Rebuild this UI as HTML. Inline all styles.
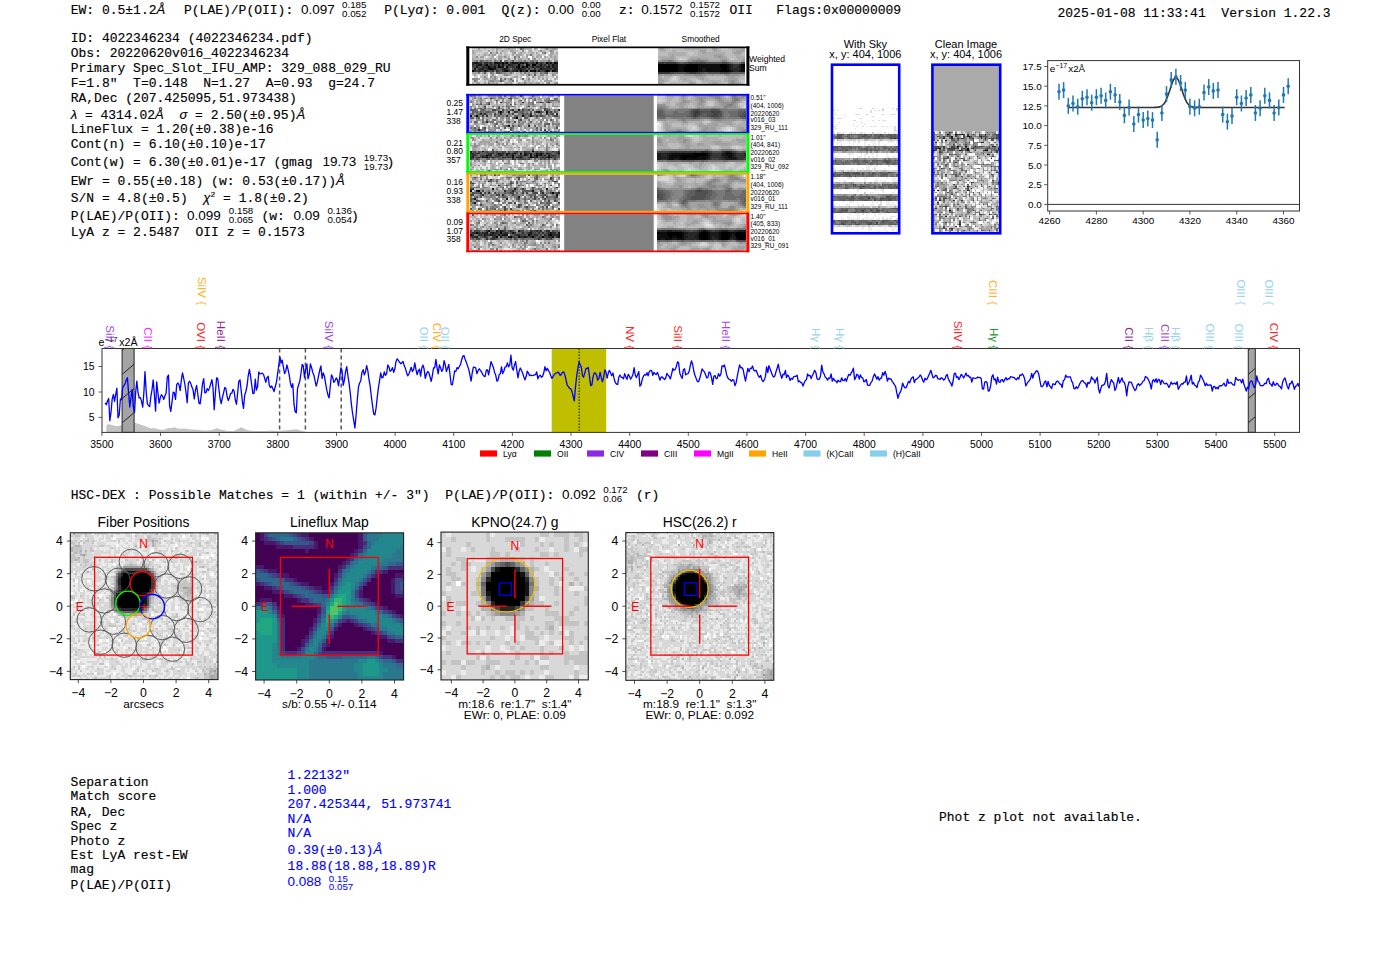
<!DOCTYPE html>
<html><head><meta charset="utf-8"><style>
body{margin:0;background:#fff;width:1400px;height:953px;overflow:hidden}
svg{display:block}
text{white-space:pre}
.m{font-family:"Liberation Mono",monospace;font-size:13px;stroke:#000;stroke-width:0.15px}
.s{font-family:"Liberation Sans",sans-serif;font-size:10.4px}
.i{font-family:"Liberation Sans",sans-serif;font-style:italic}
.sm{font-family:"Liberation Sans",sans-serif;font-size:8px}
</style></head><body>
<svg width="1400" height="953" viewBox="0 0 1400 953">
<text x="70.7" y="13.9" class="m">EW: 0.5±1.2<tspan class="i">Å</tspan></text>
<text x="184.0" y="13.9" class="m">P(LAE)/P(OII): </text>
<text x="301.0" y="13.9" class="s" style="font-size:13.5px;">0.097</text>
<text x="342.0" y="8.0" class="sm" style="font-size:9.8px;">0.185</text>
<text x="342.0" y="17.3" class="sm" style="font-size:9.8px;">0.052</text>
<text x="384.2" y="13.9" class="m">P(Ly<tspan class="i">α</tspan>): 0.001</text>
<text x="501.5" y="13.9" class="m">Q(z): </text>
<text x="547.8" y="13.9" class="s" style="font-size:13.5px;">0.00</text>
<text x="581.7" y="8.0" class="sm" style="font-size:9.8px;">0.00</text>
<text x="581.7" y="17.3" class="sm" style="font-size:9.8px;">0.00</text>
<text x="619.0" y="13.9" class="m">z: </text>
<text x="641.3" y="13.9" class="s" style="font-size:13.5px;">0.1572</text>
<text x="690.1" y="8.0" class="sm" style="font-size:9.8px;">0.1572</text>
<text x="690.1" y="17.3" class="sm" style="font-size:9.8px;">0.1572</text>
<text x="729.5" y="13.9" class="m">OII</text>
<text x="776.3" y="13.9" class="m">Flags:0x00000009</text>
<text x="1057.5" y="16.7" class="m">2025-01-08 11:33:41  Version 1.22.3</text>
<text x="70.7" y="42.1" class="m">ID: 4022346234 (4022346234.pdf)</text>
<text x="70.7" y="57.1" class="m">Obs: 20220620v016_4022346234</text>
<text x="70.7" y="72.1" class="m">Primary Spec_Slot_IFU_AMP: 329_088_029_RU</text>
<text x="70.7" y="87.1" class="m">F=1.8"  T=0.148  N=1.27  A=0.93  g=24.7</text>
<text x="70.7" y="102.1" class="m">RA,Dec (207.425095,51.973438)</text>
<text x="70.7" y="118.5" class="m"><tspan class="i">λ</tspan> = 4314.02<tspan class="i">Å</tspan>  <tspan class="i">σ</tspan> = 2.50(±0.95)<tspan class="i">Å</tspan></text>
<text x="70.7" y="133.2" class="m">LineFlux = 1.20(±0.38)e-16</text>
<text x="70.7" y="148.4" class="m">Cont(n) = 6.10(±0.10)e-17</text>
<text x="70.7" y="166.4" class="m">Cont(w) = 6.30(±0.01)e-17 (gmag </text>
<text x="70.7" y="184.8" class="m">EWr = 0.55(±0.18) (w: 0.53(±0.17))<tspan class="i">Å</tspan></text>
<text x="70.7" y="202.3" class="m">S/N = 4.8(±0.5)  <tspan class="i">χ</tspan><tspan font-size="8" dy="-5">2</tspan><tspan dy="5"> = 1.8(±0.2)</tspan></text>
<text x="70.7" y="219.6" class="m">P(LAE)/P(OII): </text>
<text x="70.7" y="236.1" class="m">LyA z = 2.5487  OII z = 0.1573</text>
<text x="322.5" y="166.4" class="s" style="font-size:13.5px;">19.73</text>
<text x="363.7" y="160.5" class="sm" style="font-size:9.8px;">19.73</text>
<text x="363.7" y="169.8" class="sm" style="font-size:9.8px;">19.73</text>
<text x="386.5" y="166.4" class="m">)</text>
<text x="187.0" y="219.6" class="s" style="font-size:13.5px;">0.099</text>
<text x="228.8" y="213.7" class="sm" style="font-size:9.8px;">0.158</text>
<text x="228.8" y="223.0" class="sm" style="font-size:9.8px;">0.065</text>
<text x="261.5" y="219.6" class="m">(w: </text>
<text x="293.5" y="219.6" class="s" style="font-size:13.5px;">0.09</text>
<text x="327.4" y="213.7" class="sm" style="font-size:9.8px;">0.136</text>
<text x="327.4" y="223.0" class="sm" style="font-size:9.8px;">0.054</text>
<text x="351.0" y="219.6" class="m">)</text>
<text x="70.7" y="498.9" class="m">HSC-DEX : Possible Matches = 1 (within +/- 3")  P(LAE)/P(OII): </text>
<text x="562.0" y="498.9" class="s" style="font-size:13.5px;">0.092</text>
<text x="603.2" y="493.0" class="sm" style="font-size:9.8px;">0.172</text>
<text x="603.2" y="502.3" class="sm" style="font-size:9.8px;">0.06</text>
<text x="636.0" y="498.9" class="m">(r)</text>
<text x="70.6" y="786.2" class="m">Separation</text>
<text x="70.6" y="800.4" class="m">Match score</text>
<text x="70.6" y="815.8" class="m">RA, Dec</text>
<text x="70.6" y="829.8" class="m">Spec z</text>
<text x="70.6" y="844.5" class="m">Photo z</text>
<text x="70.6" y="858.8" class="m">Est LyA rest-EW</text>
<text x="70.6" y="873.4" class="m">mag</text>
<text x="70.6" y="888.6" class="m">P(LAE)/P(OII)</text>
<text x="287.6" y="779.1" class="m" style="fill:#0000ff;stroke:#0000ff;">1.22132"</text>
<text x="287.6" y="793.5" class="m" style="fill:#0000ff;stroke:#0000ff;">1.000</text>
<text x="287.6" y="808.2" class="m" style="fill:#0000ff;stroke:#0000ff;">207.425344, 51.973741</text>
<text x="287.6" y="822.5" class="m" style="fill:#0000ff;stroke:#0000ff;">N/A</text>
<text x="287.6" y="837.4" class="m" style="fill:#0000ff;stroke:#0000ff;">N/A</text>
<text x="287.6" y="854.0" class="m" style="fill:#0000ff;stroke:#0000ff;">0.39(±0.13)<tspan class="i">Å</tspan></text>
<text x="287.6" y="869.9" class="m" style="fill:#0000ff;stroke:#0000ff;">18.88(18.88,18.89)R</text>
<text x="287.6" y="886.4" class="s" style="font-size:13.5px;fill:#0000ff;">0.088</text>
<text x="328.8" y="881.6" class="sm" style="font-size:9.8px;fill:#0000ff;">0.15</text>
<text x="328.8" y="890.0" class="sm" style="font-size:9.8px;fill:#0000ff;">0.057</text>
<text x="939.0" y="821.0" class="m">Phot z plot not available.</text>
<text x="515.2" y="42.0" class="s" text-anchor="middle" style="font-size:8.4px;">2D Spec</text>
<text x="608.9" y="42.0" class="s" text-anchor="middle" style="font-size:8.4px;">Pixel Flat</text>
<text x="700.7" y="42.0" class="s" text-anchor="middle" style="font-size:8.4px;">Smoothed</text>
<path d="M502.0 63.0h2.4M506.0 63.0h2.4M536.0 63.0h2.4M546.0 63.0h2.4M554.0 63.0h2.4M486.0 65.0h2.4M518.0 65.0h2.4M526.0 65.0h2.4M532.0 65.0h4.3M488.0 67.0h2.4M498.0 67.0h2.4M506.0 67.0h2.4M518.0 67.0h2.4M522.0 67.0h2.4M526.0 67.0h2.4M490.0 69.0h2.4M472.0 71.0h2.4M506.0 71.0h2.4M520.0 71.0h2.4M526.0 71.0h2.4M530.0 71.0h2.4M534.0 71.0h2.4M546.0 71.0h2.4M552.0 71.0h2.4" stroke="#000000" stroke-width="2.35" shape-rendering="crispEdges"/>
<path d="M474.0 63.0h4.3M494.0 63.0h6.3M512.0 63.0h6.3M520.0 63.0h4.3M526.0 63.0h2.4M550.0 63.0h2.4M556.0 63.0h2.0M478.0 65.0h4.3M498.0 65.0h2.4M502.0 65.0h2.4M508.0 65.0h2.4M528.0 65.0h2.4M540.0 65.0h2.4M552.0 65.0h2.4M476.0 67.0h2.4M494.0 67.0h2.4M500.0 67.0h4.3M516.0 67.0h2.4M532.0 67.0h2.4M548.0 67.0h2.4M552.0 67.0h2.4M474.0 69.0h2.4M482.0 69.0h2.4M488.0 69.0h2.4M492.0 69.0h4.3M504.0 69.0h2.4M518.0 69.0h4.3M540.0 69.0h2.4M554.0 69.0h2.4M484.0 71.0h2.4M504.0 71.0h2.4M516.0 71.0h2.4M532.0 71.0h2.4M538.0 71.0h2.4M548.0 71.0h2.4M554.0 71.0h2.4" stroke="#171717" stroke-width="2.35" shape-rendering="crispEdges"/>
<path d="M472.0 63.0h2.4M478.0 63.0h4.3M484.0 63.0h4.3M490.0 63.0h2.4M500.0 63.0h2.4M504.0 63.0h2.4M510.0 63.0h2.4M518.0 63.0h2.4M524.0 63.0h2.4M532.0 63.0h2.4M540.0 63.0h2.4M548.0 63.0h2.4M472.0 65.0h2.4M476.0 65.0h2.4M484.0 65.0h2.4M490.0 65.0h2.4M494.0 65.0h2.4M510.0 65.0h4.3M544.0 65.0h2.4M548.0 65.0h2.4M554.0 65.0h4.0M482.0 67.0h6.3M490.0 67.0h4.3M512.0 67.0h2.4M524.0 67.0h2.4M536.0 67.0h8.3M546.0 67.0h2.4M554.0 67.0h4.0M478.0 69.0h4.3M486.0 69.0h2.4M502.0 69.0h2.4M506.0 69.0h2.4M514.0 69.0h4.3M522.0 69.0h4.3M528.0 69.0h2.4M534.0 69.0h2.4M542.0 69.0h10.3M556.0 69.0h2.0M474.0 71.0h2.4M478.0 71.0h4.3M486.0 71.0h2.4M492.0 71.0h2.4M496.0 71.0h2.4M502.0 71.0h2.4M508.0 71.0h2.4M512.0 71.0h4.3M522.0 71.0h4.3M544.0 71.0h2.4M556.0 71.0h2.0" stroke="#2e2e2e" stroke-width="2.35" shape-rendering="crispEdges"/>
<path d="M500.0 61.0h2.4M488.0 63.0h2.4M528.0 63.0h4.3M534.0 63.0h2.4M538.0 63.0h2.4M542.0 63.0h2.4M552.0 63.0h2.4M474.0 65.0h2.4M482.0 65.0h2.4M488.0 65.0h2.4M492.0 65.0h2.4M496.0 65.0h2.4M500.0 65.0h2.4M504.0 65.0h4.3M514.0 65.0h4.3M520.0 65.0h4.3M536.0 65.0h4.3M542.0 65.0h2.4M550.0 65.0h2.4M472.0 67.0h4.3M478.0 67.0h4.3M496.0 67.0h2.4M508.0 67.0h4.3M514.0 67.0h2.4M520.0 67.0h2.4M528.0 67.0h4.3M534.0 67.0h2.4M544.0 67.0h2.4M550.0 67.0h2.4M484.0 69.0h2.4M496.0 69.0h2.4M500.0 69.0h2.4M508.0 69.0h2.4M512.0 69.0h2.4M538.0 69.0h2.4M552.0 69.0h2.4M476.0 71.0h2.4M482.0 71.0h2.4M488.0 71.0h4.3M498.0 71.0h2.4M510.0 71.0h2.4M518.0 71.0h2.4M536.0 71.0h2.4M540.0 71.0h4.3" stroke="#464646" stroke-width="2.35" shape-rendering="crispEdges"/>
<path d="M480.0 61.0h2.4M512.0 61.0h2.4M482.0 63.0h2.4M492.0 63.0h2.4M508.0 63.0h2.4M544.0 63.0h2.4M530.0 65.0h2.4M546.0 65.0h2.4M472.0 69.0h2.4M476.0 69.0h2.4M498.0 69.0h2.4M526.0 69.0h2.4M530.0 69.0h4.3M536.0 69.0h2.4M500.0 71.0h2.4M550.0 71.0h2.4M484.0 73.0h2.4M496.0 73.0h4.3M546.0 73.0h2.4M534.0 75.0h2.4M500.0 81.0h2.4" stroke="#5d5d5d" stroke-width="2.35" shape-rendering="crispEdges"/>
<path d="M520.0 49.0h2.4M490.0 53.0h2.4M544.0 53.0h2.4M530.0 55.0h2.4M514.0 57.0h2.4M476.0 61.0h2.4M482.0 61.0h2.4M486.0 61.0h2.4M494.0 61.0h2.4M504.0 61.0h4.3M524.0 61.0h2.4M530.0 61.0h4.3M536.0 61.0h2.4M548.0 61.0h2.4M524.0 65.0h2.4M504.0 67.0h2.4M510.0 69.0h2.4M494.0 71.0h2.4M528.0 71.0h2.4M478.0 73.0h2.4M490.0 73.0h2.4M500.0 73.0h2.4M510.0 73.0h2.4M524.0 73.0h2.4M534.0 73.0h2.4M540.0 73.0h2.4M544.0 73.0h2.4M528.0 75.0h2.4M500.0 79.0h2.4M504.0 79.0h2.4M510.0 79.0h2.4M522.0 79.0h2.4M474.0 81.0h2.4M512.0 81.0h2.4" stroke="#747474" stroke-width="2.35" shape-rendering="crispEdges"/>
<path d="M522.0 49.0h2.4M546.0 49.0h2.4M522.0 51.0h2.4M540.0 51.0h2.4M550.0 51.0h2.4M496.0 53.0h2.4M514.0 53.0h2.4M542.0 53.0h2.4M476.0 57.0h2.4M504.0 57.0h2.4M518.0 57.0h2.4M508.0 59.0h2.4M514.0 59.0h2.4M528.0 59.0h2.4M534.0 59.0h2.4M474.0 61.0h2.4M484.0 61.0h2.4M488.0 61.0h4.3M496.0 61.0h2.4M510.0 61.0h2.4M518.0 61.0h4.3M534.0 61.0h2.4M554.0 61.0h4.0M492.0 73.0h2.4M502.0 73.0h4.3M520.0 73.0h2.4M528.0 73.0h2.4M542.0 73.0h2.4M556.0 73.0h2.0M492.0 75.0h2.4M504.0 75.0h4.3M540.0 75.0h4.3M552.0 75.0h2.4M484.0 77.0h2.4M490.0 77.0h2.4M494.0 77.0h2.4M532.0 77.0h2.4M472.0 79.0h6.3M494.0 79.0h2.4M528.0 79.0h2.4M490.0 81.0h4.3M502.0 81.0h2.4M488.0 83.0h2.4M524.0 83.0h2.4M548.0 83.0h2.4M556.0 83.0h2.0" stroke="#8b8b8b" stroke-width="2.35" shape-rendering="crispEdges"/>
<path d="M478.0 49.0h2.4M496.0 49.0h2.4M508.0 49.0h2.4M534.0 49.0h2.4M552.0 49.0h4.3M472.0 51.0h2.4M488.0 51.0h2.4M496.0 51.0h2.4M502.0 51.0h2.4M510.0 51.0h4.3M530.0 51.0h2.4M552.0 51.0h2.4M472.0 53.0h2.4M500.0 53.0h2.4M512.0 53.0h2.4M520.0 53.0h2.4M532.0 53.0h2.4M536.0 53.0h2.4M550.0 53.0h4.3M556.0 53.0h2.0M484.0 55.0h2.4M488.0 55.0h2.4M492.0 55.0h4.3M512.0 55.0h2.4M516.0 55.0h6.3M526.0 55.0h2.4M538.0 55.0h2.4M550.0 55.0h2.4M480.0 57.0h4.3M492.0 57.0h2.4M498.0 57.0h4.3M526.0 57.0h2.4M532.0 57.0h2.4M536.0 57.0h2.4M540.0 57.0h2.4M544.0 57.0h2.4M550.0 57.0h2.4M554.0 57.0h2.4M472.0 59.0h2.4M490.0 59.0h2.4M494.0 59.0h2.4M498.0 59.0h4.3M518.0 59.0h4.3M532.0 59.0h2.4M548.0 59.0h2.4M554.0 59.0h2.4M472.0 61.0h2.4M478.0 61.0h2.4M498.0 61.0h2.4M508.0 61.0h2.4M514.0 61.0h4.3M522.0 61.0h2.4M526.0 61.0h4.3M540.0 61.0h8.3M550.0 61.0h2.4M472.0 73.0h6.3M482.0 73.0h2.4M506.0 73.0h4.3M512.0 73.0h2.4M526.0 73.0h2.4M532.0 73.0h2.4M536.0 73.0h2.4M552.0 73.0h4.3M474.0 75.0h2.4M508.0 75.0h2.4M522.0 75.0h2.4M526.0 75.0h2.4M530.0 75.0h2.4M546.0 75.0h2.4M554.0 75.0h2.4M514.0 77.0h4.3M538.0 77.0h2.4M556.0 77.0h2.0M478.0 79.0h2.4M484.0 79.0h4.3M492.0 79.0h2.4M508.0 79.0h2.4M538.0 79.0h2.4M542.0 79.0h2.4M546.0 79.0h2.4M554.0 79.0h2.4M476.0 81.0h2.4M488.0 81.0h2.4M494.0 81.0h6.3M508.0 81.0h4.3M516.0 81.0h2.4M524.0 81.0h2.4M528.0 81.0h2.4M544.0 81.0h8.3M476.0 83.0h4.3M484.0 83.0h2.4M492.0 83.0h2.4M496.0 83.0h2.4M506.0 83.0h2.4M510.0 83.0h2.4M518.0 83.0h2.4M530.0 83.0h2.4M536.0 83.0h4.3M546.0 83.0h2.4M554.0 83.0h2.4" stroke="#a2a2a2" stroke-width="2.35" shape-rendering="crispEdges"/>
<path d="M484.0 49.0h2.4M492.0 49.0h2.4M498.0 49.0h4.3M504.0 49.0h4.3M510.0 49.0h6.3M524.0 49.0h8.3M536.0 49.0h2.4M544.0 49.0h2.4M548.0 49.0h4.3M556.0 49.0h2.0M474.0 51.0h8.3M492.0 51.0h2.4M500.0 51.0h2.4M504.0 51.0h4.3M514.0 51.0h4.3M528.0 51.0h2.4M538.0 51.0h2.4M542.0 51.0h4.3M548.0 51.0h2.4M474.0 53.0h2.4M484.0 53.0h4.3M492.0 53.0h4.3M504.0 53.0h2.4M518.0 53.0h2.4M522.0 53.0h4.3M528.0 53.0h4.3M472.0 55.0h4.3M478.0 55.0h2.4M482.0 55.0h2.4M486.0 55.0h2.4M490.0 55.0h2.4M498.0 55.0h4.3M504.0 55.0h4.3M522.0 55.0h2.4M528.0 55.0h2.4M532.0 55.0h2.4M536.0 55.0h2.4M540.0 55.0h2.4M548.0 55.0h2.4M552.0 55.0h6.0M472.0 57.0h4.3M490.0 57.0h2.4M502.0 57.0h2.4M506.0 57.0h4.3M516.0 57.0h2.4M522.0 57.0h2.4M538.0 57.0h2.4M546.0 57.0h2.4M552.0 57.0h2.4M556.0 57.0h2.0M474.0 59.0h10.3M486.0 59.0h4.3M492.0 59.0h2.4M506.0 59.0h2.4M522.0 59.0h6.3M538.0 59.0h2.4M542.0 59.0h4.3M552.0 59.0h2.4M556.0 59.0h2.0M492.0 61.0h2.4M538.0 61.0h2.4M480.0 73.0h2.4M486.0 73.0h2.4M494.0 73.0h2.4M516.0 73.0h4.3M522.0 73.0h2.4M530.0 73.0h2.4M538.0 73.0h2.4M548.0 73.0h4.3M482.0 75.0h6.3M490.0 75.0h2.4M502.0 75.0h2.4M510.0 75.0h2.4M516.0 75.0h2.4M520.0 75.0h2.4M532.0 75.0h2.4M536.0 75.0h4.3M544.0 75.0h2.4M480.0 77.0h4.3M486.0 77.0h2.4M492.0 77.0h2.4M496.0 77.0h2.4M500.0 77.0h2.4M512.0 77.0h2.4M520.0 77.0h2.4M526.0 77.0h4.3M534.0 77.0h2.4M540.0 77.0h4.3M546.0 77.0h2.4M552.0 77.0h2.4M482.0 79.0h2.4M488.0 79.0h4.3M496.0 79.0h2.4M502.0 79.0h2.4M506.0 79.0h2.4M512.0 79.0h2.4M516.0 79.0h2.4M520.0 79.0h2.4M526.0 79.0h2.4M534.0 79.0h2.4M556.0 79.0h2.0M484.0 81.0h2.4M504.0 81.0h2.4M526.0 81.0h2.4M532.0 81.0h2.4M540.0 81.0h2.4M472.0 83.0h2.4M490.0 83.0h2.4M494.0 83.0h2.4M504.0 83.0h2.4M508.0 83.0h2.4M520.0 83.0h4.3M526.0 83.0h4.3M532.0 83.0h4.3M542.0 83.0h2.4" stroke="#b9b9b9" stroke-width="2.35" shape-rendering="crispEdges"/>
<path d="M472.0 49.0h6.3M480.0 49.0h4.3M486.0 49.0h6.3M494.0 49.0h2.4M502.0 49.0h2.4M518.0 49.0h2.4M540.0 49.0h4.3M482.0 51.0h6.3M490.0 51.0h2.4M494.0 51.0h2.4M498.0 51.0h2.4M508.0 51.0h2.4M518.0 51.0h4.3M524.0 51.0h2.4M532.0 51.0h6.3M546.0 51.0h2.4M554.0 51.0h4.0M476.0 53.0h8.3M498.0 53.0h2.4M502.0 53.0h2.4M506.0 53.0h2.4M510.0 53.0h2.4M526.0 53.0h2.4M534.0 53.0h2.4M538.0 53.0h2.4M546.0 53.0h2.4M554.0 53.0h2.4M476.0 55.0h2.4M480.0 55.0h2.4M502.0 55.0h2.4M508.0 55.0h4.3M514.0 55.0h2.4M534.0 55.0h2.4M542.0 55.0h4.3M478.0 57.0h2.4M484.0 57.0h2.4M488.0 57.0h2.4M496.0 57.0h2.4M512.0 57.0h2.4M524.0 57.0h2.4M534.0 57.0h2.4M548.0 57.0h2.4M484.0 59.0h2.4M496.0 59.0h2.4M502.0 59.0h4.3M510.0 59.0h4.3M516.0 59.0h2.4M536.0 59.0h2.4M540.0 59.0h2.4M546.0 59.0h2.4M550.0 59.0h2.4M552.0 61.0h2.4M488.0 73.0h2.4M514.0 73.0h2.4M472.0 75.0h2.4M476.0 75.0h2.4M480.0 75.0h2.4M494.0 75.0h2.4M498.0 75.0h4.3M512.0 75.0h4.3M518.0 75.0h2.4M524.0 75.0h2.4M550.0 75.0h2.4M556.0 75.0h2.0M474.0 77.0h4.3M498.0 77.0h2.4M502.0 77.0h6.3M510.0 77.0h2.4M518.0 77.0h2.4M536.0 77.0h2.4M544.0 77.0h2.4M548.0 77.0h4.3M524.0 79.0h2.4M530.0 79.0h4.3M536.0 79.0h2.4M540.0 79.0h2.4M544.0 79.0h2.4M550.0 79.0h2.4M472.0 81.0h2.4M480.0 81.0h4.3M486.0 81.0h2.4M506.0 81.0h2.4M522.0 81.0h2.4M530.0 81.0h2.4M534.0 81.0h4.3M552.0 81.0h4.3M474.0 83.0h2.4M480.0 83.0h4.3M486.0 83.0h2.4M498.0 83.0h4.3M512.0 83.0h2.4M516.0 83.0h2.4M540.0 83.0h2.4M550.0 83.0h4.3" stroke="#d1d1d1" stroke-width="2.35" shape-rendering="crispEdges"/>
<path d="M516.0 49.0h2.4M526.0 51.0h2.4M488.0 53.0h2.4M508.0 53.0h2.4M516.0 53.0h2.4M540.0 53.0h2.4M496.0 55.0h2.4M524.0 55.0h2.4M486.0 57.0h2.4M510.0 57.0h2.4M520.0 57.0h2.4M502.0 61.0h2.4M478.0 75.0h2.4M548.0 75.0h2.4M508.0 77.0h2.4M530.0 77.0h2.4M554.0 77.0h2.4M480.0 79.0h2.4M498.0 79.0h2.4M518.0 79.0h2.4M548.0 79.0h2.4M552.0 79.0h2.4M478.0 81.0h2.4M518.0 81.0h4.3M538.0 81.0h2.4M542.0 81.0h2.4M556.0 81.0h2.0M502.0 83.0h2.4M514.0 83.0h2.4M544.0 83.0h2.4" stroke="#e8e8e8" stroke-width="2.35" shape-rendering="crispEdges"/>
<path d="M532.0 49.0h2.4M538.0 49.0h2.4M548.0 53.0h2.4M546.0 55.0h2.4M494.0 57.0h2.4M528.0 57.0h4.3M542.0 57.0h2.4M530.0 59.0h2.4M488.0 75.0h2.4M496.0 75.0h2.4M472.0 77.0h2.4M478.0 77.0h2.4M488.0 77.0h2.4M522.0 77.0h4.3M514.0 79.0h2.4M514.0 81.0h2.4" stroke="#ffffff" stroke-width="2.35" shape-rendering="crispEdges"/>
<path d="M658.0 65.0h20.1M685.7 65.0h12.2M719.3 65.0h8.3M743.0 65.0h2.0M658.0 67.0h20.1M683.7 67.0h14.2M719.3 67.0h8.3M743.0 67.0h2.0M658.0 69.0h20.1M683.7 69.0h14.2M721.3 69.0h6.3M658.0 71.0h20.1M683.7 71.0h14.2M719.3 71.0h10.2" stroke="#000000" stroke-width="2.35" shape-rendering="crispEdges"/>
<path d="M677.8 65.0h8.3M697.5 65.0h22.1M727.2 65.0h2.3M741.0 65.0h2.3M677.8 67.0h6.3M697.5 67.0h22.1M727.2 67.0h2.3M741.0 67.0h2.3M677.8 69.0h6.3M697.5 69.0h4.3M705.5 69.0h16.2M727.2 69.0h2.3M741.0 69.0h4.0M677.8 71.0h6.3M697.5 71.0h4.3M705.5 71.0h14.2M729.2 71.0h2.3M741.0 71.0h4.0" stroke="#0d0d0d" stroke-width="2.35" shape-rendering="crispEdges"/>
<path d="M729.2 65.0h2.3M739.1 65.0h2.3M729.2 67.0h2.3M739.1 67.0h2.3M701.5 69.0h4.3M729.2 69.0h2.3M739.1 69.0h2.3M701.5 71.0h4.3M731.2 71.0h2.3M739.1 71.0h2.3" stroke="#1b1b1b" stroke-width="2.35" shape-rendering="crispEdges"/>
<path d="M731.2 65.0h2.3M731.2 67.0h2.3M737.1 67.0h2.3M731.2 69.0h8.3M733.1 71.0h6.3" stroke="#282828" stroke-width="2.35" shape-rendering="crispEdges"/>
<path d="M658.0 63.0h6.3M665.9 63.0h10.2M733.1 65.0h6.3M733.1 67.0h4.3M658.0 73.0h12.2M689.6 73.0h6.3M725.2 73.0h2.3" stroke="#363636" stroke-width="2.35" shape-rendering="crispEdges"/>
<path d="M663.9 63.0h2.3M675.8 63.0h2.3M687.7 63.0h18.1M721.3 63.0h6.3M743.0 63.0h2.0M669.9 73.0h4.3M685.7 73.0h4.3M695.6 73.0h4.3M719.3 73.0h6.3M727.2 73.0h2.3" stroke="#434343" stroke-width="2.35" shape-rendering="crispEdges"/>
<path d="M677.8 63.0h2.3M683.7 63.0h4.3M705.5 63.0h16.2M727.2 63.0h2.3M741.0 63.0h2.3M673.8 73.0h12.2M699.5 73.0h4.3M707.4 73.0h12.2M729.2 73.0h2.3" stroke="#515151" stroke-width="2.35" shape-rendering="crispEdges"/>
<path d="M679.8 63.0h4.3M729.2 63.0h2.3M703.5 73.0h4.3M731.2 73.0h13.8" stroke="#5e5e5e" stroke-width="2.35" shape-rendering="crispEdges"/>
<path d="M731.2 63.0h2.3M739.1 63.0h2.3" stroke="#6b6b6b" stroke-width="2.35" shape-rendering="crispEdges"/>
<path d="M667.9 61.0h4.3M695.6 61.0h8.3M733.1 63.0h6.3" stroke="#797979" stroke-width="2.35" shape-rendering="crispEdges"/>
<path d="M662.0 61.0h6.3M671.8 61.0h2.3M691.6 61.0h4.3M703.5 61.0h4.3M721.3 61.0h6.3M693.6 75.0h8.3M725.2 75.0h4.3M731.2 83.0h2.3" stroke="#868686" stroke-width="2.35" shape-rendering="crispEdges"/>
<path d="M713.4 49.0h2.3M717.3 57.0h4.3M697.5 59.0h2.3M658.0 61.0h4.3M673.8 61.0h2.3M687.7 61.0h4.3M707.4 61.0h2.3M719.3 61.0h2.3M743.0 61.0h2.0M658.0 75.0h4.3M663.9 75.0h8.3M683.7 75.0h10.2M701.5 75.0h4.3M711.4 75.0h2.3M723.2 75.0h2.3M729.2 75.0h10.2M729.2 81.0h6.3M729.2 83.0h2.3M733.1 83.0h2.3" stroke="#949494" stroke-width="2.35" shape-rendering="crispEdges"/>
<path d="M660.0 49.0h4.3M711.4 49.0h2.3M715.3 49.0h2.3M741.0 49.0h4.0M699.5 51.0h6.3M713.4 51.0h4.3M735.1 51.0h9.9M701.5 53.0h4.3M733.1 53.0h8.3M671.8 55.0h2.3M713.4 55.0h10.2M669.9 57.0h4.3M713.4 57.0h4.3M721.3 57.0h4.3M662.0 59.0h12.2M689.6 59.0h8.3M699.5 59.0h10.2M719.3 59.0h8.3M743.0 59.0h2.0M675.8 61.0h2.3M685.7 61.0h2.3M709.4 61.0h10.2M727.2 61.0h2.3M741.0 61.0h2.3M662.0 75.0h2.3M671.8 75.0h12.2M705.5 75.0h6.3M713.4 75.0h10.2M739.1 75.0h5.9M658.0 77.0h2.3M695.6 77.0h8.3M727.2 77.0h8.3M658.0 79.0h4.3M683.7 79.0h2.3M699.5 79.0h4.3M727.2 79.0h10.2M658.0 81.0h6.3M727.2 81.0h2.3M735.1 81.0h2.3M658.0 83.0h4.3M689.6 83.0h4.3M711.4 83.0h6.3M727.2 83.0h2.3M735.1 83.0h4.3" stroke="#a1a1a1" stroke-width="2.35" shape-rendering="crispEdges"/>
<path d="M658.0 49.0h2.3M663.9 49.0h2.3M683.7 49.0h24.1M717.3 49.0h2.3M731.2 49.0h10.2M660.0 51.0h6.3M671.8 51.0h4.3M697.5 51.0h2.3M705.5 51.0h2.3M711.4 51.0h2.3M717.3 51.0h4.3M731.2 51.0h4.3M667.9 53.0h18.1M697.5 53.0h4.3M705.5 53.0h20.1M731.2 53.0h2.3M741.0 53.0h2.3M667.9 55.0h4.3M673.8 55.0h12.2M697.5 55.0h16.2M723.2 55.0h2.3M733.1 55.0h8.3M658.0 57.0h12.2M673.8 57.0h2.3M689.6 57.0h24.1M725.2 57.0h2.3M735.1 57.0h9.9M660.0 59.0h2.3M673.8 59.0h2.3M687.7 59.0h2.3M709.4 59.0h10.2M727.2 59.0h2.3M737.1 59.0h6.3M677.8 61.0h8.3M729.2 61.0h12.2M660.0 77.0h2.3M663.9 77.0h6.3M679.8 77.0h16.2M703.5 77.0h4.3M725.2 77.0h2.3M735.1 77.0h6.3M662.0 79.0h6.3M679.8 79.0h4.3M685.7 79.0h4.3M697.5 79.0h2.3M703.5 79.0h6.3M723.2 79.0h4.3M737.1 79.0h2.3M663.9 81.0h4.3M681.7 81.0h10.2M701.5 81.0h20.1M723.2 81.0h4.3M737.1 81.0h2.3M662.0 83.0h2.3M687.7 83.0h2.3M693.6 83.0h2.3M707.4 83.0h4.3M717.3 83.0h4.3M739.1 83.0h2.3" stroke="#aeaeae" stroke-width="2.35" shape-rendering="crispEdges"/>
<path d="M665.9 49.0h4.3M671.8 49.0h12.2M707.4 49.0h4.3M719.3 49.0h2.3M727.2 49.0h4.3M658.0 51.0h2.3M665.9 51.0h6.3M675.8 51.0h22.1M707.4 51.0h4.3M721.3 51.0h10.2M658.0 53.0h10.2M685.7 53.0h2.3M693.6 53.0h4.3M725.2 53.0h6.3M743.0 53.0h2.0M658.0 55.0h10.2M685.7 55.0h4.3M691.6 55.0h6.3M725.2 55.0h8.3M741.0 55.0h4.0M675.8 57.0h14.2M727.2 57.0h8.3M658.0 59.0h2.3M675.8 59.0h2.3M685.7 59.0h2.3M729.2 59.0h2.3M733.1 59.0h4.3M662.0 77.0h2.3M669.9 77.0h2.3M677.8 77.0h2.3M707.4 77.0h18.1M741.0 77.0h4.0M667.9 79.0h2.3M677.8 79.0h2.3M689.6 79.0h8.3M709.4 79.0h14.2M739.1 79.0h5.9M667.9 81.0h2.3M677.8 81.0h4.3M691.6 81.0h4.3M699.5 81.0h2.3M721.3 81.0h2.3M739.1 81.0h2.3M663.9 83.0h2.3M669.9 83.0h18.1M701.5 83.0h6.3M721.3 83.0h6.3M741.0 83.0h2.3" stroke="#bcbcbc" stroke-width="2.35" shape-rendering="crispEdges"/>
<path d="M669.9 49.0h2.3M721.3 49.0h6.3M687.7 53.0h6.3M689.6 55.0h2.3M677.8 59.0h2.3M681.7 59.0h4.3M731.2 59.0h2.3M671.8 77.0h2.3M675.8 77.0h2.3M669.9 79.0h2.3M675.8 79.0h2.3M669.9 81.0h8.3M695.6 81.0h4.3M741.0 81.0h4.0M665.9 83.0h4.3M695.6 83.0h6.3M743.0 83.0h2.0" stroke="#c9c9c9" stroke-width="2.35" shape-rendering="crispEdges"/>
<path d="M679.8 59.0h2.3M673.8 77.0h2.3M671.8 79.0h4.3" stroke="#d7d7d7" stroke-width="2.35" shape-rendering="crispEdges"/>
<rect x="466.3" y="46.5" width="283.1" height="1.7" fill="#000"/>
<rect x="466.3" y="83.9" width="283.1" height="1.7" fill="#000"/>
<rect x="466.3" y="46.5" width="3.0" height="39.1" fill="#000"/>
<rect x="746.4" y="46.5" width="3.0" height="39.1" fill="#000"/>
<text x="749.0" y="61.5" class="s" style="font-size:8.6px;">Weighted</text>
<text x="749.0" y="70.5" class="s" style="font-size:8.6px;">Sum</text>
<path d="M545.9 112.3h2.4M475.6 116.2h2.4M521.8 116.2h2.4M515.8 118.2h2.4" stroke="#000000" stroke-width="2.32" shape-rendering="crispEdges"/>
<path d="M547.9 102.4h2.4M517.8 110.3h2.4M499.7 112.3h2.4M507.8 112.3h2.4M537.9 112.3h2.4M469.6 116.2h2.4M529.9 116.2h2.4M507.8 126.1h2.4" stroke="#171717" stroke-width="2.32" shape-rendering="crispEdges"/>
<path d="M499.7 102.4h2.4M521.8 102.4h2.4M539.9 102.4h2.4M511.8 110.3h2.4M558.0 110.3h2.0M497.7 112.3h2.4M513.8 112.3h2.4M535.9 112.3h2.4M479.6 114.2h2.4M483.7 114.2h2.4M499.7 114.2h2.4M529.9 114.2h2.4M545.9 114.2h2.4M556.0 114.2h2.4M485.7 116.2h2.4M505.8 116.2h2.4M485.7 122.1h2.4M527.9 126.1h2.4M477.6 130.0h2.4" stroke="#2e2e2e" stroke-width="2.32" shape-rendering="crispEdges"/>
<path d="M519.8 96.5h2.4M489.7 98.5h2.4M509.8 98.5h2.4M487.7 104.4h2.4M483.7 106.4h2.4M527.9 106.4h2.4M497.7 108.3h2.4M543.9 108.3h2.4M491.7 110.3h4.4M501.7 110.3h2.4M521.8 110.3h2.4M527.9 110.3h2.4M543.9 110.3h2.4M515.8 112.3h2.4M539.9 112.3h2.4M550.0 112.3h2.4M493.7 114.2h2.4M511.8 114.2h2.4M521.8 114.2h2.4M552.0 114.2h2.4M481.7 116.2h2.4M535.9 116.2h2.4M539.9 116.2h2.4M554.0 116.2h4.4M513.8 118.2h2.4M519.8 120.2h2.4M513.8 122.1h2.4M483.7 128.1h2.4M543.9 130.0h2.4M545.9 132.0h2.4M550.0 132.0h2.4" stroke="#464646" stroke-width="2.32" shape-rendering="crispEdges"/>
<path d="M503.8 96.5h2.4M531.9 96.5h2.4M507.8 98.5h2.4M529.9 98.5h2.4M554.0 98.5h2.4M495.7 100.4h2.4M519.8 100.4h2.4M533.9 100.4h2.4M550.0 100.4h4.4M487.7 102.4h2.4M541.9 102.4h2.4M545.9 102.4h2.4M475.6 104.4h2.4M479.6 104.4h2.4M509.8 104.4h2.4M491.7 106.4h2.4M497.7 106.4h2.4M505.8 106.4h2.4M511.8 106.4h2.4M539.9 106.4h2.4M479.6 108.3h2.4M483.7 108.3h2.4M469.6 110.3h6.4M481.7 110.3h2.4M509.8 110.3h2.4M531.9 110.3h2.4M545.9 110.3h4.4M471.6 112.3h2.4M475.6 112.3h2.4M479.6 112.3h2.4M485.7 112.3h4.4M501.7 112.3h2.4M519.8 112.3h4.4M529.9 112.3h2.4M533.9 112.3h2.4M554.0 112.3h2.4M471.6 114.2h2.4M477.6 114.2h2.4M481.7 114.2h2.4M507.8 114.2h2.4M525.8 114.2h2.4M539.9 114.2h2.4M550.0 114.2h2.4M473.6 116.2h2.4M493.7 116.2h2.4M497.7 116.2h2.4M513.8 116.2h4.4M523.8 116.2h2.4M527.9 116.2h2.4M531.9 116.2h2.4M541.9 116.2h2.4M469.6 118.2h4.4M477.6 118.2h2.4M523.8 118.2h4.4M550.0 120.2h2.4M473.6 122.1h2.4M507.8 122.1h2.4M529.9 122.1h2.4M495.7 124.1h2.4M545.9 124.1h4.4M505.8 126.1h2.4M511.8 126.1h2.4M517.8 126.1h2.4M533.9 126.1h2.4M543.9 126.1h2.4M473.6 128.1h2.4M503.8 128.1h2.4M509.8 128.1h2.4M535.9 128.1h2.4M556.0 128.1h2.4M509.8 130.0h2.4M539.9 130.0h2.4" stroke="#5d5d5d" stroke-width="2.32" shape-rendering="crispEdges"/>
<path d="M469.6 96.5h2.4M497.7 96.5h4.4M509.8 96.5h4.4M473.6 98.5h2.4M479.6 98.5h2.4M491.7 98.5h2.4M499.7 98.5h4.4M515.8 98.5h2.4M533.9 98.5h2.4M547.9 98.5h2.4M556.0 98.5h2.4M509.8 100.4h2.4M543.9 100.4h6.4M554.0 100.4h4.4M469.6 102.4h2.4M479.6 102.4h2.4M527.9 102.4h2.4M531.9 102.4h2.4M535.9 102.4h4.4M485.7 104.4h2.4M513.8 104.4h2.4M519.8 104.4h2.4M531.9 104.4h2.4M469.6 106.4h2.4M507.8 106.4h2.4M473.6 108.3h2.4M477.6 108.3h2.4M507.8 108.3h2.4M545.9 108.3h2.4M475.6 110.3h2.4M479.6 110.3h2.4M483.7 110.3h2.4M495.7 110.3h4.4M505.8 110.3h2.4M523.8 110.3h4.4M554.0 110.3h2.4M473.6 112.3h2.4M481.7 112.3h4.4M489.7 112.3h4.4M505.8 112.3h2.4M517.8 112.3h2.4M525.8 112.3h2.4M541.9 112.3h2.4M547.9 112.3h2.4M556.0 112.3h2.4M469.6 114.2h2.4M475.6 114.2h2.4M485.7 114.2h2.4M489.7 114.2h2.4M497.7 114.2h2.4M517.8 114.2h4.4M523.8 114.2h2.4M527.9 114.2h2.4M533.9 114.2h2.4M547.9 114.2h2.4M477.6 116.2h2.4M501.7 116.2h2.4M533.9 116.2h2.4M537.9 116.2h2.4M543.9 116.2h2.4M547.9 116.2h2.4M552.0 116.2h2.4M475.6 118.2h2.4M481.7 118.2h2.4M495.7 118.2h2.4M507.8 118.2h2.4M511.8 118.2h2.4M535.9 118.2h2.4M481.7 120.2h2.4M485.7 120.2h2.4M491.7 120.2h4.4M517.8 120.2h2.4M527.9 120.2h2.4M545.9 120.2h2.4M475.6 122.1h2.4M481.7 122.1h2.4M489.7 122.1h4.4M499.7 122.1h2.4M505.8 122.1h2.4M517.8 122.1h2.4M539.9 122.1h2.4M493.7 124.1h2.4M527.9 124.1h2.4M543.9 124.1h2.4M552.0 124.1h2.4M558.0 124.1h2.0M493.7 126.1h2.4M503.8 126.1h2.4M556.0 126.1h2.4M469.6 128.1h2.4M477.6 128.1h2.4M481.7 128.1h2.4M497.7 128.1h2.4M511.8 128.1h2.4M539.9 128.1h2.4M473.6 130.0h4.4M479.6 130.0h6.4M535.9 130.0h2.4M547.9 130.0h2.4M483.7 132.0h2.4M487.7 132.0h2.4M491.7 132.0h2.4M507.8 132.0h2.4M517.8 132.0h2.4M523.8 132.0h2.4M554.0 132.0h2.4" stroke="#747474" stroke-width="2.32" shape-rendering="crispEdges"/>
<path d="M471.6 96.5h4.4M487.7 96.5h8.4M513.8 96.5h2.4M521.8 96.5h2.4M550.0 96.5h4.4M558.0 96.5h2.0M483.7 98.5h4.4M493.7 98.5h2.4M497.7 98.5h2.4M513.8 98.5h2.4M521.8 98.5h4.4M527.9 98.5h2.4M537.9 98.5h2.4M545.9 98.5h2.4M469.6 100.4h2.4M479.6 100.4h2.4M501.7 100.4h2.4M517.8 100.4h2.4M523.8 100.4h2.4M531.9 100.4h2.4M558.0 100.4h2.0M485.7 102.4h2.4M495.7 102.4h2.4M501.7 102.4h8.4M513.8 102.4h2.4M529.9 102.4h2.4M550.0 102.4h2.4M558.0 102.4h2.0M471.6 104.4h2.4M477.6 104.4h2.4M483.7 104.4h2.4M505.8 104.4h2.4M527.9 104.4h4.4M543.9 104.4h2.4M501.7 106.4h2.4M509.8 106.4h2.4M525.8 106.4h2.4M531.9 106.4h4.4M543.9 106.4h2.4M552.0 106.4h6.4M469.6 108.3h2.4M481.7 108.3h2.4M487.7 108.3h4.4M495.7 108.3h2.4M499.7 108.3h2.4M521.8 108.3h4.4M529.9 108.3h2.4M539.9 108.3h4.4M487.7 110.3h2.4M503.8 110.3h2.4M507.8 110.3h2.4M515.8 110.3h2.4M519.8 110.3h2.4M535.9 110.3h6.4M556.0 110.3h2.4M477.6 112.3h2.4M493.7 112.3h2.4M511.8 112.3h2.4M523.8 112.3h2.4M552.0 112.3h2.4M487.7 114.2h2.4M495.7 114.2h2.4M501.7 114.2h4.4M509.8 114.2h2.4M537.9 114.2h2.4M479.6 116.2h2.4M489.7 116.2h2.4M495.7 116.2h2.4M499.7 116.2h2.4M503.8 116.2h2.4M507.8 116.2h4.4M517.8 116.2h4.4M525.8 116.2h2.4M558.0 116.2h2.0M499.7 118.2h4.4M505.8 118.2h2.4M519.8 118.2h2.4M541.9 118.2h4.4M558.0 118.2h2.0M475.6 120.2h4.4M505.8 120.2h4.4M541.9 120.2h2.4M552.0 120.2h2.4M556.0 120.2h2.4M469.6 122.1h2.4M483.7 122.1h2.4M487.7 122.1h2.4M495.7 122.1h4.4M521.8 122.1h4.4M552.0 122.1h2.4M556.0 122.1h2.4M473.6 124.1h2.4M481.7 124.1h2.4M501.7 124.1h2.4M511.8 124.1h2.4M517.8 124.1h6.4M537.9 124.1h4.4M554.0 124.1h4.4M475.6 126.1h2.4M501.7 126.1h2.4M513.8 126.1h2.4M519.8 126.1h2.4M537.9 126.1h2.4M547.9 126.1h2.4M471.6 128.1h2.4M487.7 128.1h2.4M493.7 128.1h4.4M523.8 128.1h2.4M547.9 128.1h2.4M554.0 128.1h2.4M471.6 130.0h2.4M489.7 130.0h2.4M493.7 130.0h2.4M499.7 130.0h2.4M511.8 130.0h2.4M558.0 130.0h2.0M473.6 132.0h2.4M479.6 132.0h2.4M503.8 132.0h4.4M521.8 132.0h2.4M531.9 132.0h2.4M543.9 132.0h2.4M552.0 132.0h2.4M556.0 132.0h4.0" stroke="#8b8b8b" stroke-width="2.32" shape-rendering="crispEdges"/>
<path d="M477.6 96.5h4.4M495.7 96.5h2.4M505.8 96.5h2.4M517.8 96.5h2.4M529.9 96.5h2.4M533.9 96.5h6.4M541.9 96.5h2.4M547.9 96.5h2.4M471.6 98.5h2.4M477.6 98.5h2.4M503.8 98.5h2.4M511.8 98.5h2.4M531.9 98.5h2.4M539.9 98.5h2.4M543.9 98.5h2.4M471.6 100.4h2.4M475.6 100.4h4.4M481.7 100.4h2.4M489.7 100.4h2.4M493.7 100.4h2.4M497.7 100.4h2.4M505.8 100.4h4.4M527.9 100.4h2.4M537.9 100.4h4.4M471.6 102.4h2.4M475.6 102.4h2.4M489.7 102.4h4.4M509.8 102.4h2.4M517.8 102.4h4.4M523.8 102.4h2.4M543.9 102.4h2.4M552.0 102.4h6.4M481.7 104.4h2.4M495.7 104.4h2.4M507.8 104.4h2.4M515.8 104.4h2.4M521.8 104.4h2.4M525.8 104.4h2.4M533.9 104.4h2.4M541.9 104.4h2.4M552.0 104.4h2.4M471.6 106.4h4.4M477.6 106.4h2.4M481.7 106.4h2.4M493.7 106.4h4.4M513.8 106.4h2.4M517.8 106.4h2.4M541.9 106.4h2.4M547.9 106.4h2.4M558.0 106.4h2.0M475.6 108.3h2.4M485.7 108.3h2.4M501.7 108.3h2.4M505.8 108.3h2.4M513.8 108.3h2.4M525.8 108.3h2.4M537.9 108.3h2.4M547.9 108.3h4.4M485.7 110.3h2.4M489.7 110.3h2.4M513.8 110.3h2.4M529.9 110.3h2.4M550.0 110.3h4.4M503.8 112.3h2.4M527.9 112.3h2.4M543.9 112.3h2.4M473.6 114.2h2.4M505.8 114.2h2.4M535.9 114.2h2.4M543.9 114.2h2.4M471.6 116.2h2.4M483.7 116.2h2.4M487.7 116.2h2.4M550.0 116.2h2.4M485.7 118.2h6.4M517.8 118.2h2.4M527.9 118.2h2.4M533.9 118.2h2.4M537.9 118.2h2.4M545.9 118.2h6.4M556.0 118.2h2.4M469.6 120.2h2.4M479.6 120.2h2.4M487.7 120.2h2.4M495.7 120.2h2.4M499.7 120.2h4.4M511.8 120.2h2.4M523.8 120.2h2.4M531.9 120.2h2.4M537.9 120.2h4.4M509.8 122.1h4.4M519.8 122.1h2.4M527.9 122.1h2.4M535.9 122.1h2.4M543.9 122.1h4.4M475.6 124.1h2.4M483.7 124.1h2.4M491.7 124.1h2.4M499.7 124.1h2.4M507.8 124.1h2.4M525.8 124.1h2.4M533.9 124.1h4.4M469.6 126.1h4.4M487.7 126.1h2.4M497.7 126.1h2.4M515.8 126.1h2.4M523.8 126.1h2.4M539.9 126.1h2.4M552.0 126.1h2.4M558.0 126.1h2.0M475.6 128.1h2.4M491.7 128.1h2.4M519.8 128.1h2.4M525.8 128.1h10.4M469.6 130.0h2.4M487.7 130.0h2.4M491.7 130.0h2.4M519.8 130.0h2.4M527.9 130.0h2.4M531.9 130.0h4.4M554.0 130.0h2.4M469.6 132.0h2.4M477.6 132.0h2.4M489.7 132.0h2.4M493.7 132.0h2.4M511.8 132.0h6.4M535.9 132.0h2.4M541.9 132.0h2.4" stroke="#a2a2a2" stroke-width="2.32" shape-rendering="crispEdges"/>
<path d="M475.6 96.5h2.4M485.7 96.5h2.4M501.7 96.5h2.4M507.8 96.5h2.4M515.8 96.5h2.4M527.9 96.5h2.4M543.9 96.5h4.4M556.0 96.5h2.4M475.6 98.5h2.4M481.7 98.5h2.4M487.7 98.5h2.4M495.7 98.5h2.4M505.8 98.5h2.4M517.8 98.5h2.4M525.8 98.5h2.4M535.9 98.5h2.4M541.9 98.5h2.4M558.0 98.5h2.0M483.7 100.4h2.4M513.8 100.4h2.4M535.9 100.4h2.4M477.6 102.4h2.4M481.7 102.4h4.4M525.8 102.4h2.4M473.6 104.4h2.4M489.7 104.4h6.4M497.7 104.4h6.4M517.8 104.4h2.4M523.8 104.4h2.4M535.9 104.4h4.4M547.9 104.4h2.4M554.0 104.4h6.0M479.6 106.4h2.4M487.7 106.4h2.4M499.7 106.4h2.4M503.8 106.4h2.4M519.8 106.4h2.4M523.8 106.4h2.4M529.9 106.4h2.4M535.9 106.4h4.4M491.7 108.3h2.4M515.8 108.3h4.4M527.9 108.3h2.4M531.9 108.3h2.4M499.7 110.3h2.4M533.9 110.3h2.4M469.6 112.3h2.4M495.7 112.3h2.4M509.8 112.3h2.4M531.9 112.3h2.4M558.0 112.3h2.0M491.7 114.2h2.4M513.8 114.2h4.4M531.9 114.2h2.4M541.9 114.2h2.4M558.0 114.2h2.0M491.7 116.2h2.4M511.8 116.2h2.4M545.9 116.2h2.4M473.6 118.2h2.4M483.7 118.2h2.4M503.8 118.2h2.4M554.0 118.2h2.4M471.6 120.2h2.4M497.7 120.2h2.4M509.8 120.2h2.4M521.8 120.2h2.4M525.8 120.2h2.4M533.9 120.2h2.4M479.6 122.1h2.4M501.7 122.1h4.4M531.9 122.1h2.4M550.0 122.1h2.4M554.0 122.1h2.4M558.0 122.1h2.0M477.6 124.1h4.4M485.7 124.1h2.4M489.7 124.1h2.4M505.8 124.1h2.4M509.8 124.1h2.4M513.8 124.1h4.4M529.9 124.1h4.4M477.6 126.1h2.4M483.7 126.1h2.4M491.7 126.1h2.4M499.7 126.1h2.4M509.8 126.1h2.4M521.8 126.1h2.4M525.8 126.1h2.4M529.9 126.1h2.4M541.9 126.1h2.4M554.0 126.1h2.4M489.7 128.1h2.4M501.7 128.1h2.4M507.8 128.1h2.4M513.8 128.1h4.4M537.9 128.1h2.4M543.9 128.1h4.4M550.0 128.1h4.4M515.8 130.0h2.4M521.8 130.0h2.4M525.8 130.0h2.4M537.9 130.0h2.4M550.0 130.0h2.4M556.0 130.0h2.4M485.7 132.0h2.4M499.7 132.0h4.4M529.9 132.0h2.4M537.9 132.0h2.4" stroke="#b9b9b9" stroke-width="2.32" shape-rendering="crispEdges"/>
<path d="M481.7 96.5h4.4M523.8 96.5h4.4M554.0 96.5h2.4M469.6 98.5h2.4M519.8 98.5h2.4M552.0 98.5h2.4M473.6 100.4h2.4M487.7 100.4h2.4M491.7 100.4h2.4M499.7 100.4h2.4M503.8 100.4h2.4M515.8 100.4h2.4M521.8 100.4h2.4M541.9 100.4h2.4M473.6 102.4h2.4M515.8 102.4h2.4M503.8 104.4h2.4M539.9 104.4h2.4M545.9 104.4h2.4M550.0 104.4h2.4M485.7 106.4h2.4M489.7 106.4h2.4M515.8 106.4h2.4M545.9 106.4h2.4M550.0 106.4h2.4M471.6 108.3h2.4M503.8 108.3h2.4M509.8 108.3h4.4M533.9 108.3h2.4M554.0 108.3h4.4M477.6 110.3h2.4M541.9 110.3h2.4M554.0 114.2h2.4M491.7 118.2h4.4M529.9 118.2h4.4M473.6 120.2h2.4M483.7 120.2h2.4M489.7 120.2h2.4M513.8 120.2h4.4M529.9 120.2h2.4M535.9 120.2h2.4M547.9 120.2h2.4M558.0 120.2h2.0M471.6 122.1h2.4M515.8 122.1h2.4M525.8 122.1h2.4M533.9 122.1h2.4M537.9 122.1h2.4M541.9 122.1h2.4M471.6 124.1h2.4M497.7 124.1h2.4M503.8 124.1h2.4M523.8 124.1h2.4M541.9 124.1h2.4M550.0 124.1h2.4M485.7 126.1h2.4M489.7 126.1h2.4M531.9 126.1h2.4M535.9 126.1h2.4M545.9 126.1h2.4M550.0 126.1h2.4M485.7 128.1h2.4M505.8 128.1h2.4M521.8 128.1h2.4M541.9 128.1h2.4M497.7 130.0h2.4M501.7 130.0h4.4M513.8 130.0h2.4M545.9 130.0h2.4M471.6 132.0h2.4M475.6 132.0h2.4M481.7 132.0h2.4M495.7 132.0h4.4M527.9 132.0h2.4M539.9 132.0h2.4M547.9 132.0h2.4" stroke="#d1d1d1" stroke-width="2.32" shape-rendering="crispEdges"/>
<path d="M539.9 96.5h2.4M550.0 98.5h2.4M485.7 100.4h2.4M525.8 100.4h2.4M529.9 100.4h2.4M493.7 102.4h2.4M497.7 102.4h2.4M511.8 102.4h2.4M475.6 106.4h2.4M521.8 106.4h2.4M493.7 108.3h2.4M558.0 108.3h2.0M479.6 118.2h2.4M497.7 118.2h2.4M509.8 118.2h2.4M521.8 118.2h2.4M539.9 118.2h2.4M503.8 120.2h2.4M554.0 120.2h2.4M477.6 122.1h2.4M493.7 122.1h2.4M547.9 122.1h2.4M469.6 124.1h2.4M487.7 124.1h2.4M481.7 126.1h2.4M495.7 126.1h2.4M499.7 128.1h2.4M558.0 128.1h2.0M495.7 130.0h2.4M507.8 130.0h2.4M517.8 130.0h2.4M523.8 130.0h2.4M541.9 130.0h2.4M552.0 130.0h2.4M519.8 132.0h2.4M533.9 132.0h2.4" stroke="#e8e8e8" stroke-width="2.32" shape-rendering="crispEdges"/>
<path d="M511.8 100.4h2.4M533.9 102.4h2.4M469.6 104.4h2.4M511.8 104.4h2.4M519.8 108.3h2.4M535.9 108.3h2.4M552.0 108.3h2.4M552.0 118.2h2.4M543.9 120.2h2.4M473.6 126.1h2.4M479.6 126.1h2.4M479.6 128.1h2.4M517.8 128.1h2.4M485.7 130.0h2.4M505.8 130.0h2.4M529.9 130.0h2.4M509.8 132.0h2.4M525.8 132.0h2.4" stroke="#ffffff" stroke-width="2.32" shape-rendering="crispEdges"/>
<rect x="564.2" y="95.5" width="89.5" height="37.5" fill="#828282"/>
<path d="M694.3 112.3h4.3M694.3 114.2h2.3M694.3 116.2h2.3" stroke="#363636" stroke-width="2.32" shape-rendering="crispEdges"/>
<path d="M696.3 110.3h2.3M692.3 112.3h2.3M698.3 112.3h2.3M710.2 112.3h10.3M692.3 114.2h2.3M696.3 114.2h4.3M712.2 114.2h6.3M692.3 116.2h2.3M696.3 116.2h2.3M710.2 116.2h8.3M744.0 116.2h2.0" stroke="#434343" stroke-width="2.32" shape-rendering="crispEdges"/>
<path d="M692.3 110.3h4.3M698.3 110.3h2.3M710.2 110.3h8.3M690.3 112.3h2.3M700.3 112.3h10.3M720.1 112.3h2.3M744.0 112.3h2.0M690.3 114.2h2.3M700.3 114.2h2.3M706.2 114.2h6.3M718.2 114.2h4.3M742.0 114.2h4.0M690.3 116.2h2.3M698.3 116.2h2.3M706.2 116.2h4.3M718.2 116.2h4.3M740.0 116.2h4.3" stroke="#515151" stroke-width="2.32" shape-rendering="crispEdges"/>
<path d="M690.3 110.3h2.3M700.3 110.3h10.3M718.2 110.3h2.3M656.5 112.3h6.3M688.3 112.3h2.3M738.0 112.3h6.3M656.5 114.2h6.3M688.3 114.2h2.3M702.2 114.2h4.3M738.0 114.2h4.3M656.5 116.2h8.3M686.3 116.2h4.3M700.3 116.2h6.3M738.0 116.2h2.3M692.3 118.2h4.3M712.2 118.2h8.3M742.0 118.2h4.0" stroke="#5e5e5e" stroke-width="2.32" shape-rendering="crispEdges"/>
<path d="M656.5 110.3h6.3M688.3 110.3h2.3M720.1 110.3h2.3M738.0 110.3h8.0M662.5 112.3h2.3M672.4 112.3h6.3M684.3 112.3h4.3M722.1 112.3h2.3M728.1 112.3h10.3M662.5 114.2h4.3M672.4 114.2h16.3M722.1 114.2h2.3M730.1 114.2h8.3M664.5 116.2h22.2M722.1 116.2h2.3M730.1 116.2h8.3M656.5 118.2h8.3M690.3 118.2h2.3M696.3 118.2h4.3M708.2 118.2h4.3M720.1 118.2h2.3M740.0 118.2h2.3M676.4 132.0h4.3" stroke="#6b6b6b" stroke-width="2.32" shape-rendering="crispEdges"/>
<path d="M732.1 96.5h4.3M734.1 98.5h4.3M734.1 100.4h4.3M728.1 104.4h4.3M656.5 108.3h6.3M698.3 108.3h2.3M710.2 108.3h6.3M662.5 110.3h4.3M674.4 110.3h14.3M722.1 110.3h16.3M664.5 112.3h8.3M678.4 112.3h6.3M724.1 112.3h4.3M666.4 114.2h6.3M724.1 114.2h6.3M724.1 116.2h6.3M664.5 118.2h2.3M670.4 118.2h20.2M700.3 118.2h8.3M722.1 118.2h4.3M728.1 118.2h12.3M682.4 120.2h2.3M674.4 132.0h2.3M680.4 132.0h2.3" stroke="#797979" stroke-width="2.32" shape-rendering="crispEdges"/>
<path d="M682.4 96.5h2.3M708.2 96.5h12.3M736.1 96.5h2.3M742.0 96.5h4.0M700.3 98.5h2.3M714.2 98.5h6.3M732.1 98.5h2.3M738.0 98.5h2.3M700.3 100.4h2.3M718.2 100.4h2.3M732.1 100.4h2.3M738.0 100.4h2.3M730.1 102.4h6.3M726.1 104.4h2.3M732.1 104.4h2.3M656.5 106.4h8.3M724.1 106.4h8.3M662.5 108.3h4.3M694.3 108.3h4.3M700.3 108.3h10.3M716.2 108.3h4.3M722.1 108.3h6.3M666.4 110.3h8.3M666.4 118.2h4.3M726.1 118.2h2.3M680.4 120.2h2.3M684.3 120.2h2.3M714.2 120.2h8.3M672.4 132.0h2.3M682.4 132.0h2.3M744.0 132.0h2.0" stroke="#868686" stroke-width="2.32" shape-rendering="crispEdges"/>
<path d="M680.4 96.5h2.3M684.3 96.5h2.3M694.3 96.5h14.3M720.1 96.5h2.3M730.1 96.5h2.3M738.0 96.5h4.3M682.4 98.5h2.3M696.3 98.5h4.3M702.2 98.5h4.3M712.2 98.5h2.3M720.1 98.5h2.3M740.0 98.5h4.3M682.4 100.4h4.3M698.3 100.4h2.3M702.2 100.4h2.3M716.2 100.4h2.3M720.1 100.4h4.3M680.4 102.4h8.3M698.3 102.4h6.3M718.2 102.4h12.3M736.1 102.4h2.3M656.5 104.4h8.3M680.4 104.4h2.3M698.3 104.4h4.3M720.1 104.4h6.3M734.1 104.4h2.3M664.5 106.4h4.3M722.1 106.4h2.3M732.1 106.4h4.3M666.4 108.3h2.3M676.4 108.3h18.2M720.1 108.3h2.3M728.1 108.3h14.3M656.5 120.2h10.3M676.4 120.2h4.3M686.3 120.2h14.3M710.2 120.2h4.3M722.1 120.2h14.3M742.0 120.2h4.0M682.4 122.1h4.3M704.2 128.1h4.3M676.4 130.0h6.3M702.2 130.0h4.3M742.0 130.0h4.0M668.4 132.0h4.3M684.3 132.0h2.3M698.3 132.0h10.3M710.2 132.0h6.3M742.0 132.0h2.3" stroke="#949494" stroke-width="2.32" shape-rendering="crispEdges"/>
<path d="M666.4 96.5h8.3M678.4 96.5h2.3M686.3 96.5h2.3M692.3 96.5h2.3M722.1 96.5h2.3M680.4 98.5h2.3M684.3 98.5h2.3M694.3 98.5h2.3M706.2 98.5h6.3M722.1 98.5h4.3M730.1 98.5h2.3M744.0 98.5h2.0M680.4 100.4h2.3M686.3 100.4h4.3M694.3 100.4h4.3M704.2 100.4h2.3M714.2 100.4h2.3M724.1 100.4h8.3M740.0 100.4h2.3M678.4 102.4h2.3M688.3 102.4h2.3M696.3 102.4h2.3M704.2 102.4h2.3M716.2 102.4h2.3M738.0 102.4h2.3M664.5 104.4h2.3M676.4 104.4h4.3M682.4 104.4h4.3M696.3 104.4h2.3M702.2 104.4h2.3M718.2 104.4h2.3M736.1 104.4h2.3M668.4 106.4h2.3M678.4 106.4h6.3M696.3 106.4h8.3M712.2 106.4h10.3M736.1 106.4h2.3M668.4 108.3h8.3M742.0 108.3h4.0M666.4 120.2h10.3M700.3 120.2h4.3M708.2 120.2h2.3M736.1 120.2h6.3M664.5 122.1h2.3M680.4 122.1h2.3M686.3 122.1h2.3M712.2 122.1h20.2M664.5 124.1h4.3M698.3 124.1h4.3M710.2 124.1h8.3M724.1 124.1h8.3M664.5 126.1h6.3M698.3 126.1h20.2M664.5 128.1h6.3M700.3 128.1h4.3M708.2 128.1h8.3M738.0 128.1h6.3M664.5 130.0h12.3M682.4 130.0h4.3M700.3 130.0h2.3M706.2 130.0h10.3M738.0 130.0h4.3M666.4 132.0h2.3M686.3 132.0h2.3M696.3 132.0h2.3M708.2 132.0h2.3M716.2 132.0h2.3M740.0 132.0h2.3" stroke="#a1a1a1" stroke-width="2.32" shape-rendering="crispEdges"/>
<path d="M664.5 96.5h2.3M674.4 96.5h4.3M688.3 96.5h4.3M724.1 96.5h2.3M728.1 96.5h2.3M666.4 98.5h8.3M678.4 98.5h2.3M686.3 98.5h2.3M690.3 98.5h4.3M726.1 98.5h4.3M666.4 100.4h6.3M678.4 100.4h2.3M690.3 100.4h4.3M706.2 100.4h8.3M742.0 100.4h4.0M662.5 102.4h8.3M674.4 102.4h4.3M690.3 102.4h6.3M714.2 102.4h2.3M740.0 102.4h2.3M666.4 104.4h4.3M674.4 104.4h2.3M686.3 104.4h4.3M692.3 104.4h4.3M704.2 104.4h2.3M714.2 104.4h4.3M670.4 106.4h8.3M684.3 106.4h4.3M694.3 106.4h2.3M704.2 106.4h8.3M738.0 106.4h2.3M704.2 120.2h4.3M662.5 122.1h2.3M666.4 122.1h14.3M688.3 122.1h14.3M710.2 122.1h2.3M732.1 122.1h2.3M742.0 122.1h4.0M662.5 124.1h2.3M668.4 124.1h4.3M680.4 124.1h8.3M694.3 124.1h4.3M702.2 124.1h2.3M706.2 124.1h4.3M718.2 124.1h6.3M732.1 124.1h4.3M738.0 124.1h8.0M662.5 126.1h2.3M670.4 126.1h2.3M682.4 126.1h2.3M696.3 126.1h2.3M718.2 126.1h8.3M730.1 126.1h15.9M662.5 128.1h2.3M670.4 128.1h16.3M698.3 128.1h2.3M716.2 128.1h4.3M736.1 128.1h2.3M744.0 128.1h2.0M686.3 130.0h2.3M698.3 130.0h2.3M716.2 130.0h2.3M736.1 130.0h2.3M664.5 132.0h2.3M688.3 132.0h2.3M694.3 132.0h2.3M718.2 132.0h4.3M738.0 132.0h2.3" stroke="#aeaeae" stroke-width="2.32" shape-rendering="crispEdges"/>
<path d="M726.1 96.5h2.3M662.5 98.5h4.3M674.4 98.5h4.3M688.3 98.5h2.3M664.5 100.4h2.3M672.4 100.4h6.3M656.5 102.4h6.3M670.4 102.4h4.3M706.2 102.4h2.3M712.2 102.4h2.3M742.0 102.4h2.3M670.4 104.4h4.3M690.3 104.4h2.3M706.2 104.4h2.3M712.2 104.4h2.3M738.0 104.4h2.3M688.3 106.4h6.3M740.0 106.4h2.3M660.5 122.1h2.3M702.2 122.1h2.3M708.2 122.1h2.3M734.1 122.1h8.3M672.4 124.1h8.3M688.3 124.1h6.3M704.2 124.1h2.3M736.1 124.1h2.3M672.4 126.1h10.3M684.3 126.1h4.3M726.1 126.1h4.3M686.3 128.1h2.3M696.3 128.1h2.3M720.1 128.1h2.3M734.1 128.1h2.3M662.5 130.0h2.3M688.3 130.0h2.3M696.3 130.0h2.3M718.2 130.0h4.3M734.1 130.0h2.3M662.5 132.0h2.3M690.3 132.0h4.3M722.1 132.0h2.3M734.1 132.0h4.3" stroke="#bcbcbc" stroke-width="2.32" shape-rendering="crispEdges"/>
<path d="M656.5 96.5h8.3M656.5 98.5h6.3M656.5 100.4h2.3M660.5 100.4h4.3M708.2 102.4h4.3M744.0 102.4h2.0M708.2 104.4h4.3M740.0 104.4h6.0M742.0 106.4h2.3M658.5 122.1h2.3M704.2 122.1h4.3M660.5 124.1h2.3M660.5 126.1h2.3M688.3 126.1h8.3M660.5 128.1h2.3M688.3 128.1h4.3M694.3 128.1h2.3M722.1 128.1h4.3M732.1 128.1h2.3M660.5 130.0h2.3M690.3 130.0h6.3M722.1 130.0h2.3M732.1 130.0h2.3M724.1 132.0h2.3M732.1 132.0h2.3" stroke="#c9c9c9" stroke-width="2.32" shape-rendering="crispEdges"/>
<path d="M658.5 100.4h2.3M744.0 106.4h2.0M656.5 122.1h2.3M658.5 128.1h2.3M692.3 128.1h2.3M726.1 128.1h6.3M658.5 130.0h2.3M724.1 130.0h4.3M730.1 130.0h2.3M660.5 132.0h2.3M726.1 132.0h6.3" stroke="#d7d7d7" stroke-width="2.32" shape-rendering="crispEdges"/>
<path d="M658.5 124.1h2.3M656.5 126.1h4.3M656.5 128.1h2.3M656.5 130.0h2.3M728.1 130.0h2.3M656.5 132.0h4.3" stroke="#e4e4e4" stroke-width="2.32" shape-rendering="crispEdges"/>
<path d="M656.5 124.1h2.3" stroke="#f2f2f2" stroke-width="2.32" shape-rendering="crispEdges"/>
<rect x="466.3" y="93.9" width="283.0" height="1.7" fill="#0000ff"/>
<rect x="466.3" y="131.8" width="283.0" height="1.7" fill="#0000ff"/>
<rect x="466.3" y="93.9" width="3.0" height="39.6" fill="#0000ff"/>
<rect x="746.3" y="93.9" width="3.0" height="39.6" fill="#0000ff"/>
<text x="446.5" y="106.3" class="s" style="font-size:8.45px;">0.25</text>
<text x="446.5" y="114.9" class="s" style="font-size:8.45px;">1.47</text>
<text x="446.5" y="123.5" class="s" style="font-size:8.45px;">338</text>
<text x="750.5" y="100.3" class="s" style="font-size:6.5px;">0.51"</text>
<text x="750.5" y="107.5" class="s" style="font-size:6.5px;">(404, 1006)</text>
<text x="750.5" y="115.6" class="s" style="font-size:6.5px;">20220620</text>
<text x="750.5" y="122.4" class="s" style="font-size:6.5px;">v016_03</text>
<text x="750.5" y="129.7" class="s" style="font-size:6.5px;">329_RU_111</text>
<path d="M531.9 151.6h2.4M497.7 153.6h2.4M513.8 153.6h2.4M519.8 153.6h2.4M539.9 153.6h2.4M545.9 153.6h2.4M485.7 155.5h2.4M499.7 155.5h2.4M511.8 155.5h2.4M523.8 155.5h2.4M535.9 155.5h2.4M529.9 157.5h2.4" stroke="#000000" stroke-width="2.32" shape-rendering="crispEdges"/>
<path d="M469.6 151.6h2.4M481.7 151.6h2.4M501.7 153.6h2.4M505.8 153.6h4.4M523.8 153.6h2.4M529.9 153.6h2.4M535.9 153.6h2.4M558.0 153.6h2.0M489.7 155.5h2.4M505.8 155.5h2.4M529.9 155.5h2.4M539.9 155.5h2.4M543.9 155.5h2.4M547.9 155.5h2.4M471.6 157.5h2.4M481.7 157.5h6.4M491.7 157.5h2.4M511.8 157.5h2.4M515.8 157.5h2.4M519.8 157.5h2.4M531.9 157.5h2.4M535.9 157.5h2.4M545.9 157.5h6.4" stroke="#171717" stroke-width="2.32" shape-rendering="crispEdges"/>
<path d="M515.8 151.6h2.4M523.8 151.6h2.4M552.0 151.6h2.4M558.0 151.6h2.0M469.6 153.6h4.4M475.6 153.6h4.4M487.7 153.6h6.4M499.7 153.6h2.4M511.8 153.6h2.4M525.8 153.6h4.4M537.9 153.6h2.4M541.9 153.6h2.4M547.9 153.6h2.4M556.0 153.6h2.4M471.6 155.5h4.4M481.7 155.5h2.4M487.7 155.5h2.4M497.7 155.5h2.4M519.8 155.5h2.4M525.8 155.5h2.4M533.9 155.5h2.4M537.9 155.5h2.4M552.0 155.5h4.4M469.6 157.5h2.4M477.6 157.5h2.4M501.7 157.5h4.4M507.8 157.5h2.4M517.8 157.5h2.4M533.9 157.5h2.4M541.9 157.5h2.4M511.8 159.5h2.4M554.0 159.5h2.4" stroke="#2e2e2e" stroke-width="2.32" shape-rendering="crispEdges"/>
<path d="M473.6 151.6h2.4M477.6 151.6h2.4M485.7 151.6h2.4M491.7 151.6h2.4M495.7 151.6h2.4M501.7 151.6h4.4M507.8 151.6h2.4M513.8 151.6h2.4M525.8 151.6h4.4M535.9 151.6h2.4M539.9 151.6h2.4M556.0 151.6h2.4M473.6 153.6h2.4M485.7 153.6h2.4M495.7 153.6h2.4M503.8 153.6h2.4M509.8 153.6h2.4M515.8 153.6h2.4M533.9 153.6h2.4M550.0 153.6h2.4M469.6 155.5h2.4M479.6 155.5h2.4M483.7 155.5h2.4M493.7 155.5h4.4M501.7 155.5h2.4M507.8 155.5h4.4M517.8 155.5h2.4M521.8 155.5h2.4M541.9 155.5h2.4M550.0 155.5h2.4M558.0 155.5h2.0M475.6 157.5h2.4M479.6 157.5h2.4M487.7 157.5h4.4M493.7 157.5h6.4M505.8 157.5h2.4M509.8 157.5h2.4M521.8 157.5h2.4M527.9 157.5h2.4M539.9 157.5h2.4M543.9 157.5h2.4M552.0 157.5h6.4M469.6 159.5h2.4M475.6 159.5h2.4M513.8 159.5h2.4M517.8 159.5h8.4M527.9 159.5h2.4M539.9 159.5h2.4M543.9 159.5h2.4M547.9 159.5h2.4" stroke="#464646" stroke-width="2.32" shape-rendering="crispEdges"/>
<path d="M491.7 149.6h2.4M531.9 149.6h2.4M471.6 151.6h2.4M479.6 151.6h2.4M483.7 151.6h2.4M487.7 151.6h4.4M493.7 151.6h2.4M497.7 151.6h4.4M511.8 151.6h2.4M517.8 151.6h6.4M533.9 151.6h2.4M537.9 151.6h2.4M541.9 151.6h2.4M545.9 151.6h6.4M554.0 151.6h2.4M479.6 153.6h6.4M493.7 153.6h2.4M531.9 153.6h2.4M543.9 153.6h2.4M552.0 153.6h4.4M475.6 155.5h2.4M503.8 155.5h2.4M513.8 155.5h4.4M527.9 155.5h2.4M531.9 155.5h2.4M545.9 155.5h2.4M556.0 155.5h2.4M473.6 157.5h2.4M499.7 157.5h2.4M513.8 157.5h2.4M523.8 157.5h4.4M537.9 157.5h2.4M558.0 157.5h2.0M471.6 159.5h2.4M477.6 159.5h2.4M485.7 159.5h4.4M491.7 159.5h2.4M497.7 159.5h6.4M525.8 159.5h2.4M533.9 159.5h2.4M541.9 159.5h2.4M487.7 171.3h2.4" stroke="#5d5d5d" stroke-width="2.32" shape-rendering="crispEdges"/>
<path d="M517.8 135.8h2.4M550.0 139.7h2.4M495.7 141.7h2.4M556.0 143.7h2.4M545.9 149.6h2.4M475.6 151.6h2.4M509.8 151.6h2.4M529.9 151.6h2.4M543.9 151.6h2.4M517.8 153.6h2.4M521.8 153.6h2.4M477.6 155.5h2.4M491.7 155.5h2.4M473.6 159.5h2.4M493.7 159.5h2.4M503.8 159.5h8.4M515.8 159.5h2.4M529.9 159.5h2.4M537.9 159.5h2.4M545.9 159.5h2.4M552.0 159.5h2.4M556.0 159.5h2.4M483.7 161.4h2.4M503.8 163.4h2.4M519.8 163.4h4.4M505.8 169.3h2.4M550.0 169.3h2.4" stroke="#747474" stroke-width="2.32" shape-rendering="crispEdges"/>
<path d="M487.7 135.8h2.4M511.8 135.8h2.4M523.8 135.8h4.4M556.0 135.8h2.4M471.6 137.8h2.4M489.7 137.8h2.4M495.7 137.8h2.4M531.9 137.8h2.4M543.9 137.8h2.4M550.0 137.8h2.4M554.0 137.8h2.4M471.6 139.7h2.4M499.7 139.7h2.4M507.8 139.7h2.4M519.8 139.7h2.4M552.0 139.7h2.4M531.9 141.7h2.4M473.6 143.7h2.4M497.7 143.7h2.4M501.7 143.7h2.4M505.8 143.7h2.4M511.8 143.7h2.4M473.6 145.7h4.4M489.7 145.7h2.4M503.8 145.7h2.4M545.9 145.7h2.4M552.0 145.7h2.4M558.0 145.7h2.0M473.6 147.6h2.4M517.8 147.6h2.4M523.8 147.6h2.4M531.9 147.6h2.4M537.9 147.6h2.4M545.9 147.6h4.4M558.0 149.6h2.0M505.8 151.6h2.4M479.6 159.5h6.4M489.7 159.5h2.4M495.7 159.5h2.4M535.9 159.5h2.4M550.0 159.5h2.4M558.0 159.5h2.0M473.6 161.4h2.4M477.6 161.4h2.4M481.7 161.4h2.4M501.7 161.4h2.4M507.8 161.4h2.4M533.9 161.4h4.4M547.9 161.4h2.4M469.6 163.4h2.4M505.8 163.4h4.4M527.9 163.4h2.4M531.9 163.4h2.4M547.9 163.4h2.4M469.6 165.4h2.4M477.6 165.4h2.4M471.6 167.4h2.4M499.7 167.4h2.4M509.8 167.4h2.4M543.9 167.4h2.4M469.6 169.3h2.4M493.7 169.3h4.4M499.7 169.3h2.4M511.8 169.3h2.4M517.8 169.3h4.4M533.9 169.3h2.4M537.9 169.3h2.4M554.0 169.3h4.4M545.9 171.3h2.4M552.0 171.3h2.4M556.0 171.3h2.4" stroke="#8b8b8b" stroke-width="2.32" shape-rendering="crispEdges"/>
<path d="M475.6 135.8h2.4M479.6 135.8h2.4M497.7 135.8h2.4M509.8 135.8h2.4M515.8 135.8h2.4M519.8 135.8h4.4M533.9 135.8h2.4M547.9 135.8h2.4M558.0 135.8h2.0M469.6 137.8h2.4M477.6 137.8h2.4M503.8 137.8h2.4M509.8 137.8h2.4M517.8 137.8h2.4M539.9 137.8h2.4M473.6 139.7h2.4M481.7 139.7h2.4M489.7 139.7h2.4M501.7 139.7h2.4M517.8 139.7h2.4M525.8 139.7h4.4M531.9 139.7h2.4M545.9 139.7h2.4M556.0 139.7h2.4M479.6 141.7h10.4M505.8 141.7h4.4M517.8 141.7h2.4M535.9 141.7h2.4M539.9 141.7h2.4M552.0 141.7h2.4M556.0 141.7h2.4M477.6 143.7h4.4M483.7 143.7h2.4M487.7 143.7h6.4M531.9 143.7h2.4M535.9 143.7h4.4M545.9 143.7h2.4M550.0 143.7h2.4M469.6 145.7h4.4M477.6 145.7h2.4M495.7 145.7h2.4M501.7 145.7h2.4M515.8 145.7h2.4M525.8 145.7h2.4M533.9 145.7h2.4M541.9 145.7h2.4M471.6 147.6h2.4M475.6 147.6h2.4M497.7 147.6h4.4M509.8 147.6h2.4M513.8 147.6h2.4M521.8 147.6h2.4M556.0 147.6h2.4M471.6 149.6h4.4M483.7 149.6h2.4M495.7 149.6h2.4M525.8 149.6h6.4M531.9 159.5h2.4M469.6 161.4h2.4M489.7 161.4h2.4M513.8 161.4h2.4M539.9 161.4h2.4M543.9 161.4h2.4M552.0 161.4h2.4M479.6 163.4h2.4M483.7 163.4h2.4M489.7 163.4h2.4M497.7 163.4h2.4M537.9 163.4h4.4M543.9 163.4h2.4M554.0 163.4h4.4M473.6 165.4h2.4M483.7 165.4h2.4M491.7 165.4h2.4M495.7 165.4h2.4M527.9 165.4h2.4M531.9 165.4h4.4M539.9 165.4h6.4M547.9 165.4h4.4M554.0 165.4h2.4M485.7 167.4h2.4M491.7 167.4h2.4M507.8 167.4h2.4M513.8 167.4h2.4M517.8 167.4h4.4M525.8 167.4h6.4M547.9 167.4h4.4M558.0 167.4h2.0M475.6 169.3h2.4M479.6 169.3h4.4M489.7 169.3h4.4M497.7 169.3h2.4M503.8 169.3h2.4M509.8 169.3h2.4M521.8 169.3h2.4M527.9 169.3h2.4M535.9 169.3h2.4M558.0 169.3h2.0M477.6 171.3h2.4M485.7 171.3h2.4M489.7 171.3h2.4M503.8 171.3h2.4M509.8 171.3h4.4M558.0 171.3h2.0" stroke="#a2a2a2" stroke-width="2.32" shape-rendering="crispEdges"/>
<path d="M469.6 135.8h2.4M477.6 135.8h2.4M483.7 135.8h2.4M491.7 135.8h2.4M495.7 135.8h2.4M503.8 135.8h4.4M513.8 135.8h2.4M527.9 135.8h2.4M531.9 135.8h2.4M535.9 135.8h2.4M539.9 135.8h2.4M545.9 135.8h2.4M550.0 135.8h4.4M473.6 137.8h2.4M497.7 137.8h4.4M505.8 137.8h4.4M513.8 137.8h2.4M523.8 137.8h2.4M537.9 137.8h2.4M552.0 137.8h2.4M556.0 137.8h2.4M483.7 139.7h6.4M491.7 139.7h8.4M505.8 139.7h2.4M515.8 139.7h2.4M533.9 139.7h6.4M541.9 139.7h2.4M547.9 139.7h2.4M477.6 141.7h2.4M489.7 141.7h6.4M497.7 141.7h4.4M519.8 141.7h2.4M527.9 141.7h4.4M533.9 141.7h2.4M537.9 141.7h2.4M545.9 141.7h6.4M554.0 141.7h2.4M558.0 141.7h2.0M469.6 143.7h2.4M481.7 143.7h2.4M485.7 143.7h2.4M495.7 143.7h2.4M499.7 143.7h2.4M513.8 143.7h2.4M519.8 143.7h2.4M523.8 143.7h6.4M539.9 143.7h2.4M552.0 143.7h4.4M558.0 143.7h2.0M483.7 145.7h2.4M487.7 145.7h2.4M491.7 145.7h2.4M497.7 145.7h2.4M505.8 145.7h6.4M539.9 145.7h2.4M550.0 145.7h2.4M556.0 145.7h2.4M477.6 147.6h2.4M481.7 147.6h4.4M487.7 147.6h2.4M491.7 147.6h4.4M503.8 147.6h6.4M511.8 147.6h2.4M515.8 147.6h2.4M525.8 147.6h6.4M533.9 147.6h2.4M539.9 147.6h6.4M552.0 147.6h2.4M558.0 147.6h2.0M475.6 149.6h4.4M481.7 149.6h2.4M485.7 149.6h2.4M493.7 149.6h2.4M499.7 149.6h2.4M507.8 149.6h6.4M517.8 149.6h2.4M521.8 149.6h4.4M537.9 149.6h2.4M543.9 149.6h2.4M547.9 149.6h2.4M475.6 161.4h2.4M485.7 161.4h2.4M493.7 161.4h4.4M505.8 161.4h2.4M517.8 161.4h4.4M523.8 161.4h4.4M541.9 161.4h2.4M545.9 161.4h2.4M554.0 161.4h4.4M471.6 163.4h4.4M481.7 163.4h2.4M487.7 163.4h2.4M491.7 163.4h4.4M499.7 163.4h2.4M509.8 163.4h2.4M513.8 163.4h2.4M517.8 163.4h2.4M525.8 163.4h2.4M552.0 163.4h2.4M558.0 163.4h2.0M471.6 165.4h2.4M481.7 165.4h2.4M489.7 165.4h2.4M493.7 165.4h2.4M497.7 165.4h2.4M501.7 165.4h8.4M513.8 165.4h4.4M521.8 165.4h2.4M525.8 165.4h2.4M535.9 165.4h4.4M469.6 167.4h2.4M479.6 167.4h2.4M489.7 167.4h2.4M493.7 167.4h2.4M501.7 167.4h6.4M515.8 167.4h2.4M523.8 167.4h2.4M533.9 167.4h10.4M554.0 167.4h4.4M471.6 169.3h2.4M485.7 169.3h2.4M501.7 169.3h2.4M525.8 169.3h2.4M529.9 169.3h2.4M545.9 169.3h2.4M552.0 169.3h2.4M469.6 171.3h2.4M475.6 171.3h2.4M481.7 171.3h2.4M495.7 171.3h2.4M505.8 171.3h4.4M513.8 171.3h2.4M525.8 171.3h2.4M531.9 171.3h4.4M539.9 171.3h6.4M550.0 171.3h2.4M554.0 171.3h2.4" stroke="#b9b9b9" stroke-width="2.32" shape-rendering="crispEdges"/>
<path d="M481.7 135.8h2.4M485.7 135.8h2.4M493.7 135.8h2.4M499.7 135.8h4.4M507.8 135.8h2.4M529.9 135.8h2.4M537.9 135.8h2.4M541.9 135.8h4.4M554.0 135.8h2.4M475.6 137.8h2.4M481.7 137.8h8.4M491.7 137.8h4.4M501.7 137.8h2.4M511.8 137.8h2.4M515.8 137.8h2.4M519.8 137.8h4.4M525.8 137.8h2.4M533.9 137.8h4.4M545.9 137.8h2.4M475.6 139.7h2.4M479.6 139.7h2.4M511.8 139.7h2.4M529.9 139.7h2.4M539.9 139.7h2.4M543.9 139.7h2.4M554.0 139.7h2.4M558.0 139.7h2.0M469.6 141.7h2.4M473.6 141.7h4.4M501.7 141.7h4.4M511.8 141.7h2.4M521.8 141.7h6.4M541.9 141.7h4.4M471.6 143.7h2.4M475.6 143.7h2.4M507.8 143.7h4.4M515.8 143.7h4.4M521.8 143.7h2.4M529.9 143.7h2.4M533.9 143.7h2.4M543.9 143.7h2.4M547.9 143.7h2.4M479.6 145.7h2.4M485.7 145.7h2.4M493.7 145.7h2.4M499.7 145.7h2.4M511.8 145.7h2.4M517.8 145.7h8.4M527.9 145.7h2.4M531.9 145.7h2.4M535.9 145.7h2.4M547.9 145.7h2.4M469.6 147.6h2.4M479.6 147.6h2.4M485.7 147.6h2.4M495.7 147.6h2.4M550.0 147.6h2.4M479.6 149.6h2.4M497.7 149.6h2.4M503.8 149.6h4.4M515.8 149.6h2.4M533.9 149.6h4.4M539.9 149.6h4.4M550.0 149.6h2.4M471.6 161.4h2.4M479.6 161.4h2.4M491.7 161.4h2.4M497.7 161.4h2.4M503.8 161.4h2.4M531.9 161.4h2.4M537.9 161.4h2.4M475.6 163.4h4.4M485.7 163.4h2.4M523.8 163.4h2.4M529.9 163.4h2.4M533.9 163.4h2.4M541.9 163.4h2.4M545.9 163.4h2.4M550.0 163.4h2.4M475.6 165.4h2.4M509.8 165.4h4.4M519.8 165.4h2.4M529.9 165.4h2.4M545.9 165.4h2.4M473.6 167.4h6.4M497.7 167.4h2.4M511.8 167.4h2.4M521.8 167.4h2.4M531.9 167.4h2.4M483.7 169.3h2.4M487.7 169.3h2.4M515.8 169.3h2.4M523.8 169.3h2.4M543.9 169.3h2.4M547.9 169.3h2.4M471.6 171.3h4.4M479.6 171.3h2.4M493.7 171.3h2.4M497.7 171.3h6.4M515.8 171.3h8.4M527.9 171.3h2.4M535.9 171.3h2.4M547.9 171.3h2.4" stroke="#d1d1d1" stroke-width="2.32" shape-rendering="crispEdges"/>
<path d="M471.6 135.8h4.4M489.7 135.8h2.4M479.6 137.8h2.4M527.9 137.8h4.4M541.9 137.8h2.4M547.9 137.8h2.4M558.0 137.8h2.0M477.6 139.7h2.4M503.8 139.7h2.4M509.8 139.7h2.4M521.8 139.7h2.4M471.6 141.7h2.4M513.8 141.7h2.4M493.7 143.7h2.4M503.8 143.7h2.4M541.9 143.7h2.4M481.7 145.7h2.4M513.8 145.7h2.4M537.9 145.7h2.4M543.9 145.7h2.4M554.0 145.7h2.4M489.7 147.6h2.4M501.7 147.6h2.4M519.8 147.6h2.4M554.0 147.6h2.4M489.7 149.6h2.4M501.7 149.6h2.4M513.8 149.6h2.4M519.8 149.6h2.4M552.0 149.6h6.4M499.7 161.4h2.4M509.8 161.4h2.4M515.8 161.4h2.4M521.8 161.4h2.4M527.9 161.4h4.4M550.0 161.4h2.4M558.0 161.4h2.0M501.7 163.4h2.4M515.8 163.4h2.4M535.9 163.4h2.4M479.6 165.4h2.4M485.7 165.4h4.4M499.7 165.4h2.4M556.0 165.4h4.0M481.7 167.4h4.4M487.7 167.4h2.4M495.7 167.4h2.4M545.9 167.4h2.4M552.0 167.4h2.4M473.6 169.3h2.4M477.6 169.3h2.4M513.8 169.3h2.4M531.9 169.3h2.4M541.9 169.3h2.4M483.7 171.3h2.4M537.9 171.3h2.4" stroke="#e8e8e8" stroke-width="2.32" shape-rendering="crispEdges"/>
<path d="M469.6 139.7h2.4M513.8 139.7h2.4M523.8 139.7h2.4M509.8 141.7h2.4M515.8 141.7h2.4M529.9 145.7h2.4M535.9 147.6h2.4M469.6 149.6h2.4M487.7 149.6h2.4M487.7 161.4h2.4M511.8 161.4h2.4M495.7 163.4h2.4M511.8 163.4h2.4M517.8 165.4h2.4M523.8 165.4h2.4M552.0 165.4h2.4M507.8 169.3h2.4M539.9 169.3h2.4M491.7 171.3h2.4M523.8 171.3h2.4M529.9 171.3h2.4" stroke="#ffffff" stroke-width="2.32" shape-rendering="crispEdges"/>
<rect x="564.2" y="134.8" width="89.5" height="37.5" fill="#828282"/>
<path d="M692.3 153.6h14.3M726.1 153.6h4.3M680.4 155.5h26.2M680.4 157.5h18.2M702.2 157.5h2.3M682.4 159.5h4.3M692.3 159.5h2.3" stroke="#000000" stroke-width="2.32" shape-rendering="crispEdges"/>
<path d="M670.4 153.6h22.2M706.2 153.6h2.3M724.1 153.6h2.3M730.1 153.6h2.3M668.4 155.5h12.3M706.2 155.5h2.3M726.1 155.5h6.3M668.4 157.5h12.3M698.3 157.5h4.3M704.2 157.5h4.3M728.1 157.5h4.3M668.4 159.5h6.3M678.4 159.5h4.3M686.3 159.5h6.3M694.3 159.5h12.3" stroke="#0d0d0d" stroke-width="2.32" shape-rendering="crispEdges"/>
<path d="M726.1 151.6h4.3M656.5 153.6h4.3M666.4 153.6h4.3M708.2 153.6h2.3M722.1 153.6h2.3M732.1 153.6h2.3M656.5 155.5h4.3M666.4 155.5h2.3M708.2 155.5h2.3M722.1 155.5h4.3M732.1 155.5h2.3M656.5 157.5h12.3M708.2 157.5h2.3M724.1 157.5h4.3M732.1 157.5h4.3M656.5 159.5h4.3M666.4 159.5h2.3M674.4 159.5h4.3M706.2 159.5h2.3M726.1 159.5h10.3" stroke="#1b1b1b" stroke-width="2.32" shape-rendering="crispEdges"/>
<path d="M694.3 151.6h2.3M700.3 151.6h8.3M724.1 151.6h2.3M730.1 151.6h2.3M660.5 153.6h6.3M710.2 153.6h2.3M720.1 153.6h2.3M734.1 153.6h2.3M744.0 153.6h2.0M660.5 155.5h6.3M710.2 155.5h2.3M720.1 155.5h2.3M734.1 155.5h2.3M744.0 155.5h2.0M720.1 157.5h4.3M736.1 157.5h2.3M660.5 159.5h6.3M708.2 159.5h2.3M722.1 159.5h4.3M736.1 159.5h2.3" stroke="#282828" stroke-width="2.32" shape-rendering="crispEdges"/>
<path d="M668.4 151.6h26.2M696.3 151.6h4.3M708.2 151.6h2.3M722.1 151.6h2.3M732.1 151.6h2.3M712.2 153.6h8.3M736.1 153.6h8.3M712.2 155.5h8.3M736.1 155.5h8.3M710.2 157.5h10.3M738.0 157.5h8.0M710.2 159.5h2.3M718.2 159.5h4.3M738.0 159.5h6.3" stroke="#363636" stroke-width="2.32" shape-rendering="crispEdges"/>
<path d="M656.5 151.6h12.3M710.2 151.6h2.3M720.1 151.6h2.3M734.1 151.6h2.3M712.2 159.5h6.3M744.0 159.5h2.0" stroke="#434343" stroke-width="2.32" shape-rendering="crispEdges"/>
<path d="M712.2 151.6h8.3M736.1 151.6h2.3M742.0 151.6h4.0" stroke="#515151" stroke-width="2.32" shape-rendering="crispEdges"/>
<path d="M738.0 151.6h4.3M680.4 161.4h14.3M700.3 161.4h4.3" stroke="#5e5e5e" stroke-width="2.32" shape-rendering="crispEdges"/>
<path d="M666.4 161.4h14.3M694.3 161.4h6.3M704.2 161.4h4.3M722.1 161.4h6.3" stroke="#6b6b6b" stroke-width="2.32" shape-rendering="crispEdges"/>
<path d="M704.2 149.6h4.3M722.1 149.6h10.3M656.5 161.4h10.3M708.2 161.4h14.3M728.1 161.4h16.3" stroke="#797979" stroke-width="2.32" shape-rendering="crispEdges"/>
<path d="M660.5 149.6h44.1M708.2 149.6h2.3M720.1 149.6h2.3M732.1 149.6h2.3M744.0 161.4h2.0" stroke="#868686" stroke-width="2.32" shape-rendering="crispEdges"/>
<path d="M656.5 139.7h4.3M682.4 139.7h6.3M656.5 141.7h4.3M682.4 141.7h4.3M686.3 145.7h2.3M656.5 149.6h4.3M710.2 149.6h2.3M718.2 149.6h2.3M734.1 149.6h2.3M664.5 171.3h4.3" stroke="#949494" stroke-width="2.32" shape-rendering="crispEdges"/>
<path d="M668.4 135.8h2.3M678.4 135.8h6.3M656.5 137.8h4.3M676.4 137.8h10.3M660.5 139.7h2.3M676.4 139.7h6.3M688.3 139.7h2.3M736.1 139.7h9.9M660.5 141.7h2.3M678.4 141.7h4.3M686.3 141.7h4.3M712.2 141.7h10.3M738.0 141.7h8.0M656.5 143.7h6.3M682.4 143.7h8.3M696.3 143.7h8.3M714.2 143.7h16.3M656.5 145.7h10.3M682.4 145.7h4.3M688.3 145.7h4.3M696.3 145.7h8.3M720.1 145.7h8.3M684.3 147.6h6.3M712.2 149.6h6.3M736.1 149.6h2.3M742.0 149.6h4.0M688.3 163.4h4.3M698.3 163.4h6.3M698.3 165.4h4.3M698.3 167.4h2.3M662.5 169.3h4.3M662.5 171.3h2.3M668.4 171.3h2.3" stroke="#a1a1a1" stroke-width="2.32" shape-rendering="crispEdges"/>
<path d="M662.5 135.8h6.3M670.4 135.8h8.3M700.3 135.8h6.3M718.2 135.8h4.3M744.0 135.8h2.0M660.5 137.8h16.3M686.3 137.8h4.3M702.2 137.8h16.3M736.1 137.8h2.3M742.0 137.8h4.0M662.5 139.7h4.3M668.4 139.7h8.3M690.3 139.7h2.3M702.2 139.7h20.2M732.1 139.7h4.3M662.5 141.7h16.3M690.3 141.7h2.3M698.3 141.7h14.3M722.1 141.7h16.3M662.5 143.7h6.3M678.4 143.7h4.3M690.3 143.7h6.3M704.2 143.7h10.3M730.1 143.7h15.9M666.4 145.7h2.3M680.4 145.7h2.3M692.3 145.7h4.3M704.2 145.7h6.3M718.2 145.7h2.3M728.1 145.7h4.3M740.0 145.7h6.0M656.5 147.6h14.3M678.4 147.6h6.3M690.3 147.6h20.2M720.1 147.6h10.3M738.0 149.6h4.3M666.4 163.4h22.2M692.3 163.4h6.3M704.2 163.4h22.2M736.1 163.4h8.3M672.4 165.4h6.3M692.3 165.4h6.3M702.2 165.4h4.3M694.3 167.4h4.3M700.3 167.4h4.3M660.5 169.3h2.3M666.4 169.3h2.3M698.3 169.3h4.3M728.1 169.3h4.3M744.0 169.3h2.0M660.5 171.3h2.3M678.4 171.3h4.3M724.1 171.3h8.3M740.0 171.3h6.0" stroke="#aeaeae" stroke-width="2.32" shape-rendering="crispEdges"/>
<path d="M656.5 135.8h6.3M684.3 135.8h2.3M698.3 135.8h2.3M706.2 135.8h12.3M722.1 135.8h22.2M690.3 137.8h2.3M698.3 137.8h4.3M718.2 137.8h18.2M738.0 137.8h4.3M666.4 139.7h2.3M692.3 139.7h2.3M698.3 139.7h4.3M722.1 139.7h10.3M692.3 141.7h6.3M668.4 143.7h10.3M668.4 145.7h12.3M710.2 145.7h8.3M732.1 145.7h8.3M670.4 147.6h8.3M710.2 147.6h2.3M718.2 147.6h2.3M730.1 147.6h2.3M742.0 147.6h4.0M660.5 163.4h6.3M726.1 163.4h4.3M734.1 163.4h2.3M744.0 163.4h2.0M662.5 165.4h10.3M678.4 165.4h4.3M688.3 165.4h4.3M706.2 165.4h4.3M714.2 165.4h12.3M734.1 165.4h8.3M660.5 167.4h8.3M674.4 167.4h10.3M692.3 167.4h2.3M704.2 167.4h4.3M718.2 167.4h8.3M728.1 167.4h10.3M744.0 167.4h2.0M656.5 169.3h4.3M668.4 169.3h2.3M676.4 169.3h8.3M694.3 169.3h4.3M702.2 169.3h6.3M718.2 169.3h10.3M732.1 169.3h4.3M740.0 169.3h4.3M656.5 171.3h4.3M670.4 171.3h8.3M682.4 171.3h2.3M698.3 171.3h10.3M720.1 171.3h4.3M732.1 171.3h2.3M738.0 171.3h2.3" stroke="#bcbcbc" stroke-width="2.32" shape-rendering="crispEdges"/>
<path d="M686.3 135.8h2.3M692.3 135.8h6.3M692.3 137.8h6.3M694.3 139.7h4.3M712.2 147.6h6.3M732.1 147.6h4.3M738.0 147.6h4.3M656.5 163.4h4.3M730.1 163.4h4.3M658.5 165.4h4.3M682.4 165.4h6.3M710.2 165.4h4.3M726.1 165.4h8.3M742.0 165.4h4.0M658.5 167.4h2.3M668.4 167.4h6.3M684.3 167.4h8.3M708.2 167.4h4.3M714.2 167.4h4.3M726.1 167.4h2.3M738.0 167.4h6.3M670.4 169.3h6.3M684.3 169.3h4.3M690.3 169.3h4.3M708.2 169.3h4.3M714.2 169.3h4.3M736.1 169.3h4.3M684.3 171.3h2.3M690.3 171.3h8.3M708.2 171.3h2.3M718.2 171.3h2.3M734.1 171.3h4.3" stroke="#c9c9c9" stroke-width="2.32" shape-rendering="crispEdges"/>
<path d="M688.3 135.8h4.3M736.1 147.6h2.3M656.5 165.4h2.3M656.5 167.4h2.3M712.2 167.4h2.3M688.3 169.3h2.3M712.2 169.3h2.3M686.3 171.3h4.3M710.2 171.3h8.3" stroke="#d7d7d7" stroke-width="2.32" shape-rendering="crispEdges"/>
<rect x="466.3" y="133.2" width="283.0" height="1.7" fill="#00ff00"/>
<rect x="466.3" y="171.1" width="283.0" height="1.7" fill="#00ff00"/>
<rect x="466.3" y="133.2" width="3.0" height="39.6" fill="#00ff00"/>
<rect x="746.3" y="133.2" width="3.0" height="39.6" fill="#00ff00"/>
<text x="446.5" y="145.6" class="s" style="font-size:8.45px;">0.21</text>
<text x="446.5" y="154.2" class="s" style="font-size:8.45px;">0.80</text>
<text x="446.5" y="162.8" class="s" style="font-size:8.45px;">357</text>
<text x="750.5" y="139.6" class="s" style="font-size:6.5px;">1.01"</text>
<text x="750.5" y="146.8" class="s" style="font-size:6.5px;">(404, 841)</text>
<text x="750.5" y="154.9" class="s" style="font-size:6.5px;">20220620</text>
<text x="750.5" y="161.7" class="s" style="font-size:6.5px;">v016_02</text>
<text x="750.5" y="169.0" class="s" style="font-size:6.5px;">329_RU_092</text>
<path d="M469.6 191.3h2.4M477.6 191.3h2.4M552.0 193.2h2.4" stroke="#000000" stroke-width="2.32" shape-rendering="crispEdges"/>
<path d="M491.7 189.3h2.4M513.8 189.3h2.4M545.9 189.3h2.4M475.6 191.3h2.4M531.9 191.3h2.4M556.0 195.2h2.4M517.8 197.2h2.4M473.6 199.2h2.4M505.8 199.2h2.4M473.6 203.1h2.4" stroke="#171717" stroke-width="2.32" shape-rendering="crispEdges"/>
<path d="M489.7 179.4h2.4M487.7 181.4h2.4M554.0 181.4h2.4M471.6 183.4h2.4M497.7 185.4h2.4M556.0 187.3h2.4M471.6 189.3h2.4M503.8 191.3h2.4M511.8 191.3h2.4M479.6 193.2h2.4M487.7 193.2h2.4M541.9 193.2h2.4M558.0 193.2h2.0M481.7 195.2h2.4M501.7 195.2h2.4M556.0 197.2h2.4M503.8 211.0h2.4M533.9 211.0h2.4" stroke="#2e2e2e" stroke-width="2.32" shape-rendering="crispEdges"/>
<path d="M493.7 175.5h2.4M527.9 175.5h2.4M473.6 177.5h2.4M517.8 177.5h2.4M550.0 177.5h2.4M517.8 179.4h2.4M550.0 179.4h2.4M556.0 181.4h2.4M509.8 183.4h2.4M505.8 185.4h2.4M517.8 185.4h2.4M550.0 185.4h2.4M531.9 187.3h2.4M469.6 189.3h2.4M521.8 189.3h2.4M481.7 191.3h2.4M539.9 191.3h2.4M471.6 193.2h2.4M483.7 193.2h2.4M493.7 193.2h2.4M509.8 193.2h4.4M521.8 193.2h2.4M525.8 193.2h2.4M533.9 193.2h4.4M550.0 193.2h2.4M556.0 193.2h2.4M469.6 195.2h4.4M495.7 195.2h4.4M511.8 195.2h2.4M543.9 195.2h2.4M533.9 197.2h2.4M541.9 197.2h2.4M545.9 197.2h2.4M517.8 199.2h2.4M533.9 199.2h2.4M543.9 199.2h2.4M475.6 201.1h2.4M497.7 201.1h2.4M547.9 201.1h2.4M554.0 201.1h2.4M513.8 203.1h2.4M558.0 203.1h2.0M479.6 205.1h2.4M517.8 205.1h2.4M503.8 207.1h2.4M517.8 207.1h2.4M525.8 207.1h2.4M545.9 207.1h2.4M503.8 209.0h2.4M509.8 209.0h2.4M558.0 209.0h2.0" stroke="#464646" stroke-width="2.32" shape-rendering="crispEdges"/>
<path d="M479.6 175.5h2.4M483.7 175.5h2.4M535.9 175.5h2.4M507.8 177.5h2.4M515.8 177.5h2.4M535.9 177.5h2.4M558.0 177.5h2.0M479.6 179.4h2.4M535.9 179.4h2.4M469.6 181.4h2.4M489.7 181.4h2.4M495.7 181.4h2.4M509.8 181.4h2.4M515.8 181.4h2.4M531.9 181.4h2.4M469.6 183.4h2.4M511.8 183.4h2.4M515.8 183.4h2.4M481.7 185.4h2.4M539.9 185.4h2.4M475.6 187.3h2.4M501.7 187.3h2.4M515.8 187.3h2.4M531.9 189.3h2.4M509.8 191.3h2.4M513.8 191.3h2.4M521.8 191.3h10.4M473.6 193.2h6.4M503.8 193.2h2.4M507.8 193.2h2.4M515.8 193.2h2.4M531.9 193.2h2.4M539.9 193.2h2.4M554.0 193.2h2.4M479.6 195.2h2.4M529.9 195.2h2.4M533.9 195.2h2.4M541.9 195.2h2.4M475.6 197.2h2.4M479.6 197.2h2.4M501.7 197.2h4.4M529.9 197.2h2.4M554.0 197.2h2.4M469.6 199.2h4.4M495.7 199.2h2.4M515.8 199.2h2.4M523.8 199.2h2.4M554.0 199.2h2.4M469.6 201.1h2.4M477.6 201.1h2.4M485.7 201.1h2.4M529.9 201.1h2.4M471.6 203.1h2.4M507.8 203.1h4.4M539.9 203.1h2.4M545.9 203.1h4.4M519.8 205.1h2.4M547.9 205.1h2.4M541.9 207.1h2.4M552.0 207.1h2.4M469.6 209.0h2.4M477.6 209.0h2.4M485.7 209.0h2.4M493.7 209.0h2.4" stroke="#5d5d5d" stroke-width="2.32" shape-rendering="crispEdges"/>
<path d="M497.7 175.5h2.4M523.8 175.5h2.4M505.8 177.5h2.4M509.8 177.5h2.4M533.9 177.5h2.4M552.0 177.5h2.4M485.7 179.4h2.4M495.7 179.4h2.4M527.9 179.4h2.4M533.9 179.4h2.4M552.0 179.4h2.4M483.7 181.4h2.4M521.8 181.4h4.4M547.9 181.4h2.4M552.0 181.4h2.4M501.7 183.4h2.4M525.8 183.4h2.4M543.9 183.4h2.4M558.0 183.4h2.0M509.8 185.4h2.4M521.8 185.4h2.4M535.9 185.4h2.4M558.0 185.4h2.0M469.6 187.3h2.4M473.6 187.3h2.4M477.6 187.3h2.4M483.7 187.3h2.4M495.7 189.3h2.4M501.7 189.3h2.4M507.8 189.3h4.4M515.8 189.3h2.4M519.8 189.3h2.4M523.8 189.3h2.4M537.9 189.3h4.4M487.7 191.3h2.4M505.8 191.3h4.4M541.9 191.3h2.4M545.9 191.3h2.4M550.0 191.3h2.4M497.7 193.2h2.4M505.8 193.2h2.4M545.9 193.2h4.4M489.7 195.2h4.4M503.8 195.2h2.4M513.8 195.2h4.4M521.8 195.2h2.4M527.9 195.2h2.4M531.9 195.2h2.4M539.9 195.2h2.4M545.9 195.2h2.4M552.0 195.2h2.4M469.6 197.2h2.4M473.6 197.2h2.4M489.7 197.2h2.4M497.7 197.2h2.4M505.8 197.2h2.4M513.8 197.2h4.4M523.8 197.2h2.4M535.9 197.2h2.4M547.9 197.2h6.4M527.9 199.2h2.4M531.9 199.2h2.4M537.9 199.2h2.4M541.9 199.2h2.4M547.9 199.2h2.4M495.7 201.1h2.4M503.8 201.1h2.4M517.8 201.1h2.4M523.8 201.1h2.4M543.9 201.1h2.4M556.0 201.1h2.4M491.7 203.1h2.4M501.7 203.1h2.4M523.8 203.1h4.4M541.9 203.1h2.4M550.0 203.1h2.4M493.7 205.1h2.4M499.7 205.1h2.4M535.9 205.1h2.4M543.9 205.1h2.4M485.7 207.1h2.4M491.7 207.1h2.4M495.7 207.1h2.4M515.8 207.1h2.4M523.8 207.1h2.4M479.6 209.0h2.4M489.7 209.0h4.4M505.8 209.0h2.4M525.8 209.0h2.4M531.9 209.0h2.4M537.9 209.0h2.4M541.9 209.0h2.4M545.9 209.0h2.4M552.0 209.0h2.4M485.7 211.0h2.4M499.7 211.0h2.4M511.8 211.0h2.4M515.8 211.0h4.4M521.8 211.0h2.4M529.9 211.0h2.4" stroke="#747474" stroke-width="2.32" shape-rendering="crispEdges"/>
<path d="M481.7 175.5h2.4M511.8 175.5h4.4M517.8 175.5h6.4M531.9 175.5h4.4M539.9 175.5h2.4M543.9 175.5h2.4M552.0 175.5h2.4M471.6 177.5h2.4M475.6 177.5h2.4M479.6 177.5h2.4M485.7 177.5h2.4M519.8 177.5h4.4M471.6 179.4h4.4M487.7 179.4h2.4M491.7 179.4h2.4M497.7 179.4h2.4M507.8 179.4h2.4M513.8 179.4h2.4M543.9 179.4h4.4M558.0 179.4h2.0M477.6 181.4h2.4M491.7 181.4h2.4M511.8 181.4h2.4M519.8 181.4h2.4M533.9 181.4h2.4M473.6 183.4h2.4M481.7 183.4h2.4M495.7 183.4h2.4M507.8 183.4h2.4M519.8 183.4h2.4M527.9 183.4h2.4M535.9 183.4h2.4M554.0 183.4h2.4M469.6 185.4h4.4M477.6 185.4h2.4M489.7 185.4h2.4M493.7 185.4h2.4M499.7 185.4h2.4M503.8 185.4h2.4M507.8 185.4h2.4M519.8 185.4h2.4M481.7 187.3h2.4M485.7 187.3h2.4M499.7 187.3h2.4M505.8 187.3h2.4M509.8 187.3h2.4M533.9 187.3h2.4M543.9 187.3h2.4M554.0 187.3h2.4M479.6 189.3h4.4M511.8 189.3h2.4M529.9 189.3h2.4M533.9 189.3h4.4M550.0 189.3h2.4M554.0 189.3h2.4M473.6 191.3h2.4M479.6 191.3h2.4M485.7 191.3h2.4M491.7 191.3h2.4M497.7 191.3h2.4M515.8 191.3h4.4M533.9 191.3h2.4M547.9 191.3h2.4M558.0 191.3h2.0M469.6 193.2h2.4M485.7 193.2h2.4M489.7 193.2h2.4M495.7 193.2h2.4M499.7 193.2h4.4M519.8 193.2h2.4M477.6 195.2h2.4M483.7 195.2h4.4M493.7 195.2h2.4M507.8 195.2h4.4M517.8 195.2h4.4M525.8 195.2h2.4M537.9 195.2h2.4M554.0 195.2h2.4M477.6 197.2h2.4M483.7 197.2h6.4M491.7 197.2h4.4M499.7 197.2h2.4M509.8 197.2h2.4M539.9 197.2h2.4M475.6 199.2h2.4M487.7 199.2h2.4M491.7 199.2h4.4M497.7 199.2h2.4M501.7 199.2h2.4M521.8 199.2h2.4M525.8 199.2h2.4M535.9 199.2h2.4M545.9 199.2h2.4M550.0 199.2h4.4M556.0 199.2h4.0M471.6 201.1h2.4M479.6 201.1h2.4M493.7 201.1h2.4M511.8 201.1h2.4M539.9 201.1h2.4M469.6 203.1h2.4M479.6 203.1h2.4M503.8 203.1h2.4M535.9 203.1h2.4M543.9 203.1h2.4M469.6 205.1h2.4M473.6 205.1h4.4M481.7 205.1h2.4M505.8 205.1h2.4M527.9 205.1h2.4M537.9 205.1h2.4M545.9 205.1h2.4M556.0 205.1h2.4M471.6 207.1h2.4M481.7 207.1h2.4M489.7 207.1h2.4M493.7 207.1h2.4M501.7 207.1h2.4M519.8 207.1h2.4M527.9 207.1h6.4M539.9 207.1h2.4M497.7 209.0h2.4M527.9 209.0h2.4M471.6 211.0h2.4M479.6 211.0h2.4M483.7 211.0h2.4M487.7 211.0h4.4M495.7 211.0h4.4M505.8 211.0h2.4M509.8 211.0h2.4M531.9 211.0h2.4M541.9 211.0h2.4M556.0 211.0h2.4" stroke="#8b8b8b" stroke-width="2.32" shape-rendering="crispEdges"/>
<path d="M469.6 175.5h2.4M485.7 175.5h2.4M489.7 175.5h2.4M495.7 175.5h2.4M505.8 175.5h2.4M515.8 175.5h2.4M537.9 175.5h2.4M541.9 175.5h2.4M545.9 175.5h2.4M556.0 175.5h2.4M499.7 177.5h4.4M523.8 177.5h2.4M529.9 177.5h2.4M537.9 177.5h2.4M475.6 179.4h2.4M483.7 179.4h2.4M493.7 179.4h2.4M499.7 179.4h4.4M505.8 179.4h2.4M525.8 179.4h2.4M539.9 179.4h2.4M547.9 179.4h2.4M556.0 179.4h2.4M475.6 181.4h2.4M493.7 181.4h2.4M503.8 181.4h2.4M517.8 181.4h2.4M525.8 181.4h2.4M550.0 181.4h2.4M477.6 183.4h2.4M483.7 183.4h2.4M489.7 183.4h2.4M497.7 183.4h4.4M505.8 183.4h2.4M529.9 183.4h6.4M547.9 183.4h2.4M556.0 183.4h2.4M491.7 185.4h2.4M501.7 185.4h2.4M515.8 185.4h2.4M537.9 185.4h2.4M543.9 185.4h2.4M471.6 187.3h2.4M487.7 187.3h2.4M495.7 187.3h4.4M511.8 187.3h4.4M517.8 187.3h2.4M529.9 187.3h2.4M537.9 187.3h2.4M541.9 187.3h2.4M558.0 187.3h2.0M483.7 189.3h6.4M517.8 189.3h2.4M556.0 189.3h2.4M483.7 191.3h2.4M489.7 191.3h2.4M493.7 191.3h4.4M499.7 191.3h4.4M535.9 191.3h2.4M552.0 191.3h4.4M513.8 193.2h2.4M517.8 193.2h2.4M523.8 193.2h2.4M527.9 193.2h2.4M543.9 193.2h2.4M473.6 195.2h4.4M487.7 195.2h2.4M499.7 195.2h2.4M505.8 195.2h2.4M550.0 195.2h2.4M558.0 195.2h2.0M511.8 197.2h2.4M519.8 197.2h2.4M527.9 197.2h2.4M531.9 197.2h2.4M485.7 199.2h2.4M503.8 199.2h2.4M509.8 199.2h2.4M513.8 199.2h2.4M519.8 199.2h2.4M529.9 199.2h2.4M473.6 201.1h2.4M481.7 201.1h2.4M487.7 201.1h2.4M515.8 201.1h2.4M519.8 201.1h2.4M535.9 201.1h2.4M545.9 201.1h2.4M485.7 203.1h6.4M497.7 203.1h2.4M519.8 203.1h2.4M531.9 203.1h4.4M471.6 205.1h2.4M483.7 205.1h2.4M489.7 205.1h4.4M495.7 205.1h4.4M513.8 205.1h2.4M552.0 205.1h4.4M558.0 205.1h2.0M473.6 207.1h2.4M483.7 207.1h2.4M497.7 207.1h2.4M507.8 207.1h2.4M533.9 207.1h2.4M537.9 207.1h2.4M550.0 207.1h2.4M554.0 207.1h4.4M471.6 209.0h4.4M487.7 209.0h2.4M499.7 209.0h4.4M511.8 209.0h4.4M521.8 209.0h4.4M543.9 209.0h2.4M547.9 209.0h4.4M475.6 211.0h2.4M493.7 211.0h2.4M501.7 211.0h2.4M513.8 211.0h2.4M527.9 211.0h2.4M535.9 211.0h2.4M547.9 211.0h2.4M558.0 211.0h2.0" stroke="#a2a2a2" stroke-width="2.32" shape-rendering="crispEdges"/>
<path d="M475.6 175.5h2.4M491.7 175.5h2.4M507.8 175.5h4.4M550.0 175.5h2.4M558.0 175.5h2.0M469.6 177.5h2.4M477.6 177.5h2.4M481.7 177.5h2.4M503.8 177.5h2.4M511.8 177.5h4.4M525.8 177.5h2.4M531.9 177.5h2.4M539.9 177.5h6.4M554.0 177.5h4.4M509.8 179.4h2.4M515.8 179.4h2.4M521.8 179.4h2.4M537.9 179.4h2.4M471.6 181.4h4.4M479.6 181.4h4.4M485.7 181.4h2.4M497.7 181.4h2.4M501.7 181.4h2.4M507.8 181.4h2.4M527.9 181.4h4.4M535.9 181.4h2.4M539.9 181.4h2.4M479.6 183.4h2.4M517.8 183.4h2.4M521.8 183.4h4.4M537.9 183.4h2.4M541.9 183.4h2.4M545.9 183.4h2.4M550.0 183.4h2.4M475.6 185.4h2.4M487.7 185.4h2.4M523.8 185.4h2.4M527.9 185.4h2.4M533.9 185.4h2.4M547.9 185.4h2.4M519.8 187.3h2.4M523.8 187.3h2.4M527.9 187.3h2.4M547.9 187.3h2.4M552.0 187.3h2.4M475.6 189.3h4.4M489.7 189.3h2.4M493.7 189.3h2.4M497.7 189.3h2.4M503.8 189.3h4.4M541.9 189.3h4.4M547.9 189.3h2.4M519.8 191.3h2.4M537.9 191.3h2.4M481.7 193.2h2.4M529.9 193.2h2.4M547.9 195.2h2.4M471.6 197.2h2.4M481.7 197.2h2.4M507.8 197.2h2.4M525.8 197.2h2.4M537.9 197.2h2.4M543.9 197.2h2.4M483.7 201.1h2.4M489.7 201.1h2.4M499.7 201.1h2.4M505.8 201.1h2.4M513.8 201.1h2.4M521.8 201.1h2.4M525.8 201.1h2.4M531.9 201.1h2.4M537.9 201.1h2.4M550.0 201.1h4.4M558.0 201.1h2.0M475.6 203.1h2.4M481.7 203.1h4.4M511.8 203.1h2.4M517.8 203.1h2.4M521.8 203.1h2.4M556.0 203.1h2.4M477.6 205.1h2.4M485.7 205.1h4.4M507.8 205.1h2.4M511.8 205.1h2.4M515.8 205.1h2.4M521.8 205.1h4.4M539.9 205.1h4.4M479.6 207.1h2.4M487.7 207.1h2.4M511.8 207.1h2.4M521.8 207.1h2.4M543.9 207.1h2.4M483.7 209.0h2.4M507.8 209.0h2.4M515.8 209.0h4.4M539.9 209.0h2.4M469.6 211.0h2.4M477.6 211.0h2.4M481.7 211.0h2.4M491.7 211.0h2.4M519.8 211.0h2.4M525.8 211.0h2.4M539.9 211.0h2.4M543.9 211.0h4.4M550.0 211.0h2.4M554.0 211.0h2.4" stroke="#b9b9b9" stroke-width="2.32" shape-rendering="crispEdges"/>
<path d="M471.6 175.5h4.4M487.7 175.5h2.4M501.7 175.5h4.4M525.8 175.5h2.4M529.9 175.5h2.4M554.0 175.5h2.4M483.7 177.5h2.4M491.7 177.5h6.4M545.9 177.5h4.4M469.6 179.4h2.4M477.6 179.4h2.4M481.7 179.4h2.4M503.8 179.4h2.4M529.9 179.4h4.4M499.7 181.4h2.4M505.8 181.4h2.4M537.9 181.4h2.4M541.9 181.4h6.4M487.7 183.4h2.4M491.7 183.4h4.4M503.8 183.4h2.4M483.7 185.4h4.4M495.7 185.4h2.4M511.8 185.4h2.4M541.9 185.4h2.4M552.0 185.4h4.4M491.7 187.3h4.4M507.8 187.3h2.4M521.8 187.3h2.4M525.8 187.3h2.4M539.9 187.3h2.4M473.6 189.3h2.4M499.7 189.3h2.4M525.8 189.3h4.4M552.0 189.3h2.4M471.6 191.3h2.4M543.9 191.3h2.4M491.7 193.2h2.4M523.8 195.2h2.4M535.9 195.2h2.4M495.7 197.2h2.4M558.0 197.2h2.0M477.6 199.2h4.4M483.7 199.2h2.4M489.7 199.2h2.4M507.8 199.2h2.4M511.8 199.2h2.4M539.9 199.2h2.4M501.7 201.1h2.4M507.8 201.1h4.4M533.9 201.1h2.4M505.8 203.1h2.4M527.9 203.1h4.4M552.0 203.1h2.4M529.9 205.1h4.4M469.6 207.1h2.4M477.6 207.1h2.4M505.8 207.1h2.4M513.8 207.1h2.4M558.0 207.1h2.0M475.6 209.0h2.4M495.7 209.0h2.4M519.8 209.0h2.4M529.9 209.0h2.4M533.9 209.0h4.4M556.0 209.0h2.4M507.8 211.0h2.4M537.9 211.0h2.4M552.0 211.0h2.4" stroke="#d1d1d1" stroke-width="2.32" shape-rendering="crispEdges"/>
<path d="M477.6 175.5h2.4M487.7 177.5h4.4M527.9 177.5h2.4M519.8 179.4h2.4M523.8 179.4h2.4M554.0 179.4h2.4M513.8 181.4h2.4M475.6 183.4h2.4M485.7 183.4h2.4M513.8 183.4h2.4M539.9 183.4h2.4M473.6 185.4h2.4M513.8 185.4h2.4M531.9 185.4h2.4M545.9 185.4h2.4M489.7 187.3h2.4M535.9 187.3h2.4M550.0 187.3h2.4M558.0 189.3h2.0M556.0 191.3h2.4M537.9 193.2h2.4M521.8 197.2h2.4M499.7 199.2h2.4M491.7 201.1h2.4M541.9 201.1h2.4M537.9 203.1h2.4M501.7 205.1h4.4M509.8 205.1h2.4M525.8 205.1h2.4M547.9 207.1h2.4" stroke="#e8e8e8" stroke-width="2.32" shape-rendering="crispEdges"/>
<path d="M499.7 175.5h2.4M547.9 175.5h2.4M497.7 177.5h2.4M511.8 179.4h2.4M541.9 179.4h2.4M558.0 181.4h2.0M552.0 183.4h2.4M479.6 185.4h2.4M525.8 185.4h2.4M529.9 185.4h2.4M556.0 185.4h2.4M479.6 187.3h2.4M503.8 187.3h2.4M545.9 187.3h2.4M481.7 199.2h2.4M527.9 201.1h2.4M477.6 203.1h2.4M493.7 203.1h4.4M499.7 203.1h2.4M515.8 203.1h2.4M554.0 203.1h2.4M533.9 205.1h2.4M550.0 205.1h2.4M475.6 207.1h2.4M499.7 207.1h2.4M509.8 207.1h2.4M535.9 207.1h2.4M481.7 209.0h2.4M554.0 209.0h2.4M473.6 211.0h2.4M523.8 211.0h2.4" stroke="#ffffff" stroke-width="2.32" shape-rendering="crispEdges"/>
<rect x="564.2" y="174.5" width="89.5" height="37.5" fill="#828282"/>
<path d="M696.3 191.3h6.3M656.5 195.2h2.3M656.5 197.2h2.3" stroke="#434343" stroke-width="2.32" shape-rendering="crispEdges"/>
<path d="M656.5 191.3h2.3M694.3 191.3h2.3M702.2 191.3h6.3M656.5 193.2h4.3M694.3 193.2h14.3M658.5 195.2h4.3M694.3 195.2h12.3M658.5 197.2h4.3M690.3 197.2h16.3M656.5 199.2h6.3M690.3 199.2h14.3" stroke="#515151" stroke-width="2.32" shape-rendering="crispEdges"/>
<path d="M658.5 191.3h4.3M688.3 191.3h6.3M708.2 191.3h4.3M726.1 191.3h4.3M660.5 193.2h4.3M688.3 193.2h6.3M708.2 193.2h4.3M662.5 195.2h4.3M686.3 195.2h8.3M706.2 195.2h6.3M662.5 197.2h4.3M686.3 197.2h4.3M706.2 197.2h4.3M662.5 199.2h4.3M684.3 199.2h6.3M704.2 199.2h6.3M744.0 199.2h2.0M682.4 201.1h4.3M744.0 201.1h2.0M682.4 203.1h2.3" stroke="#5e5e5e" stroke-width="2.32" shape-rendering="crispEdges"/>
<path d="M690.3 175.5h4.3M656.5 189.3h2.3M696.3 189.3h6.3M728.1 189.3h2.3M662.5 191.3h6.3M684.3 191.3h4.3M712.2 191.3h2.3M724.1 191.3h2.3M730.1 191.3h2.3M742.0 191.3h4.0M664.5 193.2h6.3M684.3 193.2h4.3M712.2 193.2h4.3M724.1 193.2h8.3M742.0 193.2h4.0M666.4 195.2h4.3M684.3 195.2h2.3M712.2 195.2h6.3M724.1 195.2h10.3M740.0 195.2h6.0M666.4 197.2h4.3M682.4 197.2h4.3M710.2 197.2h6.3M722.1 197.2h23.9M666.4 199.2h2.3M682.4 199.2h2.3M710.2 199.2h4.3M722.1 199.2h14.3M740.0 199.2h4.3M656.5 201.1h2.3M680.4 201.1h2.3M686.3 201.1h2.3M742.0 201.1h2.3M680.4 203.1h2.3M684.3 203.1h2.3M742.0 203.1h4.0M744.0 205.1h2.0" stroke="#6b6b6b" stroke-width="2.32" shape-rendering="crispEdges"/>
<path d="M694.3 175.5h2.3M726.1 187.3h2.3M658.5 189.3h2.3M694.3 189.3h2.3M702.2 189.3h6.3M726.1 189.3h2.3M730.1 189.3h2.3M668.4 191.3h4.3M682.4 191.3h2.3M714.2 191.3h10.3M732.1 191.3h10.3M670.4 193.2h4.3M682.4 193.2h2.3M716.2 193.2h8.3M732.1 193.2h10.3M670.4 195.2h4.3M682.4 195.2h2.3M718.2 195.2h6.3M734.1 195.2h6.3M670.4 197.2h2.3M680.4 197.2h2.3M716.2 197.2h6.3M668.4 199.2h4.3M678.4 199.2h4.3M714.2 199.2h8.3M736.1 199.2h4.3M658.5 201.1h10.3M678.4 201.1h2.3M688.3 201.1h8.3M740.0 201.1h2.3M686.3 203.1h2.3M712.2 203.1h6.3M740.0 203.1h2.3M682.4 205.1h4.3M712.2 205.1h6.3M742.0 205.1h2.3M724.1 211.0h8.3" stroke="#797979" stroke-width="2.32" shape-rendering="crispEdges"/>
<path d="M656.5 175.5h2.3M688.3 175.5h2.3M696.3 175.5h2.3M730.1 175.5h4.3M730.1 177.5h8.3M712.2 179.4h6.3M730.1 179.4h10.3M708.2 181.4h8.3M706.2 183.4h6.3M706.2 185.4h10.3M722.1 185.4h8.3M656.5 187.3h2.3M698.3 187.3h4.3M708.2 187.3h8.3M722.1 187.3h4.3M728.1 187.3h2.3M660.5 189.3h4.3M690.3 189.3h4.3M708.2 189.3h4.3M724.1 189.3h2.3M672.4 191.3h10.3M674.4 193.2h8.3M674.4 195.2h8.3M672.4 197.2h8.3M672.4 199.2h6.3M668.4 201.1h4.3M676.4 201.1h2.3M696.3 201.1h10.3M708.2 201.1h14.3M728.1 201.1h12.3M678.4 203.1h2.3M718.2 203.1h2.3M738.0 203.1h2.3M680.4 205.1h2.3M686.3 205.1h2.3M718.2 205.1h2.3M740.0 205.1h2.3M684.3 207.1h4.3M714.2 207.1h4.3M730.1 207.1h4.3M744.0 207.1h2.0M716.2 209.0h2.3M728.1 209.0h6.3M718.2 211.0h6.3M732.1 211.0h4.3" stroke="#868686" stroke-width="2.32" shape-rendering="crispEdges"/>
<path d="M658.5 175.5h2.3M698.3 175.5h2.3M728.1 175.5h2.3M734.1 175.5h2.3M690.3 177.5h6.3M728.1 177.5h2.3M738.0 177.5h2.3M710.2 179.4h2.3M718.2 179.4h2.3M728.1 179.4h2.3M740.0 179.4h6.0M706.2 181.4h2.3M716.2 181.4h4.3M728.1 181.4h6.3M740.0 181.4h6.0M704.2 183.4h2.3M712.2 183.4h4.3M724.1 183.4h8.3M678.4 185.4h4.3M702.2 185.4h4.3M716.2 185.4h6.3M658.5 187.3h2.3M678.4 187.3h4.3M696.3 187.3h2.3M702.2 187.3h6.3M716.2 187.3h6.3M730.1 187.3h2.3M664.5 189.3h26.2M712.2 189.3h6.3M720.1 189.3h4.3M732.1 189.3h2.3M738.0 189.3h8.0M672.4 201.1h4.3M706.2 201.1h2.3M722.1 201.1h6.3M666.4 203.1h4.3M688.3 203.1h2.3M710.2 203.1h2.3M720.1 203.1h2.3M688.3 205.1h2.3M696.3 205.1h8.3M710.2 205.1h2.3M738.0 205.1h2.3M680.4 207.1h4.3M688.3 207.1h2.3M698.3 207.1h8.3M710.2 207.1h4.3M718.2 207.1h2.3M728.1 207.1h2.3M734.1 207.1h2.3M742.0 207.1h2.3M686.3 209.0h4.3M706.2 209.0h2.3M714.2 209.0h2.3M718.2 209.0h10.3M734.1 209.0h2.3M716.2 211.0h2.3M736.1 211.0h2.3" stroke="#949494" stroke-width="2.32" shape-rendering="crispEdges"/>
<path d="M660.5 175.5h2.3M686.3 175.5h2.3M700.3 175.5h4.3M726.1 175.5h2.3M736.1 175.5h2.3M674.4 177.5h6.3M686.3 177.5h4.3M696.3 177.5h4.3M712.2 177.5h8.3M724.1 177.5h4.3M740.0 177.5h2.3M674.4 179.4h8.3M708.2 179.4h2.3M720.1 179.4h4.3M726.1 179.4h2.3M676.4 181.4h6.3M704.2 181.4h2.3M720.1 181.4h2.3M726.1 181.4h2.3M734.1 181.4h6.3M656.5 183.4h4.3M674.4 183.4h12.3M694.3 183.4h4.3M702.2 183.4h2.3M716.2 183.4h8.3M656.5 185.4h4.3M672.4 185.4h6.3M682.4 185.4h2.3M694.3 185.4h8.3M730.1 185.4h2.3M660.5 187.3h2.3M670.4 187.3h8.3M682.4 187.3h2.3M694.3 187.3h2.3M718.2 189.3h2.3M734.1 189.3h4.3M656.5 203.1h2.3M664.5 203.1h2.3M670.4 203.1h2.3M676.4 203.1h2.3M690.3 203.1h20.2M734.1 203.1h4.3M666.4 205.1h6.3M678.4 205.1h2.3M690.3 205.1h6.3M704.2 205.1h6.3M720.1 205.1h2.3M730.1 205.1h8.3M666.4 207.1h6.3M678.4 207.1h2.3M690.3 207.1h8.3M706.2 207.1h4.3M720.1 207.1h2.3M736.1 207.1h6.3M680.4 209.0h6.3M690.3 209.0h2.3M696.3 209.0h10.3M708.2 209.0h6.3M736.1 209.0h2.3M706.2 211.0h4.3M714.2 211.0h2.3" stroke="#a1a1a1" stroke-width="2.32" shape-rendering="crispEdges"/>
<path d="M662.5 175.5h2.3M672.4 175.5h4.3M704.2 175.5h2.3M712.2 175.5h4.3M722.1 175.5h4.3M738.0 175.5h2.3M672.4 177.5h2.3M680.4 177.5h6.3M700.3 177.5h4.3M720.1 177.5h4.3M742.0 177.5h2.3M682.4 179.4h4.3M694.3 179.4h2.3M704.2 179.4h4.3M724.1 179.4h2.3M656.5 181.4h4.3M674.4 181.4h2.3M682.4 181.4h4.3M692.3 181.4h4.3M702.2 181.4h2.3M722.1 181.4h4.3M660.5 183.4h6.3M672.4 183.4h2.3M686.3 183.4h8.3M698.3 183.4h4.3M732.1 183.4h4.3M738.0 183.4h8.0M660.5 185.4h12.3M684.3 185.4h10.3M732.1 185.4h2.3M662.5 187.3h8.3M684.3 187.3h4.3M690.3 187.3h4.3M732.1 187.3h2.3M738.0 187.3h6.3M658.5 203.1h6.3M672.4 203.1h4.3M722.1 203.1h12.3M664.5 205.1h2.3M722.1 205.1h8.3M662.5 207.1h4.3M672.4 207.1h6.3M722.1 207.1h6.3M664.5 209.0h2.3M670.4 209.0h10.3M692.3 209.0h4.3M738.0 209.0h2.3M742.0 209.0h4.0M662.5 211.0h4.3M682.4 211.0h18.2M702.2 211.0h4.3M710.2 211.0h4.3M738.0 211.0h2.3" stroke="#aeaeae" stroke-width="2.32" shape-rendering="crispEdges"/>
<path d="M664.5 175.5h2.3M670.4 175.5h2.3M676.4 175.5h2.3M684.3 175.5h2.3M706.2 175.5h2.3M710.2 175.5h2.3M716.2 175.5h6.3M740.0 175.5h2.3M704.2 177.5h2.3M710.2 177.5h2.3M744.0 177.5h2.0M672.4 179.4h2.3M686.3 179.4h8.3M696.3 179.4h8.3M660.5 181.4h4.3M672.4 181.4h2.3M686.3 181.4h6.3M696.3 181.4h6.3M666.4 183.4h6.3M736.1 183.4h2.3M734.1 185.4h11.9M688.3 187.3h2.3M734.1 187.3h4.3M744.0 187.3h2.0M660.5 205.1h4.3M672.4 205.1h2.3M676.4 205.1h2.3M660.5 207.1h2.3M660.5 209.0h4.3M666.4 209.0h4.3M740.0 209.0h2.3M660.5 211.0h2.3M666.4 211.0h2.3M676.4 211.0h6.3M700.3 211.0h2.3M740.0 211.0h2.3" stroke="#bcbcbc" stroke-width="2.32" shape-rendering="crispEdges"/>
<path d="M666.4 175.5h4.3M678.4 175.5h2.3M708.2 175.5h2.3M742.0 175.5h2.3M656.5 177.5h4.3M668.4 177.5h4.3M706.2 177.5h4.3M656.5 179.4h2.3M668.4 179.4h4.3M664.5 181.4h8.3M656.5 205.1h4.3M674.4 205.1h2.3M656.5 207.1h4.3M658.5 209.0h2.3M668.4 211.0h8.3" stroke="#c9c9c9" stroke-width="2.32" shape-rendering="crispEdges"/>
<path d="M680.4 175.5h4.3M660.5 177.5h8.3M658.5 179.4h10.3M656.5 209.0h2.3M656.5 211.0h4.3M742.0 211.0h2.3" stroke="#d7d7d7" stroke-width="2.32" shape-rendering="crispEdges"/>
<path d="M744.0 175.5h2.0M744.0 211.0h2.0" stroke="#e4e4e4" stroke-width="2.32" shape-rendering="crispEdges"/>
<rect x="466.3" y="172.9" width="283.0" height="1.7" fill="#ffa500"/>
<rect x="466.3" y="210.8" width="283.0" height="1.7" fill="#ffa500"/>
<rect x="466.3" y="172.9" width="3.0" height="39.6" fill="#ffa500"/>
<rect x="746.3" y="172.9" width="3.0" height="39.6" fill="#ffa500"/>
<text x="446.5" y="185.3" class="s" style="font-size:8.45px;">0.16</text>
<text x="446.5" y="193.9" class="s" style="font-size:8.45px;">0.93</text>
<text x="446.5" y="202.5" class="s" style="font-size:8.45px;">338</text>
<text x="750.5" y="179.3" class="s" style="font-size:6.5px;">1.18"</text>
<text x="750.5" y="186.5" class="s" style="font-size:6.5px;">(404, 1006)</text>
<text x="750.5" y="194.6" class="s" style="font-size:6.5px;">20220620</text>
<text x="750.5" y="201.4" class="s" style="font-size:6.5px;">v016_01</text>
<text x="750.5" y="208.7" class="s" style="font-size:6.5px;">329_RU_111</text>
<path d="M475.6 232.9h2.4M499.7 232.9h2.4M469.6 234.9h2.4M527.9 234.9h2.4M550.0 234.9h2.4M495.7 236.9h2.4M509.8 236.9h2.4M517.8 236.9h2.4M531.9 236.9h2.4M541.9 236.9h2.4" stroke="#000000" stroke-width="2.32" shape-rendering="crispEdges"/>
<path d="M487.7 231.0h2.4M495.7 231.0h2.4M499.7 231.0h2.4M517.8 231.0h2.4M485.7 232.9h2.4M491.7 232.9h2.4M511.8 232.9h2.4M529.9 232.9h2.4M550.0 232.9h2.4M558.0 232.9h2.0M483.7 234.9h2.4M489.7 234.9h2.4M497.7 234.9h2.4M501.7 234.9h6.4M547.9 234.9h2.4M558.0 234.9h2.0M475.6 236.9h2.4M499.7 236.9h2.4M507.8 236.9h2.4M523.8 236.9h2.4M552.0 236.9h2.4M558.0 236.9h2.0" stroke="#171717" stroke-width="2.32" shape-rendering="crispEdges"/>
<path d="M485.7 231.0h2.4M501.7 231.0h2.4M509.8 231.0h2.4M529.9 231.0h2.4M535.9 231.0h2.4M539.9 231.0h2.4M545.9 231.0h4.4M471.6 232.9h4.4M477.6 232.9h2.4M481.7 232.9h4.4M489.7 232.9h2.4M493.7 232.9h4.4M503.8 232.9h4.4M513.8 232.9h2.4M521.8 232.9h2.4M527.9 232.9h2.4M537.9 232.9h2.4M541.9 232.9h2.4M547.9 232.9h2.4M552.0 232.9h4.4M471.6 234.9h2.4M477.6 234.9h4.4M485.7 234.9h4.4M491.7 234.9h4.4M515.8 234.9h4.4M529.9 234.9h2.4M533.9 234.9h4.4M543.9 234.9h2.4M552.0 234.9h6.4M471.6 236.9h4.4M483.7 236.9h2.4M491.7 236.9h4.4M519.8 236.9h4.4M525.8 236.9h2.4M529.9 236.9h2.4M547.9 236.9h4.4M556.0 236.9h2.4M485.7 238.9h2.4M491.7 238.9h2.4M537.9 238.9h2.4" stroke="#2e2e2e" stroke-width="2.32" shape-rendering="crispEdges"/>
<path d="M469.6 231.0h2.4M473.6 231.0h6.4M497.7 231.0h2.4M503.8 231.0h2.4M507.8 231.0h2.4M511.8 231.0h2.4M519.8 231.0h4.4M531.9 231.0h4.4M537.9 231.0h2.4M552.0 231.0h2.4M469.6 232.9h2.4M479.6 232.9h2.4M497.7 232.9h2.4M501.7 232.9h2.4M509.8 232.9h2.4M525.8 232.9h2.4M531.9 232.9h4.4M545.9 232.9h2.4M481.7 234.9h2.4M495.7 234.9h2.4M499.7 234.9h2.4M513.8 234.9h2.4M519.8 234.9h6.4M531.9 234.9h2.4M539.9 234.9h2.4M545.9 234.9h2.4M469.6 236.9h2.4M481.7 236.9h2.4M485.7 236.9h2.4M503.8 236.9h2.4M511.8 236.9h4.4M527.9 236.9h2.4M533.9 236.9h2.4M537.9 236.9h4.4M543.9 236.9h4.4M475.6 238.9h4.4M489.7 238.9h2.4M493.7 238.9h2.4M513.8 238.9h2.4M545.9 238.9h2.4M550.0 238.9h2.4" stroke="#464646" stroke-width="2.32" shape-rendering="crispEdges"/>
<path d="M471.6 215.2h2.4M513.8 217.2h2.4M521.8 221.1h2.4M501.7 223.1h2.4M527.9 223.1h2.4M525.8 225.1h2.4M541.9 225.1h2.4M489.7 229.0h2.4M497.7 229.0h2.4M503.8 229.0h2.4M483.7 231.0h2.4M489.7 231.0h4.4M525.8 231.0h2.4M543.9 231.0h2.4M554.0 231.0h4.4M507.8 232.9h2.4M517.8 232.9h4.4M523.8 232.9h2.4M535.9 232.9h2.4M539.9 232.9h2.4M543.9 232.9h2.4M556.0 232.9h2.4M509.8 234.9h4.4M525.8 234.9h2.4M537.9 234.9h2.4M479.6 236.9h2.4M501.7 236.9h2.4M505.8 236.9h2.4M515.8 236.9h2.4M535.9 236.9h2.4M554.0 236.9h2.4M471.6 238.9h2.4M495.7 238.9h2.4M505.8 238.9h2.4M509.8 238.9h2.4M515.8 238.9h2.4M521.8 238.9h2.4M533.9 238.9h4.4M539.9 238.9h2.4M547.9 238.9h2.4" stroke="#5d5d5d" stroke-width="2.32" shape-rendering="crispEdges"/>
<path d="M503.8 215.2h2.4M541.9 217.2h2.4M550.0 219.1h2.4M523.8 221.1h2.4M531.9 221.1h2.4M477.6 223.1h2.4M503.8 223.1h2.4M469.6 225.1h2.4M529.9 225.1h2.4M556.0 225.1h2.4M503.8 227.0h2.4M527.9 227.0h2.4M475.6 229.0h2.4M479.6 231.0h4.4M493.7 231.0h2.4M505.8 231.0h2.4M513.8 231.0h2.4M523.8 231.0h2.4M527.9 231.0h2.4M558.0 231.0h2.0M487.7 232.9h2.4M515.8 232.9h2.4M473.6 234.9h4.4M541.9 234.9h2.4M477.6 236.9h2.4M487.7 236.9h2.4M469.6 238.9h2.4M473.6 238.9h2.4M479.6 238.9h2.4M483.7 238.9h2.4M487.7 238.9h2.4M497.7 238.9h2.4M503.8 238.9h2.4M507.8 238.9h2.4M519.8 238.9h2.4M523.8 238.9h10.4M543.9 238.9h2.4M552.0 238.9h2.4M525.8 240.8h2.4M489.7 242.8h2.4M523.8 242.8h2.4M547.9 242.8h2.4M491.7 244.8h2.4M473.6 246.8h2.4M558.0 246.8h2.0M477.6 248.7h2.4M495.7 248.7h2.4M533.9 248.7h2.4M545.9 248.7h2.4M475.6 250.7h2.4M495.7 250.7h2.4M499.7 250.7h2.4" stroke="#747474" stroke-width="2.32" shape-rendering="crispEdges"/>
<path d="M521.8 215.2h2.4M525.8 215.2h2.4M545.9 215.2h2.4M550.0 215.2h2.4M515.8 217.2h6.4M543.9 217.2h2.4M552.0 217.2h2.4M556.0 217.2h2.4M481.7 219.1h2.4M493.7 219.1h2.4M499.7 219.1h2.4M503.8 219.1h2.4M519.8 219.1h2.4M523.8 219.1h2.4M529.9 219.1h2.4M477.6 221.1h2.4M525.8 221.1h2.4M535.9 221.1h2.4M547.9 221.1h2.4M475.6 223.1h2.4M493.7 223.1h2.4M499.7 223.1h2.4M505.8 223.1h2.4M513.8 223.1h2.4M531.9 223.1h2.4M545.9 223.1h2.4M471.6 225.1h2.4M475.6 225.1h2.4M483.7 225.1h2.4M495.7 225.1h2.4M499.7 225.1h2.4M543.9 225.1h2.4M552.0 225.1h2.4M473.6 227.0h2.4M481.7 227.0h2.4M495.7 227.0h2.4M539.9 227.0h2.4M550.0 227.0h2.4M469.6 229.0h2.4M521.8 229.0h2.4M471.6 231.0h2.4M541.9 231.0h2.4M550.0 231.0h2.4M489.7 236.9h2.4M497.7 236.9h2.4M499.7 238.9h4.4M511.8 238.9h2.4M517.8 238.9h2.4M541.9 238.9h2.4M558.0 238.9h2.0M473.6 240.8h2.4M515.8 240.8h2.4M521.8 240.8h2.4M558.0 240.8h2.0M499.7 242.8h2.4M525.8 242.8h2.4M533.9 242.8h2.4M539.9 242.8h2.4M543.9 242.8h2.4M487.7 244.8h2.4M511.8 244.8h2.4M523.8 244.8h2.4M531.9 244.8h4.4M541.9 244.8h2.4M558.0 244.8h2.0M499.7 246.8h2.4M519.8 246.8h2.4M523.8 246.8h2.4M541.9 246.8h2.4M554.0 246.8h2.4M489.7 248.7h4.4M521.8 248.7h2.4M471.6 250.7h4.4M513.8 250.7h2.4M517.8 250.7h2.4M529.9 250.7h2.4M539.9 250.7h2.4M545.9 250.7h2.4M554.0 250.7h2.4" stroke="#8b8b8b" stroke-width="2.32" shape-rendering="crispEdges"/>
<path d="M485.7 215.2h2.4M491.7 215.2h4.4M499.7 215.2h4.4M507.8 215.2h2.4M533.9 215.2h6.4M543.9 215.2h2.4M552.0 215.2h4.4M473.6 217.2h2.4M495.7 217.2h6.4M503.8 217.2h4.4M521.8 217.2h2.4M525.8 217.2h4.4M535.9 217.2h2.4M550.0 217.2h2.4M558.0 217.2h2.0M475.6 219.1h2.4M483.7 219.1h2.4M495.7 219.1h4.4M507.8 219.1h2.4M521.8 219.1h2.4M527.9 219.1h2.4M531.9 219.1h2.4M543.9 219.1h6.4M558.0 219.1h2.0M469.6 221.1h2.4M483.7 221.1h2.4M495.7 221.1h2.4M501.7 221.1h2.4M507.8 221.1h2.4M519.8 221.1h2.4M485.7 223.1h2.4M495.7 223.1h2.4M511.8 223.1h2.4M519.8 223.1h6.4M535.9 223.1h2.4M550.0 223.1h2.4M505.8 225.1h2.4M515.8 225.1h4.4M527.9 225.1h2.4M531.9 225.1h2.4M475.6 227.0h2.4M479.6 227.0h2.4M487.7 227.0h4.4M493.7 227.0h2.4M505.8 227.0h2.4M523.8 227.0h2.4M531.9 227.0h2.4M541.9 227.0h4.4M556.0 227.0h2.4M471.6 229.0h2.4M477.6 229.0h4.4M485.7 229.0h2.4M501.7 229.0h2.4M505.8 229.0h2.4M513.8 229.0h2.4M519.8 229.0h2.4M529.9 229.0h2.4M537.9 229.0h6.4M556.0 229.0h2.4M515.8 231.0h2.4M481.7 238.9h2.4M554.0 238.9h4.4M471.6 240.8h2.4M477.6 240.8h2.4M483.7 240.8h2.4M489.7 240.8h2.4M497.7 240.8h2.4M509.8 240.8h2.4M513.8 240.8h2.4M519.8 240.8h2.4M531.9 240.8h2.4M543.9 240.8h2.4M547.9 240.8h2.4M554.0 240.8h2.4M475.6 242.8h2.4M483.7 242.8h2.4M487.7 242.8h2.4M513.8 242.8h4.4M519.8 242.8h2.4M529.9 242.8h4.4M471.6 244.8h2.4M475.6 244.8h4.4M493.7 244.8h2.4M517.8 244.8h2.4M521.8 244.8h2.4M527.9 244.8h4.4M535.9 244.8h4.4M552.0 244.8h4.4M477.6 246.8h4.4M487.7 246.8h2.4M497.7 246.8h2.4M507.8 246.8h2.4M511.8 246.8h4.4M535.9 246.8h2.4M552.0 246.8h2.4M469.6 248.7h2.4M517.8 248.7h2.4M523.8 248.7h2.4M531.9 248.7h2.4M535.9 248.7h4.4M554.0 248.7h2.4M487.7 250.7h2.4M493.7 250.7h2.4M503.8 250.7h2.4M507.8 250.7h2.4M511.8 250.7h2.4M515.8 250.7h2.4M535.9 250.7h2.4M547.9 250.7h2.4M558.0 250.7h2.0" stroke="#a2a2a2" stroke-width="2.32" shape-rendering="crispEdges"/>
<path d="M475.6 215.2h2.4M479.6 215.2h2.4M483.7 215.2h2.4M489.7 215.2h2.4M511.8 215.2h2.4M517.8 215.2h2.4M527.9 215.2h2.4M531.9 215.2h2.4M558.0 215.2h2.0M469.6 217.2h4.4M479.6 217.2h2.4M483.7 217.2h2.4M491.7 217.2h2.4M531.9 217.2h4.4M537.9 217.2h4.4M554.0 217.2h2.4M471.6 219.1h2.4M477.6 219.1h2.4M485.7 219.1h4.4M505.8 219.1h2.4M511.8 219.1h6.4M535.9 219.1h2.4M539.9 219.1h4.4M556.0 219.1h2.4M473.6 221.1h4.4M479.6 221.1h2.4M487.7 221.1h2.4M493.7 221.1h2.4M497.7 221.1h4.4M503.8 221.1h4.4M509.8 221.1h2.4M515.8 221.1h2.4M527.9 221.1h2.4M537.9 221.1h10.4M550.0 221.1h2.4M473.6 223.1h2.4M487.7 223.1h2.4M491.7 223.1h2.4M509.8 223.1h2.4M515.8 223.1h4.4M529.9 223.1h2.4M537.9 223.1h6.4M552.0 223.1h2.4M477.6 225.1h2.4M485.7 225.1h2.4M489.7 225.1h6.4M497.7 225.1h2.4M501.7 225.1h4.4M509.8 225.1h4.4M519.8 225.1h4.4M533.9 225.1h4.4M539.9 225.1h2.4M550.0 225.1h2.4M558.0 225.1h2.0M469.6 227.0h4.4M483.7 227.0h4.4M491.7 227.0h2.4M497.7 227.0h6.4M507.8 227.0h2.4M511.8 227.0h4.4M521.8 227.0h2.4M525.8 227.0h2.4M529.9 227.0h2.4M533.9 227.0h6.4M545.9 227.0h4.4M487.7 229.0h2.4M493.7 229.0h2.4M499.7 229.0h2.4M507.8 229.0h2.4M511.8 229.0h2.4M515.8 229.0h4.4M523.8 229.0h4.4M533.9 229.0h2.4M545.9 229.0h2.4M550.0 229.0h2.4M554.0 229.0h2.4M558.0 229.0h2.0M507.8 234.9h2.4M475.6 240.8h2.4M481.7 240.8h2.4M485.7 240.8h2.4M495.7 240.8h2.4M499.7 240.8h4.4M507.8 240.8h2.4M511.8 240.8h2.4M523.8 240.8h2.4M527.9 240.8h4.4M533.9 240.8h2.4M545.9 240.8h2.4M550.0 240.8h4.4M469.6 242.8h2.4M473.6 242.8h2.4M477.6 242.8h2.4M491.7 242.8h2.4M497.7 242.8h2.4M503.8 242.8h2.4M509.8 242.8h4.4M517.8 242.8h2.4M521.8 242.8h2.4M527.9 242.8h2.4M545.9 242.8h2.4M550.0 242.8h6.4M469.6 244.8h2.4M473.6 244.8h2.4M483.7 244.8h2.4M489.7 244.8h2.4M495.7 244.8h4.4M501.7 244.8h6.4M513.8 244.8h2.4M519.8 244.8h2.4M525.8 244.8h2.4M539.9 244.8h2.4M545.9 244.8h6.4M556.0 244.8h2.4M469.6 246.8h2.4M475.6 246.8h2.4M481.7 246.8h4.4M491.7 246.8h6.4M501.7 246.8h2.4M525.8 246.8h2.4M537.9 246.8h4.4M543.9 246.8h2.4M547.9 246.8h4.4M556.0 246.8h2.4M475.6 248.7h2.4M483.7 248.7h2.4M499.7 248.7h2.4M515.8 248.7h2.4M519.8 248.7h2.4M529.9 248.7h2.4M539.9 248.7h6.4M550.0 248.7h4.4M556.0 248.7h2.4M477.6 250.7h2.4M483.7 250.7h2.4M489.7 250.7h4.4M519.8 250.7h2.4M523.8 250.7h4.4M533.9 250.7h2.4M541.9 250.7h4.4M550.0 250.7h2.4" stroke="#b9b9b9" stroke-width="2.32" shape-rendering="crispEdges"/>
<path d="M473.6 215.2h2.4M487.7 215.2h2.4M495.7 215.2h4.4M529.9 215.2h2.4M539.9 215.2h4.4M547.9 215.2h2.4M556.0 215.2h2.4M475.6 217.2h2.4M481.7 217.2h2.4M485.7 217.2h6.4M501.7 217.2h2.4M507.8 217.2h6.4M529.9 217.2h2.4M545.9 217.2h4.4M473.6 219.1h2.4M491.7 219.1h2.4M509.8 219.1h2.4M517.8 219.1h2.4M537.9 219.1h2.4M554.0 219.1h2.4M471.6 221.1h2.4M485.7 221.1h2.4M489.7 221.1h4.4M513.8 221.1h2.4M529.9 221.1h2.4M533.9 221.1h2.4M552.0 221.1h4.4M558.0 221.1h2.0M469.6 223.1h2.4M481.7 223.1h4.4M507.8 223.1h2.4M533.9 223.1h2.4M543.9 223.1h2.4M547.9 223.1h2.4M556.0 223.1h2.4M473.6 225.1h2.4M481.7 225.1h2.4M487.7 225.1h2.4M507.8 225.1h2.4M513.8 225.1h2.4M523.8 225.1h2.4M537.9 225.1h2.4M477.6 227.0h2.4M509.8 227.0h2.4M515.8 227.0h4.4M552.0 227.0h2.4M558.0 227.0h2.0M473.6 229.0h2.4M481.7 229.0h4.4M491.7 229.0h2.4M509.8 229.0h2.4M535.9 229.0h2.4M543.9 229.0h2.4M547.9 229.0h2.4M552.0 229.0h2.4M469.6 240.8h2.4M479.6 240.8h2.4M491.7 240.8h4.4M503.8 240.8h4.4M517.8 240.8h2.4M539.9 240.8h4.4M471.6 242.8h2.4M481.7 242.8h2.4M485.7 242.8h2.4M493.7 242.8h4.4M501.7 242.8h2.4M505.8 242.8h4.4M535.9 242.8h2.4M541.9 242.8h2.4M556.0 242.8h4.0M481.7 244.8h2.4M485.7 244.8h2.4M499.7 244.8h2.4M509.8 244.8h2.4M515.8 244.8h2.4M543.9 244.8h2.4M471.6 246.8h2.4M485.7 246.8h2.4M503.8 246.8h4.4M515.8 246.8h4.4M521.8 246.8h2.4M529.9 246.8h6.4M545.9 246.8h2.4M471.6 248.7h2.4M481.7 248.7h2.4M485.7 248.7h4.4M493.7 248.7h2.4M497.7 248.7h2.4M501.7 248.7h2.4M509.8 248.7h6.4M527.9 248.7h2.4M469.6 250.7h2.4M479.6 250.7h4.4M485.7 250.7h2.4M497.7 250.7h2.4M501.7 250.7h2.4M505.8 250.7h2.4M509.8 250.7h2.4M521.8 250.7h2.4M531.9 250.7h2.4M537.9 250.7h2.4M552.0 250.7h2.4M556.0 250.7h2.4" stroke="#d1d1d1" stroke-width="2.32" shape-rendering="crispEdges"/>
<path d="M469.6 215.2h2.4M477.6 215.2h2.4M481.7 215.2h2.4M505.8 215.2h2.4M509.8 215.2h2.4M513.8 215.2h4.4M519.8 215.2h2.4M523.8 215.2h2.4M477.6 217.2h2.4M493.7 217.2h2.4M523.8 217.2h2.4M469.6 219.1h2.4M479.6 219.1h2.4M489.7 219.1h2.4M525.8 219.1h2.4M471.6 223.1h2.4M479.6 223.1h2.4M489.7 223.1h2.4M497.7 223.1h2.4M525.8 223.1h2.4M554.0 223.1h2.4M479.6 225.1h2.4M545.9 225.1h4.4M519.8 227.0h2.4M554.0 227.0h2.4M495.7 229.0h2.4M527.9 229.0h2.4M531.9 229.0h2.4M537.9 240.8h2.4M556.0 240.8h2.4M479.6 242.8h2.4M537.9 242.8h2.4M479.6 244.8h2.4M507.8 244.8h2.4M489.7 246.8h2.4M509.8 246.8h2.4M473.6 248.7h2.4M479.6 248.7h2.4M503.8 248.7h6.4M547.9 248.7h2.4M558.0 248.7h2.0M527.9 250.7h2.4" stroke="#e8e8e8" stroke-width="2.32" shape-rendering="crispEdges"/>
<path d="M501.7 219.1h2.4M533.9 219.1h2.4M552.0 219.1h2.4M481.7 221.1h2.4M511.8 221.1h2.4M517.8 221.1h2.4M556.0 221.1h2.4M558.0 223.1h2.0M554.0 225.1h2.4M487.7 240.8h2.4M535.9 240.8h2.4M527.9 246.8h2.4M525.8 248.7h2.4" stroke="#ffffff" stroke-width="2.32" shape-rendering="crispEdges"/>
<rect x="564.2" y="214.2" width="89.5" height="37.5" fill="#828282"/>
<path d="M656.5 232.9h2.3M666.4 232.9h16.3M700.3 232.9h8.3M720.1 232.9h10.3M736.1 232.9h9.9M666.4 234.9h16.3M698.3 234.9h10.3M720.1 234.9h10.3M736.1 234.9h9.9M668.4 236.9h4.3M676.4 236.9h6.3M698.3 236.9h10.3M720.1 236.9h10.3M736.1 236.9h9.9M700.3 238.9h8.3M720.1 238.9h8.3M738.0 238.9h8.0" stroke="#000000" stroke-width="2.32" shape-rendering="crispEdges"/>
<path d="M702.2 231.0h4.3M658.5 232.9h8.3M682.4 232.9h2.3M698.3 232.9h2.3M708.2 232.9h2.3M718.2 232.9h2.3M730.1 232.9h6.3M656.5 234.9h10.3M682.4 234.9h2.3M708.2 234.9h2.3M718.2 234.9h2.3M730.1 234.9h2.3M734.1 234.9h2.3M656.5 236.9h12.3M672.4 236.9h4.3M682.4 236.9h2.3M708.2 236.9h2.3M718.2 236.9h2.3M656.5 238.9h4.3M664.5 238.9h8.3M676.4 238.9h8.3M698.3 238.9h2.3M708.2 238.9h2.3M718.2 238.9h2.3M728.1 238.9h2.3M736.1 238.9h2.3" stroke="#0d0d0d" stroke-width="2.32" shape-rendering="crispEdges"/>
<path d="M666.4 231.0h6.3M700.3 231.0h2.3M706.2 231.0h2.3M720.1 231.0h8.3M738.0 231.0h8.0M684.3 232.9h4.3M696.3 232.9h2.3M710.2 232.9h8.3M684.3 234.9h2.3M696.3 234.9h2.3M710.2 234.9h8.3M732.1 234.9h2.3M684.3 236.9h4.3M694.3 236.9h4.3M710.2 236.9h2.3M714.2 236.9h4.3M730.1 236.9h6.3M660.5 238.9h4.3M672.4 238.9h4.3M684.3 238.9h2.3M696.3 238.9h2.3M710.2 238.9h2.3M716.2 238.9h2.3M734.1 238.9h2.3" stroke="#1b1b1b" stroke-width="2.32" shape-rendering="crispEdges"/>
<path d="M656.5 231.0h10.3M672.4 231.0h10.3M698.3 231.0h2.3M708.2 231.0h2.3M718.2 231.0h2.3M728.1 231.0h2.3M734.1 231.0h4.3M688.3 232.9h8.3M686.3 234.9h10.3M688.3 236.9h6.3M712.2 236.9h2.3M686.3 238.9h10.3M712.2 238.9h4.3M730.1 238.9h4.3" stroke="#282828" stroke-width="2.32" shape-rendering="crispEdges"/>
<path d="M682.4 231.0h4.3M696.3 231.0h2.3M710.2 231.0h2.3M714.2 231.0h4.3M730.1 231.0h4.3" stroke="#363636" stroke-width="2.32" shape-rendering="crispEdges"/>
<path d="M686.3 231.0h4.3M692.3 231.0h4.3M712.2 231.0h2.3" stroke="#434343" stroke-width="2.32" shape-rendering="crispEdges"/>
<path d="M690.3 231.0h2.3M738.0 240.8h8.0" stroke="#515151" stroke-width="2.32" shape-rendering="crispEdges"/>
<path d="M666.4 240.8h2.3M680.4 240.8h4.3M720.1 240.8h6.3M736.1 240.8h2.3" stroke="#5e5e5e" stroke-width="2.32" shape-rendering="crispEdges"/>
<path d="M700.3 229.0h4.3M656.5 240.8h10.3M668.4 240.8h4.3M676.4 240.8h4.3M684.3 240.8h30.2M716.2 240.8h4.3M726.1 240.8h2.3" stroke="#6b6b6b" stroke-width="2.32" shape-rendering="crispEdges"/>
<path d="M660.5 229.0h16.3M698.3 229.0h2.3M704.2 229.0h2.3M718.2 229.0h10.3M736.1 229.0h9.9M672.4 240.8h4.3M714.2 240.8h2.3M728.1 240.8h4.3M734.1 240.8h2.3" stroke="#797979" stroke-width="2.32" shape-rendering="crispEdges"/>
<path d="M656.5 229.0h4.3M676.4 229.0h10.3M696.3 229.0h2.3M706.2 229.0h2.3M714.2 229.0h4.3M728.1 229.0h8.3M732.1 240.8h2.3" stroke="#868686" stroke-width="2.32" shape-rendering="crispEdges"/>
<path d="M662.5 215.2h6.3M702.2 215.2h6.3M662.5 217.2h10.3M704.2 217.2h4.3M664.5 219.1h8.3M724.1 223.1h8.3M728.1 225.1h2.3M744.0 227.0h2.0M686.3 229.0h10.3M708.2 229.0h6.3M656.5 242.8h2.3M680.4 242.8h6.3M740.0 242.8h2.3M672.4 248.7h2.3M706.2 248.7h2.3M656.5 250.7h2.3M672.4 250.7h4.3M690.3 250.7h4.3M706.2 250.7h2.3" stroke="#949494" stroke-width="2.32" shape-rendering="crispEdges"/>
<path d="M660.5 215.2h2.3M668.4 215.2h2.3M690.3 215.2h2.3M700.3 215.2h2.3M708.2 215.2h2.3M730.1 215.2h6.3M660.5 217.2h2.3M672.4 217.2h6.3M702.2 217.2h2.3M708.2 217.2h8.3M662.5 219.1h2.3M672.4 219.1h4.3M712.2 219.1h4.3M664.5 221.1h6.3M692.3 221.1h6.3M712.2 221.1h20.2M690.3 223.1h8.3M714.2 223.1h2.3M720.1 223.1h4.3M686.3 225.1h4.3M724.1 225.1h4.3M730.1 225.1h2.3M744.0 225.1h2.0M742.0 227.0h2.3M658.5 242.8h2.3M666.4 242.8h2.3M678.4 242.8h2.3M686.3 242.8h6.3M720.1 242.8h6.3M738.0 242.8h2.3M742.0 242.8h4.0M656.5 244.8h4.3M678.4 244.8h8.3M722.1 244.8h4.3M656.5 246.8h2.3M672.4 246.8h6.3M738.0 246.8h8.0M656.5 248.7h2.3M668.4 248.7h4.3M674.4 248.7h2.3M690.3 248.7h10.3M702.2 248.7h4.3M708.2 248.7h2.3M734.1 248.7h10.3M658.5 250.7h4.3M670.4 250.7h2.3M676.4 250.7h2.3M686.3 250.7h4.3M694.3 250.7h4.3M704.2 250.7h2.3M708.2 250.7h2.3M734.1 250.7h6.3" stroke="#a1a1a1" stroke-width="2.32" shape-rendering="crispEdges"/>
<path d="M658.5 215.2h2.3M670.4 215.2h4.3M676.4 215.2h2.3M686.3 215.2h4.3M692.3 215.2h4.3M698.3 215.2h2.3M710.2 215.2h12.3M728.1 215.2h2.3M736.1 215.2h2.3M678.4 217.2h2.3M686.3 217.2h8.3M700.3 217.2h2.3M716.2 217.2h6.3M726.1 217.2h8.3M660.5 219.1h2.3M676.4 219.1h4.3M686.3 219.1h16.3M706.2 219.1h6.3M716.2 219.1h16.3M662.5 221.1h2.3M670.4 221.1h8.3M686.3 221.1h6.3M698.3 221.1h4.3M710.2 221.1h2.3M664.5 223.1h2.3M672.4 223.1h4.3M684.3 223.1h6.3M698.3 223.1h2.3M712.2 223.1h2.3M716.2 223.1h4.3M732.1 223.1h2.3M674.4 225.1h2.3M684.3 225.1h2.3M690.3 225.1h6.3M718.2 225.1h6.3M732.1 225.1h2.3M740.0 225.1h4.3M666.4 227.0h8.3M686.3 227.0h2.3M718.2 227.0h4.3M724.1 227.0h6.3M738.0 227.0h4.3M660.5 242.8h6.3M668.4 242.8h4.3M676.4 242.8h2.3M692.3 242.8h4.3M708.2 242.8h6.3M718.2 242.8h2.3M726.1 242.8h4.3M736.1 242.8h2.3M660.5 244.8h2.3M666.4 244.8h12.3M686.3 244.8h6.3M720.1 244.8h2.3M726.1 244.8h2.3M738.0 244.8h8.0M658.5 246.8h2.3M664.5 246.8h8.3M678.4 246.8h2.3M688.3 246.8h10.3M706.2 246.8h6.3M722.1 246.8h4.3M732.1 246.8h6.3M658.5 248.7h10.3M676.4 248.7h2.3M688.3 248.7h2.3M700.3 248.7h2.3M710.2 248.7h2.3M730.1 248.7h4.3M744.0 248.7h2.0M662.5 250.7h8.3M678.4 250.7h8.3M698.3 250.7h6.3M710.2 250.7h2.3M730.1 250.7h4.3M740.0 250.7h2.3" stroke="#aeaeae" stroke-width="2.32" shape-rendering="crispEdges"/>
<path d="M656.5 215.2h2.3M674.4 215.2h2.3M678.4 215.2h8.3M696.3 215.2h2.3M722.1 215.2h2.3M726.1 215.2h2.3M738.0 215.2h2.3M656.5 217.2h4.3M680.4 217.2h6.3M694.3 217.2h6.3M722.1 217.2h4.3M734.1 217.2h2.3M658.5 219.1h2.3M680.4 219.1h6.3M702.2 219.1h4.3M732.1 219.1h2.3M742.0 219.1h4.0M660.5 221.1h2.3M678.4 221.1h8.3M702.2 221.1h2.3M708.2 221.1h2.3M732.1 221.1h2.3M742.0 221.1h4.0M660.5 223.1h4.3M666.4 223.1h6.3M676.4 223.1h4.3M682.4 223.1h2.3M700.3 223.1h2.3M710.2 223.1h2.3M734.1 223.1h2.3M742.0 223.1h4.0M662.5 225.1h12.3M676.4 225.1h8.3M696.3 225.1h6.3M712.2 225.1h6.3M734.1 225.1h6.3M660.5 227.0h6.3M674.4 227.0h4.3M682.4 227.0h4.3M688.3 227.0h16.3M714.2 227.0h4.3M722.1 227.0h2.3M730.1 227.0h8.3M672.4 242.8h4.3M696.3 242.8h4.3M706.2 242.8h2.3M714.2 242.8h4.3M730.1 242.8h6.3M662.5 244.8h4.3M692.3 244.8h6.3M708.2 244.8h6.3M728.1 244.8h10.3M660.5 246.8h4.3M680.4 246.8h8.3M698.3 246.8h8.3M712.2 246.8h2.3M720.1 246.8h2.3M726.1 246.8h6.3M678.4 248.7h10.3M712.2 248.7h4.3M718.2 248.7h12.3M712.2 250.7h4.3M720.1 250.7h10.3M742.0 250.7h2.3" stroke="#bcbcbc" stroke-width="2.32" shape-rendering="crispEdges"/>
<path d="M724.1 215.2h2.3M740.0 215.2h2.3M736.1 217.2h9.9M656.5 219.1h2.3M734.1 219.1h2.3M740.0 219.1h2.3M658.5 221.1h2.3M704.2 221.1h4.3M734.1 221.1h2.3M740.0 221.1h2.3M658.5 223.1h2.3M680.4 223.1h2.3M702.2 223.1h2.3M708.2 223.1h2.3M736.1 223.1h6.3M656.5 225.1h6.3M702.2 225.1h2.3M656.5 227.0h4.3M678.4 227.0h4.3M704.2 227.0h2.3M712.2 227.0h2.3M700.3 242.8h2.3M704.2 242.8h2.3M698.3 244.8h2.3M706.2 244.8h2.3M714.2 244.8h6.3M714.2 246.8h6.3M716.2 248.7h2.3M716.2 250.7h4.3M744.0 250.7h2.0" stroke="#c9c9c9" stroke-width="2.32" shape-rendering="crispEdges"/>
<path d="M742.0 215.2h2.3M736.1 219.1h4.3M656.5 221.1h2.3M736.1 221.1h4.3M656.5 223.1h2.3M704.2 223.1h4.3M704.2 225.1h2.3M710.2 225.1h2.3M706.2 227.0h6.3M702.2 242.8h2.3M700.3 244.8h6.3" stroke="#d7d7d7" stroke-width="2.32" shape-rendering="crispEdges"/>
<path d="M744.0 215.2h2.0M706.2 225.1h4.3" stroke="#e4e4e4" stroke-width="2.32" shape-rendering="crispEdges"/>
<rect x="466.3" y="212.6" width="283.0" height="1.7" fill="#ff0000"/>
<rect x="466.3" y="250.5" width="283.0" height="1.7" fill="#ff0000"/>
<rect x="466.3" y="212.6" width="3.0" height="39.6" fill="#ff0000"/>
<rect x="746.3" y="212.6" width="3.0" height="39.6" fill="#ff0000"/>
<text x="446.5" y="225.0" class="s" style="font-size:8.45px;">0.09</text>
<text x="446.5" y="233.6" class="s" style="font-size:8.45px;">1.07</text>
<text x="446.5" y="242.2" class="s" style="font-size:8.45px;">358</text>
<text x="750.5" y="219.0" class="s" style="font-size:6.5px;">1.40"</text>
<text x="750.5" y="226.2" class="s" style="font-size:6.5px;">(405, 833)</text>
<text x="750.5" y="234.3" class="s" style="font-size:6.5px;">20220620</text>
<text x="750.5" y="241.1" class="s" style="font-size:6.5px;">v016_01</text>
<text x="750.5" y="248.4" class="s" style="font-size:6.5px;">329_RU_091</text>
<text x="865.4" y="47.5" class="s" text-anchor="middle" style="font-size:11px;">With Sky</text>
<text x="865.4" y="57.8" class="s" text-anchor="middle" style="font-size:11px;">x, y: 404, 1006</text>
<text x="966.0" y="47.5" class="s" text-anchor="middle" style="font-size:11px;">Clean Image</text>
<text x="966.0" y="57.8" class="s" text-anchor="middle" style="font-size:11px;">x, y: 404, 1006</text>
<path d="M838.4 138.5h2.3M893.6 138.5h2.3M868.0 198.5h2.3M862.1 210.5h2.3M897.5 210.5h2.0M875.9 222.5h2.3" stroke="#333333" stroke-width="2.35" shape-rendering="crispEdges"/>
<path d="M842.4 134.5h2.3M848.3 134.5h2.3M864.0 134.5h2.3M879.8 134.5h2.3M862.1 136.5h2.3M889.6 138.5h2.3M834.5 146.5h2.3M848.3 146.5h2.3M897.5 148.5h2.0M893.6 150.5h2.3M897.5 150.5h2.0M885.7 162.5h2.3M842.4 172.5h2.3M846.3 172.5h2.3M856.1 172.5h2.3M887.7 172.5h2.3M832.5 174.5h2.3M840.4 174.5h2.3M848.3 174.5h2.3M881.8 174.5h2.3M854.2 176.5h2.3M897.5 176.5h2.0M852.2 184.5h2.3M854.2 186.5h2.3M862.1 186.5h2.3M844.3 188.5h2.3M850.2 196.5h2.3M885.7 196.5h4.3M879.8 198.5h4.3M873.9 200.5h2.3M844.3 210.5h2.3M869.9 210.5h2.3M877.8 210.5h2.3M840.4 212.5h2.3M852.2 212.5h4.3M893.6 220.5h2.3M854.2 222.5h2.3M842.4 224.5h2.3M848.3 224.5h2.3M856.1 224.5h2.3M868.0 224.5h2.3" stroke="#444444" stroke-width="2.35" shape-rendering="crispEdges"/>
<path d="M836.4 134.5h6.3M856.1 134.5h2.3M860.1 134.5h2.3M866.0 134.5h2.3M869.9 134.5h2.3M873.9 134.5h2.3M887.7 134.5h4.3M893.6 134.5h2.3M836.4 136.5h6.3M864.0 136.5h2.3M868.0 136.5h2.3M877.8 136.5h6.3M885.7 136.5h2.3M889.6 136.5h6.3M897.5 136.5h2.0M836.4 138.5h2.3M840.4 138.5h4.3M848.3 138.5h4.3M854.2 138.5h2.3M858.1 138.5h2.3M873.9 138.5h2.3M877.8 138.5h2.3M891.6 138.5h2.3M895.6 138.5h2.3M832.5 146.5h2.3M836.4 146.5h6.3M873.9 146.5h2.3M895.6 146.5h3.9M832.5 148.5h2.3M836.4 148.5h2.3M842.4 148.5h2.3M850.2 148.5h2.3M864.0 148.5h4.3M883.7 148.5h2.3M887.7 148.5h2.3M836.4 150.5h6.3M844.3 150.5h4.3M866.0 150.5h2.3M869.9 150.5h2.3M875.9 150.5h2.3M834.5 160.5h2.3M854.2 160.5h2.3M864.0 160.5h2.3M871.9 160.5h2.3M875.9 160.5h2.3M883.7 160.5h6.3M893.6 160.5h2.3M897.5 160.5h2.0M834.5 162.5h2.3M840.4 162.5h2.3M844.3 162.5h2.3M866.0 162.5h2.3M883.7 162.5h2.3M887.7 162.5h2.3M842.4 164.5h2.3M858.1 164.5h2.3M891.6 164.5h2.3M834.5 172.5h2.3M844.3 172.5h2.3M848.3 172.5h2.3M852.2 172.5h4.3M858.1 172.5h2.3M862.1 172.5h2.3M871.9 172.5h2.3M879.8 172.5h2.3M889.6 172.5h2.3M836.4 174.5h4.3M844.3 174.5h4.3M852.2 174.5h8.2M862.1 174.5h2.3M871.9 174.5h2.3M883.7 174.5h4.3M895.6 174.5h3.9M832.5 176.5h4.3M838.4 176.5h2.3M842.4 176.5h2.3M848.3 176.5h4.3M836.4 184.5h2.3M840.4 184.5h2.3M854.2 184.5h2.3M889.6 184.5h2.3M858.1 186.5h4.3M864.0 186.5h2.3M873.9 186.5h2.3M879.8 186.5h2.3M887.7 186.5h2.3M893.6 186.5h5.9M836.4 188.5h2.3M846.3 188.5h2.3M860.1 188.5h2.3M869.9 188.5h2.3M873.9 188.5h2.3M889.6 188.5h2.3M895.6 188.5h3.9M832.5 196.5h2.3M852.2 196.5h2.3M858.1 196.5h2.3M866.0 196.5h4.3M871.9 196.5h2.3M846.3 198.5h8.2M858.1 198.5h6.3M873.9 198.5h2.3M883.7 198.5h8.2M893.6 198.5h2.3M842.4 200.5h2.3M848.3 200.5h2.3M852.2 200.5h2.3M864.0 200.5h4.3M877.8 200.5h4.3M887.7 200.5h4.3M840.4 208.5h2.3M846.3 208.5h2.3M854.2 208.5h2.3M864.0 208.5h2.3M875.9 208.5h2.3M891.6 208.5h6.3M840.4 210.5h4.3M846.3 210.5h2.3M856.1 210.5h2.3M860.1 210.5h2.3M875.9 210.5h2.3M881.8 210.5h2.3M832.5 212.5h2.3M836.4 212.5h4.3M862.1 212.5h2.3M866.0 212.5h2.3M871.9 212.5h6.3M885.7 212.5h4.3M893.6 212.5h2.3M832.5 220.5h2.3M838.4 220.5h2.3M844.3 220.5h2.3M852.2 220.5h2.3M881.8 220.5h6.3M832.5 222.5h2.3M840.4 222.5h4.3M850.2 222.5h4.3M866.0 222.5h6.3M881.8 222.5h2.3M895.6 222.5h2.3M840.4 224.5h2.3M844.3 224.5h2.3M854.2 224.5h2.3M858.1 224.5h2.3M869.9 224.5h2.3M873.9 224.5h4.3M889.6 224.5h2.3M893.6 224.5h2.3" stroke="#555555" stroke-width="2.35" shape-rendering="crispEdges"/>
<path d="M846.3 134.5h2.3M850.2 134.5h6.3M858.1 134.5h2.3M862.1 134.5h2.3M875.9 134.5h4.3M881.8 134.5h2.3M885.7 134.5h2.3M891.6 134.5h2.3M834.5 136.5h2.3M844.3 136.5h6.3M858.1 136.5h4.3M866.0 136.5h2.3M869.9 136.5h2.3M873.9 136.5h4.3M883.7 136.5h2.3M887.7 136.5h2.3M895.6 136.5h2.3M834.5 138.5h2.3M846.3 138.5h2.3M852.2 138.5h2.3M856.1 138.5h2.3M860.1 138.5h2.3M864.0 138.5h6.3M871.9 138.5h2.3M875.9 138.5h2.3M881.8 138.5h2.3M887.7 138.5h2.3M897.5 138.5h2.0M842.4 146.5h6.3M850.2 146.5h2.3M854.2 146.5h6.3M866.0 146.5h2.3M875.9 146.5h2.3M881.8 146.5h4.3M889.6 146.5h2.3M834.5 148.5h2.3M840.4 148.5h2.3M844.3 148.5h6.3M854.2 148.5h2.3M858.1 148.5h6.3M869.9 148.5h2.3M873.9 148.5h2.3M877.8 148.5h2.3M885.7 148.5h2.3M891.6 148.5h4.3M832.5 150.5h4.3M842.4 150.5h2.3M860.1 150.5h6.3M868.0 150.5h2.3M871.9 150.5h4.3M877.8 150.5h2.3M887.7 150.5h6.3M856.1 158.5h2.3M832.5 160.5h2.3M846.3 160.5h2.3M850.2 160.5h4.3M856.1 160.5h4.3M862.1 160.5h2.3M866.0 160.5h2.3M873.9 160.5h2.3M877.8 160.5h6.3M889.6 160.5h2.3M895.6 160.5h2.3M836.4 162.5h2.3M842.4 162.5h2.3M846.3 162.5h4.3M852.2 162.5h8.2M862.1 162.5h4.3M869.9 162.5h8.2M881.8 162.5h2.3M889.6 162.5h6.3M897.5 162.5h2.0M836.4 164.5h4.3M856.1 164.5h2.3M869.9 164.5h4.3M875.9 164.5h2.3M879.8 164.5h2.3M885.7 164.5h4.3M893.6 164.5h2.3M897.5 164.5h2.0M850.2 172.5h2.3M868.0 172.5h2.3M873.9 172.5h2.3M881.8 172.5h6.3M891.6 172.5h2.3M897.5 172.5h2.0M834.5 174.5h2.3M842.4 174.5h2.3M850.2 174.5h2.3M860.1 174.5h2.3M868.0 174.5h4.3M873.9 174.5h2.3M879.8 174.5h2.3M836.4 176.5h2.3M844.3 176.5h4.3M858.1 176.5h2.3M862.1 176.5h2.3M866.0 176.5h8.2M879.8 176.5h8.2M889.6 176.5h4.3M895.6 176.5h2.3M832.5 184.5h2.3M838.4 184.5h2.3M844.3 184.5h4.3M850.2 184.5h2.3M860.1 184.5h2.3M866.0 184.5h4.3M881.8 184.5h8.2M893.6 184.5h2.3M897.5 184.5h2.0M832.5 186.5h8.2M844.3 186.5h4.3M852.2 186.5h2.3M856.1 186.5h2.3M866.0 186.5h4.3M875.9 186.5h4.3M881.8 186.5h4.3M889.6 186.5h4.3M840.4 188.5h2.3M858.1 188.5h2.3M862.1 188.5h4.3M868.0 188.5h2.3M871.9 188.5h2.3M877.8 188.5h6.3M887.7 188.5h2.3M891.6 188.5h4.3M854.2 194.5h2.3M834.5 196.5h14.1M860.1 196.5h6.3M869.9 196.5h2.3M889.6 196.5h8.2M836.4 198.5h10.2M854.2 198.5h2.3M864.0 198.5h4.3M871.9 198.5h2.3M875.9 198.5h2.3M891.6 198.5h2.3M832.5 200.5h2.3M838.4 200.5h4.3M844.3 200.5h2.3M850.2 200.5h2.3M856.1 200.5h2.3M860.1 200.5h4.3M868.0 200.5h4.3M881.8 200.5h6.3M893.6 200.5h2.3M832.5 208.5h4.3M842.4 208.5h4.3M848.3 208.5h2.3M856.1 208.5h8.2M866.0 208.5h10.2M881.8 208.5h2.3M889.6 208.5h2.3M897.5 208.5h2.0M832.5 210.5h2.3M838.4 210.5h2.3M854.2 210.5h2.3M864.0 210.5h2.3M871.9 210.5h2.3M879.8 210.5h2.3M885.7 210.5h2.3M895.6 210.5h2.3M834.5 212.5h2.3M842.4 212.5h6.3M850.2 212.5h2.3M856.1 212.5h6.3M864.0 212.5h2.3M877.8 212.5h2.3M891.6 212.5h2.3M836.4 220.5h2.3M840.4 220.5h4.3M846.3 220.5h6.3M858.1 220.5h10.2M871.9 220.5h4.3M877.8 220.5h2.3M887.7 220.5h2.3M895.6 220.5h3.9M834.5 222.5h2.3M844.3 222.5h4.3M858.1 222.5h8.2M871.9 222.5h2.3M879.8 222.5h2.3M883.7 222.5h10.2M897.5 222.5h2.0M834.5 224.5h6.3M850.2 224.5h2.3M860.1 224.5h2.3M866.0 224.5h2.3M871.9 224.5h2.3M877.8 224.5h8.2M887.7 224.5h2.3M891.6 224.5h2.3M897.5 224.5h2.0" stroke="#666666" stroke-width="2.35" shape-rendering="crispEdges"/>
<path d="M868.0 134.5h2.3M883.7 134.5h2.3M895.6 134.5h3.9M832.5 136.5h2.3M842.4 136.5h2.3M850.2 136.5h4.3M856.1 136.5h2.3M871.9 136.5h2.3M832.5 138.5h2.3M862.1 138.5h2.3M869.9 138.5h2.3M879.8 138.5h2.3M883.7 138.5h4.3M852.2 146.5h2.3M860.1 146.5h2.3M868.0 146.5h4.3M877.8 146.5h4.3M885.7 146.5h2.3M893.6 146.5h2.3M838.4 148.5h2.3M852.2 148.5h2.3M868.0 148.5h2.3M871.9 148.5h2.3M875.9 148.5h2.3M881.8 148.5h2.3M889.6 148.5h2.3M895.6 148.5h2.3M848.3 150.5h4.3M854.2 150.5h2.3M858.1 150.5h2.3M879.8 150.5h6.3M895.6 150.5h2.3M891.6 152.5h2.3M852.2 158.5h2.3M883.7 158.5h2.3M887.7 158.5h2.3M836.4 160.5h6.3M844.3 160.5h2.3M848.3 160.5h2.3M860.1 160.5h2.3M868.0 160.5h2.3M891.6 160.5h2.3M832.5 162.5h2.3M838.4 162.5h2.3M850.2 162.5h2.3M860.1 162.5h2.3M868.0 162.5h2.3M877.8 162.5h4.3M895.6 162.5h2.3M832.5 164.5h4.3M840.4 164.5h2.3M844.3 164.5h6.3M852.2 164.5h2.3M860.1 164.5h6.3M868.0 164.5h2.3M877.8 164.5h2.3M889.6 164.5h2.3M895.6 164.5h2.3M832.5 172.5h2.3M836.4 172.5h6.3M860.1 172.5h2.3M864.0 172.5h4.3M869.9 172.5h2.3M875.9 172.5h4.3M893.6 172.5h2.3M864.0 174.5h4.3M875.9 174.5h4.3M887.7 174.5h6.3M840.4 176.5h2.3M852.2 176.5h2.3M856.1 176.5h2.3M860.1 176.5h2.3M864.0 176.5h2.3M873.9 176.5h2.3M877.8 176.5h2.3M893.6 176.5h2.3M834.5 184.5h2.3M842.4 184.5h2.3M848.3 184.5h2.3M856.1 184.5h2.3M862.1 184.5h4.3M869.9 184.5h6.3M877.8 184.5h2.3M891.6 184.5h2.3M895.6 184.5h2.3M840.4 186.5h2.3M848.3 186.5h4.3M869.9 186.5h4.3M885.7 186.5h2.3M832.5 188.5h2.3M842.4 188.5h2.3M848.3 188.5h2.3M852.2 188.5h2.3M866.0 188.5h2.3M883.7 188.5h4.3M889.6 194.5h2.3M848.3 196.5h2.3M854.2 196.5h4.3M873.9 196.5h2.3M879.8 196.5h6.3M832.5 198.5h4.3M856.1 198.5h2.3M869.9 198.5h2.3M877.8 198.5h2.3M895.6 198.5h3.9M834.5 200.5h4.3M846.3 200.5h2.3M854.2 200.5h2.3M858.1 200.5h2.3M875.9 200.5h2.3M891.6 200.5h2.3M895.6 200.5h3.9M838.4 208.5h2.3M850.2 208.5h4.3M877.8 208.5h2.3M883.7 208.5h6.3M834.5 210.5h4.3M850.2 210.5h2.3M858.1 210.5h2.3M866.0 210.5h4.3M873.9 210.5h2.3M883.7 210.5h2.3M887.7 210.5h8.2M848.3 212.5h2.3M868.0 212.5h4.3M881.8 212.5h4.3M889.6 212.5h2.3M895.6 212.5h3.9M834.5 220.5h2.3M854.2 220.5h4.3M868.0 220.5h4.3M875.9 220.5h2.3M879.8 220.5h2.3M889.6 220.5h4.3M838.4 222.5h2.3M848.3 222.5h2.3M856.1 222.5h2.3M873.9 222.5h2.3M893.6 222.5h2.3M832.5 224.5h2.3M846.3 224.5h2.3M852.2 224.5h2.3M862.1 224.5h4.3M885.7 224.5h2.3M895.6 224.5h2.3" stroke="#777777" stroke-width="2.35" shape-rendering="crispEdges"/>
<path d="M832.5 134.5h2.3M844.3 134.5h2.3M871.9 134.5h2.3M854.2 136.5h2.3M844.3 138.5h2.3M864.0 146.5h2.3M871.9 146.5h2.3M887.7 146.5h2.3M891.6 146.5h2.3M856.1 148.5h2.3M879.8 148.5h2.3M852.2 150.5h2.3M856.1 150.5h2.3M885.7 150.5h2.3M842.4 152.5h2.3M866.0 152.5h2.3M869.9 152.5h2.3M875.9 152.5h2.3M889.6 152.5h2.3M897.5 152.5h2.0M834.5 158.5h2.3M854.2 158.5h2.3M864.0 158.5h2.3M873.9 158.5h2.3M889.6 158.5h2.3M893.6 158.5h2.3M842.4 160.5h2.3M869.9 160.5h2.3M850.2 164.5h2.3M854.2 164.5h2.3M866.0 164.5h2.3M873.9 164.5h2.3M881.8 164.5h4.3M893.6 174.5h2.3M875.9 176.5h2.3M887.7 176.5h2.3M850.2 182.5h2.3M864.0 182.5h2.3M858.1 184.5h2.3M875.9 184.5h2.3M842.4 186.5h2.3M834.5 188.5h2.3M838.4 188.5h2.3M850.2 188.5h2.3M854.2 188.5h4.3M875.9 188.5h2.3M836.4 194.5h2.3M842.4 194.5h4.3M852.2 194.5h2.3M860.1 194.5h2.3M866.0 194.5h2.3M877.8 194.5h2.3M881.8 194.5h8.2M897.5 194.5h2.0M875.9 196.5h2.3M897.5 196.5h2.0M871.9 200.5h2.3M836.4 208.5h2.3M879.8 208.5h2.3M848.3 210.5h2.3M852.2 210.5h2.3M879.8 212.5h2.3M836.4 222.5h2.3M877.8 222.5h2.3" stroke="#888888" stroke-width="2.35" shape-rendering="crispEdges"/>
<path d="M834.5 134.5h2.3M862.1 146.5h2.3M832.5 152.5h2.3M844.3 152.5h2.3M856.1 152.5h2.3M860.1 152.5h2.3M873.9 152.5h2.3M881.8 152.5h2.3M885.7 152.5h2.3M895.6 152.5h2.3M836.4 158.5h8.2M848.3 158.5h2.3M858.1 158.5h6.3M866.0 158.5h2.3M869.9 158.5h4.3M875.9 158.5h2.3M881.8 158.5h2.3M885.7 158.5h2.3M891.6 158.5h2.3M895.6 158.5h3.9M895.6 172.5h2.3M838.4 182.5h2.3M844.3 182.5h2.3M848.3 182.5h2.3M852.2 182.5h2.3M869.9 182.5h2.3M873.9 182.5h2.3M881.8 182.5h2.3M893.6 182.5h2.3M879.8 184.5h2.3M832.5 194.5h2.3M838.4 194.5h4.3M846.3 194.5h2.3M850.2 194.5h2.3M879.8 194.5h2.3M891.6 194.5h6.3M877.8 196.5h2.3M877.8 206.5h2.3" stroke="#999999" stroke-width="2.35" shape-rendering="crispEdges"/>
<path d="M836.4 140.5h2.3M866.0 140.5h2.3M879.8 140.5h2.3M834.5 152.5h4.3M840.4 152.5h2.3M846.3 152.5h8.2M858.1 152.5h2.3M862.1 152.5h4.3M877.8 152.5h2.3M883.7 152.5h2.3M887.7 152.5h2.3M893.6 152.5h2.3M844.3 158.5h4.3M868.0 158.5h2.3M877.8 158.5h4.3M842.4 170.5h2.3M834.5 182.5h4.3M842.4 182.5h2.3M846.3 182.5h2.3M868.0 182.5h2.3M875.9 182.5h2.3M883.7 182.5h6.3M891.6 182.5h2.3M895.6 182.5h2.3M834.5 194.5h2.3M848.3 194.5h2.3M856.1 194.5h4.3M862.1 194.5h4.3M868.0 194.5h10.2M848.3 206.5h2.3M893.6 206.5h2.3" stroke="#aaaaaa" stroke-width="2.35" shape-rendering="crispEdges"/>
<path d="M864.0 140.5h2.3M889.6 140.5h2.3M838.4 152.5h2.3M854.2 152.5h2.3M868.0 152.5h2.3M871.9 152.5h2.3M879.8 152.5h2.3M832.5 158.5h2.3M850.2 158.5h2.3M834.5 170.5h2.3M840.4 170.5h2.3M850.2 170.5h2.3M856.1 170.5h2.3M860.1 170.5h2.3M864.0 170.5h8.2M875.9 170.5h2.3M881.8 170.5h4.3M897.5 170.5h2.0M832.5 182.5h2.3M840.4 182.5h2.3M854.2 182.5h8.2M871.9 182.5h2.3M877.8 182.5h2.3M889.6 182.5h2.3M897.5 182.5h2.0M832.5 206.5h2.3M840.4 206.5h2.3M844.3 206.5h2.3M858.1 206.5h12.2M871.9 206.5h4.3M879.8 206.5h6.3M897.5 206.5h2.0M838.4 226.5h2.3M846.3 226.5h4.3M856.1 226.5h2.3M868.0 226.5h2.3M887.7 226.5h4.3" stroke="#bbbbbb" stroke-width="2.35" shape-rendering="crispEdges"/>
<path d="M860.1 108.5h2.3M871.9 108.5h2.3M895.6 108.5h2.3M836.4 110.5h2.3M881.8 110.5h2.3M866.0 114.5h2.3M881.8 114.5h2.3M854.2 120.5h2.3M838.4 122.5h2.3M860.1 122.5h2.3M836.4 124.5h2.3M852.2 124.5h2.3M856.1 126.5h2.3M834.5 128.5h2.3M893.6 130.5h2.3M897.5 130.5h2.0M836.4 132.5h2.3M850.2 132.5h2.3M871.9 132.5h2.3M832.5 140.5h2.3M838.4 140.5h6.3M846.3 140.5h10.2M858.1 140.5h2.3M868.0 140.5h8.2M877.8 140.5h2.3M881.8 140.5h2.3M885.7 140.5h4.3M891.6 140.5h6.3M832.5 170.5h2.3M838.4 170.5h2.3M846.3 170.5h4.3M852.2 170.5h2.3M858.1 170.5h2.3M862.1 170.5h2.3M873.9 170.5h2.3M877.8 170.5h4.3M885.7 170.5h4.3M891.6 170.5h6.3M862.1 182.5h2.3M866.0 182.5h2.3M879.8 182.5h2.3M864.0 192.5h2.3M834.5 206.5h6.3M842.4 206.5h2.3M846.3 206.5h2.3M850.2 206.5h8.2M875.9 206.5h2.3M885.7 206.5h2.3M889.6 206.5h2.3M895.6 206.5h2.3M832.5 226.5h2.3M836.4 226.5h2.3M842.4 226.5h4.3M850.2 226.5h2.3M854.2 226.5h2.3M858.1 226.5h2.3M862.1 226.5h4.3M871.9 226.5h2.3M877.8 226.5h4.3M893.6 226.5h5.9" stroke="#cccccc" stroke-width="2.35" shape-rendering="crispEdges"/>
<path d="M834.5 108.5h2.3M856.1 108.5h2.3M881.8 108.5h2.3M891.6 108.5h2.3M832.5 110.5h2.3M869.9 110.5h2.3M873.9 110.5h2.3M877.8 110.5h2.3M895.6 110.5h3.9M869.9 112.5h2.3M834.5 114.5h2.3M842.4 114.5h2.3M854.2 114.5h6.3M889.6 114.5h6.3M844.3 116.5h2.3M871.9 116.5h2.3M832.5 118.5h2.3M836.4 118.5h6.3M858.1 118.5h4.3M852.2 120.5h2.3M871.9 120.5h2.3M877.8 120.5h2.3M881.8 120.5h4.3M864.0 124.5h2.3M832.5 126.5h4.3M862.1 126.5h2.3M869.9 126.5h2.3M873.9 126.5h2.3M881.8 126.5h2.3M885.7 126.5h2.3M893.6 126.5h2.3M897.5 126.5h2.0M854.2 128.5h2.3M893.6 128.5h2.3M895.6 130.5h2.3M838.4 132.5h2.3M842.4 132.5h2.3M854.2 132.5h2.3M860.1 132.5h2.3M883.7 132.5h2.3M844.3 140.5h2.3M856.1 140.5h2.3M860.1 140.5h4.3M875.9 140.5h2.3M883.7 140.5h2.3M897.5 140.5h2.0M848.3 142.5h2.3M858.1 142.5h2.3M877.8 142.5h2.3M840.4 144.5h2.3M868.0 144.5h2.3M848.3 154.5h2.3M866.0 154.5h2.3M868.0 156.5h2.3M887.7 166.5h2.3M873.9 168.5h2.3M836.4 170.5h2.3M844.3 170.5h2.3M854.2 170.5h2.3M871.9 170.5h2.3M889.6 170.5h2.3M834.5 178.5h2.3M848.3 178.5h2.3M856.1 190.5h2.3M881.8 190.5h2.3M879.8 202.5h2.3M897.5 202.5h2.0M846.3 204.5h2.3M862.1 204.5h2.3M877.8 204.5h4.3M869.9 206.5h2.3M887.7 206.5h2.3M891.6 206.5h2.3M862.1 214.5h2.3M891.6 216.5h2.3M850.2 218.5h2.3M858.1 218.5h2.3M862.1 218.5h2.3M881.8 218.5h2.3M885.7 218.5h2.3M889.6 218.5h2.3M895.6 218.5h2.3M834.5 226.5h2.3M840.4 226.5h2.3M852.2 226.5h2.3M860.1 226.5h2.3M866.0 226.5h2.3M869.9 226.5h2.3M873.9 226.5h4.3M881.8 226.5h6.3M891.6 226.5h2.3M891.6 230.5h2.3M885.7 232.5h2.3" stroke="#dddddd" stroke-width="2.35" shape-rendering="crispEdges"/>
<path d="M846.3 108.5h2.3M858.1 108.5h2.3M897.5 108.5h2.0M842.4 110.5h2.3M834.5 112.5h2.3M868.0 120.5h2.3M866.0 126.5h2.3M871.9 126.5h2.3M889.6 126.5h2.3M836.4 128.5h2.3M832.5 132.5h2.3M840.4 132.5h2.3M848.3 132.5h2.3M852.2 132.5h2.3M858.1 132.5h2.3M862.1 132.5h4.3M868.0 132.5h2.3M875.9 132.5h6.3M887.7 132.5h2.3M891.6 132.5h6.3M834.5 140.5h2.3M836.4 142.5h6.3M852.2 142.5h4.3M864.0 142.5h2.3M869.9 142.5h6.3M887.7 142.5h6.3M895.6 142.5h2.3M836.4 144.5h2.3M848.3 144.5h2.3M852.2 144.5h2.3M864.0 144.5h2.3M871.9 144.5h4.3M877.8 144.5h2.3M883.7 144.5h2.3M893.6 144.5h2.3M838.4 154.5h2.3M846.3 154.5h2.3M850.2 154.5h4.3M860.1 154.5h2.3M864.0 154.5h2.3M869.9 154.5h4.3M875.9 154.5h2.3M885.7 154.5h2.3M832.5 156.5h6.3M844.3 156.5h2.3M848.3 156.5h2.3M858.1 156.5h4.3M864.0 156.5h2.3M871.9 156.5h2.3M875.9 156.5h2.3M885.7 156.5h4.3M891.6 156.5h4.3M866.0 166.5h6.3M873.9 166.5h4.3M893.6 166.5h4.3M832.5 168.5h4.3M850.2 168.5h4.3M856.1 168.5h2.3M862.1 168.5h2.3M866.0 168.5h4.3M871.9 168.5h2.3M883.7 168.5h2.3M832.5 178.5h2.3M836.4 178.5h2.3M846.3 178.5h2.3M850.2 178.5h2.3M854.2 178.5h4.3M864.0 178.5h4.3M875.9 178.5h2.3M885.7 178.5h2.3M891.6 178.5h4.3M842.4 180.5h4.3M852.2 180.5h2.3M856.1 180.5h2.3M864.0 180.5h2.3M873.9 180.5h4.3M879.8 180.5h2.3M883.7 180.5h2.3M891.6 180.5h6.3M834.5 190.5h2.3M838.4 190.5h4.3M846.3 190.5h2.3M858.1 190.5h2.3M866.0 190.5h2.3M873.9 190.5h4.3M879.8 190.5h2.3M893.6 190.5h2.3M897.5 190.5h2.0M836.4 192.5h2.3M848.3 192.5h2.3M856.1 192.5h2.3M869.9 192.5h4.3M881.8 192.5h2.3M891.6 192.5h2.3M842.4 202.5h2.3M848.3 202.5h6.3M856.1 202.5h2.3M871.9 202.5h2.3M875.9 202.5h2.3M885.7 202.5h4.3M891.6 202.5h2.3M895.6 202.5h2.3M832.5 204.5h4.3M838.4 204.5h2.3M848.3 204.5h2.3M856.1 204.5h4.3M869.9 204.5h4.3M885.7 204.5h10.2M842.4 214.5h2.3M848.3 214.5h4.3M854.2 214.5h6.3M866.0 214.5h4.3M873.9 214.5h2.3M877.8 214.5h4.3M883.7 214.5h2.3M897.5 214.5h2.0M834.5 216.5h2.3M840.4 216.5h2.3M846.3 216.5h4.3M852.2 216.5h2.3M856.1 216.5h4.3M866.0 216.5h2.3M873.9 216.5h2.3M881.8 216.5h2.3M889.6 216.5h2.3M893.6 216.5h2.3M834.5 218.5h2.3M840.4 218.5h4.3M846.3 218.5h4.3M852.2 218.5h6.3M864.0 218.5h10.2M875.9 218.5h4.3M883.7 218.5h2.3M887.7 218.5h2.3M897.5 218.5h2.0M832.5 228.5h2.3M836.4 228.5h2.3M846.3 228.5h2.3M862.1 228.5h2.3M868.0 228.5h4.3M883.7 228.5h2.3M889.6 228.5h6.3M856.1 230.5h2.3M868.0 230.5h6.3M875.9 230.5h6.3M883.7 230.5h4.3M895.6 230.5h3.9M844.3 232.5h2.3M848.3 232.5h2.3M856.1 232.5h2.3M864.0 232.5h2.3M877.8 232.5h2.3M889.6 232.5h2.3M895.6 232.5h2.3" stroke="#eeeeee" stroke-width="2.35" shape-rendering="crispEdges"/>
<path d="M832.5 66.5h67.0M832.5 68.5h67.0M832.5 70.5h67.0M832.5 72.5h67.0M832.5 74.5h67.0M832.5 76.5h67.0M832.5 78.5h67.0M832.5 80.5h67.0M832.5 82.5h67.0M832.5 84.5h67.0M832.5 86.5h67.0M832.5 88.5h67.0M832.5 90.5h67.0M832.5 92.5h67.0M832.5 94.5h67.0M832.5 96.5h67.0M832.5 98.5h67.0M832.5 100.5h67.0M832.5 102.5h67.0M832.5 104.5h67.0M832.5 106.5h67.0M832.5 108.5h2.3M836.4 108.5h10.2M848.3 108.5h8.2M862.1 108.5h10.2M873.9 108.5h8.2M883.7 108.5h8.2M893.6 108.5h2.3M834.5 110.5h2.3M838.4 110.5h4.3M844.3 110.5h26.0M871.9 110.5h2.3M875.9 110.5h2.3M879.8 110.5h2.3M883.7 110.5h12.2M832.5 112.5h2.3M836.4 112.5h33.9M871.9 112.5h27.6M832.5 114.5h2.3M836.4 114.5h6.3M844.3 114.5h10.2M860.1 114.5h6.3M868.0 114.5h14.1M883.7 114.5h6.3M895.6 114.5h3.9M832.5 116.5h12.2M846.3 116.5h26.0M873.9 116.5h25.6M834.5 118.5h2.3M842.4 118.5h16.1M862.1 118.5h37.4M832.5 120.5h20.1M856.1 120.5h12.2M869.9 120.5h2.3M873.9 120.5h4.3M879.8 120.5h2.3M885.7 120.5h13.8M832.5 122.5h6.3M840.4 122.5h20.1M862.1 122.5h37.4M832.5 124.5h4.3M838.4 124.5h14.1M854.2 124.5h10.2M866.0 124.5h33.5M836.4 126.5h20.1M858.1 126.5h4.3M864.0 126.5h2.3M868.0 126.5h2.3M875.9 126.5h6.3M883.7 126.5h2.3M887.7 126.5h2.3M891.6 126.5h2.3M895.6 126.5h2.3M832.5 128.5h2.3M838.4 128.5h16.1M856.1 128.5h37.8M895.6 128.5h3.9M832.5 130.5h61.4M834.5 132.5h2.3M844.3 132.5h4.3M856.1 132.5h2.3M866.0 132.5h2.3M869.9 132.5h2.3M873.9 132.5h2.3M881.8 132.5h2.3M885.7 132.5h2.3M889.6 132.5h2.3M897.5 132.5h2.0M832.5 142.5h4.3M842.4 142.5h6.3M850.2 142.5h2.3M856.1 142.5h2.3M860.1 142.5h4.3M866.0 142.5h4.3M875.9 142.5h2.3M879.8 142.5h8.2M893.6 142.5h2.3M897.5 142.5h2.0M832.5 144.5h4.3M838.4 144.5h2.3M842.4 144.5h6.3M850.2 144.5h2.3M854.2 144.5h10.2M866.0 144.5h2.3M869.9 144.5h2.3M875.9 144.5h2.3M879.8 144.5h4.3M885.7 144.5h8.2M895.6 144.5h3.9M832.5 154.5h6.3M840.4 154.5h6.3M854.2 154.5h6.3M862.1 154.5h2.3M868.0 154.5h2.3M873.9 154.5h2.3M877.8 154.5h8.2M887.7 154.5h11.8M838.4 156.5h6.3M846.3 156.5h2.3M850.2 156.5h8.2M862.1 156.5h2.3M866.0 156.5h2.3M869.9 156.5h2.3M873.9 156.5h2.3M877.8 156.5h8.2M889.6 156.5h2.3M895.6 156.5h3.9M832.5 166.5h33.9M871.9 166.5h2.3M877.8 166.5h10.2M889.6 166.5h4.3M897.5 166.5h2.0M836.4 168.5h14.1M854.2 168.5h2.3M858.1 168.5h4.3M864.0 168.5h2.3M869.9 168.5h2.3M875.9 168.5h8.2M885.7 168.5h13.8M838.4 178.5h8.2M852.2 178.5h2.3M858.1 178.5h6.3M868.0 178.5h8.2M877.8 178.5h8.2M887.7 178.5h4.3M895.6 178.5h3.9M832.5 180.5h10.2M846.3 180.5h6.3M854.2 180.5h2.3M858.1 180.5h6.3M866.0 180.5h8.2M877.8 180.5h2.3M881.8 180.5h2.3M885.7 180.5h6.3M897.5 180.5h2.0M832.5 190.5h2.3M836.4 190.5h2.3M842.4 190.5h4.3M848.3 190.5h8.2M860.1 190.5h6.3M868.0 190.5h6.3M877.8 190.5h2.3M883.7 190.5h10.2M895.6 190.5h2.3M832.5 192.5h4.3M838.4 192.5h10.2M850.2 192.5h6.3M858.1 192.5h6.3M866.0 192.5h4.3M873.9 192.5h8.2M883.7 192.5h8.2M893.6 192.5h5.9M832.5 202.5h10.2M844.3 202.5h4.3M854.2 202.5h2.3M858.1 202.5h14.1M873.9 202.5h2.3M877.8 202.5h2.3M881.8 202.5h4.3M889.6 202.5h2.3M893.6 202.5h2.3M836.4 204.5h2.3M840.4 204.5h6.3M850.2 204.5h6.3M860.1 204.5h2.3M864.0 204.5h6.3M873.9 204.5h4.3M881.8 204.5h4.3M895.6 204.5h3.9M832.5 214.5h10.2M844.3 214.5h4.3M852.2 214.5h2.3M860.1 214.5h2.3M864.0 214.5h2.3M869.9 214.5h4.3M875.9 214.5h2.3M881.8 214.5h2.3M885.7 214.5h12.2M832.5 216.5h2.3M836.4 216.5h4.3M842.4 216.5h4.3M850.2 216.5h2.3M854.2 216.5h2.3M860.1 216.5h6.3M868.0 216.5h6.3M875.9 216.5h6.3M883.7 216.5h6.3M895.6 216.5h3.9M832.5 218.5h2.3M836.4 218.5h4.3M844.3 218.5h2.3M860.1 218.5h2.3M873.9 218.5h2.3M879.8 218.5h2.3M891.6 218.5h4.3M834.5 228.5h2.3M838.4 228.5h8.2M848.3 228.5h14.1M864.0 228.5h4.3M871.9 228.5h12.2M885.7 228.5h4.3M895.6 228.5h3.9M832.5 230.5h24.0M858.1 230.5h10.2M873.9 230.5h2.3M881.8 230.5h2.3M887.7 230.5h4.3M893.6 230.5h2.3M832.5 232.5h12.2M846.3 232.5h2.3M850.2 232.5h6.3M858.1 232.5h6.3M866.0 232.5h12.2M879.8 232.5h6.3M887.7 232.5h2.3M891.6 232.5h4.3M897.5 232.5h2.0" stroke="#ffffff" stroke-width="2.35" shape-rendering="crispEdges"/>
<path d="M954.7 134.5h2.3M960.6 134.5h2.3M956.6 146.5h2.3M964.5 146.5h2.3M938.9 148.5h2.3M966.5 148.5h2.3M933.0 150.5h2.3M958.6 150.5h2.3M984.2 150.5h4.3M936.9 190.5h2.3" stroke="#000000" stroke-width="2.35" shape-rendering="crispEdges"/>
<path d="M946.8 134.5h2.3M984.2 134.5h2.3M950.7 136.5h2.3M966.5 136.5h4.3M980.3 136.5h2.3M942.9 138.5h2.3M984.2 138.5h2.3M980.3 142.5h2.3M966.5 150.5h2.3M986.2 154.5h2.3M990.1 158.5h2.3M948.8 210.5h2.3M988.2 214.5h2.3" stroke="#111111" stroke-width="2.35" shape-rendering="crispEdges"/>
<path d="M950.7 138.5h2.3M960.6 138.5h2.3M944.8 140.5h2.3M974.4 146.5h2.3M992.1 146.5h2.3M935.0 148.5h2.3M998.0 148.5h2.0M988.2 154.5h2.3M998.0 182.5h2.0M966.5 190.5h2.3M938.9 200.5h2.3M944.8 216.5h2.3M958.6 224.5h2.3M950.7 228.5h2.3" stroke="#222222" stroke-width="2.35" shape-rendering="crispEdges"/>
<path d="M956.6 134.5h4.3M966.5 134.5h2.3M972.4 134.5h2.3M998.0 134.5h2.0M978.3 136.5h2.3M956.6 138.5h2.3M972.4 138.5h2.3M980.3 138.5h2.3M996.1 138.5h2.3M935.0 142.5h2.3M982.3 142.5h2.3M936.9 146.5h2.3M942.9 146.5h2.3M950.7 146.5h2.3M994.1 146.5h2.3M948.8 148.5h2.3M952.7 148.5h2.3M972.4 148.5h2.3M960.6 150.5h2.3M976.4 156.5h2.3M968.5 158.5h2.3M954.7 186.5h2.3M966.5 186.5h2.3M970.4 188.5h2.3M933.0 190.5h2.3M952.7 200.5h2.3M960.6 200.5h2.3M972.4 200.5h2.3M936.9 202.5h2.3M944.8 206.5h2.3M935.0 208.5h2.3M954.7 226.5h2.3M988.2 230.5h2.3" stroke="#333333" stroke-width="2.35" shape-rendering="crispEdges"/>
<path d="M948.8 132.5h2.3M962.6 134.5h2.3M978.3 134.5h2.3M936.9 136.5h2.3M942.9 136.5h2.3M954.7 136.5h2.3M962.6 136.5h2.3M970.4 136.5h2.3M984.2 136.5h2.3M998.0 136.5h2.0M988.2 138.5h2.3M992.1 138.5h2.3M972.4 140.5h2.3M990.1 140.5h2.3M968.5 142.5h2.3M990.1 144.5h2.3M980.3 146.5h2.3M936.9 148.5h2.3M942.9 148.5h2.3M946.8 148.5h2.3M950.7 148.5h2.3M956.6 148.5h2.3M962.6 148.5h2.3M970.4 148.5h2.3M986.2 148.5h2.3M964.5 150.5h2.3M968.5 150.5h2.3M974.4 150.5h2.3M982.3 150.5h2.3M996.1 150.5h3.9M938.9 152.5h2.3M990.1 152.5h2.3M996.1 152.5h2.3M948.8 154.5h2.3M992.1 156.5h2.3M942.9 158.5h2.3M960.6 158.5h2.3M954.7 162.5h2.3M990.1 166.5h2.3M998.0 166.5h2.0M940.9 168.5h2.3M990.1 170.5h2.3M933.0 172.5h2.3M996.1 172.5h2.3M944.8 174.5h2.3M990.1 174.5h2.3M970.4 178.5h2.3M974.4 178.5h2.3M970.4 182.5h4.3M952.7 184.5h2.3M980.3 184.5h2.3M988.2 186.5h2.3M942.9 190.5h2.3M950.7 194.5h2.3M935.0 198.5h2.3M944.8 198.5h2.3M954.7 198.5h2.3M982.3 204.5h2.3M956.6 208.5h2.3M972.4 210.5h2.3M978.3 214.5h4.3M958.6 216.5h2.3M968.5 216.5h2.3M978.3 218.5h2.3M958.6 222.5h2.3M970.4 222.5h2.3M942.9 228.5h2.3M948.8 232.5h2.3" stroke="#444444" stroke-width="2.35" shape-rendering="crispEdges"/>
<path d="M994.1 134.5h4.3M946.8 136.5h4.3M982.3 136.5h2.3M996.1 136.5h2.3M933.0 138.5h2.3M962.6 138.5h2.3M968.5 138.5h4.3M990.1 138.5h2.3M998.0 138.5h2.0M933.0 140.5h2.3M936.9 140.5h2.3M952.7 140.5h2.3M992.1 140.5h2.3M954.7 142.5h2.3M972.4 142.5h2.3M952.7 144.5h2.3M964.5 144.5h2.3M933.0 146.5h4.3M952.7 146.5h2.3M978.3 146.5h2.3M982.3 146.5h2.3M988.2 146.5h2.3M954.7 148.5h2.3M960.6 148.5h2.3M964.5 148.5h2.3M984.2 148.5h2.3M988.2 148.5h2.3M935.0 150.5h2.3M938.9 150.5h2.3M942.9 150.5h2.3M948.8 150.5h6.3M940.9 152.5h2.3M964.5 154.5h2.3M946.8 156.5h2.3M956.6 156.5h2.3M944.8 158.5h4.3M954.7 158.5h2.3M962.6 160.5h2.3M996.1 160.5h3.9M944.8 164.5h2.3M966.5 164.5h2.3M982.3 164.5h2.3M986.2 164.5h2.3M960.6 170.5h2.3M974.4 172.5h2.3M988.2 172.5h2.3M998.0 172.5h2.0M954.7 174.5h2.3M954.7 176.5h2.3M960.6 176.5h2.3M964.5 178.5h2.3M958.6 180.5h2.3M980.3 180.5h2.3M992.1 180.5h2.3M940.9 182.5h2.3M998.0 184.5h2.0M944.8 188.5h2.3M952.7 188.5h2.3M966.5 188.5h2.3M996.1 188.5h2.3M946.8 192.5h2.3M972.4 192.5h2.3M968.5 194.5h2.3M938.9 198.5h2.3M942.9 198.5h2.3M992.1 198.5h2.3M942.9 200.5h2.3M956.6 204.5h2.3M986.2 204.5h2.3M942.9 206.5h2.3M964.5 206.5h2.3M990.1 208.5h2.3M968.5 212.5h2.3M935.0 214.5h2.3M938.9 214.5h2.3M994.1 214.5h2.3M992.1 218.5h2.3M944.8 222.5h2.3M980.3 224.5h2.3M942.9 226.5h2.3M974.4 226.5h2.3M948.8 228.5h2.3M950.7 230.5h2.3M962.6 230.5h2.3M976.4 230.5h2.3" stroke="#555555" stroke-width="2.35" shape-rendering="crispEdges"/>
<path d="M933.0 132.5h2.3M950.7 132.5h2.3M986.2 132.5h2.3M933.0 134.5h2.3M948.8 134.5h2.3M980.3 134.5h2.3M988.2 134.5h2.3M933.0 136.5h2.3M974.4 136.5h2.3M986.2 136.5h2.3M938.9 138.5h2.3M948.8 138.5h2.3M952.7 138.5h2.3M994.1 138.5h2.3M940.9 140.5h2.3M950.7 140.5h2.3M956.6 140.5h2.3M984.2 140.5h2.3M998.0 140.5h2.0M994.1 142.5h2.3M996.1 144.5h2.3M938.9 146.5h4.3M958.6 146.5h2.3M972.4 146.5h2.3M976.4 146.5h2.3M933.0 148.5h2.3M974.4 148.5h4.3M990.1 148.5h2.3M994.1 148.5h2.3M946.8 150.5h2.3M990.1 150.5h2.3M994.1 150.5h2.3M968.5 152.5h4.3M954.7 154.5h2.3M982.3 154.5h2.3M984.2 156.5h2.3M962.6 158.5h2.3M956.6 160.5h2.3M964.5 160.5h2.3M994.1 160.5h2.3M936.9 164.5h2.3M938.9 166.5h2.3M944.8 166.5h2.3M954.7 166.5h2.3M933.0 168.5h2.3M942.9 168.5h2.3M948.8 168.5h2.3M950.7 170.5h2.3M964.5 170.5h2.3M994.1 170.5h2.3M936.9 174.5h2.3M952.7 174.5h2.3M958.6 174.5h2.3M970.4 174.5h2.3M992.1 174.5h2.3M944.8 176.5h2.3M966.5 176.5h4.3M940.9 178.5h2.3M966.5 184.5h2.3M970.4 184.5h2.3M936.9 186.5h2.3M962.6 186.5h2.3M968.5 186.5h2.3M974.4 186.5h2.3M980.3 186.5h2.3M954.7 188.5h2.3M990.1 188.5h2.3M994.1 188.5h2.3M944.8 190.5h2.3M948.8 190.5h2.3M968.5 190.5h2.3M978.3 192.5h2.3M994.1 192.5h2.3M990.1 194.5h2.3M940.9 196.5h4.3M962.6 196.5h2.3M968.5 196.5h2.3M976.4 198.5h2.3M984.2 198.5h2.3M990.1 200.5h2.3M936.9 204.5h2.3M952.7 204.5h2.3M938.9 206.5h2.3M988.2 206.5h2.3M996.1 206.5h2.3M944.8 208.5h2.3M964.5 208.5h2.3M992.1 208.5h2.3M998.0 208.5h2.0M956.6 210.5h2.3M980.3 210.5h2.3M948.8 212.5h4.3M966.5 212.5h2.3M978.3 212.5h2.3M982.3 214.5h2.3M990.1 214.5h2.3M992.1 216.5h2.3M996.1 216.5h2.3M942.9 218.5h2.3M984.2 218.5h2.3M958.6 220.5h2.3M978.3 220.5h2.3M972.4 222.5h4.3M966.5 224.5h2.3M958.6 226.5h2.3M964.5 226.5h2.3M990.1 226.5h2.3M968.5 228.5h2.3M996.1 228.5h3.9M968.5 230.5h2.3M980.3 230.5h4.3M996.1 230.5h2.3M952.7 232.5h2.3M956.6 232.5h2.3" stroke="#666666" stroke-width="2.35" shape-rendering="crispEdges"/>
<path d="M938.9 132.5h2.3M954.7 132.5h2.3M974.4 132.5h2.3M978.3 132.5h2.3M935.0 134.5h2.3M992.1 134.5h2.3M938.9 136.5h4.3M944.8 136.5h2.3M956.6 136.5h2.3M990.1 136.5h6.3M958.6 138.5h2.3M964.5 138.5h2.3M986.2 138.5h2.3M954.7 140.5h2.3M940.9 142.5h2.3M964.5 142.5h2.3M976.4 142.5h2.3M988.2 142.5h2.3M962.6 144.5h2.3M972.4 144.5h2.3M992.1 144.5h2.3M954.7 146.5h2.3M960.6 146.5h2.3M986.2 146.5h2.3M998.0 146.5h2.0M978.3 148.5h4.3M992.1 148.5h2.3M940.9 150.5h2.3M992.1 150.5h2.3M946.8 152.5h2.3M982.3 152.5h2.3M938.9 154.5h2.3M950.7 154.5h4.3M974.4 154.5h2.3M992.1 154.5h2.3M935.0 156.5h2.3M933.0 158.5h2.3M978.3 158.5h2.3M938.9 160.5h2.3M942.9 160.5h2.3M948.8 160.5h2.3M942.9 162.5h2.3M952.7 162.5h2.3M946.8 164.5h2.3M976.4 164.5h4.3M988.2 164.5h2.3M956.6 166.5h2.3M994.1 166.5h4.3M958.6 168.5h4.3M970.4 168.5h2.3M976.4 168.5h4.3M998.0 168.5h2.0M936.9 170.5h4.3M952.7 170.5h2.3M958.6 172.5h2.3M964.5 172.5h2.3M950.7 174.5h2.3M980.3 174.5h2.3M940.9 176.5h2.3M956.6 176.5h2.3M972.4 176.5h2.3M978.3 176.5h2.3M992.1 176.5h2.3M950.7 180.5h4.3M966.5 180.5h2.3M936.9 182.5h2.3M992.1 182.5h2.3M996.1 184.5h2.3M935.0 186.5h2.3M956.6 188.5h2.3M964.5 188.5h2.3M950.7 192.5h2.3M954.7 192.5h2.3M964.5 192.5h2.3M996.1 192.5h2.3M944.8 194.5h2.3M960.6 194.5h2.3M978.3 194.5h2.3M998.0 194.5h2.0M935.0 196.5h6.3M948.8 196.5h2.3M956.6 196.5h2.3M964.5 196.5h2.3M948.8 198.5h2.3M972.4 198.5h2.3M982.3 198.5h2.3M935.0 200.5h2.3M942.9 202.5h2.3M980.3 202.5h2.3M978.3 204.5h2.3M990.1 204.5h2.3M940.9 206.5h2.3M946.8 206.5h2.3M958.6 206.5h2.3M974.4 206.5h2.3M986.2 206.5h2.3M966.5 208.5h4.3M982.3 208.5h2.3M933.0 210.5h2.3M966.5 210.5h2.3M990.1 210.5h2.3M940.9 212.5h2.3M974.4 212.5h4.3M998.0 212.5h2.0M942.9 214.5h2.3M946.8 214.5h2.3M972.4 214.5h2.3M996.1 214.5h2.3M938.9 216.5h4.3M954.7 216.5h2.3M964.5 216.5h2.3M938.9 218.5h2.3M933.0 220.5h2.3M952.7 220.5h2.3M984.2 220.5h2.3M948.8 222.5h2.3M962.6 222.5h2.3M994.1 224.5h2.3M998.0 224.5h2.0M940.9 228.5h2.3M944.8 228.5h2.3M990.1 228.5h2.3M944.8 230.5h2.3M936.9 232.5h4.3M942.9 232.5h2.3" stroke="#777777" stroke-width="2.35" shape-rendering="crispEdges"/>
<path d="M944.8 132.5h4.3M966.5 132.5h2.3M990.1 132.5h6.3M938.9 134.5h2.3M944.8 134.5h2.3M970.4 134.5h2.3M974.4 134.5h2.3M982.3 134.5h2.3M986.2 134.5h2.3M964.5 136.5h2.3M972.4 136.5h2.3M976.4 136.5h2.3M940.9 138.5h2.3M976.4 138.5h4.3M982.3 138.5h2.3M962.6 140.5h4.3M970.4 140.5h2.3M982.3 140.5h2.3M948.8 142.5h6.3M974.4 142.5h2.3M978.3 142.5h2.3M946.8 144.5h4.3M958.6 144.5h2.3M966.5 144.5h4.3M974.4 144.5h2.3M970.4 146.5h2.3M984.2 146.5h2.3M982.3 148.5h2.3M996.1 148.5h2.3M956.6 150.5h2.3M962.6 150.5h2.3M944.8 152.5h2.3M960.6 152.5h2.3M966.5 152.5h2.3M980.3 152.5h2.3M986.2 152.5h4.3M994.1 152.5h2.3M956.6 154.5h4.3M976.4 154.5h2.3M938.9 156.5h2.3M942.9 156.5h4.3M950.7 156.5h2.3M968.5 156.5h2.3M990.1 156.5h2.3M938.9 158.5h2.3M958.6 158.5h2.3M952.7 160.5h2.3M980.3 160.5h2.3M986.2 160.5h4.3M935.0 162.5h2.3M948.8 162.5h2.3M974.4 162.5h2.3M982.3 162.5h2.3M940.9 164.5h2.3M952.7 164.5h2.3M960.6 164.5h4.3M980.3 164.5h2.3M984.2 164.5h2.3M990.1 164.5h2.3M952.7 166.5h2.3M970.4 166.5h2.3M980.3 166.5h2.3M984.2 166.5h2.3M992.1 166.5h2.3M982.3 168.5h2.3M994.1 168.5h2.3M933.0 170.5h2.3M948.8 170.5h2.3M962.6 170.5h2.3M982.3 170.5h2.3M996.1 170.5h2.3M936.9 172.5h2.3M940.9 172.5h2.3M952.7 172.5h4.3M982.3 172.5h2.3M933.0 174.5h4.3M940.9 174.5h2.3M956.6 174.5h2.3M962.6 174.5h2.3M966.5 174.5h2.3M998.0 174.5h2.0M982.3 176.5h2.3M980.3 178.5h2.3M984.2 178.5h2.3M948.8 180.5h2.3M982.3 180.5h2.3M998.0 180.5h2.0M944.8 182.5h2.3M956.6 182.5h2.3M962.6 182.5h2.3M976.4 182.5h2.3M982.3 182.5h2.3M990.1 182.5h2.3M996.1 182.5h2.3M936.9 184.5h2.3M940.9 184.5h4.3M960.6 184.5h2.3M986.2 184.5h2.3M992.1 184.5h2.3M976.4 186.5h2.3M942.9 188.5h2.3M940.9 190.5h2.3M958.6 190.5h2.3M962.6 190.5h2.3M935.0 192.5h2.3M948.8 192.5h2.3M968.5 192.5h2.3M986.2 192.5h2.3M972.4 194.5h2.3M984.2 194.5h2.3M944.8 196.5h2.3M990.1 196.5h2.3M996.1 196.5h2.3M946.8 198.5h2.3M970.4 198.5h2.3M994.1 198.5h2.3M948.8 200.5h2.3M976.4 200.5h2.3M980.3 200.5h2.3M960.6 202.5h4.3M968.5 202.5h2.3M986.2 202.5h2.3M998.0 202.5h2.0M933.0 204.5h2.3M944.8 204.5h2.3M964.5 204.5h2.3M935.0 206.5h2.3M952.7 206.5h2.3M970.4 206.5h4.3M998.0 206.5h2.0M948.8 208.5h2.3M960.6 208.5h2.3M970.4 208.5h4.3M996.1 208.5h2.3M938.9 210.5h2.3M944.8 210.5h2.3M950.7 210.5h2.3M968.5 210.5h4.3M974.4 210.5h2.3M988.2 210.5h2.3M996.1 210.5h3.9M936.9 212.5h2.3M952.7 212.5h2.3M992.1 212.5h2.3M933.0 214.5h2.3M950.7 214.5h2.3M960.6 214.5h2.3M964.5 214.5h4.3M974.4 214.5h2.3M948.8 216.5h2.3M980.3 216.5h2.3M998.0 216.5h2.0M952.7 218.5h2.3M956.6 218.5h2.3M968.5 218.5h2.3M986.2 218.5h2.3M938.9 220.5h2.3M980.3 220.5h2.3M935.0 222.5h2.3M942.9 222.5h2.3M986.2 222.5h2.3M935.0 224.5h2.3M944.8 224.5h2.3M956.6 224.5h2.3M946.8 226.5h2.3M966.5 226.5h2.3M970.4 226.5h2.3M994.1 226.5h2.3M938.9 228.5h2.3M956.6 228.5h2.3M970.4 228.5h2.3M980.3 228.5h2.3M994.1 228.5h2.3M938.9 230.5h2.3M948.8 230.5h2.3M956.6 230.5h2.3M984.2 230.5h2.3M933.0 232.5h2.3M972.4 232.5h2.3M976.4 232.5h2.3" stroke="#888888" stroke-width="2.35" shape-rendering="crispEdges"/>
<path d="M970.4 132.5h2.3M988.2 132.5h2.3M940.9 134.5h2.3M968.5 134.5h2.3M958.6 136.5h2.3M988.2 136.5h2.3M954.7 138.5h2.3M958.6 140.5h2.3M968.5 140.5h2.3M978.3 140.5h2.3M986.2 140.5h2.3M996.1 140.5h2.3M944.8 142.5h2.3M956.6 142.5h2.3M960.6 142.5h4.3M966.5 142.5h2.3M933.0 144.5h2.3M956.6 144.5h2.3M976.4 144.5h2.3M988.2 144.5h2.3M944.8 146.5h2.3M948.8 146.5h2.3M966.5 146.5h2.3M990.1 146.5h2.3M996.1 146.5h2.3M940.9 148.5h2.3M944.8 148.5h2.3M954.7 150.5h2.3M972.4 150.5h2.3M933.0 152.5h2.3M948.8 152.5h4.3M954.7 152.5h4.3M964.5 152.5h2.3M976.4 152.5h2.3M984.2 152.5h2.3M940.9 154.5h2.3M978.3 154.5h4.3M933.0 156.5h2.3M972.4 156.5h2.3M988.2 156.5h2.3M994.1 156.5h2.3M936.9 158.5h2.3M948.8 158.5h2.3M970.4 158.5h2.3M976.4 158.5h2.3M998.0 158.5h2.0M954.7 160.5h2.3M966.5 160.5h2.3M936.9 162.5h2.3M940.9 162.5h2.3M946.8 162.5h2.3M956.6 162.5h2.3M960.6 162.5h2.3M972.4 162.5h2.3M990.1 162.5h4.3M998.0 162.5h2.0M974.4 164.5h2.3M960.6 166.5h2.3M964.5 166.5h2.3M935.0 168.5h2.3M938.9 168.5h2.3M972.4 168.5h2.3M990.1 168.5h2.3M954.7 170.5h2.3M968.5 170.5h2.3M992.1 170.5h2.3M942.9 172.5h2.3M978.3 172.5h2.3M938.9 174.5h2.3M948.8 174.5h2.3M968.5 174.5h2.3M974.4 174.5h2.3M935.0 176.5h2.3M974.4 176.5h2.3M988.2 176.5h2.3M998.0 176.5h2.0M954.7 178.5h2.3M960.6 178.5h2.3M976.4 178.5h2.3M988.2 178.5h2.3M996.1 178.5h2.3M933.0 180.5h2.3M938.9 180.5h2.3M954.7 180.5h2.3M960.6 180.5h2.3M978.3 180.5h2.3M933.0 182.5h2.3M994.1 182.5h2.3M935.0 184.5h2.3M938.9 184.5h2.3M954.7 184.5h4.3M942.9 186.5h2.3M952.7 186.5h2.3M958.6 186.5h2.3M982.3 186.5h2.3M986.2 186.5h2.3M994.1 186.5h2.3M998.0 186.5h2.0M933.0 188.5h4.3M940.9 188.5h2.3M950.7 188.5h2.3M986.2 188.5h2.3M950.7 190.5h2.3M974.4 190.5h2.3M994.1 190.5h2.3M998.0 190.5h2.0M944.8 192.5h2.3M956.6 192.5h2.3M976.4 192.5h2.3M936.9 194.5h2.3M940.9 194.5h2.3M948.8 194.5h2.3M952.7 194.5h2.3M966.5 194.5h2.3M974.4 194.5h2.3M980.3 194.5h2.3M952.7 196.5h4.3M970.4 196.5h2.3M976.4 196.5h2.3M980.3 196.5h2.3M984.2 196.5h2.3M933.0 198.5h2.3M958.6 198.5h2.3M980.3 198.5h2.3M940.9 200.5h2.3M958.6 200.5h2.3M970.4 200.5h2.3M988.2 200.5h2.3M950.7 202.5h2.3M956.6 202.5h2.3M982.3 202.5h4.3M996.1 202.5h2.3M940.9 204.5h2.3M946.8 204.5h2.3M970.4 204.5h2.3M974.4 204.5h2.3M954.7 206.5h2.3M990.1 206.5h2.3M933.0 208.5h2.3M940.9 208.5h2.3M942.9 210.5h2.3M978.3 210.5h2.3M986.2 210.5h2.3M938.9 212.5h2.3M970.4 212.5h2.3M988.2 212.5h2.3M944.8 214.5h2.3M954.7 214.5h2.3M958.6 214.5h2.3M984.2 214.5h2.3M933.0 216.5h2.3M960.6 216.5h2.3M978.3 216.5h2.3M986.2 216.5h2.3M940.9 218.5h2.3M946.8 218.5h6.3M962.6 218.5h2.3M974.4 218.5h2.3M948.8 220.5h2.3M972.4 220.5h2.3M936.9 222.5h2.3M968.5 222.5h2.3M988.2 222.5h2.3M996.1 222.5h2.3M933.0 224.5h2.3M942.9 224.5h2.3M972.4 224.5h2.3M938.9 226.5h2.3M960.6 226.5h2.3M968.5 226.5h2.3M980.3 226.5h4.3M986.2 226.5h2.3M992.1 226.5h2.3M933.0 228.5h2.3M936.9 228.5h2.3M952.7 228.5h2.3M966.5 228.5h2.3M972.4 228.5h2.3M978.3 228.5h2.3M986.2 228.5h2.3M933.0 230.5h2.3M960.6 230.5h2.3M986.2 230.5h2.3M960.6 232.5h2.3M978.3 232.5h2.3M988.2 232.5h2.3M996.1 232.5h2.3" stroke="#999999" stroke-width="2.35" shape-rendering="crispEdges"/>
<path d="M933.0 66.5h67.0M933.0 68.5h67.0M933.0 70.5h67.0M933.0 72.5h67.0M933.0 74.5h67.0M933.0 76.5h67.0M933.0 78.5h67.0M933.0 80.5h67.0M933.0 82.5h67.0M933.0 84.5h67.0M933.0 86.5h67.0M933.0 88.5h67.0M933.0 90.5h67.0M933.0 92.5h67.0M933.0 94.5h67.0M933.0 96.5h67.0M933.0 98.5h67.0M933.0 100.5h67.0M933.0 102.5h67.0M933.0 104.5h67.0M933.0 106.5h67.0M933.0 108.5h67.0M933.0 110.5h67.0M933.0 112.5h67.0M933.0 114.5h67.0M933.0 116.5h67.0M933.0 118.5h67.0M933.0 120.5h67.0M933.0 122.5h67.0M933.0 124.5h67.0M933.0 126.5h67.0M933.0 128.5h67.0M933.0 130.5h67.0M960.6 132.5h2.3M964.5 132.5h2.3M968.5 132.5h2.3M976.4 132.5h2.3M984.2 132.5h2.3M998.0 132.5h2.0M936.9 134.5h2.3M952.7 134.5h2.3M990.1 134.5h2.3M935.0 136.5h2.3M935.0 138.5h2.3M944.8 138.5h2.3M966.5 138.5h2.3M946.8 140.5h2.3M960.6 140.5h2.3M986.2 142.5h2.3M935.0 144.5h2.3M940.9 144.5h2.3M950.7 144.5h2.3M962.6 146.5h2.3M968.5 148.5h2.3M988.2 150.5h2.3M936.9 152.5h2.3M942.9 152.5h2.3M972.4 152.5h4.3M978.3 152.5h2.3M998.0 152.5h2.0M936.9 156.5h2.3M954.7 156.5h2.3M958.6 156.5h2.3M962.6 156.5h2.3M978.3 156.5h2.3M966.5 158.5h2.3M980.3 158.5h2.3M984.2 158.5h2.3M944.8 160.5h2.3M976.4 160.5h2.3M933.0 162.5h2.3M976.4 162.5h2.3M933.0 164.5h2.3M942.9 164.5h2.3M956.6 164.5h2.3M968.5 164.5h4.3M992.1 164.5h2.3M936.9 166.5h2.3M942.9 166.5h2.3M946.8 166.5h2.3M968.5 166.5h2.3M982.3 166.5h2.3M986.2 166.5h4.3M944.8 168.5h4.3M966.5 168.5h2.3M986.2 168.5h2.3M940.9 170.5h4.3M946.8 170.5h2.3M984.2 170.5h4.3M946.8 172.5h2.3M956.6 172.5h2.3M976.4 172.5h2.3M988.2 174.5h2.3M933.0 176.5h2.3M950.7 176.5h2.3M958.6 176.5h2.3M970.4 176.5h2.3M980.3 176.5h2.3M990.1 176.5h2.3M948.8 178.5h6.3M962.6 178.5h2.3M992.1 178.5h2.3M956.6 180.5h2.3M962.6 180.5h2.3M976.4 180.5h2.3M986.2 180.5h2.3M994.1 180.5h4.3M935.0 182.5h2.3M938.9 182.5h2.3M964.5 182.5h2.3M968.5 182.5h2.3M974.4 182.5h2.3M986.2 182.5h2.3M944.8 184.5h4.3M974.4 184.5h2.3M994.1 184.5h2.3M938.9 186.5h4.3M944.8 186.5h2.3M950.7 186.5h2.3M970.4 186.5h2.3M938.9 188.5h2.3M948.8 188.5h2.3M976.4 188.5h2.3M982.3 188.5h2.3M988.2 188.5h2.3M992.1 188.5h2.3M956.6 190.5h2.3M964.5 190.5h2.3M982.3 190.5h2.3M988.2 190.5h4.3M970.4 192.5h2.3M990.1 192.5h2.3M938.9 194.5h2.3M954.7 194.5h2.3M964.5 194.5h2.3M946.8 196.5h2.3M958.6 196.5h2.3M972.4 196.5h2.3M960.6 198.5h2.3M986.2 198.5h2.3M933.0 200.5h2.3M950.7 200.5h2.3M956.6 200.5h2.3M996.1 200.5h2.3M946.8 202.5h2.3M952.7 202.5h2.3M972.4 202.5h2.3M978.3 202.5h2.3M984.2 204.5h2.3M994.1 204.5h4.3M962.6 206.5h2.3M966.5 206.5h2.3M980.3 206.5h2.3M938.9 208.5h2.3M954.7 208.5h2.3M958.6 208.5h2.3M980.3 208.5h2.3M984.2 208.5h2.3M935.0 210.5h4.3M940.9 210.5h2.3M958.6 210.5h4.3M944.8 212.5h2.3M960.6 212.5h2.3M994.1 212.5h2.3M956.6 214.5h2.3M968.5 214.5h2.3M992.1 214.5h2.3M998.0 214.5h2.0M952.7 216.5h2.3M933.0 218.5h2.3M966.5 218.5h2.3M982.3 218.5h2.3M990.1 218.5h2.3M996.1 218.5h2.3M936.9 220.5h2.3M942.9 220.5h4.3M964.5 220.5h2.3M976.4 220.5h2.3M982.3 220.5h2.3M990.1 220.5h2.3M946.8 222.5h2.3M950.7 222.5h2.3M982.3 222.5h2.3M948.8 224.5h2.3M952.7 224.5h2.3M974.4 224.5h2.3M988.2 224.5h2.3M996.1 224.5h2.3M935.0 226.5h2.3M976.4 226.5h2.3M988.2 226.5h2.3M998.0 226.5h2.0M935.0 228.5h2.3M982.3 228.5h4.3M988.2 228.5h2.3M946.8 230.5h2.3M964.5 230.5h4.3M972.4 230.5h2.3M990.1 230.5h2.3M962.6 232.5h2.3M968.5 232.5h2.3M974.4 232.5h2.3" stroke="#aaaaaa" stroke-width="2.35" shape-rendering="crispEdges"/>
<path d="M950.7 134.5h2.3M952.7 136.5h2.3M936.9 138.5h2.3M946.8 138.5h2.3M974.4 138.5h2.3M935.0 140.5h2.3M948.8 140.5h2.3M966.5 140.5h2.3M980.3 140.5h2.3M933.0 142.5h2.3M942.9 142.5h2.3M958.6 142.5h2.3M996.1 142.5h3.9M944.8 144.5h2.3M970.4 144.5h2.3M980.3 144.5h2.3M936.9 150.5h2.3M944.8 150.5h2.3M976.4 150.5h6.3M958.6 152.5h2.3M992.1 152.5h2.3M936.9 154.5h2.3M942.9 154.5h2.3M960.6 154.5h2.3M984.2 154.5h2.3M990.1 154.5h2.3M998.0 154.5h2.0M948.8 156.5h2.3M964.5 156.5h2.3M970.4 156.5h2.3M980.3 156.5h4.3M986.2 156.5h2.3M956.6 158.5h2.3M986.2 158.5h2.3M935.0 160.5h4.3M958.6 160.5h2.3M968.5 160.5h2.3M972.4 160.5h4.3M938.9 162.5h2.3M980.3 162.5h2.3M950.7 164.5h2.3M954.7 164.5h2.3M972.4 164.5h2.3M933.0 166.5h2.3M962.6 166.5h2.3M954.7 168.5h4.3M962.6 168.5h2.3M968.5 168.5h2.3M974.4 168.5h2.3M935.0 170.5h2.3M958.6 170.5h2.3M972.4 170.5h4.3M998.0 170.5h2.0M960.6 172.5h2.3M972.4 172.5h2.3M990.1 172.5h2.3M946.8 174.5h2.3M976.4 174.5h4.3M938.9 176.5h2.3M952.7 176.5h2.3M962.6 176.5h4.3M933.0 178.5h2.3M946.8 178.5h2.3M956.6 178.5h4.3M966.5 178.5h4.3M972.4 178.5h2.3M978.3 178.5h2.3M982.3 178.5h2.3M986.2 178.5h2.3M998.0 178.5h2.0M935.0 180.5h4.3M942.9 180.5h2.3M984.2 180.5h2.3M942.9 182.5h2.3M948.8 182.5h2.3M978.3 182.5h4.3M984.2 182.5h2.3M962.6 184.5h2.3M972.4 184.5h2.3M978.3 184.5h2.3M982.3 184.5h4.3M948.8 186.5h2.3M972.4 186.5h2.3M990.1 186.5h2.3M960.6 188.5h2.3M968.5 188.5h2.3M972.4 188.5h2.3M998.0 188.5h2.0M970.4 190.5h2.3M992.1 190.5h2.3M996.1 190.5h2.3M938.9 192.5h2.3M958.6 192.5h2.3M962.6 192.5h2.3M982.3 192.5h2.3M998.0 192.5h2.0M942.9 194.5h2.3M960.6 196.5h2.3M974.4 196.5h2.3M978.3 196.5h2.3M982.3 196.5h2.3M986.2 196.5h4.3M992.1 196.5h2.3M940.9 198.5h2.3M950.7 198.5h2.3M964.5 198.5h2.3M968.5 198.5h2.3M990.1 198.5h2.3M936.9 200.5h2.3M944.8 200.5h4.3M962.6 200.5h2.3M966.5 200.5h4.3M978.3 200.5h2.3M984.2 200.5h4.3M966.5 202.5h2.3M974.4 202.5h2.3M988.2 202.5h2.3M992.1 202.5h4.3M938.9 204.5h2.3M942.9 204.5h2.3M948.8 204.5h2.3M954.7 204.5h2.3M958.6 204.5h2.3M966.5 204.5h2.3M992.1 204.5h2.3M948.8 206.5h2.3M956.6 206.5h2.3M960.6 206.5h2.3M968.5 206.5h2.3M994.1 206.5h2.3M936.9 208.5h2.3M950.7 208.5h4.3M974.4 208.5h2.3M978.3 208.5h2.3M986.2 208.5h4.3M954.7 210.5h2.3M982.3 210.5h4.3M992.1 210.5h2.3M956.6 212.5h4.3M962.6 212.5h4.3M982.3 212.5h2.3M986.2 212.5h2.3M962.6 214.5h2.3M970.4 214.5h2.3M935.0 216.5h4.3M942.9 216.5h2.3M950.7 216.5h2.3M956.6 216.5h2.3M962.6 216.5h2.3M972.4 216.5h4.3M982.3 216.5h2.3M988.2 216.5h2.3M944.8 218.5h2.3M964.5 218.5h2.3M972.4 218.5h2.3M976.4 218.5h2.3M988.2 218.5h2.3M935.0 220.5h2.3M946.8 220.5h2.3M956.6 220.5h2.3M962.6 220.5h2.3M968.5 220.5h2.3M933.0 222.5h2.3M940.9 222.5h2.3M938.9 224.5h2.3M964.5 224.5h2.3M970.4 224.5h2.3M978.3 224.5h2.3M990.1 224.5h2.3M933.0 226.5h2.3M944.8 226.5h2.3M950.7 226.5h4.3M984.2 226.5h2.3M954.7 228.5h2.3M958.6 228.5h4.3M940.9 230.5h2.3M954.7 230.5h2.3M958.6 230.5h2.3M970.4 230.5h2.3M974.4 230.5h2.3M992.1 230.5h4.3M940.9 232.5h2.3M964.5 232.5h2.3M980.3 232.5h2.3M984.2 232.5h2.3M990.1 232.5h2.3" stroke="#bbbbbb" stroke-width="2.35" shape-rendering="crispEdges"/>
<path d="M936.9 132.5h2.3M942.9 132.5h2.3M962.6 132.5h2.3M972.4 132.5h2.3M980.3 132.5h2.3M942.9 134.5h2.3M964.5 134.5h2.3M976.4 134.5h2.3M938.9 142.5h2.3M946.8 142.5h2.3M984.2 142.5h2.3M938.9 144.5h2.3M954.7 144.5h2.3M960.6 144.5h2.3M982.3 144.5h6.3M946.8 146.5h2.3M968.5 146.5h2.3M958.6 148.5h2.3M970.4 150.5h2.3M944.8 154.5h2.3M962.6 154.5h2.3M996.1 154.5h2.3M952.7 156.5h2.3M966.5 156.5h2.3M940.9 158.5h2.3M972.4 158.5h2.3M944.8 162.5h2.3M950.7 162.5h2.3M966.5 162.5h6.3M994.1 162.5h2.3M938.9 164.5h2.3M958.6 164.5h2.3M994.1 164.5h2.3M935.0 166.5h2.3M950.7 166.5h2.3M958.6 166.5h2.3M966.5 166.5h2.3M972.4 166.5h2.3M952.7 168.5h2.3M980.3 168.5h2.3M992.1 168.5h2.3M956.6 170.5h2.3M966.5 170.5h2.3M988.2 170.5h2.3M935.0 172.5h2.3M938.9 172.5h2.3M944.8 172.5h2.3M948.8 172.5h2.3M962.6 172.5h2.3M968.5 172.5h2.3M986.2 172.5h2.3M994.1 172.5h2.3M942.9 174.5h2.3M964.5 174.5h2.3M972.4 174.5h2.3M984.2 174.5h2.3M994.1 174.5h2.3M942.9 176.5h2.3M946.8 176.5h2.3M996.1 176.5h2.3M936.9 178.5h2.3M990.1 178.5h2.3M944.8 180.5h2.3M968.5 180.5h2.3M972.4 180.5h2.3M960.6 182.5h2.3M950.7 184.5h2.3M958.6 184.5h2.3M976.4 184.5h2.3M990.1 184.5h2.3M933.0 186.5h2.3M946.8 186.5h2.3M964.5 186.5h2.3M992.1 186.5h2.3M958.6 188.5h2.3M938.9 190.5h2.3M954.7 190.5h2.3M980.3 190.5h2.3M986.2 190.5h2.3M940.9 192.5h2.3M952.7 192.5h2.3M946.8 194.5h2.3M958.6 194.5h2.3M992.1 194.5h2.3M933.0 196.5h2.3M994.1 196.5h2.3M952.7 198.5h2.3M956.6 198.5h2.3M988.2 198.5h2.3M982.3 200.5h2.3M992.1 200.5h2.3M998.0 200.5h2.0M933.0 202.5h2.3M940.9 202.5h2.3M944.8 202.5h2.3M948.8 202.5h2.3M954.7 202.5h2.3M958.6 202.5h2.3M935.0 204.5h2.3M960.6 204.5h4.3M968.5 204.5h2.3M976.4 204.5h2.3M962.6 208.5h2.3M976.4 208.5h2.3M994.1 208.5h2.3M946.8 210.5h2.3M964.5 210.5h2.3M994.1 210.5h2.3M935.0 212.5h2.3M946.8 212.5h2.3M954.7 212.5h2.3M972.4 212.5h2.3M996.1 212.5h2.3M940.9 214.5h2.3M976.4 216.5h2.3M984.2 216.5h2.3M935.0 218.5h2.3M954.7 218.5h2.3M980.3 218.5h2.3M966.5 220.5h2.3M970.4 220.5h2.3M974.4 220.5h2.3M988.2 220.5h2.3M952.7 222.5h2.3M956.6 222.5h2.3M964.5 222.5h2.3M976.4 222.5h2.3M994.1 222.5h2.3M976.4 224.5h2.3M984.2 224.5h4.3M936.9 226.5h2.3M940.9 226.5h2.3M948.8 226.5h2.3M962.6 226.5h2.3M978.3 226.5h2.3M996.1 226.5h2.3M962.6 228.5h4.3M992.1 228.5h2.3M935.0 232.5h2.3M966.5 232.5h2.3M970.4 232.5h2.3M982.3 232.5h2.3M992.1 232.5h2.3M998.0 232.5h2.0" stroke="#cccccc" stroke-width="2.35" shape-rendering="crispEdges"/>
<path d="M958.6 132.5h2.3M996.1 132.5h2.3M988.2 140.5h2.3M994.1 140.5h2.3M936.9 142.5h2.3M992.1 142.5h2.3M994.1 144.5h2.3M935.0 152.5h2.3M962.6 152.5h2.3M935.0 154.5h2.3M966.5 154.5h2.3M940.9 156.5h2.3M974.4 156.5h2.3M998.0 156.5h2.0M964.5 158.5h2.3M982.3 158.5h2.3M994.1 158.5h2.3M933.0 160.5h2.3M940.9 160.5h2.3M970.4 160.5h2.3M982.3 160.5h4.3M962.6 162.5h4.3M996.1 162.5h2.3M998.0 164.5h2.0M964.5 168.5h2.3M988.2 168.5h2.3M996.1 168.5h2.3M944.8 170.5h2.3M978.3 170.5h4.3M980.3 172.5h2.3M960.6 174.5h2.3M982.3 174.5h2.3M986.2 174.5h2.3M996.1 174.5h2.3M936.9 176.5h2.3M948.8 176.5h2.3M984.2 176.5h2.3M935.0 178.5h2.3M964.5 180.5h2.3M988.2 180.5h2.3M946.8 182.5h2.3M950.7 182.5h2.3M954.7 182.5h2.3M958.6 182.5h2.3M988.2 182.5h2.3M933.0 184.5h2.3M948.8 184.5h2.3M988.2 184.5h2.3M956.6 186.5h2.3M960.6 186.5h2.3M946.8 188.5h2.3M974.4 188.5h2.3M978.3 188.5h2.3M984.2 188.5h2.3M952.7 190.5h2.3M960.6 190.5h2.3M984.2 190.5h2.3M933.0 192.5h2.3M960.6 192.5h2.3M974.4 192.5h2.3M980.3 192.5h2.3M933.0 194.5h2.3M962.6 194.5h2.3M976.4 194.5h2.3M986.2 194.5h4.3M966.5 196.5h2.3M966.5 198.5h2.3M996.1 198.5h3.9M964.5 200.5h2.3M974.4 200.5h2.3M994.1 200.5h2.3M935.0 202.5h2.3M990.1 202.5h2.3M980.3 204.5h2.3M998.0 204.5h2.0M936.9 206.5h2.3M950.7 206.5h2.3M982.3 206.5h4.3M992.1 206.5h2.3M942.9 208.5h2.3M976.4 210.5h2.3M933.0 212.5h2.3M980.3 212.5h2.3M948.8 214.5h2.3M986.2 214.5h2.3M946.8 216.5h2.3M966.5 216.5h2.3M970.4 216.5h2.3M960.6 218.5h2.3M998.0 218.5h2.0M992.1 220.5h2.3M996.1 220.5h2.3M954.7 222.5h2.3M960.6 222.5h2.3M966.5 222.5h2.3M984.2 222.5h2.3M990.1 222.5h2.3M998.0 222.5h2.0M936.9 224.5h2.3M982.3 224.5h2.3M992.1 224.5h2.3M946.8 228.5h2.3M976.4 228.5h2.3M952.7 230.5h2.3M978.3 230.5h2.3M998.0 230.5h2.0M944.8 232.5h2.3M986.2 232.5h2.3" stroke="#dddddd" stroke-width="2.35" shape-rendering="crispEdges"/>
<path d="M935.0 132.5h2.3M956.6 132.5h2.3M960.6 136.5h2.3M938.9 140.5h2.3M942.9 140.5h2.3M976.4 140.5h2.3M990.1 142.5h2.3M998.0 144.5h2.0M933.0 154.5h2.3M946.8 154.5h2.3M970.4 154.5h2.3M994.1 154.5h2.3M996.1 156.5h2.3M952.7 158.5h2.3M974.4 158.5h2.3M946.8 160.5h2.3M960.6 160.5h2.3M978.3 160.5h2.3M978.3 162.5h2.3M986.2 162.5h4.3M935.0 164.5h2.3M996.1 164.5h2.3M936.9 168.5h2.3M950.7 168.5h2.3M984.2 168.5h2.3M992.1 172.5h2.3M976.4 176.5h2.3M994.1 176.5h2.3M938.9 178.5h2.3M944.8 178.5h2.3M970.4 180.5h2.3M974.4 180.5h2.3M964.5 184.5h2.3M968.5 184.5h2.3M978.3 186.5h2.3M984.2 186.5h2.3M996.1 186.5h2.3M936.9 188.5h2.3M962.6 188.5h2.3M980.3 188.5h2.3M946.8 190.5h2.3M978.3 190.5h2.3M936.9 192.5h2.3M970.4 194.5h2.3M994.1 194.5h2.3M950.7 196.5h2.3M974.4 198.5h2.3M978.3 198.5h2.3M954.7 200.5h2.3M938.9 202.5h2.3M970.4 202.5h2.3M972.4 204.5h2.3M988.2 204.5h2.3M933.0 206.5h2.3M984.2 212.5h2.3M936.9 214.5h2.3M952.7 214.5h2.3M976.4 214.5h2.3M994.1 216.5h2.3M936.9 218.5h2.3M994.1 218.5h2.3M940.9 220.5h2.3M950.7 220.5h2.3M954.7 220.5h2.3M960.6 220.5h2.3M986.2 220.5h2.3M938.9 222.5h2.3M954.7 224.5h2.3M962.6 224.5h2.3M974.4 228.5h2.3M935.0 230.5h4.3M946.8 232.5h2.3M950.7 232.5h2.3M954.7 232.5h2.3" stroke="#eeeeee" stroke-width="2.35" shape-rendering="crispEdges"/>
<path d="M940.9 132.5h2.3M952.7 132.5h2.3M982.3 132.5h2.3M974.4 140.5h2.3M970.4 142.5h2.3M936.9 144.5h2.3M942.9 144.5h2.3M978.3 144.5h2.3M952.7 152.5h2.3M968.5 154.5h2.3M972.4 154.5h2.3M960.6 156.5h2.3M935.0 158.5h2.3M950.7 158.5h2.3M988.2 158.5h2.3M992.1 158.5h2.3M996.1 158.5h2.3M950.7 160.5h2.3M990.1 160.5h4.3M958.6 162.5h2.3M984.2 162.5h2.3M948.8 164.5h2.3M964.5 164.5h2.3M940.9 166.5h2.3M948.8 166.5h2.3M974.4 166.5h6.3M970.4 170.5h2.3M976.4 170.5h2.3M950.7 172.5h2.3M966.5 172.5h2.3M970.4 172.5h2.3M984.2 172.5h2.3M986.2 176.5h2.3M942.9 178.5h2.3M994.1 178.5h2.3M940.9 180.5h2.3M946.8 180.5h2.3M990.1 180.5h2.3M952.7 182.5h2.3M966.5 182.5h2.3M935.0 190.5h2.3M972.4 190.5h2.3M976.4 190.5h2.3M942.9 192.5h2.3M966.5 192.5h2.3M984.2 192.5h2.3M988.2 192.5h2.3M992.1 192.5h2.3M935.0 194.5h2.3M956.6 194.5h2.3M982.3 194.5h2.3M996.1 194.5h2.3M998.0 196.5h2.0M936.9 198.5h2.3M962.6 198.5h2.3M964.5 202.5h2.3M976.4 202.5h2.3M950.7 204.5h2.3M976.4 206.5h4.3M946.8 208.5h2.3M952.7 210.5h2.3M962.6 210.5h2.3M942.9 212.5h2.3M990.1 212.5h2.3M990.1 216.5h2.3M958.6 218.5h2.3M970.4 218.5h2.3M994.1 220.5h2.3M998.0 220.5h2.0M978.3 222.5h4.3M992.1 222.5h2.3M940.9 224.5h2.3M946.8 224.5h2.3M950.7 224.5h2.3M960.6 224.5h2.3M968.5 224.5h2.3M956.6 226.5h2.3M972.4 226.5h2.3M942.9 230.5h2.3M958.6 232.5h2.3M994.1 232.5h2.3" stroke="#ffffff" stroke-width="2.35" shape-rendering="crispEdges"/>
<rect x="832" y="64.7" width="67.2" height="168.6" fill="none" stroke="#0000ff" stroke-width="2.6"/>
<rect x="932.4" y="64.7" width="67.8" height="168.6" fill="none" stroke="#0000ff" stroke-width="2.6"/>
<rect x="1047.7" y="60.6" width="251.8" height="150.4" fill="#fff" stroke="#333" stroke-width="1"/>
<line x1="1047.7" y1="204.4" x2="1299.5" y2="204.4" stroke="#333" stroke-width="1"/>
<line x1="1044.2" y1="204.4" x2="1047.7" y2="204.4" stroke="#333" stroke-width="0.8"/>
<text x="1041.7" y="208.0" class="s" text-anchor="end" style="font-size:9.9px;">0.0</text>
<line x1="1044.2" y1="184.7" x2="1047.7" y2="184.7" stroke="#333" stroke-width="0.8"/>
<text x="1041.7" y="188.3" class="s" text-anchor="end" style="font-size:9.9px;">2.5</text>
<line x1="1044.2" y1="165.0" x2="1047.7" y2="165.0" stroke="#333" stroke-width="0.8"/>
<text x="1041.7" y="168.6" class="s" text-anchor="end" style="font-size:9.9px;">5.0</text>
<line x1="1044.2" y1="145.3" x2="1047.7" y2="145.3" stroke="#333" stroke-width="0.8"/>
<text x="1041.7" y="148.9" class="s" text-anchor="end" style="font-size:9.9px;">7.5</text>
<line x1="1044.2" y1="125.6" x2="1047.7" y2="125.6" stroke="#333" stroke-width="0.8"/>
<text x="1041.7" y="129.2" class="s" text-anchor="end" style="font-size:9.9px;">10.0</text>
<line x1="1044.2" y1="105.9" x2="1047.7" y2="105.9" stroke="#333" stroke-width="0.8"/>
<text x="1041.7" y="109.5" class="s" text-anchor="end" style="font-size:9.9px;">12.5</text>
<line x1="1044.2" y1="86.2" x2="1047.7" y2="86.2" stroke="#333" stroke-width="0.8"/>
<text x="1041.7" y="89.8" class="s" text-anchor="end" style="font-size:9.9px;">15.0</text>
<line x1="1044.2" y1="66.5" x2="1047.7" y2="66.5" stroke="#333" stroke-width="0.8"/>
<text x="1041.7" y="70.1" class="s" text-anchor="end" style="font-size:9.9px;">17.5</text>
<line x1="1049.6" y1="211.0" x2="1049.6" y2="214.5" stroke="#333" stroke-width="0.8"/>
<text x="1049.6" y="224.2" class="s" text-anchor="middle" style="font-size:9.9px;">4260</text>
<line x1="1096.4" y1="211.0" x2="1096.4" y2="214.5" stroke="#333" stroke-width="0.8"/>
<text x="1096.4" y="224.2" class="s" text-anchor="middle" style="font-size:9.9px;">4280</text>
<line x1="1143.2" y1="211.0" x2="1143.2" y2="214.5" stroke="#333" stroke-width="0.8"/>
<text x="1143.2" y="224.2" class="s" text-anchor="middle" style="font-size:9.9px;">4300</text>
<line x1="1189.9" y1="211.0" x2="1189.9" y2="214.5" stroke="#333" stroke-width="0.8"/>
<text x="1189.9" y="224.2" class="s" text-anchor="middle" style="font-size:9.9px;">4320</text>
<line x1="1236.7" y1="211.0" x2="1236.7" y2="214.5" stroke="#333" stroke-width="0.8"/>
<text x="1236.7" y="224.2" class="s" text-anchor="middle" style="font-size:9.9px;">4340</text>
<line x1="1283.5" y1="211.0" x2="1283.5" y2="214.5" stroke="#333" stroke-width="0.8"/>
<text x="1283.5" y="224.2" class="s" text-anchor="middle" style="font-size:9.9px;">4360</text>
<text x="1049.7" y="71.6" class="s" style="font-size:9.9px;">e</text>
<text x="1055.3" y="67.8" class="s" style="font-size:7px;">−17</text>
<text x="1068.2" y="71.6" class="s" style="font-size:9.9px;">x2Å</text>
<polyline points="1068.3,107.5 1069.5,107.5 1070.7,107.5 1071.8,107.5 1073.0,107.5 1074.2,107.5 1075.3,107.5 1076.5,107.5 1077.7,107.5 1078.8,107.5 1080.0,107.5 1081.2,107.5 1082.3,107.5 1083.5,107.5 1084.7,107.5 1085.9,107.5 1087.0,107.5 1088.2,107.5 1089.4,107.5 1090.5,107.5 1091.7,107.5 1092.9,107.5 1094.0,107.5 1095.2,107.5 1096.4,107.5 1097.5,107.5 1098.7,107.5 1099.9,107.5 1101.1,107.5 1102.2,107.5 1103.4,107.5 1104.6,107.5 1105.7,107.5 1106.9,107.5 1108.1,107.5 1109.2,107.5 1110.4,107.5 1111.6,107.5 1112.8,107.5 1113.9,107.5 1115.1,107.5 1116.3,107.5 1117.4,107.5 1118.6,107.5 1119.8,107.5 1120.9,107.5 1122.1,107.5 1123.3,107.5 1124.4,107.5 1125.6,107.5 1126.8,107.5 1128.0,107.5 1129.1,107.5 1130.3,107.5 1131.5,107.5 1132.6,107.5 1133.8,107.5 1135.0,107.5 1136.1,107.5 1137.3,107.5 1138.5,107.5 1139.7,107.5 1140.8,107.5 1142.0,107.5 1143.2,107.5 1144.3,107.5 1145.5,107.5 1146.7,107.5 1147.8,107.5 1149.0,107.5 1150.2,107.5 1151.3,107.5 1152.5,107.5 1153.7,107.5 1154.9,107.4 1156.0,107.4 1157.2,107.3 1158.4,107.1 1159.5,106.9 1160.7,106.5 1161.9,105.8 1163.0,104.8 1164.2,103.4 1165.4,101.6 1166.5,99.2 1167.7,96.2 1168.9,92.9 1170.1,89.3 1171.2,85.7 1172.4,82.5 1173.6,79.8 1174.7,78.1 1175.9,77.5 1177.1,78.1 1178.2,79.8 1179.4,82.5 1180.6,85.7 1181.8,89.3 1182.9,92.9 1184.1,96.2 1185.3,99.2 1186.4,101.6 1187.6,103.4 1188.8,104.8 1189.9,105.8 1191.1,106.5 1192.3,106.9 1193.4,107.1 1194.6,107.3 1195.8,107.4 1197.0,107.4 1198.1,107.5 1199.3,107.5 1200.5,107.5 1201.6,107.5 1202.8,107.5 1204.0,107.5 1205.1,107.5 1206.3,107.5 1207.5,107.5 1208.7,107.5 1209.8,107.5 1211.0,107.5 1212.2,107.5 1213.3,107.5 1214.5,107.5 1215.7,107.5 1216.8,107.5 1218.0,107.5 1219.2,107.5 1220.3,107.5 1221.5,107.5 1222.7,107.5 1223.9,107.5 1225.0,107.5 1226.2,107.5 1227.4,107.5 1228.5,107.5 1229.7,107.5 1230.9,107.5 1232.0,107.5 1233.2,107.5 1234.4,107.5 1235.6,107.5 1236.7,107.5 1237.9,107.5 1239.1,107.5 1240.2,107.5 1241.4,107.5 1242.6,107.5 1243.7,107.5 1244.9,107.5 1246.1,107.5 1247.2,107.5 1248.4,107.5 1249.6,107.5 1250.8,107.5 1251.9,107.5 1253.1,107.5 1254.3,107.5 1255.4,107.5 1256.6,107.5 1257.8,107.5 1258.9,107.5 1260.1,107.5 1261.3,107.5 1262.4,107.5 1263.6,107.5 1264.8,107.5 1266.0,107.5 1267.1,107.5 1268.3,107.5 1269.5,107.5 1270.6,107.5 1271.8,107.5 1273.0,107.5 1274.1,107.5 1275.3,107.5 1276.5,107.5 1277.7,107.5 1278.8,107.5 1280.0,107.5 1281.2,107.5 1282.3,107.5 1283.5,107.5 1284.7,107.5" fill="none" stroke="#333" stroke-width="1.6"/>
<line x1="1059.0" y1="83.7" x2="1059.0" y2="99.7" stroke="#1f77b4" stroke-width="1.5"/>
<circle cx="1059.0" cy="91.7" r="1.8" fill="#1f77b4"/>
<line x1="1063.6" y1="82.1" x2="1063.6" y2="98.1" stroke="#1f77b4" stroke-width="1.5"/>
<circle cx="1063.6" cy="90.1" r="1.8" fill="#1f77b4"/>
<line x1="1068.3" y1="97.9" x2="1068.3" y2="113.9" stroke="#1f77b4" stroke-width="1.5"/>
<circle cx="1068.3" cy="105.9" r="1.8" fill="#1f77b4"/>
<line x1="1073.0" y1="95.5" x2="1073.0" y2="111.5" stroke="#1f77b4" stroke-width="1.5"/>
<circle cx="1073.0" cy="103.5" r="1.8" fill="#1f77b4"/>
<line x1="1077.7" y1="98.7" x2="1077.7" y2="114.7" stroke="#1f77b4" stroke-width="1.5"/>
<circle cx="1077.7" cy="106.7" r="1.8" fill="#1f77b4"/>
<line x1="1082.3" y1="90.8" x2="1082.3" y2="106.8" stroke="#1f77b4" stroke-width="1.5"/>
<circle cx="1082.3" cy="98.8" r="1.8" fill="#1f77b4"/>
<line x1="1087.0" y1="89.2" x2="1087.0" y2="105.2" stroke="#1f77b4" stroke-width="1.5"/>
<circle cx="1087.0" cy="97.2" r="1.8" fill="#1f77b4"/>
<line x1="1091.7" y1="94.7" x2="1091.7" y2="110.7" stroke="#1f77b4" stroke-width="1.5"/>
<circle cx="1091.7" cy="102.7" r="1.8" fill="#1f77b4"/>
<line x1="1096.4" y1="89.2" x2="1096.4" y2="105.2" stroke="#1f77b4" stroke-width="1.5"/>
<circle cx="1096.4" cy="97.2" r="1.8" fill="#1f77b4"/>
<line x1="1101.1" y1="87.7" x2="1101.1" y2="103.7" stroke="#1f77b4" stroke-width="1.5"/>
<circle cx="1101.1" cy="95.7" r="1.8" fill="#1f77b4"/>
<line x1="1105.7" y1="92.4" x2="1105.7" y2="108.4" stroke="#1f77b4" stroke-width="1.5"/>
<circle cx="1105.7" cy="100.4" r="1.8" fill="#1f77b4"/>
<line x1="1110.4" y1="83.7" x2="1110.4" y2="99.7" stroke="#1f77b4" stroke-width="1.5"/>
<circle cx="1110.4" cy="91.7" r="1.8" fill="#1f77b4"/>
<line x1="1115.1" y1="86.9" x2="1115.1" y2="102.9" stroke="#1f77b4" stroke-width="1.5"/>
<circle cx="1115.1" cy="94.9" r="1.8" fill="#1f77b4"/>
<line x1="1119.8" y1="94.0" x2="1119.8" y2="110.0" stroke="#1f77b4" stroke-width="1.5"/>
<circle cx="1119.8" cy="102.0" r="1.8" fill="#1f77b4"/>
<line x1="1124.4" y1="107.4" x2="1124.4" y2="123.4" stroke="#1f77b4" stroke-width="1.5"/>
<circle cx="1124.4" cy="115.4" r="1.8" fill="#1f77b4"/>
<line x1="1129.1" y1="99.5" x2="1129.1" y2="115.5" stroke="#1f77b4" stroke-width="1.5"/>
<circle cx="1129.1" cy="107.5" r="1.8" fill="#1f77b4"/>
<line x1="1133.8" y1="116.0" x2="1133.8" y2="132.0" stroke="#1f77b4" stroke-width="1.5"/>
<circle cx="1133.8" cy="124.0" r="1.8" fill="#1f77b4"/>
<line x1="1138.5" y1="106.6" x2="1138.5" y2="122.6" stroke="#1f77b4" stroke-width="1.5"/>
<circle cx="1138.5" cy="114.6" r="1.8" fill="#1f77b4"/>
<line x1="1143.2" y1="112.1" x2="1143.2" y2="128.1" stroke="#1f77b4" stroke-width="1.5"/>
<circle cx="1143.2" cy="120.1" r="1.8" fill="#1f77b4"/>
<line x1="1147.8" y1="110.5" x2="1147.8" y2="126.5" stroke="#1f77b4" stroke-width="1.5"/>
<circle cx="1147.8" cy="118.5" r="1.8" fill="#1f77b4"/>
<line x1="1152.5" y1="112.1" x2="1152.5" y2="128.1" stroke="#1f77b4" stroke-width="1.5"/>
<circle cx="1152.5" cy="120.1" r="1.8" fill="#1f77b4"/>
<line x1="1157.2" y1="131.8" x2="1157.2" y2="147.8" stroke="#1f77b4" stroke-width="1.5"/>
<circle cx="1157.2" cy="139.8" r="1.8" fill="#1f77b4"/>
<line x1="1161.9" y1="105.0" x2="1161.9" y2="121.0" stroke="#1f77b4" stroke-width="1.5"/>
<circle cx="1161.9" cy="113.0" r="1.8" fill="#1f77b4"/>
<line x1="1166.5" y1="86.1" x2="1166.5" y2="102.1" stroke="#1f77b4" stroke-width="1.5"/>
<circle cx="1166.5" cy="94.1" r="1.8" fill="#1f77b4"/>
<line x1="1171.2" y1="71.9" x2="1171.2" y2="87.9" stroke="#1f77b4" stroke-width="1.5"/>
<circle cx="1171.2" cy="79.9" r="1.8" fill="#1f77b4"/>
<line x1="1175.9" y1="68.7" x2="1175.9" y2="84.7" stroke="#1f77b4" stroke-width="1.5"/>
<circle cx="1175.9" cy="76.7" r="1.8" fill="#1f77b4"/>
<line x1="1180.6" y1="75.0" x2="1180.6" y2="91.0" stroke="#1f77b4" stroke-width="1.5"/>
<circle cx="1180.6" cy="83.0" r="1.8" fill="#1f77b4"/>
<line x1="1185.3" y1="82.1" x2="1185.3" y2="98.1" stroke="#1f77b4" stroke-width="1.5"/>
<circle cx="1185.3" cy="90.1" r="1.8" fill="#1f77b4"/>
<line x1="1189.9" y1="98.7" x2="1189.9" y2="114.7" stroke="#1f77b4" stroke-width="1.5"/>
<circle cx="1189.9" cy="106.7" r="1.8" fill="#1f77b4"/>
<line x1="1194.6" y1="100.3" x2="1194.6" y2="116.3" stroke="#1f77b4" stroke-width="1.5"/>
<circle cx="1194.6" cy="108.3" r="1.8" fill="#1f77b4"/>
<line x1="1199.3" y1="98.7" x2="1199.3" y2="114.7" stroke="#1f77b4" stroke-width="1.5"/>
<circle cx="1199.3" cy="106.7" r="1.8" fill="#1f77b4"/>
<line x1="1204.0" y1="84.5" x2="1204.0" y2="100.5" stroke="#1f77b4" stroke-width="1.5"/>
<circle cx="1204.0" cy="92.5" r="1.8" fill="#1f77b4"/>
<line x1="1208.7" y1="79.0" x2="1208.7" y2="95.0" stroke="#1f77b4" stroke-width="1.5"/>
<circle cx="1208.7" cy="87.0" r="1.8" fill="#1f77b4"/>
<line x1="1213.3" y1="82.9" x2="1213.3" y2="98.9" stroke="#1f77b4" stroke-width="1.5"/>
<circle cx="1213.3" cy="90.9" r="1.8" fill="#1f77b4"/>
<line x1="1218.0" y1="82.1" x2="1218.0" y2="98.1" stroke="#1f77b4" stroke-width="1.5"/>
<circle cx="1218.0" cy="90.1" r="1.8" fill="#1f77b4"/>
<line x1="1222.7" y1="106.6" x2="1222.7" y2="122.6" stroke="#1f77b4" stroke-width="1.5"/>
<circle cx="1222.7" cy="114.6" r="1.8" fill="#1f77b4"/>
<line x1="1227.4" y1="113.7" x2="1227.4" y2="129.7" stroke="#1f77b4" stroke-width="1.5"/>
<circle cx="1227.4" cy="121.7" r="1.8" fill="#1f77b4"/>
<line x1="1232.0" y1="108.1" x2="1232.0" y2="124.1" stroke="#1f77b4" stroke-width="1.5"/>
<circle cx="1232.0" cy="116.1" r="1.8" fill="#1f77b4"/>
<line x1="1236.7" y1="89.2" x2="1236.7" y2="105.2" stroke="#1f77b4" stroke-width="1.5"/>
<circle cx="1236.7" cy="97.2" r="1.8" fill="#1f77b4"/>
<line x1="1241.4" y1="95.5" x2="1241.4" y2="111.5" stroke="#1f77b4" stroke-width="1.5"/>
<circle cx="1241.4" cy="103.5" r="1.8" fill="#1f77b4"/>
<line x1="1246.1" y1="90.0" x2="1246.1" y2="106.0" stroke="#1f77b4" stroke-width="1.5"/>
<circle cx="1246.1" cy="98.0" r="1.8" fill="#1f77b4"/>
<line x1="1250.8" y1="86.9" x2="1250.8" y2="102.9" stroke="#1f77b4" stroke-width="1.5"/>
<circle cx="1250.8" cy="94.9" r="1.8" fill="#1f77b4"/>
<line x1="1255.4" y1="105.0" x2="1255.4" y2="121.0" stroke="#1f77b4" stroke-width="1.5"/>
<circle cx="1255.4" cy="113.0" r="1.8" fill="#1f77b4"/>
<line x1="1260.1" y1="100.3" x2="1260.1" y2="116.3" stroke="#1f77b4" stroke-width="1.5"/>
<circle cx="1260.1" cy="108.3" r="1.8" fill="#1f77b4"/>
<line x1="1264.8" y1="87.7" x2="1264.8" y2="103.7" stroke="#1f77b4" stroke-width="1.5"/>
<circle cx="1264.8" cy="95.7" r="1.8" fill="#1f77b4"/>
<line x1="1269.5" y1="92.4" x2="1269.5" y2="108.4" stroke="#1f77b4" stroke-width="1.5"/>
<circle cx="1269.5" cy="100.4" r="1.8" fill="#1f77b4"/>
<line x1="1274.1" y1="105.0" x2="1274.1" y2="121.0" stroke="#1f77b4" stroke-width="1.5"/>
<circle cx="1274.1" cy="113.0" r="1.8" fill="#1f77b4"/>
<line x1="1278.8" y1="99.5" x2="1278.8" y2="115.5" stroke="#1f77b4" stroke-width="1.5"/>
<circle cx="1278.8" cy="107.5" r="1.8" fill="#1f77b4"/>
<line x1="1283.5" y1="86.9" x2="1283.5" y2="102.9" stroke="#1f77b4" stroke-width="1.5"/>
<circle cx="1283.5" cy="94.9" r="1.8" fill="#1f77b4"/>
<line x1="1288.2" y1="78.2" x2="1288.2" y2="94.2" stroke="#1f77b4" stroke-width="1.5"/>
<circle cx="1288.2" cy="86.2" r="1.8" fill="#1f77b4"/>
<rect x="102.0" y="348.5" width="1197.5" height="83.9" fill="#fff"/>
<rect x="551.7" y="348.5" width="54.5" height="83.9" fill="#bfbf00"/>
<polygon points="106.4,432.4 106.4,425.3 108.4,424.0 110.3,424.7 112.9,425.3 115.4,426.0 119.3,425.7 122.5,424.7 127.0,422.1 130.8,421.5 134.7,422.8 138.6,424.0 142.4,425.3 145.0,426.0 147.6,427.3 151.4,428.5 154.0,427.9 156.6,428.8 160.4,429.8 164.3,429.8 166.8,428.5 169.4,427.9 172.0,427.9 174.6,427.3 177.1,428.5 181.0,428.8 184.8,428.5 188.7,429.2 192.5,429.6 197.7,429.8 202.8,430.5 208.0,430.5 213.1,429.8 217.0,427.9 219.5,429.2 223.4,430.1 227.2,430.9 233.7,430.9 237.5,429.2 241.4,427.3 245.2,429.2 249.1,430.5 254.2,430.9 259.4,431.1 265.8,430.9 272.2,430.5 278.7,430.9 296.8,429.3 302.1,431.1 307.5,432.1 307.5,432.4" fill="#c4c4c4"/>
<defs><clipPath id="cp1"><rect x="102.0" y="348.5" width="1197.5" height="83.9"/></clipPath></defs>
<rect x="122.1" y="348.5" width="12.0" height="83.9" fill="#a4a4a4" stroke="#333" stroke-width="1.1"/>
<path d="M122.1,301.8L134.2,291.5M122.1,326.0L134.2,315.7M122.1,350.2L134.2,339.9M122.1,374.4L134.2,364.1M122.1,398.6L134.2,388.3M122.1,422.8L134.2,412.5M122.1,447.0L134.2,436.7" stroke="#222" stroke-width="1" clip-path="url(#cpb3534)"/>
<defs><clipPath id="cpb3534"><rect x="122.1" y="348.5" width="12.0" height="83.9"/></clipPath></defs>
<rect x="1248.3" y="348.5" width="7.0" height="83.9" fill="#a4a4a4" stroke="#333" stroke-width="1.1"/>
<path d="M1248.3,301.8L1255.3,295.7M1248.3,326.0L1255.3,319.9M1248.3,350.2L1255.3,344.1M1248.3,374.4L1255.3,368.3M1248.3,398.6L1255.3,392.5M1248.3,422.8L1255.3,416.7M1248.3,447.0L1255.3,440.9" stroke="#222" stroke-width="1" clip-path="url(#cpb5455)"/>
<defs><clipPath id="cpb5455"><rect x="1248.3" y="348.5" width="7.0" height="83.9"/></clipPath></defs>
<line x1="279.6" y1="348.5" x2="279.6" y2="432.4" stroke="#555" stroke-width="1.5" stroke-dasharray="4,3"/>
<line x1="305.4" y1="348.5" x2="305.4" y2="432.4" stroke="#555" stroke-width="1.5" stroke-dasharray="4,3"/>
<line x1="341.2" y1="348.5" x2="341.2" y2="432.4" stroke="#555" stroke-width="1.5" stroke-dasharray="4,3"/>
<line x1="579.2" y1="348.5" x2="579.2" y2="432.4" stroke="#222" stroke-width="1.2" stroke-dasharray="1.5,1.5"/>
<polyline points="105.1,402.8 106.3,404.7 107.5,401.0 108.7,398.5 109.8,420.7 111.0,412.5 112.2,398.9 113.4,394.4 114.5,401.3 115.7,394.7 116.9,388.2 118.0,417.8 119.2,415.2 120.4,399.0 121.6,399.6 122.7,387.4 123.9,385.8 125.1,383.5 126.3,380.0 127.4,377.8 128.6,392.9 129.8,407.0 130.9,398.3 132.1,389.6 133.3,406.5 134.5,412.4 135.6,393.1 136.8,381.1 138.0,392.3 139.2,398.0 140.3,397.6 141.5,400.9 142.7,407.2 143.8,393.9 145.0,371.6 146.2,391.7 147.4,403.9 148.5,405.5 149.7,406.5 150.9,396.4 152.1,389.2 153.2,379.9 154.4,394.9 155.6,411.1 156.7,381.8 157.9,392.9 159.1,403.2 160.3,397.6 161.4,394.6 162.6,396.3 163.8,399.4 165.0,395.7 166.1,393.3 167.3,377.1 168.5,375.0 169.6,406.0 170.8,411.4 172.0,401.8 173.2,392.2 174.3,392.7 175.5,399.4 176.7,384.6 177.9,383.0 179.0,384.7 180.2,390.5 181.4,379.6 182.5,372.8 183.7,378.3 184.9,384.5 186.1,393.1 187.2,402.7 188.4,383.0 189.6,381.2 190.8,383.6 191.9,387.1 193.1,390.1 194.3,398.9 195.4,390.5 196.6,385.5 197.8,394.0 199.0,403.2 200.1,403.9 201.3,395.2 202.5,384.0 203.7,378.7 204.8,392.8 206.0,392.6 207.2,388.6 208.3,390.5 209.5,388.2 210.7,383.8 211.9,379.6 213.0,387.7 214.2,409.8 215.4,392.8 216.6,377.8 217.7,378.6 218.9,389.0 220.1,398.6 221.2,403.5 222.4,397.5 223.6,392.7 224.8,387.5 225.9,388.6 227.1,396.5 228.3,400.5 229.5,397.4 230.6,393.3 231.8,393.2 233.0,389.3 234.1,391.0 235.3,399.8 236.5,404.3 237.7,392.6 238.8,381.3 240.0,379.8 241.2,390.8 242.4,401.9 243.5,408.4 244.7,395.0 245.9,391.5 247.1,385.5 248.2,375.8 249.4,369.3 250.6,376.7 251.7,384.8 252.9,393.6 254.1,393.2 255.3,379.1 256.4,390.1 257.6,386.6 258.8,372.0 260.0,373.9 261.1,373.6 262.3,373.1 263.5,374.4 264.6,378.1 265.8,382.3 267.0,377.7 268.2,376.3 269.3,385.4 270.5,387.6 271.7,386.0 272.9,388.8 274.0,391.6 275.2,387.0 276.4,382.4 277.5,374.7 278.7,365.5 279.9,357.1 281.1,363.0 282.2,360.1 283.4,367.2 284.6,373.6 285.8,370.9 286.9,365.0 288.1,369.7 289.3,375.7 290.4,383.0 291.6,387.3 292.8,383.7 294.0,404.2 295.1,411.6 296.3,412.7 297.5,388.7 298.7,384.5 299.8,381.2 301.0,373.0 302.2,364.3 303.3,365.7 304.5,377.6 305.7,369.0 306.9,363.8 308.0,378.8 309.2,374.6 310.4,364.0 311.6,367.7 312.7,372.2 313.9,375.2 315.1,380.8 316.2,386.2 317.4,381.9 318.6,375.6 319.8,370.0 320.9,366.0 322.1,378.4 323.3,373.0 324.5,376.4 325.6,383.4 326.8,390.2 328.0,395.2 329.1,397.9 330.3,386.2 331.5,374.9 332.7,377.2 333.8,382.3 335.0,380.8 336.2,377.9 337.4,379.8 338.5,385.9 339.7,377.4 340.9,367.7 342.0,370.2 343.2,385.3 344.4,380.1 345.6,371.4 346.7,366.6 347.9,375.5 349.1,383.4 350.3,393.5 351.4,404.4 352.6,413.5 353.8,420.9 354.9,428.0 356.1,415.0 357.3,399.9 358.5,386.9 359.6,383.0 360.8,380.7 362.0,372.2 363.2,369.7 364.3,374.9 365.5,371.7 366.7,365.7 367.8,370.7 369.0,379.3 370.2,386.4 371.4,397.0 372.5,405.4 373.7,413.9 374.9,414.9 376.1,408.0 377.2,397.6 378.4,387.9 379.6,380.4 380.7,373.0 381.9,377.8 383.1,377.2 384.3,371.8 385.4,375.3 386.6,373.6 387.8,365.0 389.0,367.1 390.1,371.3 391.3,370.3 392.5,367.6 393.7,372.3 394.8,369.3 396.0,361.4 397.2,358.8 398.3,360.4 399.5,362.2 400.7,363.7 401.9,362.9 403.0,361.4 404.2,365.5 405.4,368.3 406.6,372.7 407.7,375.8 408.9,374.0 410.1,370.5 411.2,367.3 412.4,371.5 413.6,369.6 414.8,362.8 415.9,369.2 417.1,374.7 418.3,370.8 419.5,369.1 420.6,376.2 421.8,367.9 423.0,365.1 424.1,369.0 425.3,378.3 426.5,374.0 427.7,371.5 428.8,372.6 430.0,376.7 431.2,381.4 432.4,375.3 433.5,368.0 434.7,367.8 435.9,359.4 437.0,367.3 438.2,373.8 439.4,364.9 440.6,367.9 441.7,371.3 442.9,369.3 444.1,360.7 445.3,364.9 446.4,371.5 447.6,368.2 448.8,364.4 449.9,373.5 451.1,384.3 452.3,384.9 453.5,378.5 454.6,371.0 455.8,371.5 457.0,367.6 458.2,368.7 459.3,366.5 460.5,364.6 461.7,359.7 462.8,356.2 464.0,355.6 465.2,359.5 466.4,362.5 467.5,365.6 468.7,369.2 469.9,374.9 471.1,381.1 472.2,373.0 473.4,367.2 474.6,367.4 475.7,367.8 476.9,373.7 478.1,370.5 479.3,368.8 480.4,370.4 481.6,372.0 482.8,374.7 484.0,376.1 485.1,376.6 486.3,370.0 487.5,369.9 488.6,374.8 489.8,368.4 491.0,361.6 492.2,364.4 493.3,367.2 494.5,372.2 495.7,375.1 496.9,381.2 498.0,380.2 499.2,374.6 500.4,373.7 501.5,366.9 502.7,373.6 503.9,371.0 505.1,366.9 506.2,366.9 507.4,362.9 508.6,366.9 509.8,364.7 510.9,355.1 512.1,367.6 513.3,370.1 514.4,365.4 515.6,361.5 516.8,370.0 518.0,377.8 519.1,371.4 520.3,368.0 521.5,370.6 522.7,373.3 523.8,376.7 525.0,379.9 526.2,376.3 527.3,371.1 528.5,373.4 529.7,375.7 530.9,375.0 532.0,375.6 533.2,375.3 534.4,374.9 535.6,374.7 536.7,371.8 537.9,378.8 539.1,376.0 540.3,375.2 541.4,377.3 542.6,376.2 543.8,372.8 544.9,366.7 546.1,370.8 547.3,368.4 548.5,370.6 549.6,372.5 550.8,375.8 552.0,378.5 553.2,376.1 554.3,374.6 555.5,373.4 556.7,373.0 557.8,372.1 559.0,373.1 560.2,375.5 561.4,374.2 562.5,372.3 563.7,371.8 564.9,375.1 566.1,380.1 567.2,385.2 568.4,386.7 569.6,388.3 570.7,388.7 571.9,391.2 573.1,396.0 574.3,400.9 575.4,387.9 576.6,376.7 577.8,368.9 579.0,362.0 580.1,364.4 581.3,367.0 582.5,375.8 583.6,377.2 584.8,372.7 586.0,368.3 587.2,368.5 588.3,367.5 589.5,376.4 590.7,385.7 591.9,384.9 593.0,377.2 594.2,372.8 595.4,373.1 596.5,375.0 597.7,380.0 598.9,378.4 600.1,372.3 601.2,377.4 602.4,381.7 603.6,377.6 604.8,369.9 605.9,371.7 607.1,378.1 608.3,373.1 609.4,370.3 610.6,373.0 611.8,375.7 613.0,373.0 614.1,378.7 615.3,382.5 616.5,384.1 617.7,384.4 618.8,377.2 620.0,375.0 621.2,377.3 622.3,377.3 623.5,378.9 624.7,373.6 625.9,377.1 627.0,379.3 628.2,374.3 629.4,376.0 630.6,379.2 631.7,377.2 632.9,374.8 634.1,367.6 635.2,375.0 636.4,377.6 637.6,374.7 638.8,371.6 639.9,386.2 641.1,384.6 642.3,379.1 643.5,376.2 644.6,374.5 645.8,375.2 647.0,372.7 648.1,375.9 649.3,371.7 650.5,370.4 651.7,370.7 652.8,375.3 654.0,372.3 655.2,374.2 656.4,374.5 657.5,372.4 658.7,375.9 659.9,380.2 661.0,377.2 662.2,377.0 663.4,378.2 664.6,379.5 665.7,378.2 666.9,373.4 668.1,375.1 669.3,376.6 670.4,378.9 671.6,374.2 672.8,368.5 673.9,370.3 675.1,369.6 676.3,366.8 677.5,361.9 678.6,362.6 679.8,373.3 681.0,376.2 682.2,378.4 683.3,369.9 684.5,368.7 685.7,374.8 686.9,374.0 688.0,373.6 689.2,371.3 690.4,364.8 691.5,360.8 692.7,364.8 693.9,371.5 695.1,375.7 696.2,378.6 697.4,381.5 698.6,381.7 699.8,378.0 700.9,373.8 702.1,369.0 703.3,370.6 704.4,371.9 705.6,374.7 706.8,378.0 708.0,377.2 709.1,371.9 710.3,372.9 711.5,377.6 712.7,384.4 713.8,376.2 715.0,375.5 716.2,378.8 717.3,378.2 718.5,373.7 719.7,376.1 720.9,374.2 722.0,365.8 723.2,366.6 724.4,365.0 725.6,369.7 726.7,374.9 727.9,378.0 729.1,379.4 730.2,379.6 731.4,381.3 732.6,379.6 733.8,380.0 734.9,385.7 736.1,383.0 737.3,376.1 738.5,370.1 739.6,364.9 740.8,367.8 742.0,367.6 743.1,369.4 744.3,375.6 745.5,381.2 746.7,374.7 747.8,368.3 749.0,371.7 750.2,368.5 751.4,368.4 752.5,366.0 753.7,370.0 754.9,371.0 756.0,370.2 757.2,373.1 758.4,376.0 759.6,377.3 760.7,375.4 761.9,379.8 763.1,381.6 764.3,379.9 765.4,376.6 766.6,366.9 767.8,372.7 768.9,365.6 770.1,368.9 771.3,372.3 772.5,375.5 773.6,377.1 774.8,376.0 776.0,371.8 777.2,368.0 778.3,364.1 779.5,370.9 780.7,374.7 781.8,378.4 783.0,374.2 784.2,374.7 785.4,370.3 786.5,377.6 787.7,375.0 788.9,376.6 790.1,380.5 791.2,378.3 792.4,379.3 793.6,376.9 794.7,376.3 795.9,376.3 797.1,375.1 798.3,381.8 799.4,380.9 800.6,382.4 801.8,382.8 803.0,386.1 804.1,383.0 805.3,380.5 806.5,379.4 807.6,374.0 808.8,375.8 810.0,375.3 811.2,378.6 812.3,375.6 813.5,373.3 814.7,370.3 815.9,372.7 817.0,378.6 818.2,379.6 819.4,379.0 820.5,376.1 821.7,365.1 822.9,372.2 824.1,373.9 825.2,377.1 826.4,378.1 827.6,380.1 828.8,377.9 829.9,378.3 831.1,373.9 832.3,381.2 833.5,378.3 834.6,380.4 835.8,381.0 837.0,382.8 838.1,380.1 839.3,381.7 840.5,381.7 841.7,377.8 842.8,380.4 844.0,380.6 845.2,378.6 846.4,381.2 847.5,377.7 848.7,374.5 849.9,375.3 851.0,373.4 852.2,371.4 853.4,368.1 854.6,379.6 855.7,377.7 856.9,374.2 858.1,375.3 859.3,379.1 860.4,374.8 861.6,377.4 862.8,378.1 863.9,381.9 865.1,381.1 866.3,379.5 867.5,385.2 868.6,385.4 869.8,385.3 871.0,382.5 872.2,380.8 873.3,376.7 874.5,373.9 875.7,376.4 876.8,379.2 878.0,376.6 879.2,380.2 880.4,378.3 881.5,378.0 882.7,372.7 883.9,375.1 885.1,371.4 886.2,375.0 887.4,381.0 888.6,378.1 889.7,379.0 890.9,378.8 892.1,381.3 893.3,382.9 894.4,384.7 895.6,386.3 896.8,392.9 898.0,398.4 899.1,394.1 900.3,392.2 901.5,389.1 902.6,383.1 903.8,386.2 905.0,387.9 906.2,387.6 907.3,384.7 908.5,381.4 909.7,382.8 910.9,379.2 912.0,377.7 913.2,376.8 914.4,382.6 915.5,379.6 916.7,379.1 917.9,378.1 919.1,376.9 920.2,375.0 921.4,376.6 922.6,380.3 923.8,382.2 924.9,378.2 926.1,379.8 927.3,378.7 928.4,375.9 929.6,373.5 930.8,370.3 932.0,374.2 933.1,377.9 934.3,377.0 935.5,375.5 936.7,375.7 937.8,378.8 939.0,378.9 940.2,379.4 941.3,377.7 942.5,378.4 943.7,380.1 944.9,379.1 946.0,376.0 947.2,374.4 948.4,379.1 949.6,381.4 950.7,383.1 951.9,386.1 953.1,381.0 954.2,373.9 955.4,373.1 956.6,377.7 957.8,376.7 958.9,379.7 960.1,377.3 961.3,374.3 962.5,375.9 963.6,378.0 964.8,375.8 966.0,373.1 967.1,375.9 968.3,375.4 969.5,377.4 970.7,377.2 971.8,382.0 973.0,377.8 974.2,378.1 975.4,378.3 976.5,378.2 977.7,377.0 978.9,377.7 980.1,377.3 981.2,378.7 982.4,388.9 983.6,389.0 984.7,382.3 985.9,381.4 987.1,382.7 988.3,391.1 989.4,390.6 990.6,385.9 991.8,376.8 993.0,374.8 994.1,379.9 995.3,378.9 996.5,384.1 997.6,377.2 998.8,381.7 1000.0,382.4 1001.2,379.9 1002.3,379.6 1003.5,382.0 1004.7,379.6 1005.9,377.6 1007.0,380.0 1008.2,378.7 1009.4,378.9 1010.5,376.7 1011.7,376.9 1012.9,377.5 1014.1,377.5 1015.2,378.7 1016.4,379.9 1017.6,377.7 1018.8,379.1 1019.9,374.8 1021.1,375.5 1022.3,373.8 1023.4,375.4 1024.6,378.7 1025.8,385.9 1027.0,383.7 1028.1,381.9 1029.3,380.6 1030.5,378.7 1031.7,373.4 1032.8,378.0 1034.0,374.0 1035.2,372.7 1036.3,370.9 1037.5,371.0 1038.7,373.9 1039.9,380.5 1041.0,386.4 1042.2,386.7 1043.4,385.1 1044.6,381.9 1045.7,380.9 1046.9,386.8 1048.1,381.5 1049.2,385.1 1050.4,386.8 1051.6,388.5 1052.8,383.8 1053.9,384.2 1055.1,384.7 1056.3,381.8 1057.5,381.0 1058.6,382.2 1059.8,384.0 1061.0,384.2 1062.1,387.6 1063.3,380.5 1064.5,379.8 1065.7,375.2 1066.8,377.0 1068.0,377.0 1069.2,376.9 1070.4,376.8 1071.5,380.8 1072.7,382.8 1073.9,388.4 1075.0,388.9 1076.2,386.7 1077.4,388.5 1078.6,386.6 1079.7,383.9 1080.9,381.7 1082.1,380.6 1083.3,381.1 1084.4,382.9 1085.6,383.3 1086.8,387.3 1087.9,382.3 1089.1,383.5 1090.3,381.7 1091.5,376.8 1092.6,379.1 1093.8,379.1 1095.0,383.0 1096.2,379.5 1097.3,377.2 1098.5,388.8 1099.7,393.0 1100.8,388.6 1102.0,385.2 1103.2,385.3 1104.4,384.3 1105.5,381.1 1106.7,373.3 1107.9,385.4 1109.1,388.0 1110.2,383.3 1111.4,379.5 1112.6,381.7 1113.7,382.9 1114.9,390.5 1116.1,387.9 1117.3,382.5 1118.4,377.4 1119.6,383.0 1120.8,380.4 1122.0,377.9 1123.1,381.8 1124.3,382.1 1125.5,386.4 1126.7,395.8 1127.8,386.7 1129.0,382.0 1130.2,382.1 1131.3,382.3 1132.5,385.3 1133.7,388.0 1134.9,390.6 1136.0,389.4 1137.2,385.0 1138.4,383.7 1139.6,385.6 1140.7,384.4 1141.9,383.3 1143.1,381.0 1144.2,380.6 1145.4,376.5 1146.6,377.2 1147.8,378.5 1148.9,380.8 1150.1,383.7 1151.3,389.0 1152.5,380.8 1153.6,379.7 1154.8,382.0 1156.0,378.6 1157.1,382.5 1158.3,379.4 1159.5,379.9 1160.7,384.5 1161.8,380.2 1163.0,381.5 1164.2,383.7 1165.4,383.8 1166.5,383.1 1167.7,384.8 1168.9,387.5 1170.0,385.2 1171.2,382.0 1172.4,384.1 1173.6,383.7 1174.7,383.0 1175.9,384.4 1177.1,381.7 1178.3,389.3 1179.4,387.2 1180.6,385.0 1181.8,383.6 1182.9,384.1 1184.1,382.1 1185.3,382.0 1186.5,376.0 1187.6,384.9 1188.8,382.8 1190.0,379.8 1191.2,375.1 1192.3,384.0 1193.5,382.4 1194.7,385.3 1195.8,385.9 1197.0,387.5 1198.2,382.4 1199.4,380.7 1200.5,375.1 1201.7,376.9 1202.9,379.5 1204.1,382.2 1205.2,385.9 1206.4,383.3 1207.6,385.4 1208.7,385.1 1209.9,384.8 1211.1,385.1 1212.3,391.1 1213.4,386.6 1214.6,386.3 1215.8,388.8 1217.0,387.3 1218.1,388.9 1219.3,385.8 1220.5,385.7 1221.6,385.9 1222.8,384.6 1224.0,383.1 1225.2,386.1 1226.3,385.9 1227.5,379.1 1228.7,383.4 1229.9,382.8 1231.0,382.4 1232.2,383.9 1233.4,385.0 1234.5,385.2 1235.7,377.4 1236.9,379.2 1238.1,380.3 1239.2,379.9 1240.4,379.8 1241.6,382.9 1242.8,379.2 1243.9,384.0 1245.1,387.6 1246.3,391.1 1247.4,387.2 1248.6,388.9 1249.8,382.4 1251.0,380.9 1252.1,381.3 1253.3,385.5 1254.5,387.7 1255.7,384.4 1256.8,375.8 1258.0,381.5 1259.2,382.2 1260.3,385.6 1261.5,385.6 1262.7,385.8 1263.9,384.7 1265.0,383.1 1266.2,383.7 1267.4,379.4 1268.6,378.3 1269.7,383.5 1270.9,384.3 1272.1,386.2 1273.3,381.7 1274.4,385.0 1275.6,385.2 1276.8,383.2 1277.9,384.0 1279.1,386.2 1280.3,386.7 1281.5,388.9 1282.6,382.3 1283.8,379.4 1285.0,377.9 1286.2,382.3 1287.3,386.4 1288.5,389.0 1289.7,383.6 1290.8,383.8 1292.0,380.9 1293.2,384.5 1294.4,389.4 1295.5,386.3 1296.7,385.6 1297.9,383.4 1299.1,386.7" fill="none" stroke="#0000ff" stroke-width="1.3" clip-path="url(#cp1)" stroke-linejoin="round"/>
<rect x="102.0" y="348.5" width="1197.5" height="83.9" fill="none" stroke="#333" stroke-width="1"/>
<line x1="98.5" y1="417.4" x2="102.0" y2="417.4" stroke="#333" stroke-width="0.8"/>
<text x="94.5" y="421.1" class="s" text-anchor="end">5</text>
<line x1="98.5" y1="392.0" x2="102.0" y2="392.0" stroke="#333" stroke-width="0.8"/>
<text x="94.5" y="395.7" class="s" text-anchor="end">10</text>
<line x1="98.5" y1="366.5" x2="102.0" y2="366.5" stroke="#333" stroke-width="0.8"/>
<text x="94.5" y="370.2" class="s" text-anchor="end">15</text>
<line x1="101.9" y1="432.4" x2="101.9" y2="435.9" stroke="#333" stroke-width="0.8"/>
<text x="101.9" y="447.6" class="s" text-anchor="middle">3500</text>
<line x1="160.5" y1="432.4" x2="160.5" y2="435.9" stroke="#333" stroke-width="0.8"/>
<text x="160.5" y="447.6" class="s" text-anchor="middle">3600</text>
<line x1="219.2" y1="432.4" x2="219.2" y2="435.9" stroke="#333" stroke-width="0.8"/>
<text x="219.2" y="447.6" class="s" text-anchor="middle">3700</text>
<line x1="277.8" y1="432.4" x2="277.8" y2="435.9" stroke="#333" stroke-width="0.8"/>
<text x="277.8" y="447.6" class="s" text-anchor="middle">3800</text>
<line x1="336.5" y1="432.4" x2="336.5" y2="435.9" stroke="#333" stroke-width="0.8"/>
<text x="336.5" y="447.6" class="s" text-anchor="middle">3900</text>
<line x1="395.1" y1="432.4" x2="395.1" y2="435.9" stroke="#333" stroke-width="0.8"/>
<text x="395.1" y="447.6" class="s" text-anchor="middle">4000</text>
<line x1="453.7" y1="432.4" x2="453.7" y2="435.9" stroke="#333" stroke-width="0.8"/>
<text x="453.7" y="447.6" class="s" text-anchor="middle">4100</text>
<line x1="512.4" y1="432.4" x2="512.4" y2="435.9" stroke="#333" stroke-width="0.8"/>
<text x="512.4" y="447.6" class="s" text-anchor="middle">4200</text>
<line x1="571.0" y1="432.4" x2="571.0" y2="435.9" stroke="#333" stroke-width="0.8"/>
<text x="571.0" y="447.6" class="s" text-anchor="middle">4300</text>
<line x1="629.7" y1="432.4" x2="629.7" y2="435.9" stroke="#333" stroke-width="0.8"/>
<text x="629.7" y="447.6" class="s" text-anchor="middle">4400</text>
<line x1="688.3" y1="432.4" x2="688.3" y2="435.9" stroke="#333" stroke-width="0.8"/>
<text x="688.3" y="447.6" class="s" text-anchor="middle">4500</text>
<line x1="746.9" y1="432.4" x2="746.9" y2="435.9" stroke="#333" stroke-width="0.8"/>
<text x="746.9" y="447.6" class="s" text-anchor="middle">4600</text>
<line x1="805.6" y1="432.4" x2="805.6" y2="435.9" stroke="#333" stroke-width="0.8"/>
<text x="805.6" y="447.6" class="s" text-anchor="middle">4700</text>
<line x1="864.2" y1="432.4" x2="864.2" y2="435.9" stroke="#333" stroke-width="0.8"/>
<text x="864.2" y="447.6" class="s" text-anchor="middle">4800</text>
<line x1="922.9" y1="432.4" x2="922.9" y2="435.9" stroke="#333" stroke-width="0.8"/>
<text x="922.9" y="447.6" class="s" text-anchor="middle">4900</text>
<line x1="981.5" y1="432.4" x2="981.5" y2="435.9" stroke="#333" stroke-width="0.8"/>
<text x="981.5" y="447.6" class="s" text-anchor="middle">5000</text>
<line x1="1040.1" y1="432.4" x2="1040.1" y2="435.9" stroke="#333" stroke-width="0.8"/>
<text x="1040.1" y="447.6" class="s" text-anchor="middle">5100</text>
<line x1="1098.8" y1="432.4" x2="1098.8" y2="435.9" stroke="#333" stroke-width="0.8"/>
<text x="1098.8" y="447.6" class="s" text-anchor="middle">5200</text>
<line x1="1157.4" y1="432.4" x2="1157.4" y2="435.9" stroke="#333" stroke-width="0.8"/>
<text x="1157.4" y="447.6" class="s" text-anchor="middle">5300</text>
<line x1="1216.1" y1="432.4" x2="1216.1" y2="435.9" stroke="#333" stroke-width="0.8"/>
<text x="1216.1" y="447.6" class="s" text-anchor="middle">5400</text>
<line x1="1274.7" y1="432.4" x2="1274.7" y2="435.9" stroke="#333" stroke-width="0.8"/>
<text x="1274.7" y="447.6" class="s" text-anchor="middle">5500</text>
<text x="98.5" y="346.2" class="s" style="font-size:10.6px;">e</text>
<text x="104.6" y="342.0" class="s" style="font-size:7.6px;">−17</text>
<text x="119.2" y="346.2" class="s" style="font-size:10.6px;">x2Å</text>
<text transform="translate(105.9,349) rotate(90)" class="s" text-anchor="end" style="font-size:11.5px;fill:#8a2be2;opacity:0.85">SiII {</text>
<text transform="translate(144.0,349) rotate(90)" class="s" text-anchor="end" style="font-size:11.5px;fill:#ff00ff;opacity:0.85">CII {</text>
<text transform="translate(196.5,349) rotate(90)" class="s" text-anchor="end" style="font-size:11.5px;fill:#ff0000;opacity:0.85">OVI {</text>
<text transform="translate(217.3,349) rotate(90)" class="s" text-anchor="end" style="font-size:11.5px;fill:#800080;opacity:0.85">HeII {</text>
<text transform="translate(198.4,305) rotate(90)" class="s" text-anchor="end" style="font-size:11.5px;fill:#ffa500;opacity:0.85">SiIV {</text>
<text transform="translate(325.0,349) rotate(90)" class="s" text-anchor="end" style="font-size:11.5px;fill:#8a2be2;opacity:0.85">SiIV {</text>
<text transform="translate(420.1,349) rotate(90)" class="s" text-anchor="end" style="font-size:11.5px;fill:#87ceeb;opacity:0.85">OII {</text>
<text transform="translate(432.5,349) rotate(90)" class="s" text-anchor="end" style="font-size:11.5px;fill:#ffa500;opacity:0.85">CIV {</text>
<text transform="translate(441.4,349) rotate(90)" class="s" text-anchor="end" style="font-size:11.5px;fill:#87ceeb;opacity:0.85">OII {</text>
<text transform="translate(626.4,349) rotate(90)" class="s" text-anchor="end" style="font-size:11.5px;fill:#ff0000;opacity:0.85">NV {</text>
<text transform="translate(674.1,349) rotate(90)" class="s" text-anchor="end" style="font-size:11.5px;fill:#ff0000;opacity:0.85">SiII {</text>
<text transform="translate(722.4,349) rotate(90)" class="s" text-anchor="end" style="font-size:11.5px;fill:#8a2be2;opacity:0.85">HeII {</text>
<text transform="translate(812.1,349) rotate(90)" class="s" text-anchor="end" style="font-size:11.5px;fill:#87ceeb;opacity:0.85">Hγ {</text>
<text transform="translate(835.8,349) rotate(90)" class="s" text-anchor="end" style="font-size:11.5px;fill:#87ceeb;opacity:0.85">Hγ {</text>
<text transform="translate(953.9,349) rotate(90)" class="s" text-anchor="end" style="font-size:11.5px;fill:#ff0000;opacity:0.85">SiIV {</text>
<text transform="translate(990.4,349) rotate(90)" class="s" text-anchor="end" style="font-size:11.5px;fill:#008000;opacity:0.85">Hγ {</text>
<text transform="translate(988.9,305) rotate(90)" class="s" text-anchor="end" style="font-size:11.5px;fill:#ffa500;opacity:0.85">CIII {</text>
<text transform="translate(1124.9,349) rotate(90)" class="s" text-anchor="end" style="font-size:11.5px;fill:#800080;opacity:0.85">CII {</text>
<text transform="translate(1144.9,349) rotate(90)" class="s" text-anchor="end" style="font-size:11.5px;fill:#87ceeb;opacity:0.85">Hβ {</text>
<text transform="translate(1161.4,349) rotate(90)" class="s" text-anchor="end" style="font-size:11.5px;fill:#8a2be2;opacity:0.85">CIII {</text>
<text transform="translate(1172.4,349) rotate(90)" class="s" text-anchor="end" style="font-size:11.5px;fill:#87ceeb;opacity:0.85">Hβ {</text>
<text transform="translate(1206.4,349) rotate(90)" class="s" text-anchor="end" style="font-size:11.5px;fill:#87ceeb;opacity:0.85">OIII {</text>
<text transform="translate(1234.9,349) rotate(90)" class="s" text-anchor="end" style="font-size:11.5px;fill:#87ceeb;opacity:0.85">OIII {</text>
<text transform="translate(1270.4,349) rotate(90)" class="s" text-anchor="end" style="font-size:11.5px;fill:#ff0000;opacity:0.85">CIV {</text>
<text transform="translate(1237.4,305) rotate(90)" class="s" text-anchor="end" style="font-size:11.5px;fill:#87ceeb;opacity:0.85">OIII {</text>
<text transform="translate(1265.4,305) rotate(90)" class="s" text-anchor="end" style="font-size:11.5px;fill:#87ceeb;opacity:0.85">OIII {</text>
<rect x="480.0" y="450.4" width="17.0" height="6.2" fill="#ff0000"/>
<text x="503.0" y="456.5" class="s" style="font-size:8.6px;">Lyα</text>
<rect x="534.0" y="450.4" width="17.0" height="6.2" fill="#008000"/>
<text x="557.0" y="456.5" class="s" style="font-size:8.6px;">OII</text>
<rect x="587.0" y="450.4" width="17.0" height="6.2" fill="#8a2be2"/>
<text x="610.0" y="456.5" class="s" style="font-size:8.6px;">CIV</text>
<rect x="641.0" y="450.4" width="17.0" height="6.2" fill="#800080"/>
<text x="664.0" y="456.5" class="s" style="font-size:8.6px;">CIII</text>
<rect x="694.0" y="450.4" width="17.0" height="6.2" fill="#ff00ff"/>
<text x="717.0" y="456.5" class="s" style="font-size:8.6px;">MgII</text>
<rect x="749.0" y="450.4" width="17.0" height="6.2" fill="#ffa500"/>
<text x="772.0" y="456.5" class="s" style="font-size:8.6px;">HeII</text>
<rect x="803.5" y="450.4" width="17.0" height="6.2" fill="#87ceeb"/>
<text x="826.5" y="456.5" class="s" style="font-size:8.6px;">(K)CaII</text>
<rect x="870.0" y="450.4" width="17.0" height="6.2" fill="#87ceeb"/>
<text x="893.0" y="456.5" class="s" style="font-size:8.6px;">(H)CaII</text>
<path d="M122.7 574.2h26.6M122.7 576.6h26.6M120.3 579.0h31.3M120.3 581.3h31.3M120.3 583.7h31.3M120.3 586.1h31.3M122.7 588.4h26.6M122.7 590.8h26.6M117.9 593.2h24.2M117.9 595.5h26.6M117.9 597.9h26.6M117.9 600.3h26.6M117.9 602.6h26.6M117.9 605.0h26.6M120.3 607.4h21.8" stroke="#000000" stroke-width="2.72" shape-rendering="crispEdges"/>
<path d="M127.5 571.9h17.0M120.3 576.6h2.7M148.9 576.6h2.7M120.3 588.4h2.7M148.9 588.4h2.7M120.3 590.8h2.7M141.8 593.2h5.1M115.6 595.5h2.7M144.1 595.5h2.7M115.6 597.9h2.7M144.1 597.9h2.7M115.6 600.3h2.7M144.1 600.3h2.7M115.6 602.6h2.7M144.1 602.6h2.7M115.6 605.0h2.7M117.9 607.4h2.7M141.8 607.4h2.7" stroke="#141414" stroke-width="2.72" shape-rendering="crispEdges"/>
<path d="M125.1 571.9h2.7M144.1 571.9h5.1M120.3 574.2h2.7M148.9 574.2h2.7M117.9 579.0h2.7M117.9 581.3h2.7M117.9 583.7h2.7M117.9 590.8h2.7M148.9 590.8h2.7M115.6 593.2h2.7M144.1 605.0h2.7M120.3 609.8h21.8" stroke="#272727" stroke-width="2.72" shape-rendering="crispEdges"/>
<path d="M122.7 571.9h2.7M117.9 576.6h2.7M151.3 576.6h2.7M151.3 579.0h2.7M151.3 581.3h2.7M151.3 583.7h2.7M117.9 586.1h2.7M151.3 586.1h2.7M117.9 588.4h2.7M151.3 588.4h2.7M146.5 593.2h2.7M113.2 597.9h2.7M113.2 600.3h2.7M113.2 602.6h2.7M115.6 607.4h2.7M117.9 609.8h2.7" stroke="#3b3b3b" stroke-width="2.72" shape-rendering="crispEdges"/>
<path d="M125.1 569.5h21.8M120.3 571.9h2.7M148.9 571.9h2.7M117.9 574.2h2.7M115.6 590.8h2.7M148.9 593.2h2.7M113.2 595.5h2.7M146.5 595.5h2.7M146.5 597.9h2.7M146.5 600.3h2.7M146.5 602.6h2.7M113.2 605.0h2.7M146.5 605.0h2.7M144.1 607.4h2.7M141.8 609.8h2.7" stroke="#4e4e4e" stroke-width="2.72" shape-rendering="crispEdges"/>
<path d="M151.3 574.2h2.7M115.6 581.3h2.7M151.3 590.8h2.7M113.2 593.2h2.7M122.7 612.1h17.0" stroke="#626262" stroke-width="2.72" shape-rendering="crispEdges"/>
<path d="M122.7 569.5h2.7M146.5 569.5h2.7M115.6 576.6h2.7M115.6 579.0h2.7M153.7 579.0h2.7M153.7 581.3h2.7M115.6 583.7h2.7M153.7 583.7h2.7M115.6 586.1h2.7M153.7 586.1h2.7M115.6 588.4h2.7M151.3 593.2h2.7M113.2 607.4h2.7M146.5 607.4h2.7M115.6 609.8h2.7M144.1 609.8h2.7M117.9 612.1h5.1M139.4 612.1h2.7" stroke="#767676" stroke-width="2.72" shape-rendering="crispEdges"/>
<path d="M120.3 569.5h2.7M117.9 571.9h2.7M151.3 571.9h2.7M115.6 574.2h2.7M153.7 576.6h2.7M153.7 588.4h2.7M113.2 590.8h2.7M110.8 597.9h2.7M110.8 600.3h2.7M110.8 602.6h2.7M110.8 605.0h2.7M141.8 612.1h2.7" stroke="#898989" stroke-width="2.72" shape-rendering="crispEdges"/>
<path d="M151.3 541.1h2.7M82.2 555.3h2.7M122.7 567.1h21.8M148.9 569.5h2.7M153.7 574.2h2.7M113.2 588.4h2.7M182.3 588.4h5.1M110.8 593.2h2.7M110.8 595.5h2.7M148.9 595.5h2.7M148.9 597.9h2.7M148.9 600.3h2.7M148.9 602.6h2.7M110.8 607.4h2.7M113.2 609.8h2.7M146.5 609.8h2.7M115.6 612.1h2.7M144.1 612.1h2.7M122.7 614.5h2.7M129.9 614.5h7.5M213.2 671.3h2.7M210.9 676.0h2.7M210.9 678.4h2.7" stroke="#9d9d9d" stroke-width="2.72" shape-rendering="crispEdges"/>
<path d="M72.7 534.0h2.7M156.1 534.0h2.7M156.1 541.1h2.7M151.3 543.5h2.7M75.1 545.8h5.1M134.6 545.8h2.7M151.3 545.8h2.7M70.3 548.2h2.7M70.3 550.6h2.7M79.8 550.6h2.7M84.6 550.6h2.7M75.1 552.9h2.7M79.8 555.3h2.7M77.4 557.7h2.7M75.1 560.0h2.7M194.2 562.4h2.7M129.9 564.8h2.7M141.8 564.8h2.7M144.1 567.1h5.1M201.3 567.1h2.7M117.9 569.5h2.7M151.3 569.5h2.7M87.0 571.9h2.7M115.6 571.9h2.7M153.7 571.9h2.7M113.2 576.6h2.7M113.2 579.0h2.7M113.2 581.3h2.7M156.1 581.3h2.7M113.2 583.7h2.7M113.2 586.1h2.7M156.1 586.1h2.7M187.0 588.4h5.1M153.7 590.8h2.7M187.0 590.8h5.1M153.7 593.2h2.7M184.6 593.2h7.5M187.0 595.5h2.7M151.3 597.9h2.7M108.4 600.3h2.7M148.9 605.0h2.7M148.9 607.4h2.7M110.8 609.8h2.7M113.2 612.1h2.7M117.9 614.5h5.1M125.1 614.5h5.1M137.0 614.5h5.1M215.6 661.8h2.4M210.9 668.9h2.7M215.6 668.9h2.4M208.5 671.3h5.1M203.7 673.7h2.7M208.5 673.7h2.7M213.2 673.7h4.8M208.5 676.0h2.7M213.2 676.0h4.8M208.5 678.4h2.7M213.2 678.4h4.8" stroke="#b1b1b1" stroke-width="2.72" shape-rendering="crispEdges"/>
<path d="M84.6 534.0h2.7M163.2 534.0h2.7M206.1 534.0h2.7M213.2 534.0h2.7M70.3 536.4h2.7M75.1 536.4h5.1M84.6 536.4h2.7M110.8 536.4h2.7M134.6 536.4h2.7M146.5 536.4h5.1M189.4 536.4h2.7M198.9 536.4h2.7M87.0 538.7h2.7M139.4 538.7h2.7M146.5 538.7h9.9M158.4 538.7h2.7M170.4 538.7h2.7M70.3 541.1h2.7M75.1 541.1h2.7M79.8 541.1h2.7M84.6 541.1h5.1M91.7 541.1h2.7M113.2 541.1h2.7M117.9 541.1h2.7M146.5 541.1h5.1M153.7 541.1h2.7M163.2 541.1h2.7M177.5 541.1h2.7M70.3 543.5h5.1M77.4 543.5h2.7M82.2 543.5h2.7M91.7 543.5h2.7M153.7 543.5h2.7M158.4 543.5h2.7M170.4 543.5h2.7M189.4 543.5h2.7M198.9 543.5h2.7M206.1 543.5h2.7M72.7 545.8h2.7M79.8 545.8h2.7M98.9 545.8h5.1M146.5 545.8h2.7M153.7 545.8h2.7M198.9 545.8h2.7M72.7 548.2h9.9M89.4 548.2h2.7M110.8 548.2h2.7M175.1 548.2h2.7M72.7 550.6h7.5M89.4 550.6h5.1M158.4 550.6h2.7M170.4 550.6h2.7M184.6 550.6h5.1M72.7 552.9h2.7M77.4 552.9h5.1M84.6 552.9h2.7M179.9 552.9h2.7M206.1 552.9h2.7M70.3 555.3h5.1M84.6 555.3h2.7M122.7 555.3h2.7M198.9 555.3h2.7M70.3 557.7h7.5M82.2 557.7h2.7M139.4 557.7h2.7M170.4 557.7h2.7M175.1 557.7h2.7M70.3 560.0h5.1M77.4 560.0h2.7M82.2 560.0h7.5M98.9 560.0h2.7M110.8 560.0h2.7M125.1 560.0h2.7M137.0 560.0h2.7M146.5 560.0h2.7M151.3 560.0h2.7M179.9 560.0h2.7M70.3 562.4h2.7M77.4 562.4h2.7M82.2 562.4h7.5M110.8 562.4h2.7M129.9 562.4h2.7M148.9 562.4h2.7M163.2 562.4h2.7M170.4 562.4h2.7M191.8 562.4h2.7M198.9 562.4h2.7M79.8 564.8h2.7M84.6 564.8h2.7M89.4 564.8h2.7M117.9 564.8h2.7M125.1 564.8h5.1M132.2 564.8h5.1M144.1 564.8h7.5M191.8 564.8h2.7M215.6 564.8h2.4M82.2 567.1h2.7M91.7 567.1h2.7M115.6 567.1h7.5M151.3 567.1h2.7M158.4 567.1h2.7M198.9 567.1h2.7M91.7 569.5h2.7M115.6 569.5h2.7M206.1 569.5h2.7M70.3 571.9h2.7M98.9 571.9h2.7M113.2 571.9h2.7M160.8 571.9h2.7M201.3 571.9h5.1M215.6 571.9h2.4M75.1 574.2h2.7M103.7 574.2h2.7M156.1 574.2h2.7M179.9 574.2h5.1M189.4 574.2h5.1M106.0 576.6h2.7M110.8 576.6h2.7M158.4 576.6h2.7M170.4 576.6h2.7M103.7 579.0h2.7M156.1 579.0h5.1M184.6 579.0h2.7M189.4 579.0h2.7M201.3 579.0h2.7M72.7 581.3h2.7M158.4 581.3h2.7M177.5 581.3h2.7M182.3 581.3h5.1M189.4 581.3h2.7M208.5 581.3h2.7M110.8 583.7h2.7M156.1 583.7h2.7M170.4 583.7h2.7M179.9 583.7h12.3M201.3 583.7h2.7M72.7 586.1h2.7M172.7 586.1h5.1M179.9 586.1h14.6M87.0 588.4h2.7M103.7 588.4h2.7M110.8 588.4h2.7M156.1 588.4h2.7M175.1 588.4h2.7M179.9 588.4h2.7M196.6 588.4h2.7M110.8 590.8h2.7M156.1 590.8h2.7M179.9 590.8h7.5M203.7 590.8h2.7M208.5 590.8h2.7M172.7 593.2h2.7M182.3 593.2h2.7M191.8 593.2h2.7M198.9 593.2h2.7M70.3 595.5h2.7M79.8 595.5h2.7M108.4 595.5h2.7M151.3 595.5h2.7M158.4 595.5h2.7M175.1 595.5h2.7M179.9 595.5h7.5M189.4 595.5h2.7M70.3 597.9h5.1M96.5 597.9h2.7M106.0 597.9h5.1M156.1 597.9h2.7M160.8 597.9h2.7M172.7 597.9h2.7M179.9 597.9h5.1M187.0 597.9h5.1M98.9 600.3h2.7M151.3 600.3h2.7M179.9 600.3h5.1M187.0 600.3h5.1M198.9 600.3h2.7M208.5 600.3h2.7M213.2 600.3h2.7M75.1 602.6h5.1M96.5 602.6h2.7M108.4 602.6h2.7M151.3 602.6h2.7M158.4 602.6h2.7M184.6 602.6h2.7M196.6 602.6h2.7M208.5 602.6h2.7M108.4 605.0h2.7M206.1 605.0h2.7M215.6 605.0h2.4M87.0 607.4h2.7M91.7 607.4h2.7M108.4 607.4h2.7M151.3 607.4h2.7M184.6 607.4h2.7M191.8 607.4h2.7M210.9 607.4h5.1M94.1 609.8h2.7M151.3 609.8h5.1M146.5 612.1h2.7M153.7 612.1h5.1M160.8 612.1h2.7M196.6 612.1h2.7M213.2 612.1h2.7M72.7 614.5h2.7M82.2 614.5h2.7M148.9 614.5h2.7M175.1 614.5h2.7M125.1 616.9h2.7M134.6 616.9h2.7M172.7 616.9h5.1M182.3 616.9h2.7M210.9 616.9h2.7M141.8 619.2h5.1M160.8 619.2h2.7M187.0 619.2h2.7M198.9 619.2h2.7M203.7 619.2h2.7M75.1 621.6h2.7M101.3 621.6h2.7M115.6 621.6h2.7M146.5 621.6h2.7M168.0 621.6h2.7M175.1 621.6h2.7M208.5 621.6h2.7M215.6 621.6h2.4M108.4 624.0h2.7M132.2 624.0h2.7M148.9 624.0h2.7M165.6 624.0h2.7M194.2 624.0h2.7M70.3 626.3h2.7M108.4 626.3h7.5M148.9 626.3h2.7M158.4 626.3h2.7M184.6 626.3h2.7M213.2 626.3h2.7M84.6 628.7h2.7M103.7 628.7h2.7M127.5 628.7h2.7M144.1 628.7h2.7M156.1 628.7h2.7M168.0 628.7h5.1M175.1 628.7h2.7M182.3 628.7h2.7M206.1 628.7h2.7M101.3 631.1h2.7M122.7 631.1h2.7M132.2 631.1h2.7M151.3 631.1h2.7M170.4 631.1h2.7M177.5 631.1h2.7M189.4 631.1h2.7M208.5 631.1h2.7M122.7 633.4h2.7M146.5 633.4h2.7M156.1 633.4h2.7M96.5 635.8h2.7M110.8 635.8h2.7M125.1 635.8h2.7M148.9 635.8h5.1M158.4 635.8h2.7M165.6 635.8h2.7M175.1 635.8h2.7M179.9 635.8h2.7M194.2 635.8h2.7M91.7 638.2h2.7M106.0 638.2h2.7M132.2 638.2h2.7M137.0 638.2h2.7M163.2 638.2h2.7M172.7 638.2h2.7M213.2 638.2h2.7M77.4 640.5h2.7M82.2 640.5h2.7M110.8 640.5h2.7M120.3 640.5h2.7M189.4 640.5h2.7M208.5 640.5h2.7M75.1 642.9h2.7M160.8 642.9h2.7M198.9 642.9h2.7M96.5 645.3h2.7M117.9 645.3h2.7M146.5 645.3h5.1M163.2 645.3h2.7M172.7 645.3h2.7M206.1 645.3h2.7M110.8 647.6h2.7M127.5 647.6h2.7M151.3 647.6h2.7M187.0 647.6h5.1M196.6 647.6h2.7M77.4 650.0h2.7M108.4 650.0h2.7M115.6 650.0h2.7M177.5 650.0h2.7M75.1 652.4h2.7M98.9 652.4h2.7M115.6 652.4h2.7M182.3 652.4h2.7M75.1 654.7h2.7M177.5 654.7h2.7M215.6 654.7h2.4M98.9 657.1h2.7M103.7 657.1h2.7M137.0 657.1h2.7M144.1 657.1h2.7M151.3 657.1h2.7M203.7 657.1h2.7M110.8 659.5h2.7M132.2 659.5h2.7M139.4 659.5h7.5M158.4 659.5h5.1M189.4 659.5h2.7M203.7 659.5h2.7M115.6 661.8h2.7M165.6 661.8h2.7M175.1 661.8h2.7M179.9 661.8h2.7M184.6 661.8h2.7M196.6 661.8h5.1M203.7 661.8h2.7M208.5 661.8h2.7M98.9 664.2h5.1M187.0 664.2h2.7M191.8 664.2h2.7M213.2 664.2h2.7M72.7 666.6h2.7M77.4 666.6h2.7M110.8 666.6h2.7M170.4 666.6h2.7M198.9 666.6h2.7M203.7 666.6h2.7M208.5 666.6h2.7M213.2 666.6h2.7M77.4 668.9h2.7M96.5 668.9h2.7M113.2 668.9h2.7M137.0 668.9h2.7M156.1 668.9h2.7M170.4 668.9h5.1M201.3 668.9h2.7M206.1 668.9h5.1M213.2 668.9h2.7M79.8 671.3h2.7M137.0 671.3h2.7M141.8 671.3h2.7M151.3 671.3h2.7M165.6 671.3h2.7M177.5 671.3h2.7M194.2 671.3h2.7M201.3 671.3h5.1M215.6 671.3h2.4M75.1 673.7h2.7M87.0 673.7h2.7M91.7 673.7h2.7M96.5 673.7h2.7M132.2 673.7h2.7M196.6 673.7h2.7M206.1 673.7h2.7M210.9 673.7h2.7M72.7 676.0h2.7M77.4 676.0h2.7M108.4 676.0h2.7M127.5 676.0h5.1M141.8 676.0h2.7M148.9 676.0h2.7M153.7 676.0h5.1M203.7 676.0h5.1M94.1 678.4h2.7M108.4 678.4h2.7M194.2 678.4h5.1M203.7 678.4h5.1" stroke="#c4c4c4" stroke-width="2.72" shape-rendering="crispEdges"/>
<path d="M75.1 534.0h9.9M87.0 534.0h5.1M94.1 534.0h14.6M110.8 534.0h2.7M115.6 534.0h5.1M125.1 534.0h5.1M134.6 534.0h5.1M141.8 534.0h5.1M148.9 534.0h7.5M160.8 534.0h2.7M165.6 534.0h2.7M170.4 534.0h9.9M184.6 534.0h2.7M189.4 534.0h5.1M198.9 534.0h7.5M215.6 534.0h2.4M72.7 536.4h2.7M79.8 536.4h2.7M87.0 536.4h7.5M96.5 536.4h2.7M101.3 536.4h2.7M106.0 536.4h5.1M125.1 536.4h7.5M137.0 536.4h7.5M151.3 536.4h17.0M170.4 536.4h7.5M179.9 536.4h2.7M191.8 536.4h5.1M206.1 536.4h9.9M72.7 538.7h7.5M82.2 538.7h2.7M89.4 538.7h5.1M98.9 538.7h5.1M106.0 538.7h5.1M115.6 538.7h9.9M129.9 538.7h2.7M134.6 538.7h5.1M141.8 538.7h5.1M156.1 538.7h2.7M160.8 538.7h2.7M175.1 538.7h5.1M187.0 538.7h2.7M191.8 538.7h5.1M198.9 538.7h2.7M208.5 538.7h7.5M72.7 541.1h2.7M77.4 541.1h2.7M82.2 541.1h2.7M89.4 541.1h2.7M94.1 541.1h2.7M98.9 541.1h2.7M106.0 541.1h7.5M122.7 541.1h2.7M127.5 541.1h5.1M134.6 541.1h12.3M158.4 541.1h2.7M165.6 541.1h7.5M175.1 541.1h2.7M179.9 541.1h9.9M194.2 541.1h9.9M206.1 541.1h9.9M75.1 543.5h2.7M84.6 543.5h7.5M96.5 543.5h9.9M117.9 543.5h2.7M125.1 543.5h2.7M132.2 543.5h5.1M141.8 543.5h9.9M156.1 543.5h2.7M165.6 543.5h5.1M172.7 543.5h2.7M177.5 543.5h2.7M182.3 543.5h2.7M187.0 543.5h2.7M191.8 543.5h7.5M203.7 543.5h2.7M208.5 543.5h2.7M213.2 543.5h2.7M70.3 545.8h2.7M82.2 545.8h17.0M103.7 545.8h7.5M113.2 545.8h2.7M120.3 545.8h2.7M127.5 545.8h2.7M132.2 545.8h2.7M139.4 545.8h2.7M144.1 545.8h2.7M148.9 545.8h2.7M156.1 545.8h9.9M168.0 545.8h2.7M177.5 545.8h5.1M184.6 545.8h7.5M194.2 545.8h5.1M201.3 545.8h2.7M206.1 545.8h7.5M215.6 545.8h2.4M82.2 548.2h7.5M91.7 548.2h2.7M96.5 548.2h2.7M108.4 548.2h2.7M113.2 548.2h2.7M117.9 548.2h2.7M122.7 548.2h7.5M132.2 548.2h9.9M144.1 548.2h5.1M153.7 548.2h5.1M165.6 548.2h2.7M170.4 548.2h2.7M182.3 548.2h2.7M191.8 548.2h5.1M201.3 548.2h7.5M210.9 548.2h7.1M82.2 550.6h2.7M87.0 550.6h2.7M94.1 550.6h9.9M106.0 550.6h5.1M113.2 550.6h7.5M127.5 550.6h5.1M134.6 550.6h2.7M141.8 550.6h7.5M153.7 550.6h5.1M160.8 550.6h7.5M172.7 550.6h7.5M191.8 550.6h12.3M70.3 552.9h2.7M82.2 552.9h2.7M87.0 552.9h5.1M94.1 552.9h17.0M113.2 552.9h7.5M122.7 552.9h7.5M132.2 552.9h7.5M146.5 552.9h2.7M151.3 552.9h14.6M170.4 552.9h2.7M175.1 552.9h2.7M184.6 552.9h2.7M189.4 552.9h7.5M198.9 552.9h7.5M213.2 552.9h2.7M75.1 555.3h5.1M87.0 555.3h14.6M108.4 555.3h2.7M113.2 555.3h2.7M120.3 555.3h2.7M125.1 555.3h2.7M134.6 555.3h5.1M141.8 555.3h2.7M146.5 555.3h2.7M158.4 555.3h7.5M170.4 555.3h9.9M182.3 555.3h2.7M187.0 555.3h9.9M215.6 555.3h2.4M79.8 557.7h2.7M84.6 557.7h12.3M101.3 557.7h2.7M106.0 557.7h5.1M113.2 557.7h2.7M117.9 557.7h2.7M122.7 557.7h5.1M129.9 557.7h7.5M141.8 557.7h17.0M165.6 557.7h5.1M172.7 557.7h2.7M177.5 557.7h2.7M187.0 557.7h2.7M191.8 557.7h2.7M196.6 557.7h2.7M208.5 557.7h5.1M79.8 560.0h2.7M89.4 560.0h2.7M96.5 560.0h2.7M103.7 560.0h5.1M113.2 560.0h5.1M127.5 560.0h9.9M144.1 560.0h2.7M153.7 560.0h2.7M158.4 560.0h7.5M168.0 560.0h9.9M182.3 560.0h7.5M194.2 560.0h9.9M206.1 560.0h2.7M210.9 560.0h5.1M72.7 562.4h5.1M79.8 562.4h2.7M89.4 562.4h7.5M98.9 562.4h2.7M103.7 562.4h7.5M113.2 562.4h2.7M120.3 562.4h2.7M125.1 562.4h5.1M132.2 562.4h5.1M139.4 562.4h9.9M151.3 562.4h2.7M160.8 562.4h2.7M172.7 562.4h5.1M179.9 562.4h12.3M196.6 562.4h2.7M201.3 562.4h2.7M206.1 562.4h7.5M215.6 562.4h2.4M70.3 564.8h7.5M82.2 564.8h2.7M87.0 564.8h2.7M91.7 564.8h9.9M106.0 564.8h2.7M115.6 564.8h2.7M122.7 564.8h2.7M137.0 564.8h5.1M151.3 564.8h9.9M168.0 564.8h2.7M172.7 564.8h2.7M177.5 564.8h2.7M182.3 564.8h7.5M194.2 564.8h14.6M213.2 564.8h2.7M70.3 567.1h2.7M75.1 567.1h7.5M84.6 567.1h5.1M94.1 567.1h5.1M101.3 567.1h7.5M110.8 567.1h5.1M148.9 567.1h2.7M156.1 567.1h2.7M163.2 567.1h2.7M168.0 567.1h2.7M172.7 567.1h7.5M182.3 567.1h2.7M191.8 567.1h5.1M203.7 567.1h5.1M210.9 567.1h7.1M70.3 569.5h17.0M96.5 569.5h2.7M101.3 569.5h2.7M106.0 569.5h5.1M153.7 569.5h5.1M163.2 569.5h2.7M175.1 569.5h5.1M182.3 569.5h5.1M189.4 569.5h7.5M208.5 569.5h7.5M75.1 571.9h5.1M84.6 571.9h2.7M89.4 571.9h2.7M94.1 571.9h5.1M106.0 571.9h7.5M156.1 571.9h5.1M163.2 571.9h5.1M170.4 571.9h7.5M187.0 571.9h5.1M194.2 571.9h2.7M198.9 571.9h2.7M206.1 571.9h2.7M213.2 571.9h2.7M72.7 574.2h2.7M79.8 574.2h2.7M84.6 574.2h2.7M89.4 574.2h9.9M101.3 574.2h2.7M113.2 574.2h2.7M158.4 574.2h2.7M163.2 574.2h2.7M170.4 574.2h5.1M194.2 574.2h5.1M201.3 574.2h2.7M206.1 574.2h2.7M213.2 574.2h2.7M75.1 576.6h7.5M94.1 576.6h7.5M103.7 576.6h2.7M108.4 576.6h2.7M156.1 576.6h2.7M160.8 576.6h2.7M165.6 576.6h5.1M172.7 576.6h2.7M182.3 576.6h2.7M187.0 576.6h9.9M198.9 576.6h2.7M206.1 576.6h5.1M215.6 576.6h2.4M70.3 579.0h5.1M77.4 579.0h2.7M82.2 579.0h9.9M94.1 579.0h9.9M106.0 579.0h7.5M168.0 579.0h2.7M172.7 579.0h9.9M191.8 579.0h5.1M198.9 579.0h2.7M206.1 579.0h11.9M77.4 581.3h5.1M84.6 581.3h2.7M91.7 581.3h9.9M103.7 581.3h2.7M108.4 581.3h5.1M163.2 581.3h5.1M179.9 581.3h2.7M187.0 581.3h2.7M191.8 581.3h2.7M196.6 581.3h5.1M210.9 581.3h5.1M77.4 583.7h2.7M84.6 583.7h5.1M91.7 583.7h2.7M101.3 583.7h5.1M158.4 583.7h2.7M163.2 583.7h5.1M172.7 583.7h7.5M191.8 583.7h9.9M206.1 583.7h9.9M77.4 586.1h5.1M84.6 586.1h19.4M108.4 586.1h2.7M158.4 586.1h14.6M177.5 586.1h2.7M196.6 586.1h9.9M208.5 586.1h9.5M77.4 588.4h5.1M96.5 588.4h5.1M106.0 588.4h5.1M158.4 588.4h9.9M170.4 588.4h5.1M177.5 588.4h2.7M191.8 588.4h5.1M198.9 588.4h2.7M203.7 588.4h2.7M215.6 588.4h2.4M72.7 590.8h2.7M77.4 590.8h2.7M82.2 590.8h2.7M87.0 590.8h9.9M98.9 590.8h5.1M106.0 590.8h5.1M160.8 590.8h19.4M191.8 590.8h2.7M196.6 590.8h7.5M213.2 590.8h2.7M75.1 593.2h2.7M79.8 593.2h5.1M89.4 593.2h2.7M94.1 593.2h7.5M103.7 593.2h2.7M108.4 593.2h2.7M156.1 593.2h17.0M175.1 593.2h7.5M201.3 593.2h16.7M72.7 595.5h5.1M82.2 595.5h2.7M87.0 595.5h2.7M91.7 595.5h2.7M106.0 595.5h2.7M153.7 595.5h5.1M163.2 595.5h2.7M170.4 595.5h5.1M177.5 595.5h2.7M194.2 595.5h2.7M203.7 595.5h2.7M208.5 595.5h2.7M213.2 595.5h4.8M79.8 597.9h5.1M87.0 597.9h2.7M91.7 597.9h5.1M101.3 597.9h2.7M153.7 597.9h2.7M158.4 597.9h2.7M163.2 597.9h9.9M177.5 597.9h2.7M184.6 597.9h2.7M191.8 597.9h7.5M203.7 597.9h2.7M208.5 597.9h9.5M70.3 600.3h5.1M77.4 600.3h2.7M82.2 600.3h2.7M87.0 600.3h7.5M101.3 600.3h2.7M153.7 600.3h14.6M172.7 600.3h2.7M177.5 600.3h2.7M184.6 600.3h2.7M201.3 600.3h2.7M206.1 600.3h2.7M210.9 600.3h2.7M215.6 600.3h2.4M82.2 602.6h2.7M87.0 602.6h9.9M98.9 602.6h9.9M153.7 602.6h5.1M160.8 602.6h5.1M170.4 602.6h5.1M179.9 602.6h5.1M187.0 602.6h7.5M198.9 602.6h2.7M210.9 602.6h7.1M70.3 605.0h5.1M77.4 605.0h5.1M89.4 605.0h12.3M103.7 605.0h5.1M151.3 605.0h7.5M160.8 605.0h7.5M170.4 605.0h5.1M177.5 605.0h7.5M187.0 605.0h2.7M196.6 605.0h9.9M208.5 605.0h5.1M72.7 607.4h5.1M79.8 607.4h2.7M84.6 607.4h2.7M89.4 607.4h2.7M94.1 607.4h2.7M98.9 607.4h9.9M156.1 607.4h9.9M170.4 607.4h5.1M179.9 607.4h2.7M189.4 607.4h2.7M196.6 607.4h5.1M206.1 607.4h5.1M77.4 609.8h7.5M87.0 609.8h2.7M91.7 609.8h2.7M98.9 609.8h12.3M148.9 609.8h2.7M156.1 609.8h7.5M165.6 609.8h2.7M170.4 609.8h5.1M179.9 609.8h12.3M194.2 609.8h2.7M203.7 609.8h2.7M72.7 612.1h5.1M91.7 612.1h5.1M98.9 612.1h5.1M106.0 612.1h5.1M148.9 612.1h2.7M158.4 612.1h2.7M163.2 612.1h5.1M187.0 612.1h7.5M198.9 612.1h5.1M206.1 612.1h7.5M77.4 614.5h5.1M89.4 614.5h5.1M103.7 614.5h5.1M110.8 614.5h2.7M115.6 614.5h2.7M141.8 614.5h7.5M160.8 614.5h5.1M170.4 614.5h5.1M187.0 614.5h2.7M196.6 614.5h2.7M206.1 614.5h11.9M70.3 616.9h2.7M84.6 616.9h2.7M91.7 616.9h14.6M108.4 616.9h9.9M120.3 616.9h5.1M127.5 616.9h7.5M137.0 616.9h19.4M158.4 616.9h5.1M168.0 616.9h5.1M177.5 616.9h2.7M184.6 616.9h2.7M196.6 616.9h5.1M206.1 616.9h2.7M213.2 616.9h2.7M70.3 619.2h2.7M75.1 619.2h9.9M94.1 619.2h2.7M103.7 619.2h5.1M113.2 619.2h7.5M125.1 619.2h5.1M132.2 619.2h2.7M137.0 619.2h5.1M146.5 619.2h7.5M156.1 619.2h5.1M165.6 619.2h2.7M170.4 619.2h5.1M177.5 619.2h2.7M182.3 619.2h2.7M189.4 619.2h2.7M194.2 619.2h5.1M208.5 619.2h2.7M215.6 619.2h2.4M70.3 621.6h5.1M79.8 621.6h17.0M98.9 621.6h2.7M106.0 621.6h5.1M113.2 621.6h2.7M117.9 621.6h2.7M122.7 621.6h2.7M129.9 621.6h5.1M137.0 621.6h5.1M148.9 621.6h9.9M160.8 621.6h7.5M170.4 621.6h2.7M177.5 621.6h2.7M184.6 621.6h12.3M201.3 621.6h7.5M210.9 621.6h2.7M70.3 624.0h2.7M77.4 624.0h2.7M82.2 624.0h2.7M89.4 624.0h2.7M96.5 624.0h2.7M101.3 624.0h2.7M106.0 624.0h2.7M110.8 624.0h5.1M120.3 624.0h12.3M141.8 624.0h7.5M151.3 624.0h5.1M163.2 624.0h2.7M177.5 624.0h2.7M182.3 624.0h5.1M189.4 624.0h5.1M196.6 624.0h9.9M208.5 624.0h7.5M72.7 626.3h2.7M77.4 626.3h2.7M82.2 626.3h14.6M98.9 626.3h9.9M115.6 626.3h7.5M127.5 626.3h5.1M134.6 626.3h2.7M144.1 626.3h2.7M151.3 626.3h2.7M165.6 626.3h9.9M187.0 626.3h2.7M191.8 626.3h12.3M70.3 628.7h9.9M82.2 628.7h2.7M87.0 628.7h7.5M96.5 628.7h5.1M106.0 628.7h2.7M115.6 628.7h2.7M120.3 628.7h7.5M129.9 628.7h2.7M134.6 628.7h2.7M139.4 628.7h5.1M151.3 628.7h5.1M160.8 628.7h2.7M165.6 628.7h2.7M177.5 628.7h2.7M187.0 628.7h2.7M191.8 628.7h5.1M208.5 628.7h9.5M75.1 631.1h5.1M82.2 631.1h5.1M89.4 631.1h2.7M103.7 631.1h5.1M117.9 631.1h5.1M127.5 631.1h5.1M134.6 631.1h2.7M139.4 631.1h7.5M148.9 631.1h2.7M153.7 631.1h17.0M179.9 631.1h2.7M191.8 631.1h5.1M198.9 631.1h7.5M210.9 631.1h7.1M72.7 633.4h2.7M77.4 633.4h2.7M84.6 633.4h9.9M98.9 633.4h5.1M106.0 633.4h5.1M113.2 633.4h5.1M125.1 633.4h7.5M137.0 633.4h5.1M151.3 633.4h2.7M158.4 633.4h5.1M168.0 633.4h5.1M175.1 633.4h7.5M184.6 633.4h5.1M196.6 633.4h2.7M203.7 633.4h5.1M210.9 633.4h7.1M70.3 635.8h2.7M75.1 635.8h12.3M91.7 635.8h5.1M98.9 635.8h2.7M103.7 635.8h7.5M117.9 635.8h2.7M122.7 635.8h2.7M134.6 635.8h2.7M139.4 635.8h2.7M146.5 635.8h2.7M153.7 635.8h5.1M160.8 635.8h2.7M170.4 635.8h2.7M177.5 635.8h2.7M184.6 635.8h9.9M196.6 635.8h2.7M201.3 635.8h2.7M206.1 635.8h2.7M215.6 635.8h2.4M70.3 638.2h5.1M77.4 638.2h2.7M82.2 638.2h7.5M96.5 638.2h9.9M108.4 638.2h2.7M117.9 638.2h5.1M127.5 638.2h5.1M146.5 638.2h5.1M160.8 638.2h2.7M165.6 638.2h5.1M175.1 638.2h7.5M184.6 638.2h5.1M191.8 638.2h7.5M208.5 638.2h5.1M70.3 640.5h5.1M84.6 640.5h5.1M91.7 640.5h7.5M108.4 640.5h2.7M113.2 640.5h5.1M125.1 640.5h26.6M153.7 640.5h2.7M158.4 640.5h5.1M165.6 640.5h5.1M172.7 640.5h5.1M182.3 640.5h7.5M191.8 640.5h7.5M201.3 640.5h7.5M210.9 640.5h2.7M72.7 642.9h2.7M101.3 642.9h7.5M110.8 642.9h9.9M122.7 642.9h9.9M134.6 642.9h5.1M148.9 642.9h5.1M156.1 642.9h5.1M163.2 642.9h2.7M172.7 642.9h9.9M189.4 642.9h5.1M196.6 642.9h2.7M203.7 642.9h9.9M215.6 642.9h2.4M70.3 645.3h2.7M79.8 645.3h5.1M89.4 645.3h2.7M94.1 645.3h2.7M98.9 645.3h2.7M108.4 645.3h5.1M122.7 645.3h2.7M137.0 645.3h5.1M158.4 645.3h5.1M165.6 645.3h2.7M182.3 645.3h7.5M194.2 645.3h2.7M198.9 645.3h2.7M213.2 645.3h4.8M70.3 647.6h7.5M89.4 647.6h2.7M101.3 647.6h7.5M113.2 647.6h2.7M120.3 647.6h2.7M129.9 647.6h2.7M137.0 647.6h12.3M153.7 647.6h2.7M158.4 647.6h5.1M168.0 647.6h14.6M184.6 647.6h2.7M191.8 647.6h5.1M203.7 647.6h5.1M213.2 647.6h2.7M70.3 650.0h7.5M79.8 650.0h5.1M87.0 650.0h2.7M91.7 650.0h2.7M96.5 650.0h2.7M101.3 650.0h5.1M110.8 650.0h2.7M117.9 650.0h2.7M125.1 650.0h9.9M137.0 650.0h5.1M144.1 650.0h9.9M156.1 650.0h2.7M168.0 650.0h9.9M179.9 650.0h2.7M194.2 650.0h5.1M203.7 650.0h7.5M215.6 650.0h2.4M70.3 652.4h2.7M77.4 652.4h9.9M91.7 652.4h2.7M96.5 652.4h2.7M106.0 652.4h5.1M113.2 652.4h2.7M120.3 652.4h2.7M125.1 652.4h2.7M132.2 652.4h2.7M137.0 652.4h12.3M151.3 652.4h5.1M163.2 652.4h2.7M168.0 652.4h12.3M187.0 652.4h5.1M194.2 652.4h5.1M201.3 652.4h2.7M208.5 652.4h7.5M72.7 654.7h2.7M77.4 654.7h5.1M84.6 654.7h2.7M89.4 654.7h2.7M94.1 654.7h2.7M98.9 654.7h2.7M110.8 654.7h2.7M120.3 654.7h9.9M134.6 654.7h7.5M144.1 654.7h14.6M160.8 654.7h2.7M165.6 654.7h2.7M170.4 654.7h2.7M175.1 654.7h2.7M179.9 654.7h9.9M191.8 654.7h2.7M196.6 654.7h7.5M208.5 654.7h7.5M70.3 657.1h2.7M77.4 657.1h19.4M110.8 657.1h2.7M115.6 657.1h2.7M125.1 657.1h2.7M129.9 657.1h7.5M148.9 657.1h2.7M153.7 657.1h5.1M170.4 657.1h2.7M177.5 657.1h5.1M189.4 657.1h7.5M198.9 657.1h5.1M206.1 657.1h2.7M210.9 657.1h7.1M72.7 659.5h7.5M96.5 659.5h14.6M113.2 659.5h5.1M120.3 659.5h2.7M129.9 659.5h2.7M134.6 659.5h5.1M146.5 659.5h2.7M153.7 659.5h5.1M163.2 659.5h7.5M172.7 659.5h2.7M177.5 659.5h2.7M182.3 659.5h5.1M191.8 659.5h12.3M206.1 659.5h7.5M215.6 659.5h2.4M75.1 661.8h2.7M79.8 661.8h2.7M87.0 661.8h12.3M101.3 661.8h2.7M108.4 661.8h7.5M117.9 661.8h2.7M122.7 661.8h2.7M129.9 661.8h2.7M134.6 661.8h2.7M139.4 661.8h7.5M151.3 661.8h5.1M160.8 661.8h5.1M168.0 661.8h2.7M172.7 661.8h2.7M177.5 661.8h2.7M187.0 661.8h5.1M201.3 661.8h2.7M206.1 661.8h2.7M210.9 661.8h2.7M75.1 664.2h9.9M91.7 664.2h5.1M108.4 664.2h14.6M125.1 664.2h2.7M129.9 664.2h7.5M139.4 664.2h2.7M146.5 664.2h9.9M160.8 664.2h7.5M172.7 664.2h2.7M177.5 664.2h2.7M184.6 664.2h2.7M189.4 664.2h2.7M196.6 664.2h17.0M87.0 666.6h7.5M96.5 666.6h2.7M103.7 666.6h5.1M113.2 666.6h2.7M120.3 666.6h7.5M129.9 666.6h2.7M137.0 666.6h5.1M146.5 666.6h5.1M153.7 666.6h2.7M158.4 666.6h7.5M175.1 666.6h24.2M201.3 666.6h2.7M206.1 666.6h2.7M210.9 666.6h2.7M215.6 666.6h2.4M70.3 668.9h5.1M84.6 668.9h5.1M91.7 668.9h2.7M98.9 668.9h5.1M108.4 668.9h5.1M120.3 668.9h5.1M134.6 668.9h2.7M144.1 668.9h12.3M158.4 668.9h2.7M165.6 668.9h5.1M179.9 668.9h5.1M187.0 668.9h2.7M191.8 668.9h5.1M198.9 668.9h2.7M203.7 668.9h2.7M70.3 671.3h2.7M75.1 671.3h2.7M89.4 671.3h2.7M94.1 671.3h9.9M106.0 671.3h5.1M120.3 671.3h5.1M132.2 671.3h5.1M144.1 671.3h2.7M153.7 671.3h7.5M163.2 671.3h2.7M168.0 671.3h2.7M172.7 671.3h5.1M179.9 671.3h5.1M187.0 671.3h2.7M196.6 671.3h2.7M206.1 671.3h2.7M70.3 673.7h5.1M82.2 673.7h2.7M89.4 673.7h2.7M98.9 673.7h5.1M110.8 673.7h2.7M115.6 673.7h5.1M122.7 673.7h5.1M134.6 673.7h2.7M139.4 673.7h2.7M144.1 673.7h5.1M156.1 673.7h7.5M165.6 673.7h5.1M172.7 673.7h14.6M189.4 673.7h5.1M198.9 673.7h5.1M70.3 676.0h2.7M75.1 676.0h2.7M79.8 676.0h7.5M89.4 676.0h2.7M94.1 676.0h2.7M106.0 676.0h2.7M115.6 676.0h2.7M120.3 676.0h7.5M132.2 676.0h9.9M144.1 676.0h2.7M151.3 676.0h2.7M163.2 676.0h5.1M172.7 676.0h2.7M177.5 676.0h5.1M184.6 676.0h2.7M189.4 676.0h14.6M79.8 678.4h2.7M84.6 678.4h5.1M91.7 678.4h2.7M96.5 678.4h12.3M115.6 678.4h5.1M125.1 678.4h2.7M129.9 678.4h2.7M134.6 678.4h2.7M139.4 678.4h5.1M148.9 678.4h7.5M158.4 678.4h2.7M163.2 678.4h2.7M168.0 678.4h5.1M175.1 678.4h5.1M182.3 678.4h2.7M189.4 678.4h5.1M198.9 678.4h5.1" stroke="#d8d8d8" stroke-width="2.72" shape-rendering="crispEdges"/>
<path d="M70.3 534.0h2.7M108.4 534.0h2.7M113.2 534.0h2.7M120.3 534.0h5.1M129.9 534.0h2.7M139.4 534.0h2.7M146.5 534.0h2.7M158.4 534.0h2.7M168.0 534.0h2.7M179.9 534.0h5.1M187.0 534.0h2.7M194.2 534.0h5.1M208.5 534.0h5.1M82.2 536.4h2.7M94.1 536.4h2.7M98.9 536.4h2.7M103.7 536.4h2.7M113.2 536.4h12.3M132.2 536.4h2.7M144.1 536.4h2.7M168.0 536.4h2.7M177.5 536.4h2.7M184.6 536.4h5.1M196.6 536.4h2.7M201.3 536.4h5.1M215.6 536.4h2.4M70.3 538.7h2.7M79.8 538.7h2.7M84.6 538.7h2.7M94.1 538.7h5.1M103.7 538.7h2.7M110.8 538.7h2.7M125.1 538.7h5.1M132.2 538.7h2.7M163.2 538.7h7.5M172.7 538.7h2.7M179.9 538.7h7.5M189.4 538.7h2.7M196.6 538.7h2.7M203.7 538.7h2.7M215.6 538.7h2.4M96.5 541.1h2.7M101.3 541.1h5.1M115.6 541.1h2.7M120.3 541.1h2.7M125.1 541.1h2.7M132.2 541.1h2.7M160.8 541.1h2.7M172.7 541.1h2.7M189.4 541.1h5.1M203.7 541.1h2.7M79.8 543.5h2.7M94.1 543.5h2.7M106.0 543.5h12.3M120.3 543.5h5.1M127.5 543.5h5.1M137.0 543.5h5.1M160.8 543.5h5.1M175.1 543.5h2.7M179.9 543.5h2.7M184.6 543.5h2.7M201.3 543.5h2.7M210.9 543.5h2.7M215.6 543.5h2.4M110.8 545.8h2.7M117.9 545.8h2.7M122.7 545.8h5.1M129.9 545.8h2.7M137.0 545.8h2.7M141.8 545.8h2.7M165.6 545.8h2.7M170.4 545.8h5.1M182.3 545.8h2.7M191.8 545.8h2.7M203.7 545.8h2.7M213.2 545.8h2.7M94.1 548.2h2.7M98.9 548.2h9.9M115.6 548.2h2.7M120.3 548.2h2.7M129.9 548.2h2.7M141.8 548.2h2.7M148.9 548.2h5.1M158.4 548.2h7.5M168.0 548.2h2.7M177.5 548.2h5.1M184.6 548.2h7.5M196.6 548.2h5.1M208.5 548.2h2.7M103.7 550.6h2.7M110.8 550.6h2.7M120.3 550.6h7.5M132.2 550.6h2.7M137.0 550.6h5.1M148.9 550.6h2.7M168.0 550.6h2.7M179.9 550.6h5.1M189.4 550.6h2.7M203.7 550.6h14.3M91.7 552.9h2.7M110.8 552.9h2.7M120.3 552.9h2.7M129.9 552.9h2.7M139.4 552.9h7.5M148.9 552.9h2.7M165.6 552.9h5.1M172.7 552.9h2.7M177.5 552.9h2.7M182.3 552.9h2.7M187.0 552.9h2.7M196.6 552.9h2.7M208.5 552.9h5.1M215.6 552.9h2.4M101.3 555.3h7.5M110.8 555.3h2.7M115.6 555.3h2.7M127.5 555.3h7.5M139.4 555.3h2.7M144.1 555.3h2.7M148.9 555.3h9.9M165.6 555.3h5.1M179.9 555.3h2.7M184.6 555.3h2.7M196.6 555.3h2.7M201.3 555.3h9.9M213.2 555.3h2.7M96.5 557.7h5.1M103.7 557.7h2.7M110.8 557.7h2.7M115.6 557.7h2.7M120.3 557.7h2.7M127.5 557.7h2.7M137.0 557.7h2.7M158.4 557.7h7.5M179.9 557.7h7.5M189.4 557.7h2.7M194.2 557.7h2.7M198.9 557.7h2.7M203.7 557.7h2.7M213.2 557.7h4.8M91.7 560.0h5.1M101.3 560.0h2.7M108.4 560.0h2.7M117.9 560.0h7.5M139.4 560.0h5.1M148.9 560.0h2.7M165.6 560.0h2.7M177.5 560.0h2.7M189.4 560.0h5.1M203.7 560.0h2.7M208.5 560.0h2.7M215.6 560.0h2.4M96.5 562.4h2.7M101.3 562.4h2.7M115.6 562.4h5.1M122.7 562.4h2.7M137.0 562.4h2.7M153.7 562.4h7.5M165.6 562.4h5.1M177.5 562.4h2.7M203.7 562.4h2.7M213.2 562.4h2.7M77.4 564.8h2.7M101.3 564.8h5.1M108.4 564.8h5.1M120.3 564.8h2.7M160.8 564.8h7.5M170.4 564.8h2.7M175.1 564.8h2.7M179.9 564.8h2.7M189.4 564.8h2.7M208.5 564.8h5.1M72.7 567.1h2.7M89.4 567.1h2.7M98.9 567.1h2.7M108.4 567.1h2.7M153.7 567.1h2.7M160.8 567.1h2.7M165.6 567.1h2.7M170.4 567.1h2.7M179.9 567.1h2.7M184.6 567.1h2.7M189.4 567.1h2.7M196.6 567.1h2.7M208.5 567.1h2.7M87.0 569.5h5.1M98.9 569.5h2.7M103.7 569.5h2.7M110.8 569.5h5.1M158.4 569.5h5.1M165.6 569.5h9.9M179.9 569.5h2.7M196.6 569.5h9.9M215.6 569.5h2.4M79.8 571.9h5.1M91.7 571.9h2.7M101.3 571.9h5.1M168.0 571.9h2.7M177.5 571.9h9.9M191.8 571.9h2.7M196.6 571.9h2.7M208.5 571.9h5.1M70.3 574.2h2.7M77.4 574.2h2.7M82.2 574.2h2.7M87.0 574.2h2.7M98.9 574.2h2.7M106.0 574.2h7.5M160.8 574.2h2.7M165.6 574.2h5.1M175.1 574.2h5.1M184.6 574.2h5.1M198.9 574.2h2.7M203.7 574.2h2.7M208.5 574.2h2.7M215.6 574.2h2.4M70.3 576.6h5.1M82.2 576.6h12.3M101.3 576.6h2.7M163.2 576.6h2.7M175.1 576.6h7.5M184.6 576.6h2.7M196.6 576.6h2.7M201.3 576.6h2.7M210.9 576.6h5.1M75.1 579.0h2.7M79.8 579.0h2.7M91.7 579.0h2.7M160.8 579.0h7.5M170.4 579.0h2.7M182.3 579.0h2.7M187.0 579.0h2.7M196.6 579.0h2.7M203.7 579.0h2.7M70.3 581.3h2.7M82.2 581.3h2.7M89.4 581.3h2.7M101.3 581.3h2.7M106.0 581.3h2.7M160.8 581.3h2.7M168.0 581.3h9.9M194.2 581.3h2.7M201.3 581.3h7.5M70.3 583.7h7.5M79.8 583.7h5.1M89.4 583.7h2.7M94.1 583.7h7.5M106.0 583.7h5.1M160.8 583.7h2.7M168.0 583.7h2.7M203.7 583.7h2.7M215.6 583.7h2.4M70.3 586.1h2.7M75.1 586.1h2.7M82.2 586.1h2.7M103.7 586.1h5.1M110.8 586.1h2.7M194.2 586.1h2.7M206.1 586.1h2.7M70.3 588.4h7.5M82.2 588.4h5.1M89.4 588.4h7.5M101.3 588.4h2.7M168.0 588.4h2.7M201.3 588.4h2.7M206.1 588.4h9.9M70.3 590.8h2.7M75.1 590.8h2.7M84.6 590.8h2.7M96.5 590.8h2.7M103.7 590.8h2.7M158.4 590.8h2.7M194.2 590.8h2.7M206.1 590.8h2.7M210.9 590.8h2.7M215.6 590.8h2.4M72.7 593.2h2.7M77.4 593.2h2.7M84.6 593.2h5.1M91.7 593.2h2.7M101.3 593.2h2.7M106.0 593.2h2.7M194.2 593.2h5.1M77.4 595.5h2.7M84.6 595.5h2.7M89.4 595.5h2.7M94.1 595.5h5.1M101.3 595.5h5.1M160.8 595.5h2.7M165.6 595.5h5.1M191.8 595.5h2.7M196.6 595.5h7.5M210.9 595.5h2.7M75.1 597.9h5.1M84.6 597.9h2.7M89.4 597.9h2.7M98.9 597.9h2.7M103.7 597.9h2.7M175.1 597.9h2.7M198.9 597.9h5.1M206.1 597.9h2.7M79.8 600.3h2.7M84.6 600.3h2.7M94.1 600.3h5.1M103.7 600.3h5.1M168.0 600.3h5.1M175.1 600.3h2.7M191.8 600.3h7.5M203.7 600.3h2.7M72.7 602.6h2.7M79.8 602.6h2.7M84.6 602.6h2.7M168.0 602.6h2.7M175.1 602.6h5.1M194.2 602.6h2.7M201.3 602.6h7.5M75.1 605.0h2.7M82.2 605.0h7.5M101.3 605.0h2.7M158.4 605.0h2.7M168.0 605.0h2.7M175.1 605.0h2.7M184.6 605.0h2.7M189.4 605.0h7.5M213.2 605.0h2.7M70.3 607.4h2.7M77.4 607.4h2.7M82.2 607.4h2.7M96.5 607.4h2.7M153.7 607.4h2.7M165.6 607.4h5.1M177.5 607.4h2.7M182.3 607.4h2.7M187.0 607.4h2.7M194.2 607.4h2.7M201.3 607.4h5.1M215.6 607.4h2.4M70.3 609.8h7.5M84.6 609.8h2.7M89.4 609.8h2.7M163.2 609.8h2.7M168.0 609.8h2.7M175.1 609.8h5.1M191.8 609.8h2.7M196.6 609.8h2.7M206.1 609.8h11.9M70.3 612.1h2.7M77.4 612.1h14.6M96.5 612.1h2.7M103.7 612.1h2.7M110.8 612.1h2.7M151.3 612.1h2.7M168.0 612.1h19.4M194.2 612.1h2.7M203.7 612.1h2.7M215.6 612.1h2.4M70.3 614.5h2.7M75.1 614.5h2.7M84.6 614.5h5.1M94.1 614.5h9.9M108.4 614.5h2.7M153.7 614.5h7.5M168.0 614.5h2.7M177.5 614.5h7.5M189.4 614.5h7.5M198.9 614.5h7.5M72.7 616.9h12.3M87.0 616.9h5.1M106.0 616.9h2.7M117.9 616.9h2.7M156.1 616.9h2.7M163.2 616.9h5.1M179.9 616.9h2.7M189.4 616.9h7.5M201.3 616.9h5.1M208.5 616.9h2.7M72.7 619.2h2.7M84.6 619.2h9.9M96.5 619.2h7.5M108.4 619.2h5.1M120.3 619.2h5.1M129.9 619.2h2.7M134.6 619.2h2.7M153.7 619.2h2.7M163.2 619.2h2.7M168.0 619.2h2.7M175.1 619.2h2.7M179.9 619.2h2.7M191.8 619.2h2.7M201.3 619.2h2.7M206.1 619.2h2.7M210.9 619.2h5.1M77.4 621.6h2.7M96.5 621.6h2.7M103.7 621.6h2.7M120.3 621.6h2.7M125.1 621.6h5.1M134.6 621.6h2.7M141.8 621.6h5.1M158.4 621.6h2.7M172.7 621.6h2.7M179.9 621.6h5.1M198.9 621.6h2.7M213.2 621.6h2.7M72.7 624.0h5.1M79.8 624.0h2.7M84.6 624.0h5.1M91.7 624.0h5.1M103.7 624.0h2.7M115.6 624.0h5.1M134.6 624.0h5.1M156.1 624.0h7.5M168.0 624.0h9.9M179.9 624.0h2.7M187.0 624.0h2.7M215.6 624.0h2.4M75.1 626.3h2.7M79.8 626.3h2.7M96.5 626.3h2.7M125.1 626.3h2.7M132.2 626.3h2.7M137.0 626.3h7.5M146.5 626.3h2.7M153.7 626.3h5.1M160.8 626.3h5.1M175.1 626.3h9.9M203.7 626.3h9.9M215.6 626.3h2.4M79.8 628.7h2.7M94.1 628.7h2.7M108.4 628.7h5.1M117.9 628.7h2.7M132.2 628.7h2.7M137.0 628.7h2.7M146.5 628.7h5.1M158.4 628.7h2.7M163.2 628.7h2.7M172.7 628.7h2.7M179.9 628.7h2.7M184.6 628.7h2.7M189.4 628.7h2.7M196.6 628.7h9.9M70.3 631.1h5.1M79.8 631.1h2.7M87.0 631.1h2.7M91.7 631.1h5.1M98.9 631.1h2.7M108.4 631.1h9.9M125.1 631.1h2.7M137.0 631.1h2.7M146.5 631.1h2.7M172.7 631.1h5.1M182.3 631.1h7.5M196.6 631.1h2.7M206.1 631.1h2.7M70.3 633.4h2.7M75.1 633.4h2.7M79.8 633.4h5.1M94.1 633.4h5.1M103.7 633.4h2.7M110.8 633.4h2.7M117.9 633.4h5.1M132.2 633.4h5.1M141.8 633.4h5.1M153.7 633.4h2.7M163.2 633.4h5.1M172.7 633.4h2.7M182.3 633.4h2.7M189.4 633.4h7.5M198.9 633.4h2.7M208.5 633.4h2.7M72.7 635.8h2.7M87.0 635.8h5.1M101.3 635.8h2.7M113.2 635.8h5.1M120.3 635.8h2.7M127.5 635.8h7.5M137.0 635.8h2.7M141.8 635.8h5.1M163.2 635.8h2.7M168.0 635.8h2.7M172.7 635.8h2.7M182.3 635.8h2.7M198.9 635.8h2.7M203.7 635.8h2.7M208.5 635.8h7.5M75.1 638.2h2.7M79.8 638.2h2.7M89.4 638.2h2.7M94.1 638.2h2.7M110.8 638.2h7.5M122.7 638.2h5.1M134.6 638.2h2.7M139.4 638.2h5.1M151.3 638.2h9.9M170.4 638.2h2.7M182.3 638.2h2.7M189.4 638.2h2.7M201.3 638.2h7.5M215.6 638.2h2.4M75.1 640.5h2.7M79.8 640.5h2.7M89.4 640.5h2.7M101.3 640.5h5.1M122.7 640.5h2.7M151.3 640.5h2.7M163.2 640.5h2.7M170.4 640.5h2.7M177.5 640.5h5.1M198.9 640.5h2.7M213.2 640.5h4.8M70.3 642.9h2.7M77.4 642.9h12.3M91.7 642.9h9.9M108.4 642.9h2.7M120.3 642.9h2.7M132.2 642.9h2.7M139.4 642.9h2.7M144.1 642.9h5.1M165.6 642.9h7.5M182.3 642.9h7.5M194.2 642.9h2.7M201.3 642.9h2.7M213.2 642.9h2.7M72.7 645.3h7.5M84.6 645.3h5.1M91.7 645.3h2.7M101.3 645.3h7.5M113.2 645.3h5.1M120.3 645.3h2.7M125.1 645.3h12.3M141.8 645.3h5.1M151.3 645.3h2.7M156.1 645.3h2.7M168.0 645.3h5.1M175.1 645.3h7.5M189.4 645.3h5.1M196.6 645.3h2.7M201.3 645.3h5.1M208.5 645.3h5.1M77.4 647.6h12.3M91.7 647.6h2.7M96.5 647.6h5.1M108.4 647.6h2.7M115.6 647.6h5.1M125.1 647.6h2.7M132.2 647.6h5.1M148.9 647.6h2.7M156.1 647.6h2.7M165.6 647.6h2.7M182.3 647.6h2.7M198.9 647.6h5.1M208.5 647.6h5.1M215.6 647.6h2.4M84.6 650.0h2.7M89.4 650.0h2.7M94.1 650.0h2.7M98.9 650.0h2.7M106.0 650.0h2.7M113.2 650.0h2.7M120.3 650.0h5.1M134.6 650.0h2.7M141.8 650.0h2.7M153.7 650.0h2.7M158.4 650.0h2.7M163.2 650.0h2.7M182.3 650.0h12.3M198.9 650.0h5.1M210.9 650.0h5.1M72.7 652.4h2.7M87.0 652.4h2.7M94.1 652.4h2.7M101.3 652.4h2.7M110.8 652.4h2.7M117.9 652.4h2.7M122.7 652.4h2.7M127.5 652.4h5.1M134.6 652.4h2.7M148.9 652.4h2.7M156.1 652.4h7.5M165.6 652.4h2.7M179.9 652.4h2.7M184.6 652.4h2.7M191.8 652.4h2.7M198.9 652.4h2.7M203.7 652.4h5.1M215.6 652.4h2.4M70.3 654.7h2.7M82.2 654.7h2.7M87.0 654.7h2.7M91.7 654.7h2.7M96.5 654.7h2.7M101.3 654.7h9.9M113.2 654.7h7.5M129.9 654.7h5.1M158.4 654.7h2.7M163.2 654.7h2.7M168.0 654.7h2.7M172.7 654.7h2.7M189.4 654.7h2.7M194.2 654.7h2.7M203.7 654.7h5.1M72.7 657.1h5.1M96.5 657.1h2.7M101.3 657.1h2.7M106.0 657.1h5.1M113.2 657.1h2.7M117.9 657.1h7.5M127.5 657.1h2.7M139.4 657.1h5.1M146.5 657.1h2.7M158.4 657.1h12.3M172.7 657.1h5.1M182.3 657.1h2.7M187.0 657.1h2.7M196.6 657.1h2.7M208.5 657.1h2.7M70.3 659.5h2.7M79.8 659.5h17.0M117.9 659.5h2.7M122.7 659.5h7.5M148.9 659.5h5.1M170.4 659.5h2.7M175.1 659.5h2.7M179.9 659.5h2.7M187.0 659.5h2.7M213.2 659.5h2.7M70.3 661.8h5.1M82.2 661.8h5.1M98.9 661.8h2.7M103.7 661.8h5.1M120.3 661.8h2.7M125.1 661.8h5.1M132.2 661.8h2.7M146.5 661.8h5.1M158.4 661.8h2.7M170.4 661.8h2.7M182.3 661.8h2.7M191.8 661.8h5.1M213.2 661.8h2.7M70.3 664.2h5.1M84.6 664.2h7.5M96.5 664.2h2.7M103.7 664.2h2.7M122.7 664.2h2.7M127.5 664.2h2.7M137.0 664.2h2.7M141.8 664.2h5.1M156.1 664.2h5.1M168.0 664.2h5.1M175.1 664.2h2.7M179.9 664.2h5.1M194.2 664.2h2.7M215.6 664.2h2.4M70.3 666.6h2.7M75.1 666.6h2.7M79.8 666.6h2.7M84.6 666.6h2.7M94.1 666.6h2.7M98.9 666.6h5.1M108.4 666.6h2.7M115.6 666.6h5.1M127.5 666.6h2.7M132.2 666.6h5.1M141.8 666.6h5.1M151.3 666.6h2.7M156.1 666.6h2.7M165.6 666.6h5.1M172.7 666.6h2.7M75.1 668.9h2.7M79.8 668.9h5.1M89.4 668.9h2.7M94.1 668.9h2.7M103.7 668.9h5.1M115.6 668.9h5.1M125.1 668.9h7.5M139.4 668.9h5.1M160.8 668.9h5.1M175.1 668.9h2.7M184.6 668.9h2.7M189.4 668.9h2.7M196.6 668.9h2.7M72.7 671.3h2.7M77.4 671.3h2.7M82.2 671.3h7.5M91.7 671.3h2.7M103.7 671.3h2.7M110.8 671.3h9.9M125.1 671.3h7.5M139.4 671.3h2.7M146.5 671.3h5.1M160.8 671.3h2.7M170.4 671.3h2.7M184.6 671.3h2.7M189.4 671.3h5.1M198.9 671.3h2.7M77.4 673.7h5.1M84.6 673.7h2.7M103.7 673.7h7.5M120.3 673.7h2.7M127.5 673.7h5.1M137.0 673.7h2.7M141.8 673.7h2.7M148.9 673.7h7.5M163.2 673.7h2.7M170.4 673.7h2.7M187.0 673.7h2.7M194.2 673.7h2.7M87.0 676.0h2.7M91.7 676.0h2.7M96.5 676.0h9.9M110.8 676.0h5.1M117.9 676.0h2.7M146.5 676.0h2.7M158.4 676.0h5.1M168.0 676.0h5.1M175.1 676.0h2.7M182.3 676.0h2.7M187.0 676.0h2.7M70.3 678.4h9.9M82.2 678.4h2.7M89.4 678.4h2.7M110.8 678.4h5.1M120.3 678.4h5.1M127.5 678.4h2.7M132.2 678.4h2.7M137.0 678.4h2.7M144.1 678.4h5.1M156.1 678.4h2.7M160.8 678.4h2.7M165.6 678.4h2.7M172.7 678.4h2.7M179.9 678.4h2.7M184.6 678.4h2.7" stroke="#ebebeb" stroke-width="2.72" shape-rendering="crispEdges"/>
<path d="M91.7 534.0h2.7M132.2 534.0h2.7M182.3 536.4h2.7M113.2 538.7h2.7M201.3 538.7h2.7M206.1 538.7h2.7M215.6 541.1h2.4M115.6 545.8h2.7M175.1 545.8h2.7M172.7 548.2h2.7M151.3 550.6h2.7M117.9 555.3h2.7M210.9 555.3h2.7M201.3 557.7h2.7M206.1 557.7h2.7M156.1 560.0h2.7M113.2 564.8h2.7M187.0 567.1h2.7M94.1 569.5h2.7M187.0 569.5h2.7M72.7 571.9h2.7M210.9 574.2h2.7M203.7 576.6h2.7M75.1 581.3h2.7M87.0 581.3h2.7M215.6 581.3h2.4M79.8 590.8h2.7M70.3 593.2h2.7M98.9 595.5h2.7M206.1 595.5h2.7M75.1 600.3h2.7M70.3 602.6h2.7M165.6 602.6h2.7M175.1 607.4h2.7M96.5 609.8h2.7M198.9 609.8h5.1M113.2 614.5h2.7M151.3 614.5h2.7M165.6 614.5h2.7M184.6 614.5h2.7M187.0 616.9h2.7M215.6 616.9h2.4M184.6 619.2h2.7M110.8 621.6h2.7M196.6 621.6h2.7M98.9 624.0h2.7M139.4 624.0h2.7M206.1 624.0h2.7M122.7 626.3h2.7M189.4 626.3h2.7M101.3 628.7h2.7M113.2 628.7h2.7M96.5 631.1h2.7M148.9 633.4h2.7M201.3 633.4h2.7M144.1 638.2h2.7M198.9 638.2h2.7M98.9 640.5h2.7M106.0 640.5h2.7M117.9 640.5h2.7M156.1 640.5h2.7M89.4 642.9h2.7M141.8 642.9h2.7M153.7 642.9h2.7M153.7 645.3h2.7M94.1 647.6h2.7M122.7 647.6h2.7M163.2 647.6h2.7M160.8 650.0h2.7M165.6 650.0h2.7M89.4 652.4h2.7M103.7 652.4h2.7M141.8 654.7h2.7M184.6 657.1h2.7M77.4 661.8h2.7M137.0 661.8h2.7M156.1 661.8h2.7M106.0 664.2h2.7M82.2 666.6h2.7M132.2 668.9h2.7M177.5 668.9h2.7M94.1 673.7h2.7M113.2 673.7h2.7M187.0 678.4h2.7" stroke="#ffffff" stroke-width="2.72" shape-rendering="crispEdges"/>
<circle cx="131.3" cy="561.4" r="12.2" fill="none" stroke="#5a5a5a" stroke-width="1"/>
<circle cx="156.2" cy="564.8" r="12.2" fill="none" stroke="#5a5a5a" stroke-width="1"/>
<circle cx="180.3" cy="566.4" r="12.2" fill="none" stroke="#5a5a5a" stroke-width="1"/>
<circle cx="93.9" cy="578.7" r="12.2" fill="none" stroke="#5a5a5a" stroke-width="1"/>
<circle cx="118.1" cy="580.3" r="12.2" fill="none" stroke="#5a5a5a" stroke-width="1"/>
<circle cx="166.6" cy="586.0" r="12.2" fill="none" stroke="#5a5a5a" stroke-width="1"/>
<circle cx="189.6" cy="588.9" r="12.2" fill="none" stroke="#5a5a5a" stroke-width="1"/>
<circle cx="104.2" cy="601.0" r="12.2" fill="none" stroke="#5a5a5a" stroke-width="1"/>
<circle cx="176.4" cy="608.5" r="12.2" fill="none" stroke="#5a5a5a" stroke-width="1"/>
<circle cx="200.1" cy="609.6" r="12.2" fill="none" stroke="#5a5a5a" stroke-width="1"/>
<circle cx="89.2" cy="619.9" r="12.2" fill="none" stroke="#5a5a5a" stroke-width="1"/>
<circle cx="113.5" cy="622.2" r="12.2" fill="none" stroke="#5a5a5a" stroke-width="1"/>
<circle cx="162.4" cy="627.6" r="12.2" fill="none" stroke="#5a5a5a" stroke-width="1"/>
<circle cx="186.2" cy="630.3" r="12.2" fill="none" stroke="#5a5a5a" stroke-width="1"/>
<circle cx="100.8" cy="642.2" r="12.2" fill="none" stroke="#5a5a5a" stroke-width="1"/>
<circle cx="124.3" cy="645.2" r="12.2" fill="none" stroke="#5a5a5a" stroke-width="1"/>
<circle cx="148.1" cy="647.4" r="12.2" fill="none" stroke="#5a5a5a" stroke-width="1"/>
<circle cx="172.4" cy="649.2" r="12.2" fill="none" stroke="#5a5a5a" stroke-width="1"/>
<circle cx="142.4" cy="583.7" r="12.2" fill="none" stroke="#ff0000" stroke-width="1.3"/>
<circle cx="128.0" cy="603.3" r="12.2" fill="none" stroke="#00ff00" stroke-width="1.3"/>
<circle cx="152.3" cy="606.7" r="12.2" fill="none" stroke="#0000ff" stroke-width="1.3"/>
<circle cx="138.4" cy="625.8" r="12.2" fill="none" stroke="#ffa500" stroke-width="1.3"/>
<rect x="94.6" y="557.3" width="97.8" height="97.8" fill="none" stroke="#ff0000" stroke-width="1.3"/>
<text x="143.5" y="611.2" class="s" text-anchor="middle" style="font-size:12px;fill:#ff0000;">+</text>
<text x="143.5" y="548.1" class="s" text-anchor="middle" style="font-size:12px;fill:#ff0000;">N</text>
<text x="79.8" y="610.7" class="s" text-anchor="middle" style="font-size:12px;fill:#ff0000;">E</text>
<rect x="70.3" y="532.8" width="147.7" height="146.8" fill="none" stroke="#222" stroke-width="1.1"/>
<line x1="78.3" y1="679.6" x2="78.3" y2="683.1" stroke="#222" stroke-width="0.8"/>
<text x="78.3" y="697.1" class="s" text-anchor="middle" style="font-size:12.2px;">−4</text>
<line x1="66.8" y1="671.4" x2="70.3" y2="671.4" stroke="#222" stroke-width="0.8"/>
<text x="62.8" y="675.7" class="s" text-anchor="end" style="font-size:12.2px;">−4</text>
<line x1="110.9" y1="679.6" x2="110.9" y2="683.1" stroke="#222" stroke-width="0.8"/>
<text x="110.9" y="697.1" class="s" text-anchor="middle" style="font-size:12.2px;">−2</text>
<line x1="66.8" y1="638.8" x2="70.3" y2="638.8" stroke="#222" stroke-width="0.8"/>
<text x="62.8" y="643.1" class="s" text-anchor="end" style="font-size:12.2px;">−2</text>
<line x1="143.5" y1="679.6" x2="143.5" y2="683.1" stroke="#222" stroke-width="0.8"/>
<text x="143.5" y="697.1" class="s" text-anchor="middle" style="font-size:12.2px;">0</text>
<line x1="66.8" y1="606.2" x2="70.3" y2="606.2" stroke="#222" stroke-width="0.8"/>
<text x="62.8" y="610.5" class="s" text-anchor="end" style="font-size:12.2px;">0</text>
<line x1="176.1" y1="679.6" x2="176.1" y2="683.1" stroke="#222" stroke-width="0.8"/>
<text x="176.1" y="697.1" class="s" text-anchor="middle" style="font-size:12.2px;">2</text>
<line x1="66.8" y1="573.6" x2="70.3" y2="573.6" stroke="#222" stroke-width="0.8"/>
<text x="62.8" y="577.9" class="s" text-anchor="end" style="font-size:12.2px;">2</text>
<line x1="208.7" y1="679.6" x2="208.7" y2="683.1" stroke="#222" stroke-width="0.8"/>
<text x="208.7" y="697.1" class="s" text-anchor="middle" style="font-size:12.2px;">4</text>
<line x1="66.8" y1="541.0" x2="70.3" y2="541.0" stroke="#222" stroke-width="0.8"/>
<text x="62.8" y="545.3" class="s" text-anchor="end" style="font-size:12.2px;">4</text>
<text x="143.5" y="526.9" class="s" text-anchor="middle" style="font-size:13.9px;">Fiber Positions</text>
<text x="143.5" y="707.6" class="s" text-anchor="middle" style="font-size:11.8px;">arcsecs</text>
<path d="M255.6 534.8h4.5M309.0 534.8h49.7M255.6 538.9h4.5M313.2 538.9h45.6M255.6 543.0h8.6M317.3 543.0h41.5M255.6 547.1h20.9M317.3 547.1h41.5M255.6 551.2h49.7M309.0 551.2h45.6M255.6 555.3h94.9M255.6 559.4h90.8M255.6 563.5h86.7M263.8 567.6h74.4M276.2 571.6h62.0M387.2 571.6h16.4M288.5 575.7h45.6M378.9 575.7h16.8M296.7 579.8h37.4M370.7 579.8h20.9M309.0 583.9h20.9M366.6 583.9h25.0M255.6 588.0h8.6M321.4 588.0h8.6M362.5 588.0h29.1M255.6 592.1h16.8M362.5 592.1h29.1M255.6 596.2h29.1M362.5 596.2h33.2M255.6 600.3h4.5M272.0 600.3h25.0M370.7 600.3h32.9M276.2 604.4h29.1M378.9 604.4h24.7M280.3 608.4h37.4M387.2 608.4h16.4M280.3 612.5h37.4M395.4 612.5h8.2M284.4 616.6h33.2M284.4 620.7h29.1M284.4 624.8h29.1M341.9 624.8h12.7M284.4 628.9h25.0M337.8 628.9h25.0M284.4 633.0h25.0M333.7 633.0h37.4M284.4 637.1h20.9M333.7 637.1h45.6M284.4 641.2h16.8M329.6 641.2h57.9M284.4 645.2h16.8M329.6 645.2h74.0M284.4 649.3h12.7M325.5 649.3h78.1M383.0 653.4h20.6M395.4 657.5h8.2" stroke="#440154" stroke-width="4.44" shape-rendering="crispEdges"/>
<path d="M259.7 534.8h4.5M300.8 534.8h8.6M358.4 534.8h4.5M259.7 538.9h4.5M309.0 538.9h4.5M358.4 538.9h4.5M263.8 543.0h12.7M313.2 543.0h4.5M358.4 543.0h4.5M276.2 547.1h16.8M313.2 547.1h4.5M358.4 547.1h4.5M304.9 551.2h4.5M354.3 551.2h4.5M350.2 555.3h4.5M346.0 559.4h4.5M341.9 563.5h4.5M255.6 567.6h8.6M337.8 567.6h4.5M267.9 571.6h8.6M383.0 571.6h4.5M280.3 575.7h8.6M333.7 575.7h4.5M374.8 575.7h4.5M395.4 575.7h8.2M292.6 579.8h4.5M391.3 579.8h4.5M255.6 583.9h4.5M300.8 583.9h8.6M329.6 583.9h4.5M391.3 583.9h4.5M263.8 588.0h8.6M313.2 588.0h8.6M391.3 588.0h4.5M272.0 592.1h8.6M321.4 592.1h8.6M358.4 592.1h4.5M391.3 592.1h4.5M284.4 596.2h8.6M358.4 596.2h4.5M395.4 596.2h8.2M259.7 600.3h12.7M296.7 600.3h4.5M366.6 600.3h4.5M304.9 604.4h8.6M374.8 604.4h4.5M276.2 608.4h4.5M317.3 608.4h4.5M383.0 608.4h4.5M317.3 612.5h4.5M391.3 612.5h4.5M280.3 616.6h4.5M399.5 616.6h4.1M313.2 620.7h4.5M346.0 620.7h4.5M337.8 624.8h4.5M354.3 624.8h4.5M309.0 628.9h4.5M333.7 628.9h4.5M362.5 628.9h4.5M370.7 633.0h4.5M304.9 637.1h4.5M329.6 637.1h4.5M378.9 637.1h8.6M300.8 641.2h4.5M325.5 641.2h4.5M387.2 641.2h8.6M300.8 645.2h4.5M325.5 645.2h4.5M296.7 649.3h4.5M321.4 649.3h4.5M378.9 653.4h4.5M391.3 657.5h4.5" stroke="#48196b" stroke-width="4.44" shape-rendering="crispEdges"/>
<path d="M296.7 534.8h4.5M263.8 538.9h4.5M304.9 538.9h4.5M276.2 543.0h4.5M362.5 543.0h4.5M292.6 547.1h20.9M358.4 551.2h4.5M354.3 555.3h4.5M350.2 559.4h4.5M346.0 563.5h4.5M341.9 567.6h4.5M387.2 567.6h16.4M263.8 571.6h4.5M337.8 571.6h4.5M374.8 571.6h8.6M276.2 575.7h4.5M370.7 575.7h4.5M284.4 579.8h8.6M333.7 579.8h4.5M366.6 579.8h4.5M259.7 583.9h4.5M296.7 583.9h4.5M362.5 583.9h4.5M272.0 588.0h4.5M309.0 588.0h4.5M329.6 588.0h4.5M358.4 588.0h4.5M280.3 592.1h4.5M317.3 592.1h4.5M292.6 596.2h4.5M300.8 600.3h8.6M362.5 600.3h4.5M255.6 604.4h4.5M272.0 604.4h4.5M313.2 604.4h4.5M370.7 604.4h4.5M378.9 608.4h4.5M276.2 612.5h4.5M387.2 612.5h4.5M317.3 616.6h4.5M395.4 616.6h4.5M280.3 620.7h4.5M341.9 620.7h4.5M350.2 620.7h4.5M280.3 624.8h4.5M313.2 624.8h4.5M358.4 624.8h4.5M280.3 628.9h4.5M366.6 628.9h4.5M280.3 633.0h4.5M309.0 633.0h4.5M329.6 633.0h4.5M374.8 633.0h4.5M280.3 637.1h4.5M280.3 641.2h4.5M304.9 641.2h4.5M395.4 641.2h8.2M280.3 645.2h4.5M321.4 645.2h4.5M280.3 649.3h4.5M284.4 653.4h12.7M321.4 653.4h57.9M383.0 657.5h8.6M395.4 661.6h8.2" stroke="#462f7c" stroke-width="4.44" shape-rendering="crispEdges"/>
<path d="M263.8 534.8h4.5M292.6 534.8h4.5M267.9 538.9h4.5M300.8 538.9h4.5M280.3 543.0h4.5M309.0 543.0h4.5M362.5 547.1h4.5M259.7 571.6h4.5M272.0 575.7h4.5M337.8 575.7h4.5M395.4 579.8h8.2M263.8 583.9h4.5M292.6 583.9h4.5M333.7 583.9h4.5M395.4 583.9h4.5M276.2 588.0h4.5M304.9 588.0h4.5M395.4 588.0h4.5M284.4 592.1h4.5M313.2 592.1h4.5M329.6 592.1h4.5M354.3 592.1h4.5M395.4 592.1h8.2M296.7 596.2h4.5M354.3 596.2h4.5M358.4 600.3h4.5M259.7 604.4h4.5M317.3 604.4h4.5M366.6 604.4h4.5M272.0 608.4h4.5M374.8 608.4h4.5M383.0 612.5h4.5M276.2 616.6h4.5M391.3 616.6h4.5M317.3 620.7h4.5M337.8 620.7h4.5M354.3 620.7h4.5M333.7 624.8h4.5M362.5 624.8h4.5M313.2 628.9h4.5M370.7 628.9h4.5M378.9 633.0h4.5M309.0 637.1h4.5M325.5 637.1h4.5M387.2 637.1h4.5M300.8 649.3h4.5M280.3 653.4h4.5M296.7 653.4h4.5M317.3 653.4h4.5M378.9 657.5h4.5" stroke="#404387" stroke-width="4.44" shape-rendering="crispEdges"/>
<path d="M288.5 534.8h4.5M362.5 534.8h4.5M272.0 538.9h4.5M296.7 538.9h4.5M362.5 538.9h4.5M284.4 543.0h25.0M395.4 563.5h8.2M383.0 567.6h4.5M255.6 571.6h4.5M370.7 571.6h4.5M267.9 575.7h4.5M366.6 575.7h4.5M255.6 579.8h4.5M280.3 579.8h4.5M362.5 579.8h4.5M267.9 583.9h4.5M288.5 583.9h4.5M358.4 583.9h4.5M399.5 583.9h4.1M280.3 588.0h4.5M300.8 588.0h4.5M399.5 588.0h4.1M288.5 592.1h4.5M309.0 592.1h4.5M300.8 596.2h4.5M321.4 596.2h8.6M309.0 600.3h4.5M267.9 604.4h4.5M362.5 604.4h4.5M321.4 608.4h4.5M321.4 612.5h4.5M341.9 616.6h8.6M399.5 620.7h4.1M366.6 624.8h4.5M329.6 628.9h4.5M374.8 628.9h4.5M383.0 633.0h4.5M391.3 637.1h4.5M321.4 641.2h4.5M304.9 645.2h4.5M317.3 649.3h4.5M300.8 653.4h4.5M325.5 657.5h16.8M391.3 661.6h4.5" stroke="#38568b" stroke-width="4.44" shape-rendering="crispEdges"/>
<path d="M267.9 534.8h20.9M276.2 538.9h4.5M292.6 538.9h4.5M366.6 543.0h4.5M366.6 547.1h4.5M362.5 551.2h4.5M358.4 555.3h4.5M354.3 559.4h4.5M350.2 563.5h4.5M387.2 563.5h8.6M346.0 567.6h4.5M374.8 567.6h8.6M341.9 571.6h4.5M255.6 575.7h12.7M259.7 579.8h20.9M337.8 579.8h4.5M272.0 583.9h16.8M284.4 588.0h16.8M333.7 588.0h4.5M354.3 588.0h4.5M292.6 592.1h16.8M304.9 596.2h16.8M313.2 600.3h12.7M354.3 600.3h4.5M263.8 604.4h4.5M321.4 604.4h4.5M370.7 608.4h4.5M272.0 612.5h4.5M378.9 612.5h4.5M321.4 616.6h4.5M350.2 616.6h4.5M387.2 616.6h4.5M276.2 620.7h4.5M358.4 620.7h4.5M395.4 620.7h4.5M317.3 624.8h4.5M313.2 633.0h4.5M325.5 633.0h4.5M395.4 637.1h8.2M309.0 641.2h4.5M317.3 645.2h4.5M313.2 653.4h4.5M317.3 657.5h8.6M341.9 657.5h25.0M374.8 657.5h4.5M383.0 661.6h8.6M395.4 665.7h8.2" stroke="#30678d" stroke-width="4.44" shape-rendering="crispEdges"/>
<path d="M366.6 534.8h16.8M280.3 538.9h12.7M366.6 538.9h12.7M370.7 543.0h4.5M399.5 547.1h4.1M395.4 551.2h8.2M362.5 555.3h4.5M391.3 555.3h12.3M358.4 559.4h4.5M383.0 559.4h20.6M354.3 563.5h4.5M378.9 563.5h8.6M350.2 567.6h4.5M370.7 567.6h4.5M346.0 571.6h4.5M366.6 571.6h4.5M341.9 575.7h4.5M362.5 575.7h4.5M358.4 579.8h4.5M337.8 583.9h4.5M354.3 583.9h4.5M333.7 592.1h4.5M350.2 592.1h4.5M329.6 596.2h4.5M350.2 596.2h4.5M325.5 600.3h4.5M350.2 600.3h4.5M354.3 604.4h8.6M255.6 608.4h8.6M267.9 608.4h4.5M366.6 608.4h4.5M346.0 612.5h4.5M374.8 612.5h4.5M354.3 616.6h4.5M383.0 616.6h4.5M321.4 620.7h4.5M333.7 620.7h4.5M362.5 620.7h4.5M391.3 620.7h4.5M276.2 624.8h4.5M329.6 624.8h4.5M370.7 624.8h8.6M399.5 624.8h4.1M276.2 628.9h4.5M317.3 628.9h4.5M378.9 628.9h8.6M276.2 633.0h4.5M387.2 633.0h8.6M276.2 637.1h4.5M313.2 637.1h4.5M321.4 637.1h4.5M276.2 641.2h4.5M317.3 641.2h4.5M276.2 645.2h4.5M309.0 645.2h4.5M276.2 649.3h4.5M304.9 649.3h4.5M313.2 649.3h4.5M276.2 653.4h4.5M280.3 657.5h20.9M313.2 657.5h4.5M366.6 657.5h8.6M309.0 661.6h49.7M378.9 661.6h4.5M309.0 665.7h45.6M383.0 665.7h12.7M309.0 669.8h45.6M387.2 669.8h16.4M309.0 673.9h49.7M383.0 673.9h20.6M309.0 678.0h49.7M383.0 678.0h20.6" stroke="#29788e" stroke-width="4.44" shape-rendering="crispEdges"/>
<path d="M383.0 534.8h20.6M378.9 538.9h24.7M374.8 543.0h28.8M370.7 547.1h29.1M366.6 551.2h29.1M366.6 555.3h25.0M362.5 559.4h20.9M358.4 563.5h20.9M354.3 567.6h16.8M350.2 571.6h16.8M346.0 575.7h16.8M341.9 579.8h16.8M341.9 583.9h4.5M350.2 583.9h4.5M337.8 588.0h4.5M350.2 588.0h4.5M325.5 604.4h4.5M350.2 604.4h4.5M263.8 608.4h4.5M346.0 608.4h20.9M267.9 612.5h4.5M341.9 612.5h4.5M350.2 612.5h25.0M272.0 616.6h4.5M337.8 616.6h4.5M358.4 616.6h25.0M366.6 620.7h25.0M321.4 624.8h4.5M378.9 624.8h20.9M321.4 628.9h8.6M387.2 628.9h16.4M317.3 633.0h8.6M395.4 633.0h8.2M317.3 637.1h4.5M313.2 641.2h4.5M272.0 645.2h4.5M313.2 645.2h4.5M272.0 649.3h4.5M309.0 649.3h4.5M272.0 653.4h4.5M304.9 653.4h8.6M272.0 657.5h8.6M300.8 657.5h12.7M272.0 661.6h37.4M358.4 661.6h8.6M374.8 661.6h4.5M276.2 665.7h33.2M354.3 665.7h8.6M378.9 665.7h4.5M296.7 669.8h12.7M354.3 669.8h8.6M378.9 669.8h8.6M296.7 673.9h12.7M358.4 673.9h4.5M378.9 673.9h4.5M296.7 678.0h12.7M358.4 678.0h25.0" stroke="#23888d" stroke-width="4.44" shape-rendering="crispEdges"/>
<path d="M346.0 583.9h4.5M341.9 588.0h8.6M337.8 592.1h12.7M333.7 596.2h4.5M346.0 596.2h4.5M329.6 600.3h4.5M346.0 600.3h4.5M346.0 604.4h4.5M325.5 608.4h4.5M341.9 608.4h4.5M255.6 612.5h12.7M255.6 616.6h16.8M255.6 620.7h4.5M272.0 620.7h4.5M329.6 620.7h4.5M272.0 624.8h4.5M325.5 624.8h4.5M272.0 628.9h4.5M255.6 633.0h4.5M272.0 633.0h4.5M255.6 637.1h20.9M255.6 641.2h20.9M255.6 645.2h16.8M255.6 649.3h16.8M255.6 653.4h16.8M255.6 657.5h16.8M255.6 661.6h16.8M366.6 661.6h8.6M255.6 665.7h20.9M362.5 665.7h16.8M255.6 669.8h41.5M362.5 669.8h16.8M255.6 673.9h41.5M362.5 673.9h16.8M255.6 678.0h41.5" stroke="#1e988a" stroke-width="4.44" shape-rendering="crispEdges"/>
<path d="M337.8 596.2h8.6M341.9 600.3h4.5M329.6 604.4h4.5M341.9 604.4h4.5M325.5 612.5h4.5M337.8 612.5h4.5M325.5 616.6h4.5M333.7 616.6h4.5M259.7 620.7h12.7M325.5 620.7h4.5M255.6 624.8h16.8M255.6 628.9h16.8M259.7 633.0h12.7" stroke="#22a784" stroke-width="4.44" shape-rendering="crispEdges"/>
<path d="M333.7 600.3h8.6M337.8 604.4h4.5M337.8 608.4h4.5M329.6 616.6h4.5" stroke="#35b778" stroke-width="4.44" shape-rendering="crispEdges"/>
<path d="M333.7 604.4h4.5M329.6 608.4h8.6M329.6 612.5h8.6" stroke="#53c567" stroke-width="4.44" shape-rendering="crispEdges"/>
<rect x="280.4" y="557.4" width="97.8" height="97.8" fill="none" stroke="#ff0000" stroke-width="1.3"/>
<line x1="291.8" y1="606.3" x2="321.2" y2="606.3" stroke="#ff0000" stroke-width="1.4"/>
<line x1="337.4" y1="606.3" x2="366.8" y2="606.3" stroke="#ff0000" stroke-width="1.4"/>
<line x1="329.3" y1="568.8" x2="329.3" y2="598.1" stroke="#ff0000" stroke-width="1.4"/>
<line x1="329.3" y1="614.4" x2="329.3" y2="643.8" stroke="#ff0000" stroke-width="1.4"/>
<text x="329.3" y="548.2" class="s" text-anchor="middle" style="font-size:12px;fill:#ff0000;">N</text>
<text x="265.1" y="610.8" class="s" text-anchor="middle" style="font-size:12px;fill:#ff0000;">E</text>
<rect x="255.6" y="532.8" width="148.0" height="147.2" fill="none" stroke="#222" stroke-width="1.1"/>
<line x1="264.1" y1="680.0" x2="264.1" y2="683.5" stroke="#222" stroke-width="0.8"/>
<text x="264.1" y="697.5" class="s" text-anchor="middle" style="font-size:12.2px;">−4</text>
<line x1="252.1" y1="671.5" x2="255.6" y2="671.5" stroke="#222" stroke-width="0.8"/>
<text x="248.1" y="675.8" class="s" text-anchor="end" style="font-size:12.2px;">−4</text>
<line x1="296.7" y1="680.0" x2="296.7" y2="683.5" stroke="#222" stroke-width="0.8"/>
<text x="296.7" y="697.5" class="s" text-anchor="middle" style="font-size:12.2px;">−2</text>
<line x1="252.1" y1="638.9" x2="255.6" y2="638.9" stroke="#222" stroke-width="0.8"/>
<text x="248.1" y="643.2" class="s" text-anchor="end" style="font-size:12.2px;">−2</text>
<line x1="329.3" y1="680.0" x2="329.3" y2="683.5" stroke="#222" stroke-width="0.8"/>
<text x="329.3" y="697.5" class="s" text-anchor="middle" style="font-size:12.2px;">0</text>
<line x1="252.1" y1="606.3" x2="255.6" y2="606.3" stroke="#222" stroke-width="0.8"/>
<text x="248.1" y="610.6" class="s" text-anchor="end" style="font-size:12.2px;">0</text>
<line x1="361.9" y1="680.0" x2="361.9" y2="683.5" stroke="#222" stroke-width="0.8"/>
<text x="361.9" y="697.5" class="s" text-anchor="middle" style="font-size:12.2px;">2</text>
<line x1="252.1" y1="573.7" x2="255.6" y2="573.7" stroke="#222" stroke-width="0.8"/>
<text x="248.1" y="578.0" class="s" text-anchor="end" style="font-size:12.2px;">2</text>
<line x1="394.5" y1="680.0" x2="394.5" y2="683.5" stroke="#222" stroke-width="0.8"/>
<text x="394.5" y="697.5" class="s" text-anchor="middle" style="font-size:12.2px;">4</text>
<line x1="252.1" y1="541.1" x2="255.6" y2="541.1" stroke="#222" stroke-width="0.8"/>
<text x="248.1" y="545.4" class="s" text-anchor="end" style="font-size:12.2px;">4</text>
<text x="329.3" y="526.9" class="s" text-anchor="middle" style="font-size:13.9px;">Lineflux Map</text>
<text x="329.3" y="708.0" class="s" text-anchor="middle" style="font-size:11.8px;">s/b: 0.55 +/- 0.114</text>
<path d="M499.9 569.0h15.1M490.1 574.0h29.8M490.1 578.9h34.7M485.2 583.8h39.6M485.2 588.8h39.6M490.1 593.7h34.7M490.1 598.6h34.7M495.0 603.5h24.9" stroke="#000000" stroke-width="5.28" shape-rendering="crispEdges"/>
<path d="M495.0 569.0h5.3M519.6 574.0h5.3M524.5 583.8h5.3M524.5 588.8h5.3M485.2 593.7h5.3M524.5 593.7h5.3" stroke="#141414" stroke-width="5.28" shape-rendering="crispEdges"/>
<path d="M514.6 569.0h5.3M485.2 578.9h5.3M524.5 578.9h5.3M490.1 603.5h5.3M499.9 608.5h15.1" stroke="#272727" stroke-width="5.28" shape-rendering="crispEdges"/>
<path d="M485.2 598.6h5.3M519.6 603.5h5.3" stroke="#3b3b3b" stroke-width="5.28" shape-rendering="crispEdges"/>
<path d="M504.8 564.1h5.3M490.1 569.0h5.3M524.5 598.6h5.3M495.0 608.5h5.3M514.6 608.5h5.3" stroke="#4e4e4e" stroke-width="5.28" shape-rendering="crispEdges"/>
<path d="M499.9 564.1h5.3M509.7 564.1h5.3M519.6 569.0h5.3M485.2 574.0h5.3M524.5 574.0h5.3M480.3 583.8h5.3" stroke="#626262" stroke-width="5.28" shape-rendering="crispEdges"/>
<path d="M495.0 564.1h5.3M529.4 583.8h5.3M480.3 588.8h5.3M480.3 593.7h5.3M490.1 608.5h5.3" stroke="#767676" stroke-width="5.28" shape-rendering="crispEdges"/>
<path d="M514.6 564.1h5.3M524.5 569.0h5.3M480.3 578.9h5.3M529.4 578.9h5.3M529.4 588.8h5.3M529.4 593.7h5.3M485.2 603.5h5.3M524.5 603.5h5.3M519.6 608.5h5.3M499.9 613.4h15.1" stroke="#898989" stroke-width="5.28" shape-rendering="crispEdges"/>
<path d="M490.1 564.1h5.3M519.6 564.1h5.3M485.2 569.0h5.3M480.3 574.0h5.3M480.3 598.6h5.3M529.4 598.6h5.3M495.0 613.4h5.3M514.6 613.4h5.3" stroke="#9d9d9d" stroke-width="5.28" shape-rendering="crispEdges"/>
<path d="M499.9 559.2h15.1M485.2 564.1h5.3M529.4 569.0h5.3M529.4 574.0h5.3M475.4 583.8h5.3M568.7 583.8h5.3M534.3 588.8h5.3M480.3 603.5h5.3M529.4 603.5h5.3M480.3 608.5h10.2M490.1 613.4h5.3M519.6 613.4h5.3M549.0 628.2h5.3M485.2 667.6h5.3" stroke="#b1b1b1" stroke-width="5.28" shape-rendering="crispEdges"/>
<path d="M485.2 534.6h5.3M539.2 534.6h10.2M553.9 534.6h15.1M573.6 534.6h10.2M450.8 539.5h5.3M485.2 539.5h5.3M504.8 539.5h20.0M534.3 539.5h5.3M563.8 539.5h5.3M578.5 539.5h5.3M465.6 544.4h5.3M519.6 544.4h5.3M539.2 544.4h5.3M549.0 544.4h5.3M563.8 544.4h5.3M573.6 544.4h5.3M445.9 549.3h5.3M470.5 549.3h5.3M490.1 549.3h5.3M514.6 549.3h5.3M534.3 549.3h5.3M563.8 549.3h5.3M578.5 549.3h9.8M445.9 554.3h5.3M490.1 554.3h10.2M504.8 554.3h5.3M539.2 554.3h10.2M553.9 554.3h5.3M578.5 554.3h5.3M455.7 559.2h10.2M485.2 559.2h15.1M514.6 559.2h10.2M529.4 559.2h5.3M450.8 564.1h5.3M460.6 564.1h10.2M529.4 564.1h5.3M544.1 564.1h5.3M445.9 569.0h5.3M460.6 569.0h5.3M480.3 569.0h5.3M534.3 569.0h5.3M563.8 569.0h5.3M445.9 574.0h10.2M553.9 574.0h5.3M568.7 574.0h5.3M583.4 574.0h4.9M450.8 578.9h10.2M475.4 578.9h5.3M534.3 578.9h5.3M549.0 578.9h5.3M558.8 578.9h5.3M573.6 578.9h5.3M445.9 583.8h5.3M460.6 583.8h5.3M534.3 583.8h5.3M549.0 583.8h5.3M578.5 583.8h5.3M475.4 588.8h5.3M553.9 588.8h5.3M583.4 588.8h4.9M441.0 593.7h5.3M470.5 593.7h10.2M534.3 593.7h5.3M553.9 593.7h5.3M573.6 593.7h5.3M445.9 598.6h5.3M534.3 598.6h5.3M583.4 598.6h4.9M445.9 603.5h5.3M455.7 603.5h10.2M475.4 603.5h5.3M534.3 603.5h10.2M553.9 603.5h5.3M583.4 603.5h4.9M524.5 608.5h10.2M544.1 608.5h5.3M573.6 608.5h5.3M441.0 613.4h5.3M455.7 613.4h5.3M465.6 613.4h5.3M475.4 613.4h5.3M485.2 613.4h5.3M544.1 613.4h15.1M568.7 613.4h5.3M470.5 618.3h5.3M480.3 618.3h5.3M490.1 618.3h5.3M504.8 618.3h20.0M529.4 618.3h5.3M553.9 618.3h15.1M441.0 623.2h5.3M455.7 623.2h5.3M514.6 623.2h5.3M544.1 623.2h10.2M558.8 623.2h20.0M583.4 623.2h4.9M465.6 628.2h5.3M475.4 628.2h5.3M485.2 628.2h5.3M499.9 628.2h5.3M514.6 628.2h5.3M524.5 628.2h5.3M534.3 628.2h5.3M544.1 628.2h5.3M445.9 633.1h5.3M460.6 633.1h5.3M475.4 633.1h5.3M524.5 633.1h10.2M539.2 633.1h5.3M549.0 633.1h5.3M558.8 633.1h5.3M568.7 633.1h5.3M441.0 638.0h5.3M490.1 638.0h5.3M524.5 638.0h15.1M563.8 638.0h10.2M583.4 638.0h4.9M445.9 643.0h5.3M460.6 643.0h10.2M475.4 643.0h5.3M485.2 643.0h5.3M504.8 643.0h5.3M514.6 643.0h5.3M534.3 643.0h5.3M549.0 643.0h5.3M568.7 643.0h5.3M578.5 643.0h5.3M509.7 647.9h5.3M519.6 647.9h5.3M539.2 647.9h5.3M558.8 647.9h5.3M445.9 652.8h5.3M480.3 652.8h5.3M514.6 652.8h5.3M539.2 652.8h5.3M549.0 652.8h5.3M563.8 652.8h5.3M578.5 652.8h9.8M475.4 657.7h5.3M485.2 657.7h5.3M514.6 657.7h5.3M529.4 657.7h5.3M539.2 657.7h10.2M563.8 657.7h24.5M441.0 662.7h5.3M450.8 662.7h10.2M465.6 662.7h10.2M485.2 662.7h15.1M509.7 662.7h5.3M524.5 662.7h5.3M534.3 662.7h5.3M563.8 662.7h5.3M573.6 662.7h14.7M460.6 667.6h5.3M480.3 667.6h5.3M539.2 667.6h10.2M480.3 672.5h5.3M495.0 672.5h5.3M504.8 672.5h10.2M519.6 672.5h5.3M529.4 672.5h5.3M573.6 672.5h5.3M455.7 677.4h5.3M490.1 677.4h5.3M499.9 677.4h5.3M509.7 677.4h10.2M544.1 677.4h10.2M573.6 677.4h5.3" stroke="#c4c4c4" stroke-width="5.28" shape-rendering="crispEdges"/>
<path d="M441.0 534.6h5.3M450.8 534.6h34.7M495.0 534.6h44.5M549.0 534.6h5.3M568.7 534.6h5.3M583.4 534.6h4.9M441.0 539.5h10.2M455.7 539.5h29.8M490.1 539.5h15.1M524.5 539.5h10.2M544.1 539.5h20.0M568.7 539.5h10.2M583.4 539.5h4.9M441.0 544.4h24.9M470.5 544.4h44.5M524.5 544.4h15.1M544.1 544.4h5.3M553.9 544.4h10.2M568.7 544.4h5.3M578.5 544.4h5.3M450.8 549.3h10.2M465.6 549.3h5.3M475.4 549.3h15.1M495.0 549.3h20.0M519.6 549.3h15.1M539.2 549.3h10.2M553.9 549.3h10.2M568.7 549.3h5.3M441.0 554.3h5.3M450.8 554.3h39.6M499.9 554.3h5.3M509.7 554.3h29.8M549.0 554.3h5.3M558.8 554.3h20.0M583.4 554.3h4.9M441.0 559.2h15.1M470.5 559.2h5.3M524.5 559.2h5.3M534.3 559.2h54.0M441.0 564.1h10.2M455.7 564.1h5.3M470.5 564.1h15.1M524.5 564.1h5.3M534.3 564.1h10.2M549.0 564.1h39.3M441.0 569.0h5.3M450.8 569.0h10.2M465.6 569.0h5.3M475.4 569.0h5.3M539.2 569.0h5.3M549.0 569.0h15.1M568.7 569.0h19.6M441.0 574.0h5.3M455.7 574.0h24.9M534.3 574.0h15.1M558.8 574.0h10.2M573.6 574.0h10.2M441.0 578.9h10.2M460.6 578.9h15.1M539.2 578.9h10.2M553.9 578.9h5.3M563.8 578.9h10.2M578.5 578.9h9.8M441.0 583.8h5.3M450.8 583.8h5.3M465.6 583.8h10.2M539.2 583.8h10.2M553.9 583.8h5.3M563.8 583.8h5.3M573.6 583.8h5.3M583.4 583.8h4.9M441.0 588.8h5.3M450.8 588.8h24.9M539.2 588.8h15.1M558.8 588.8h10.2M445.9 593.7h24.9M539.2 593.7h15.1M558.8 593.7h15.1M578.5 593.7h9.8M450.8 598.6h29.8M544.1 598.6h39.6M441.0 603.5h5.3M450.8 603.5h5.3M465.6 603.5h10.2M544.1 603.5h10.2M558.8 603.5h24.9M441.0 608.5h20.0M465.6 608.5h15.1M534.3 608.5h10.2M549.0 608.5h24.9M578.5 608.5h9.8M445.9 613.4h10.2M460.6 613.4h5.3M470.5 613.4h5.3M480.3 613.4h5.3M524.5 613.4h20.0M558.8 613.4h10.2M573.6 613.4h14.7M441.0 618.3h29.8M485.2 618.3h5.3M495.0 618.3h10.2M524.5 618.3h5.3M534.3 618.3h20.0M568.7 618.3h19.6M445.9 623.2h10.2M460.6 623.2h54.4M519.6 623.2h24.9M553.9 623.2h5.3M578.5 623.2h5.3M441.0 628.2h5.3M450.8 628.2h15.1M470.5 628.2h5.3M480.3 628.2h5.3M490.1 628.2h10.2M504.8 628.2h5.3M519.6 628.2h5.3M529.4 628.2h5.3M539.2 628.2h5.3M553.9 628.2h5.3M563.8 628.2h24.5M450.8 633.1h10.2M485.2 633.1h10.2M499.9 633.1h10.2M514.6 633.1h10.2M534.3 633.1h5.3M544.1 633.1h5.3M553.9 633.1h5.3M573.6 633.1h14.7M445.9 638.0h44.5M495.0 638.0h10.2M509.7 638.0h10.2M539.2 638.0h5.3M549.0 638.0h15.1M573.6 638.0h10.2M441.0 643.0h5.3M450.8 643.0h5.3M470.5 643.0h5.3M480.3 643.0h5.3M490.1 643.0h15.1M509.7 643.0h5.3M519.6 643.0h15.1M544.1 643.0h5.3M563.8 643.0h5.3M573.6 643.0h5.3M583.4 643.0h4.9M445.9 647.9h39.6M490.1 647.9h10.2M504.8 647.9h5.3M514.6 647.9h5.3M524.5 647.9h15.1M544.1 647.9h15.1M563.8 647.9h5.3M573.6 647.9h5.3M583.4 647.9h4.9M441.0 652.8h5.3M450.8 652.8h24.9M490.1 652.8h15.1M509.7 652.8h5.3M519.6 652.8h20.0M544.1 652.8h5.3M553.9 652.8h10.2M568.7 652.8h10.2M441.0 657.7h34.7M490.1 657.7h24.9M519.6 657.7h10.2M549.0 657.7h15.1M445.9 662.7h5.3M475.4 662.7h10.2M499.9 662.7h10.2M514.6 662.7h10.2M529.4 662.7h5.3M549.0 662.7h15.1M568.7 662.7h5.3M441.0 667.6h20.0M465.6 667.6h15.1M490.1 667.6h5.3M499.9 667.6h39.6M549.0 667.6h24.9M578.5 667.6h9.8M445.9 672.5h15.1M465.6 672.5h15.1M485.2 672.5h10.2M499.9 672.5h5.3M514.6 672.5h5.3M524.5 672.5h5.3M534.3 672.5h10.2M549.0 672.5h24.9M578.5 672.5h9.8M441.0 677.4h10.2M460.6 677.4h29.8M495.0 677.4h5.3M504.8 677.4h5.3M519.6 677.4h5.3M529.4 677.4h10.2M553.9 677.4h15.1" stroke="#d8d8d8" stroke-width="5.28" shape-rendering="crispEdges"/>
<path d="M445.9 534.6h5.3M490.1 534.6h5.3M539.2 539.5h5.3M514.6 544.4h5.3M583.4 544.4h4.9M441.0 549.3h5.3M460.6 549.3h5.3M549.0 549.3h5.3M573.6 549.3h5.3M465.6 559.2h5.3M475.4 559.2h10.2M470.5 569.0h5.3M544.1 569.0h5.3M549.0 574.0h5.3M558.8 583.8h5.3M445.9 588.8h5.3M568.7 588.8h15.1M441.0 598.6h5.3M539.2 598.6h5.3M460.6 608.5h5.3M475.4 618.3h5.3M445.9 628.2h5.3M509.7 628.2h5.3M558.8 628.2h5.3M441.0 633.1h5.3M465.6 633.1h10.2M480.3 633.1h5.3M495.0 633.1h5.3M509.7 633.1h5.3M563.8 633.1h5.3M504.8 638.0h5.3M519.6 638.0h5.3M544.1 638.0h5.3M455.7 643.0h5.3M539.2 643.0h5.3M553.9 643.0h10.2M441.0 647.9h5.3M485.2 647.9h5.3M499.9 647.9h5.3M568.7 647.9h5.3M578.5 647.9h5.3M475.4 652.8h5.3M485.2 652.8h5.3M504.8 652.8h5.3M480.3 657.7h5.3M534.3 657.7h5.3M460.6 662.7h5.3M539.2 662.7h10.2M495.0 667.6h5.3M573.6 667.6h5.3M441.0 672.5h5.3M460.6 672.5h5.3M544.1 672.5h5.3M450.8 677.4h5.3M524.5 677.4h5.3M539.2 677.4h5.3M568.7 677.4h5.3M578.5 677.4h9.8" stroke="#ebebeb" stroke-width="5.28" shape-rendering="crispEdges"/>
<path d="M455.7 583.8h5.3" stroke="#ffffff" stroke-width="5.28" shape-rendering="crispEdges"/>
<ellipse cx="506.4" cy="585" rx="28.6" ry="27" fill="none" stroke="#f0c000" stroke-width="1.2"/>
<rect x="499.3" y="583" width="12.4" height="12.4" fill="none" stroke="#0000ff" stroke-width="1.2"/>
<rect x="467.2" y="558.5" width="95.4" height="95.4" fill="none" stroke="#ff0000" stroke-width="1.3"/>
<line x1="478.3" y1="606.2" x2="506.9" y2="606.2" stroke="#ff0000" stroke-width="1.4"/>
<line x1="522.9" y1="606.2" x2="551.5" y2="606.2" stroke="#ff0000" stroke-width="1.4"/>
<line x1="514.9" y1="569.6" x2="514.9" y2="598.2" stroke="#ff0000" stroke-width="1.4"/>
<line x1="514.9" y1="614.2" x2="514.9" y2="642.8" stroke="#ff0000" stroke-width="1.4"/>
<text x="514.9" y="549.7" class="s" text-anchor="middle" style="font-size:12px;fill:#ff0000;">N</text>
<text x="450.5" y="610.7" class="s" text-anchor="middle" style="font-size:12px;fill:#ff0000;">E</text>
<rect x="441.0" y="532.1" width="147.3" height="147.8" fill="none" stroke="#222" stroke-width="1.1"/>
<line x1="451.3" y1="679.9" x2="451.3" y2="683.4" stroke="#222" stroke-width="0.8"/>
<text x="451.3" y="697.4" class="s" text-anchor="middle" style="font-size:12.2px;">−4</text>
<line x1="437.5" y1="669.8" x2="441.0" y2="669.8" stroke="#222" stroke-width="0.8"/>
<text x="433.5" y="674.1" class="s" text-anchor="end" style="font-size:12.2px;">−4</text>
<line x1="483.1" y1="679.9" x2="483.1" y2="683.4" stroke="#222" stroke-width="0.8"/>
<text x="483.1" y="697.4" class="s" text-anchor="middle" style="font-size:12.2px;">−2</text>
<line x1="437.5" y1="638.0" x2="441.0" y2="638.0" stroke="#222" stroke-width="0.8"/>
<text x="433.5" y="642.3" class="s" text-anchor="end" style="font-size:12.2px;">−2</text>
<line x1="514.9" y1="679.9" x2="514.9" y2="683.4" stroke="#222" stroke-width="0.8"/>
<text x="514.9" y="697.4" class="s" text-anchor="middle" style="font-size:12.2px;">0</text>
<line x1="437.5" y1="606.2" x2="441.0" y2="606.2" stroke="#222" stroke-width="0.8"/>
<text x="433.5" y="610.5" class="s" text-anchor="end" style="font-size:12.2px;">0</text>
<line x1="546.7" y1="679.9" x2="546.7" y2="683.4" stroke="#222" stroke-width="0.8"/>
<text x="546.7" y="697.4" class="s" text-anchor="middle" style="font-size:12.2px;">2</text>
<line x1="437.5" y1="574.4" x2="441.0" y2="574.4" stroke="#222" stroke-width="0.8"/>
<text x="433.5" y="578.7" class="s" text-anchor="end" style="font-size:12.2px;">2</text>
<line x1="578.5" y1="679.9" x2="578.5" y2="683.4" stroke="#222" stroke-width="0.8"/>
<text x="578.5" y="697.4" class="s" text-anchor="middle" style="font-size:12.2px;">4</text>
<line x1="437.5" y1="542.6" x2="441.0" y2="542.6" stroke="#222" stroke-width="0.8"/>
<text x="433.5" y="546.9" class="s" text-anchor="end" style="font-size:12.2px;">4</text>
<text x="514.9" y="526.9" class="s" text-anchor="middle" style="font-size:13.9px;">KPNO(24.7) g</text>
<text x="514.9" y="707.9" class="s" text-anchor="middle" style="font-size:11.8px;">m:18.6  re:1.7"  s:1.4"</text>
<text x="514.9" y="718.9" class="s" text-anchor="middle" style="font-size:11.8px;">EWr: 0, PLAE: 0.09</text>
<path d="M684.1 574.0h11.6M679.6 576.2h20.5M677.4 578.5h25.0M677.4 580.7h27.3M675.1 583.0h29.5M675.1 585.2h31.7M675.1 587.4h31.7M672.9 589.7h34.0M675.1 591.9h31.7M675.1 594.1h31.7M675.1 596.4h29.5M677.4 598.6h27.3M679.6 600.9h22.8M681.9 603.1h18.3M688.6 605.3h4.8" stroke="#000000" stroke-width="2.59" shape-rendering="crispEdges"/>
<path d="M695.3 574.0h2.6M675.1 580.7h2.6M704.3 583.0h2.6M672.9 585.2h2.6M672.9 587.4h2.6M672.9 591.9h2.6M675.1 598.6h2.6M677.4 600.9h2.6M686.3 605.3h2.6M693.1 605.3h2.6" stroke="#141414" stroke-width="2.59" shape-rendering="crispEdges"/>
<path d="M681.9 574.0h2.6M699.8 576.2h2.6M702.0 578.5h2.6M672.9 594.1h2.6M704.3 596.4h2.6M679.6 603.1h2.6M684.1 605.3h2.6" stroke="#272727" stroke-width="2.59" shape-rendering="crispEdges"/>
<path d="M690.8 571.8h2.6M697.6 574.0h2.6M704.3 580.7h2.6M672.9 583.0h2.6M706.5 589.7h2.6M702.0 600.9h2.6M695.3 605.3h2.6" stroke="#3b3b3b" stroke-width="2.59" shape-rendering="crispEdges"/>
<path d="M686.3 571.8h4.8M693.1 571.8h2.6M677.4 576.2h2.6M675.1 578.5h2.6M706.5 585.2h2.6M706.5 587.4h2.6M706.5 591.9h2.6M672.9 596.4h2.6M704.3 598.6h2.6M675.1 600.9h2.6M677.4 603.1h2.6M699.8 603.1h2.6M681.9 605.3h2.6M697.6 605.3h2.6" stroke="#4e4e4e" stroke-width="2.59" shape-rendering="crispEdges"/>
<path d="M684.1 571.8h2.6M679.6 574.0h2.6M702.0 576.2h2.6M672.9 580.7h2.6M670.6 587.4h2.6M670.6 589.7h2.6M706.5 594.1h2.6M686.3 607.6h7.1" stroke="#626262" stroke-width="2.59" shape-rendering="crispEdges"/>
<path d="M695.3 571.8h2.6M704.3 578.5h2.6M670.6 580.7h2.6M706.5 583.0h2.6M670.6 591.9h2.6M670.6 594.1h2.6M672.9 598.6h2.6M679.6 605.3h2.6M693.1 607.6h2.6" stroke="#767676" stroke-width="2.59" shape-rendering="crispEdges"/>
<path d="M688.6 569.5h11.6M677.4 571.8h2.6M681.9 571.8h2.6M697.6 571.8h2.6M677.4 574.0h2.6M699.8 574.0h2.6M675.1 576.2h2.6M672.9 578.5h2.6M706.5 580.7h2.6M668.4 583.0h4.8M670.6 585.2h2.6M708.8 585.2h2.6M708.8 587.4h2.6M668.4 589.7h2.6M708.8 589.7h2.6M668.4 591.9h2.6M708.8 591.9h4.8M708.8 594.1h2.6M670.6 596.4h2.6M706.5 596.4h2.6M704.3 600.9h2.6M704.3 603.1h2.6M675.1 605.3h2.6M681.9 607.6h4.8M695.3 607.6h2.6M699.8 607.6h2.6M684.1 609.8h2.6M690.8 609.8h4.8" stroke="#898989" stroke-width="2.59" shape-rendering="crispEdges"/>
<path d="M688.6 565.0h2.6M686.3 567.3h2.6M693.1 567.3h2.6M697.6 567.3h2.6M677.4 569.5h2.6M681.9 569.5h7.1M679.6 571.8h2.6M699.8 571.8h4.8M675.1 574.0h2.6M702.0 574.0h7.1M672.9 576.2h2.6M704.3 576.2h2.6M708.8 576.2h2.6M670.6 578.5h2.6M706.5 578.5h4.8M708.8 580.7h2.6M708.8 583.0h2.6M711.0 585.2h2.6M666.2 587.4h4.8M711.0 587.4h2.6M735.7 587.4h2.6M740.2 587.4h2.6M744.6 587.4h2.6M666.2 589.7h2.6M711.0 589.7h2.6M737.9 589.7h4.8M666.2 591.9h2.6M737.9 591.9h2.6M668.4 594.1h2.6M737.9 594.1h2.6M666.2 596.4h4.8M708.8 596.4h4.8M668.4 598.6h4.8M706.5 598.6h4.8M668.4 600.9h7.1M706.5 600.9h2.6M670.6 603.1h7.1M702.0 603.1h2.6M706.5 603.1h2.6M677.4 605.3h2.6M699.8 605.3h7.1M675.1 607.6h2.6M679.6 607.6h2.6M697.6 607.6h2.6M679.6 609.8h4.8M686.3 609.8h4.8M695.3 609.8h7.1M690.8 612.0h2.6M695.3 612.0h2.6M769.3 672.5h2.6M762.6 674.7h2.6M769.3 674.7h4.5M769.3 679.2h2.6" stroke="#9d9d9d" stroke-width="2.59" shape-rendering="crispEdges"/>
<path d="M708.8 533.7h2.6M702.0 536.0h4.8M708.8 536.0h4.8M702.0 538.2h2.6M708.8 540.4h2.6M717.7 540.4h2.6M708.8 542.7h2.6M641.5 544.9h2.6M677.4 544.9h2.6M693.1 544.9h2.6M702.0 544.9h2.6M637.0 553.9h2.6M711.0 553.9h2.6M637.0 556.1h2.6M630.3 558.3h2.6M628.0 560.6h4.8M628.0 562.8h4.8M679.6 565.0h4.8M686.3 565.0h2.6M690.8 565.0h2.6M630.3 567.3h2.6M637.0 567.3h2.6M677.4 567.3h9.3M688.6 567.3h2.6M695.3 567.3h2.6M630.3 569.5h2.6M679.6 569.5h2.6M699.8 569.5h2.6M704.3 569.5h2.6M661.7 571.8h2.6M670.6 571.8h4.8M706.5 571.8h2.6M672.9 574.0h2.6M708.8 574.0h4.8M668.4 576.2h4.8M706.5 576.2h2.6M668.4 578.5h2.6M711.0 578.5h2.6M724.5 578.5h2.6M744.6 578.5h2.6M666.2 580.7h4.8M711.0 580.7h2.6M666.2 583.0h2.6M711.0 583.0h2.6M740.2 583.0h2.6M746.9 583.0h2.6M663.9 585.2h7.1M733.4 585.2h2.6M737.9 585.2h2.6M742.4 585.2h4.8M663.9 587.4h2.6M713.3 587.4h2.6M731.2 587.4h4.8M737.9 587.4h2.6M742.4 587.4h2.6M713.3 589.7h4.8M731.2 589.7h7.1M742.4 589.7h2.6M650.5 591.9h2.6M663.9 591.9h2.6M729.0 591.9h2.6M733.4 591.9h4.8M740.2 591.9h2.6M666.2 594.1h2.6M711.0 594.1h4.8M733.4 594.1h4.8M740.2 594.1h7.1M661.7 596.4h2.6M713.3 596.4h2.6M735.7 596.4h4.8M742.4 596.4h2.6M746.9 596.4h2.6M663.9 598.6h4.8M711.0 598.6h4.8M737.9 598.6h2.6M708.8 600.9h4.8M668.4 603.1h2.6M708.8 603.1h4.8M670.6 605.3h4.8M706.5 605.3h4.8M715.5 605.3h2.6M668.4 607.6h2.6M672.9 607.6h2.6M677.4 607.6h2.6M702.0 607.6h2.6M675.1 609.8h4.8M702.0 609.8h4.8M681.9 612.0h9.3M693.1 612.0h2.6M697.6 612.0h2.6M655.0 614.3h2.6M686.3 614.3h7.1M695.3 614.3h2.6M690.8 616.5h2.6M715.5 618.8h2.6M643.7 621.0h2.6M675.1 623.2h2.6M762.6 643.4h2.6M758.1 647.9h2.6M742.4 650.1h2.6M679.6 654.6h2.6M688.6 656.8h2.6M681.9 659.0h2.6M729.0 659.0h2.6M749.1 663.5h2.6M753.6 665.8h2.6M760.3 665.8h2.6M681.9 668.0h2.6M702.0 668.0h2.6M762.6 670.2h2.6M767.1 670.2h6.7M704.3 672.5h2.6M737.9 672.5h2.6M767.1 672.5h2.6M771.6 672.5h2.2M735.7 674.7h2.6M764.8 674.7h4.8M688.6 676.9h2.6M733.4 676.9h2.6M764.8 676.9h9.0M711.0 679.2h2.6M762.6 679.2h2.6M767.1 679.2h2.6M771.6 679.2h2.2" stroke="#b1b1b1" stroke-width="2.59" shape-rendering="crispEdges"/>
<path d="M637.0 533.7h2.6M641.5 533.7h2.6M652.7 533.7h2.6M690.8 533.7h2.6M699.8 533.7h9.3M711.0 533.7h2.6M731.2 533.7h2.6M769.3 533.7h2.6M630.3 536.0h4.8M650.5 536.0h4.8M668.4 536.0h2.6M677.4 536.0h2.6M690.8 536.0h2.6M697.6 536.0h2.6M706.5 536.0h2.6M713.3 536.0h2.6M733.4 536.0h2.6M744.6 536.0h2.6M753.6 536.0h2.6M769.3 536.0h2.6M632.5 538.2h2.6M652.7 538.2h4.8M661.7 538.2h2.6M677.4 538.2h2.6M684.1 538.2h2.6M693.1 538.2h2.6M704.3 538.2h9.3M720.0 538.2h2.6M726.7 538.2h4.8M733.4 538.2h4.8M630.3 540.4h4.8M637.0 540.4h2.6M699.8 540.4h2.6M706.5 540.4h2.6M711.0 540.4h4.8M726.7 540.4h2.6M740.2 540.4h2.6M764.8 540.4h2.6M628.0 542.7h2.6M637.0 542.7h4.8M643.7 542.7h7.1M675.1 542.7h2.6M690.8 542.7h2.6M706.5 542.7h2.6M711.0 542.7h2.6M735.7 542.7h2.6M740.2 542.7h4.8M764.8 542.7h2.6M628.0 544.9h2.6M634.8 544.9h2.6M650.5 544.9h2.6M699.8 544.9h2.6M706.5 544.9h2.6M731.2 544.9h2.6M740.2 544.9h2.6M762.6 544.9h2.6M771.6 544.9h2.2M625.8 547.1h2.6M630.3 547.1h2.6M648.2 547.1h2.6M657.2 547.1h2.6M661.7 547.1h2.6M666.2 547.1h2.6M693.1 547.1h2.6M704.3 547.1h2.6M708.8 547.1h2.6M717.7 547.1h4.8M726.7 547.1h2.6M735.7 547.1h4.8M742.4 547.1h9.3M760.3 547.1h2.6M628.0 549.4h4.8M634.8 549.4h2.6M646.0 549.4h2.6M681.9 549.4h2.6M695.3 549.4h2.6M753.6 549.4h2.6M625.8 551.6h2.6M630.3 551.6h4.8M637.0 551.6h2.6M646.0 551.6h4.8M657.2 551.6h2.6M693.1 551.6h2.6M706.5 551.6h2.6M713.3 551.6h2.6M724.5 551.6h2.6M735.7 551.6h2.6M746.9 551.6h2.6M753.6 551.6h2.6M760.3 551.6h4.8M771.6 551.6h2.2M625.8 553.9h4.8M632.5 553.9h4.8M643.7 553.9h2.6M659.4 553.9h2.6M666.2 553.9h2.6M672.9 553.9h2.6M688.6 553.9h2.6M693.1 553.9h2.6M699.8 553.9h2.6M708.8 553.9h2.6M749.1 553.9h4.8M755.9 553.9h2.6M767.1 553.9h4.8M628.0 556.1h7.1M639.3 556.1h11.6M657.2 556.1h2.6M670.6 556.1h2.6M713.3 556.1h4.8M742.4 556.1h2.6M746.9 556.1h2.6M625.8 558.3h4.8M632.5 558.3h11.6M650.5 558.3h2.6M666.2 558.3h2.6M672.9 558.3h4.8M693.1 558.3h2.6M697.6 558.3h2.6M704.3 558.3h2.6M713.3 558.3h2.6M722.2 558.3h2.6M731.2 558.3h2.6M740.2 558.3h2.6M751.4 558.3h2.6M758.1 558.3h2.6M625.8 560.6h2.6M632.5 560.6h4.8M641.5 560.6h2.6M646.0 560.6h2.6M650.5 560.6h2.6M657.2 560.6h2.6M663.9 560.6h2.6M681.9 560.6h9.3M695.3 560.6h7.1M704.3 560.6h2.6M717.7 560.6h2.6M737.9 560.6h2.6M769.3 560.6h2.6M625.8 562.8h2.6M634.8 562.8h2.6M639.3 562.8h2.6M646.0 562.8h2.6M677.4 562.8h4.8M684.1 562.8h2.6M688.6 562.8h7.1M697.6 562.8h2.6M702.0 562.8h2.6M711.0 562.8h4.8M726.7 562.8h2.6M735.7 562.8h2.6M751.4 562.8h2.6M630.3 565.0h2.6M634.8 565.0h2.6M641.5 565.0h7.1M657.2 565.0h2.6M666.2 565.0h2.6M672.9 565.0h7.1M684.1 565.0h2.6M693.1 565.0h7.1M702.0 565.0h2.6M720.0 565.0h4.8M729.0 565.0h4.8M749.1 565.0h2.6M767.1 565.0h2.6M625.8 567.3h4.8M639.3 567.3h2.6M646.0 567.3h2.6M666.2 567.3h2.6M675.1 567.3h2.6M690.8 567.3h2.6M699.8 567.3h9.3M724.5 567.3h2.6M735.7 567.3h4.8M767.1 567.3h2.6M625.8 569.5h2.6M643.7 569.5h2.6M659.4 569.5h2.6M666.2 569.5h2.6M672.9 569.5h4.8M702.0 569.5h2.6M706.5 569.5h2.6M733.4 569.5h4.8M755.9 569.5h2.6M771.6 569.5h2.2M625.8 571.8h2.6M630.3 571.8h2.6M663.9 571.8h7.1M675.1 571.8h2.6M704.3 571.8h2.6M726.7 571.8h2.6M733.4 571.8h2.6M740.2 571.8h4.8M758.1 571.8h2.6M637.0 574.0h2.6M641.5 574.0h2.6M650.5 574.0h2.6M657.2 574.0h4.8M666.2 574.0h7.1M715.5 574.0h2.6M749.1 574.0h2.6M758.1 574.0h2.6M634.8 576.2h4.8M655.0 576.2h2.6M661.7 576.2h2.6M711.0 576.2h2.6M722.2 576.2h2.6M737.9 576.2h2.6M742.4 576.2h2.6M746.9 576.2h2.6M628.0 578.5h2.6M632.5 578.5h9.3M659.4 578.5h2.6M666.2 578.5h2.6M713.3 578.5h4.8M731.2 578.5h2.6M737.9 578.5h4.8M767.1 578.5h2.6M628.0 580.7h2.6M641.5 580.7h2.6M650.5 580.7h4.8M713.3 580.7h2.6M731.2 580.7h2.6M737.9 580.7h2.6M742.4 580.7h2.6M746.9 580.7h4.8M755.9 580.7h2.6M764.8 580.7h2.6M771.6 580.7h2.2M625.8 583.0h2.6M632.5 583.0h2.6M637.0 583.0h2.6M655.0 583.0h2.6M663.9 583.0h2.6M713.3 583.0h7.1M722.2 583.0h2.6M731.2 583.0h2.6M737.9 583.0h2.6M742.4 583.0h2.6M758.1 583.0h2.6M767.1 583.0h2.6M632.5 585.2h2.6M650.5 585.2h2.6M655.0 585.2h2.6M661.7 585.2h2.6M713.3 585.2h2.6M720.0 585.2h2.6M735.7 585.2h2.6M740.2 585.2h2.6M771.6 585.2h2.2M628.0 587.4h2.6M632.5 587.4h2.6M641.5 587.4h2.6M717.7 587.4h2.6M726.7 587.4h4.8M746.9 587.4h2.6M753.6 587.4h2.6M769.3 587.4h2.6M628.0 589.7h2.6M641.5 589.7h2.6M652.7 589.7h2.6M657.2 589.7h7.1M722.2 589.7h2.6M726.7 589.7h4.8M746.9 589.7h2.6M771.6 589.7h2.2M630.3 591.9h2.6M659.4 591.9h4.8M713.3 591.9h2.6M717.7 591.9h9.3M731.2 591.9h2.6M742.4 591.9h4.8M749.1 591.9h2.6M767.1 591.9h2.6M771.6 591.9h2.2M628.0 594.1h2.6M646.0 594.1h2.6M657.2 594.1h2.6M661.7 594.1h2.6M715.5 594.1h2.6M720.0 594.1h4.8M726.7 594.1h2.6M746.9 594.1h7.1M767.1 594.1h2.6M646.0 596.4h2.6M715.5 596.4h2.6M722.2 596.4h2.6M729.0 596.4h2.6M740.2 596.4h2.6M744.6 596.4h2.6M758.1 596.4h2.6M634.8 598.6h4.8M646.0 598.6h7.1M655.0 598.6h2.6M661.7 598.6h2.6M717.7 598.6h2.6M729.0 598.6h9.3M740.2 598.6h2.6M744.6 598.6h2.6M760.3 598.6h2.6M769.3 598.6h2.6M625.8 600.9h2.6M630.3 600.9h4.8M659.4 600.9h2.6M666.2 600.9h2.6M713.3 600.9h4.8M729.0 600.9h7.1M742.4 600.9h2.6M628.0 603.1h2.6M643.7 603.1h2.6M657.2 603.1h2.6M713.3 603.1h7.1M724.5 603.1h2.6M731.2 603.1h9.3M742.4 603.1h2.6M746.9 603.1h4.8M630.3 605.3h2.6M639.3 605.3h2.6M648.2 605.3h4.8M661.7 605.3h7.1M711.0 605.3h4.8M628.0 607.6h2.6M641.5 607.6h2.6M657.2 607.6h2.6M666.2 607.6h2.6M704.3 607.6h4.8M755.9 607.6h2.6M634.8 609.8h2.6M646.0 609.8h2.6M655.0 609.8h2.6M670.6 609.8h4.8M706.5 609.8h7.1M715.5 609.8h2.6M720.0 609.8h2.6M726.7 609.8h2.6M733.4 609.8h2.6M762.6 609.8h4.8M771.6 609.8h2.2M639.3 612.0h2.6M663.9 612.0h2.6M670.6 612.0h4.8M677.4 612.0h4.8M699.8 612.0h7.1M717.7 612.0h2.6M735.7 612.0h2.6M755.9 612.0h2.6M769.3 612.0h2.6M625.8 614.3h2.6M630.3 614.3h2.6M637.0 614.3h2.6M646.0 614.3h2.6M675.1 614.3h2.6M679.6 614.3h7.1M693.1 614.3h2.6M697.6 614.3h2.6M704.3 614.3h2.6M708.8 614.3h2.6M720.0 614.3h4.8M733.4 614.3h2.6M737.9 614.3h2.6M760.3 614.3h2.6M767.1 614.3h2.6M771.6 614.3h2.2M630.3 616.5h2.6M655.0 616.5h2.6M659.4 616.5h2.6M663.9 616.5h2.6M668.4 616.5h2.6M672.9 616.5h2.6M684.1 616.5h4.8M693.1 616.5h7.1M702.0 616.5h2.6M722.2 616.5h2.6M742.4 616.5h2.6M746.9 616.5h2.6M625.8 618.8h2.6M634.8 618.8h2.6M641.5 618.8h2.6M646.0 618.8h2.6M684.1 618.8h2.6M695.3 618.8h2.6M708.8 618.8h4.8M726.7 618.8h2.6M735.7 618.8h2.6M742.4 618.8h2.6M751.4 618.8h4.8M769.3 618.8h4.5M625.8 621.0h4.8M641.5 621.0h2.6M659.4 621.0h2.6M666.2 621.0h2.6M681.9 621.0h4.8M693.1 621.0h4.8M704.3 621.0h2.6M724.5 621.0h2.6M733.4 621.0h2.6M753.6 621.0h4.8M771.6 621.0h2.2M632.5 623.2h2.6M639.3 623.2h4.8M663.9 623.2h2.6M690.8 623.2h2.6M702.0 623.2h2.6M722.2 623.2h2.6M726.7 623.2h2.6M746.9 623.2h2.6M753.6 623.2h4.8M764.8 623.2h2.6M771.6 623.2h2.2M625.8 625.5h2.6M650.5 625.5h2.6M655.0 625.5h2.6M679.6 625.5h2.6M720.0 625.5h2.6M726.7 625.5h2.6M632.5 627.7h4.8M641.5 627.7h4.8M670.6 627.7h4.8M677.4 627.7h2.6M690.8 627.7h2.6M699.8 627.7h2.6M711.0 627.7h2.6M726.7 627.7h4.8M733.4 627.7h2.6M740.2 627.7h2.6M744.6 627.7h2.6M749.1 627.7h2.6M758.1 627.7h4.8M771.6 627.7h2.2M628.0 629.9h4.8M643.7 629.9h2.6M650.5 629.9h2.6M661.7 629.9h2.6M672.9 629.9h2.6M693.1 629.9h2.6M729.0 629.9h2.6M746.9 629.9h2.6M767.1 629.9h2.6M771.6 629.9h2.2M632.5 632.2h2.6M648.2 632.2h2.6M657.2 632.2h2.6M661.7 632.2h2.6M675.1 632.2h2.6M684.1 632.2h2.6M704.3 632.2h2.6M726.7 632.2h2.6M758.1 632.2h4.8M637.0 634.4h2.6M646.0 634.4h2.6M659.4 634.4h2.6M666.2 634.4h2.6M690.8 634.4h2.6M699.8 634.4h7.1M715.5 634.4h2.6M724.5 634.4h2.6M737.9 634.4h2.6M744.6 634.4h2.6M769.3 634.4h2.6M634.8 636.7h2.6M652.7 636.7h2.6M722.2 636.7h2.6M726.7 636.7h4.8M760.3 636.7h4.8M769.3 636.7h2.6M632.5 638.9h2.6M659.4 638.9h2.6M670.6 638.9h2.6M706.5 638.9h2.6M713.3 638.9h2.6M717.7 638.9h2.6M729.0 638.9h4.8M740.2 638.9h2.6M746.9 638.9h2.6M760.3 638.9h7.1M630.3 641.1h2.6M643.7 641.1h2.6M670.6 641.1h4.8M679.6 641.1h4.8M702.0 641.1h2.6M715.5 641.1h2.6M724.5 641.1h2.6M731.2 641.1h2.6M737.9 641.1h2.6M688.6 643.4h2.6M693.1 643.4h2.6M708.8 643.4h2.6M722.2 643.4h2.6M731.2 643.4h4.8M737.9 643.4h2.6M742.4 643.4h2.6M746.9 643.4h4.8M753.6 643.4h2.6M646.0 645.6h2.6M688.6 645.6h2.6M697.6 645.6h2.6M740.2 645.6h2.6M762.6 645.6h2.6M628.0 647.9h2.6M632.5 647.9h4.8M641.5 647.9h2.6M650.5 647.9h2.6M655.0 647.9h2.6M679.6 647.9h2.6M693.1 647.9h4.8M711.0 647.9h2.6M722.2 647.9h2.6M737.9 647.9h2.6M751.4 647.9h4.8M760.3 647.9h2.6M632.5 650.1h2.6M637.0 650.1h4.8M679.6 650.1h2.6M686.3 650.1h2.6M702.0 650.1h4.8M708.8 650.1h2.6M713.3 650.1h2.6M726.7 650.1h2.6M733.4 650.1h2.6M749.1 650.1h2.6M753.6 650.1h2.6M769.3 650.1h2.6M634.8 652.3h2.6M650.5 652.3h2.6M655.0 652.3h2.6M672.9 652.3h2.6M684.1 652.3h4.8M693.1 652.3h4.8M699.8 652.3h2.6M708.8 652.3h2.6M713.3 652.3h2.6M720.0 652.3h2.6M744.6 652.3h2.6M749.1 652.3h2.6M758.1 652.3h2.6M762.6 652.3h2.6M632.5 654.6h2.6M663.9 654.6h2.6M668.4 654.6h2.6M677.4 654.6h2.6M686.3 654.6h2.6M690.8 654.6h2.6M695.3 654.6h2.6M699.8 654.6h2.6M715.5 654.6h4.8M755.9 654.6h2.6M760.3 654.6h2.6M764.8 654.6h2.6M630.3 656.8h2.6M646.0 656.8h2.6M650.5 656.8h2.6M670.6 656.8h2.6M675.1 656.8h4.8M715.5 656.8h2.6M720.0 656.8h2.6M724.5 656.8h2.6M731.2 656.8h2.6M751.4 656.8h2.6M628.0 659.0h7.1M637.0 659.0h2.6M672.9 659.0h4.8M686.3 659.0h4.8M697.6 659.0h2.6M717.7 659.0h2.6M733.4 659.0h2.6M767.1 659.0h2.6M641.5 661.3h2.6M650.5 661.3h2.6M670.6 661.3h2.6M688.6 661.3h2.6M697.6 661.3h2.6M706.5 661.3h2.6M711.0 661.3h2.6M720.0 661.3h2.6M735.7 661.3h2.6M749.1 661.3h4.8M764.8 661.3h4.8M639.3 663.5h2.6M666.2 663.5h2.6M670.6 663.5h2.6M684.1 663.5h2.6M704.3 663.5h2.6M711.0 663.5h2.6M715.5 663.5h2.6M726.7 663.5h2.6M735.7 663.5h2.6M753.6 663.5h4.8M771.6 663.5h2.2M625.8 665.8h2.6M630.3 665.8h4.8M639.3 665.8h2.6M643.7 665.8h2.6M663.9 665.8h2.6M675.1 665.8h4.8M681.9 665.8h2.6M693.1 665.8h2.6M697.6 665.8h2.6M702.0 665.8h4.8M715.5 665.8h2.6M720.0 665.8h2.6M724.5 665.8h2.6M742.4 665.8h2.6M751.4 665.8h2.6M755.9 665.8h2.6M771.6 665.8h2.2M628.0 668.0h2.6M639.3 668.0h2.6M668.4 668.0h2.6M726.7 668.0h2.6M735.7 668.0h2.6M751.4 668.0h2.6M755.9 668.0h7.1M767.1 668.0h2.6M771.6 668.0h2.2M634.8 670.2h2.6M650.5 670.2h2.6M655.0 670.2h2.6M684.1 670.2h2.6M697.6 670.2h2.6M735.7 670.2h4.8M744.6 670.2h2.6M764.8 670.2h2.6M625.8 672.5h2.6M641.5 672.5h2.6M648.2 672.5h2.6M652.7 672.5h4.8M668.4 672.5h2.6M677.4 672.5h4.8M695.3 672.5h2.6M733.4 672.5h2.6M744.6 672.5h2.6M755.9 672.5h2.6M760.3 672.5h7.1M630.3 674.7h2.6M639.3 674.7h2.6M650.5 674.7h2.6M672.9 674.7h2.6M697.6 674.7h2.6M726.7 674.7h2.6M749.1 674.7h2.6M753.6 674.7h2.6M760.3 674.7h2.6M657.2 676.9h2.6M661.7 676.9h7.1M681.9 676.9h2.6M695.3 676.9h2.6M704.3 676.9h2.6M711.0 676.9h4.8M726.7 676.9h4.8M742.4 676.9h2.6M749.1 676.9h2.6M755.9 676.9h9.3M639.3 679.2h2.6M648.2 679.2h2.6M657.2 679.2h2.6M668.4 679.2h2.6M686.3 679.2h2.6M690.8 679.2h2.6M697.6 679.2h2.6M702.0 679.2h4.8M733.4 679.2h2.6M744.6 679.2h2.6M764.8 679.2h2.6" stroke="#c4c4c4" stroke-width="2.59" shape-rendering="crispEdges"/>
<path d="M625.8 533.7h2.6M639.3 533.7h2.6M643.7 533.7h2.6M648.2 533.7h4.8M655.0 533.7h4.8M666.2 533.7h2.6M672.9 533.7h16.0M695.3 533.7h4.8M715.5 533.7h4.8M722.2 533.7h4.8M729.0 533.7h2.6M733.4 533.7h9.3M744.6 533.7h2.6M760.3 533.7h4.8M767.1 533.7h2.6M771.6 533.7h2.2M625.8 536.0h4.8M634.8 536.0h7.1M646.0 536.0h2.6M655.0 536.0h2.6M670.6 536.0h4.8M681.9 536.0h7.1M695.3 536.0h2.6M699.8 536.0h2.6M715.5 536.0h11.6M729.0 536.0h4.8M742.4 536.0h2.6M751.4 536.0h2.6M755.9 536.0h4.8M762.6 536.0h7.1M771.6 536.0h2.2M628.0 538.2h4.8M634.8 538.2h16.0M657.2 538.2h4.8M663.9 538.2h2.6M668.4 538.2h4.8M675.1 538.2h2.6M679.6 538.2h2.6M686.3 538.2h7.1M695.3 538.2h7.1M713.3 538.2h7.1M722.2 538.2h4.8M737.9 538.2h2.6M742.4 538.2h9.3M755.9 538.2h2.6M762.6 538.2h9.3M625.8 540.4h4.8M639.3 540.4h22.8M666.2 540.4h11.6M679.6 540.4h11.6M693.1 540.4h4.8M702.0 540.4h4.8M715.5 540.4h2.6M720.0 540.4h7.1M729.0 540.4h4.8M737.9 540.4h2.6M742.4 540.4h4.8M751.4 540.4h2.6M760.3 540.4h4.8M769.3 540.4h2.6M625.8 542.7h2.6M630.3 542.7h2.6M641.5 542.7h2.6M652.7 542.7h9.3M668.4 542.7h7.1M679.6 542.7h2.6M684.1 542.7h7.1M693.1 542.7h4.8M699.8 542.7h7.1M715.5 542.7h2.6M720.0 542.7h4.8M726.7 542.7h2.6M733.4 542.7h2.6M737.9 542.7h2.6M751.4 542.7h11.6M769.3 542.7h2.6M630.3 544.9h4.8M637.0 544.9h4.8M643.7 544.9h7.1M652.7 544.9h2.6M659.4 544.9h13.8M681.9 544.9h2.6M686.3 544.9h4.8M697.6 544.9h2.6M704.3 544.9h2.6M708.8 544.9h7.1M717.7 544.9h2.6M724.5 544.9h2.6M733.4 544.9h7.1M742.4 544.9h7.1M751.4 544.9h11.6M764.8 544.9h2.6M632.5 547.1h9.3M643.7 547.1h4.8M650.5 547.1h7.1M663.9 547.1h2.6M668.4 547.1h2.6M672.9 547.1h20.5M697.6 547.1h7.1M711.0 547.1h2.6M715.5 547.1h2.6M724.5 547.1h2.6M731.2 547.1h4.8M740.2 547.1h2.6M755.9 547.1h4.8M762.6 547.1h4.8M769.3 547.1h4.5M625.8 549.4h2.6M632.5 549.4h2.6M637.0 549.4h9.3M648.2 549.4h11.6M661.7 549.4h11.6M677.4 549.4h4.8M684.1 549.4h2.6M690.8 549.4h4.8M699.8 549.4h2.6M704.3 549.4h9.3M715.5 549.4h13.8M731.2 549.4h11.6M744.6 549.4h2.6M749.1 549.4h4.8M760.3 549.4h2.6M767.1 549.4h2.6M771.6 549.4h2.2M628.0 551.6h2.6M634.8 551.6h2.6M639.3 551.6h7.1M652.7 551.6h4.8M659.4 551.6h2.6M670.6 551.6h4.8M677.4 551.6h9.3M688.6 551.6h4.8M697.6 551.6h2.6M702.0 551.6h4.8M708.8 551.6h4.8M715.5 551.6h4.8M722.2 551.6h2.6M726.7 551.6h4.8M733.4 551.6h2.6M737.9 551.6h9.3M749.1 551.6h4.8M755.9 551.6h4.8M764.8 551.6h7.1M630.3 553.9h2.6M639.3 553.9h4.8M646.0 553.9h2.6M652.7 553.9h7.1M661.7 553.9h4.8M668.4 553.9h2.6M679.6 553.9h7.1M690.8 553.9h2.6M695.3 553.9h4.8M702.0 553.9h7.1M713.3 553.9h2.6M717.7 553.9h16.0M737.9 553.9h2.6M742.4 553.9h4.8M753.6 553.9h2.6M762.6 553.9h2.6M625.8 556.1h2.6M634.8 556.1h2.6M655.0 556.1h2.6M659.4 556.1h11.6M672.9 556.1h4.8M679.6 556.1h16.0M699.8 556.1h2.6M706.5 556.1h7.1M717.7 556.1h4.8M724.5 556.1h2.6M733.4 556.1h9.3M744.6 556.1h2.6M751.4 556.1h9.3M762.6 556.1h4.8M771.6 556.1h2.2M643.7 558.3h2.6M648.2 558.3h2.6M655.0 558.3h2.6M659.4 558.3h2.6M663.9 558.3h2.6M668.4 558.3h2.6M677.4 558.3h9.3M688.6 558.3h4.8M695.3 558.3h2.6M702.0 558.3h2.6M706.5 558.3h4.8M715.5 558.3h4.8M724.5 558.3h2.6M729.0 558.3h2.6M733.4 558.3h7.1M744.6 558.3h7.1M753.6 558.3h2.6M760.3 558.3h7.1M771.6 558.3h2.2M637.0 560.6h4.8M643.7 560.6h2.6M648.2 560.6h2.6M652.7 560.6h4.8M666.2 560.6h4.8M672.9 560.6h9.3M690.8 560.6h4.8M702.0 560.6h2.6M706.5 560.6h2.6M711.0 560.6h7.1M720.0 560.6h2.6M724.5 560.6h2.6M729.0 560.6h9.3M740.2 560.6h2.6M744.6 560.6h7.1M753.6 560.6h4.8M760.3 560.6h9.3M771.6 560.6h2.2M632.5 562.8h2.6M637.0 562.8h2.6M643.7 562.8h2.6M648.2 562.8h2.6M655.0 562.8h7.1M666.2 562.8h4.8M672.9 562.8h4.8M681.9 562.8h2.6M686.3 562.8h2.6M695.3 562.8h2.6M699.8 562.8h2.6M706.5 562.8h4.8M715.5 562.8h11.6M729.0 562.8h2.6M733.4 562.8h2.6M737.9 562.8h2.6M742.4 562.8h2.6M746.9 562.8h2.6M753.6 562.8h4.8M760.3 562.8h2.6M764.8 562.8h4.8M625.8 565.0h4.8M637.0 565.0h4.8M648.2 565.0h2.6M652.7 565.0h2.6M659.4 565.0h7.1M668.4 565.0h4.8M699.8 565.0h2.6M704.3 565.0h4.8M717.7 565.0h2.6M724.5 565.0h2.6M733.4 565.0h2.6M742.4 565.0h7.1M751.4 565.0h2.6M760.3 565.0h7.1M769.3 565.0h2.6M632.5 567.3h4.8M641.5 567.3h2.6M648.2 567.3h2.6M652.7 567.3h11.6M668.4 567.3h7.1M708.8 567.3h2.6M715.5 567.3h9.3M726.7 567.3h2.6M731.2 567.3h4.8M742.4 567.3h2.6M746.9 567.3h2.6M751.4 567.3h7.1M762.6 567.3h4.8M628.0 569.5h2.6M632.5 569.5h11.6M646.0 569.5h4.8M652.7 569.5h7.1M663.9 569.5h2.6M668.4 569.5h4.8M711.0 569.5h11.6M724.5 569.5h2.6M729.0 569.5h4.8M737.9 569.5h11.6M751.4 569.5h2.6M762.6 569.5h4.8M769.3 569.5h2.6M628.0 571.8h2.6M632.5 571.8h4.8M639.3 571.8h20.5M708.8 571.8h9.3M720.0 571.8h7.1M729.0 571.8h4.8M735.7 571.8h4.8M744.6 571.8h2.6M749.1 571.8h2.6M753.6 571.8h4.8M762.6 571.8h11.2M625.8 574.0h11.6M639.3 574.0h2.6M646.0 574.0h4.8M652.7 574.0h4.8M661.7 574.0h4.8M713.3 574.0h2.6M717.7 574.0h4.8M724.5 574.0h13.8M742.4 574.0h2.6M746.9 574.0h2.6M753.6 574.0h4.8M760.3 574.0h2.6M764.8 574.0h2.6M769.3 574.0h2.6M625.8 576.2h9.3M639.3 576.2h2.6M643.7 576.2h7.1M657.2 576.2h4.8M666.2 576.2h2.6M713.3 576.2h7.1M726.7 576.2h11.6M740.2 576.2h2.6M749.1 576.2h4.8M755.9 576.2h2.6M760.3 576.2h9.3M630.3 578.5h2.6M641.5 578.5h2.6M648.2 578.5h11.6M661.7 578.5h4.8M717.7 578.5h2.6M722.2 578.5h2.6M726.7 578.5h4.8M733.4 578.5h2.6M742.4 578.5h2.6M746.9 578.5h2.6M751.4 578.5h9.3M762.6 578.5h2.6M769.3 578.5h4.5M625.8 580.7h2.6M630.3 580.7h2.6M634.8 580.7h4.8M643.7 580.7h7.1M655.0 580.7h2.6M659.4 580.7h7.1M715.5 580.7h4.8M722.2 580.7h9.3M735.7 580.7h2.6M740.2 580.7h2.6M744.6 580.7h2.6M751.4 580.7h4.8M758.1 580.7h7.1M767.1 580.7h2.6M628.0 583.0h4.8M634.8 583.0h2.6M639.3 583.0h2.6M643.7 583.0h11.6M659.4 583.0h2.6M720.0 583.0h2.6M724.5 583.0h7.1M733.4 583.0h4.8M744.6 583.0h2.6M751.4 583.0h7.1M760.3 583.0h4.8M769.3 583.0h2.6M625.8 585.2h7.1M634.8 585.2h4.8M646.0 585.2h4.8M652.7 585.2h2.6M657.2 585.2h4.8M715.5 585.2h2.6M722.2 585.2h9.3M746.9 585.2h16.0M764.8 585.2h2.6M769.3 585.2h2.6M630.3 587.4h2.6M634.8 587.4h7.1M643.7 587.4h2.6M650.5 587.4h7.1M659.4 587.4h4.8M715.5 587.4h2.6M722.2 587.4h4.8M751.4 587.4h2.6M755.9 587.4h11.6M771.6 587.4h2.2M632.5 589.7h7.1M643.7 589.7h2.6M648.2 589.7h2.6M663.9 589.7h2.6M717.7 589.7h4.8M724.5 589.7h2.6M744.6 589.7h2.6M749.1 589.7h4.8M755.9 589.7h4.8M762.6 589.7h9.3M634.8 591.9h11.6M652.7 591.9h7.1M715.5 591.9h2.6M726.7 591.9h2.6M746.9 591.9h2.6M751.4 591.9h2.6M758.1 591.9h7.1M769.3 591.9h2.6M632.5 594.1h4.8M639.3 594.1h2.6M643.7 594.1h2.6M648.2 594.1h2.6M652.7 594.1h4.8M663.9 594.1h2.6M717.7 594.1h2.6M729.0 594.1h4.8M753.6 594.1h2.6M758.1 594.1h2.6M764.8 594.1h2.6M769.3 594.1h2.6M625.8 596.4h2.6M630.3 596.4h4.8M639.3 596.4h2.6M643.7 596.4h2.6M648.2 596.4h2.6M652.7 596.4h2.6M657.2 596.4h2.6M663.9 596.4h2.6M717.7 596.4h4.8M724.5 596.4h4.8M731.2 596.4h4.8M749.1 596.4h9.3M762.6 596.4h4.8M769.3 596.4h4.5M630.3 598.6h2.6M643.7 598.6h2.6M652.7 598.6h2.6M657.2 598.6h4.8M715.5 598.6h2.6M724.5 598.6h2.6M742.4 598.6h2.6M746.9 598.6h9.3M758.1 598.6h2.6M762.6 598.6h7.1M639.3 600.9h11.6M652.7 600.9h7.1M661.7 600.9h4.8M717.7 600.9h9.3M735.7 600.9h7.1M744.6 600.9h16.0M762.6 600.9h9.3M625.8 603.1h2.6M637.0 603.1h7.1M646.0 603.1h4.8M652.7 603.1h2.6M659.4 603.1h9.3M720.0 603.1h4.8M726.7 603.1h4.8M753.6 603.1h2.6M758.1 603.1h2.6M762.6 603.1h4.8M769.3 603.1h4.5M628.0 605.3h2.6M637.0 605.3h2.6M641.5 605.3h4.8M652.7 605.3h7.1M668.4 605.3h2.6M717.7 605.3h25.0M746.9 605.3h2.6M755.9 605.3h7.1M625.8 607.6h2.6M630.3 607.6h4.8M637.0 607.6h4.8M643.7 607.6h4.8M650.5 607.6h2.6M655.0 607.6h2.6M661.7 607.6h2.6M670.6 607.6h2.6M708.8 607.6h2.6M713.3 607.6h9.3M724.5 607.6h2.6M729.0 607.6h2.6M733.4 607.6h11.6M746.9 607.6h2.6M751.4 607.6h4.8M760.3 607.6h11.6M630.3 609.8h4.8M639.3 609.8h2.6M648.2 609.8h2.6M652.7 609.8h2.6M657.2 609.8h2.6M661.7 609.8h4.8M713.3 609.8h2.6M717.7 609.8h2.6M722.2 609.8h4.8M729.0 609.8h2.6M742.4 609.8h2.6M746.9 609.8h2.6M751.4 609.8h2.6M755.9 609.8h2.6M760.3 609.8h2.6M767.1 609.8h2.6M625.8 612.0h9.3M637.0 612.0h2.6M643.7 612.0h7.1M655.0 612.0h9.3M666.2 612.0h4.8M675.1 612.0h2.6M706.5 612.0h4.8M713.3 612.0h4.8M722.2 612.0h2.6M726.7 612.0h7.1M737.9 612.0h2.6M742.4 612.0h9.3M753.6 612.0h2.6M760.3 612.0h2.6M764.8 612.0h4.8M771.6 612.0h2.2M634.8 614.3h2.6M639.3 614.3h7.1M650.5 614.3h2.6M657.2 614.3h7.1M666.2 614.3h9.3M677.4 614.3h2.6M699.8 614.3h4.8M711.0 614.3h2.6M717.7 614.3h2.6M724.5 614.3h4.8M731.2 614.3h2.6M735.7 614.3h2.6M740.2 614.3h7.1M751.4 614.3h4.8M762.6 614.3h4.8M769.3 614.3h2.6M628.0 616.5h2.6M632.5 616.5h4.8M639.3 616.5h2.6M646.0 616.5h7.1M657.2 616.5h2.6M666.2 616.5h2.6M670.6 616.5h2.6M675.1 616.5h9.3M688.6 616.5h2.6M699.8 616.5h2.6M704.3 616.5h4.8M715.5 616.5h2.6M724.5 616.5h18.3M744.6 616.5h2.6M751.4 616.5h4.8M760.3 616.5h4.8M769.3 616.5h4.5M628.0 618.8h7.1M637.0 618.8h4.8M643.7 618.8h2.6M650.5 618.8h2.6M655.0 618.8h2.6M659.4 618.8h2.6M663.9 618.8h2.6M668.4 618.8h16.0M686.3 618.8h9.3M699.8 618.8h7.1M713.3 618.8h2.6M717.7 618.8h7.1M729.0 618.8h2.6M737.9 618.8h2.6M746.9 618.8h4.8M755.9 618.8h2.6M762.6 618.8h7.1M630.3 621.0h2.6M637.0 621.0h4.8M646.0 621.0h7.1M661.7 621.0h4.8M668.4 621.0h2.6M677.4 621.0h4.8M686.3 621.0h4.8M697.6 621.0h7.1M706.5 621.0h2.6M711.0 621.0h4.8M717.7 621.0h4.8M726.7 621.0h4.8M737.9 621.0h2.6M742.4 621.0h2.6M746.9 621.0h7.1M762.6 621.0h2.6M767.1 621.0h4.8M628.0 623.2h2.6M637.0 623.2h2.6M643.7 623.2h7.1M655.0 623.2h2.6M668.4 623.2h4.8M679.6 623.2h2.6M684.1 623.2h2.6M693.1 623.2h9.3M704.3 623.2h7.1M713.3 623.2h4.8M724.5 623.2h2.6M729.0 623.2h13.8M751.4 623.2h2.6M758.1 623.2h7.1M767.1 623.2h2.6M628.0 625.5h20.5M652.7 625.5h2.6M657.2 625.5h4.8M663.9 625.5h16.0M681.9 625.5h4.8M688.6 625.5h4.8M702.0 625.5h4.8M708.8 625.5h7.1M722.2 625.5h4.8M733.4 625.5h2.6M737.9 625.5h2.6M744.6 625.5h2.6M749.1 625.5h2.6M753.6 625.5h2.6M758.1 625.5h9.3M769.3 625.5h4.5M625.8 627.7h2.6M630.3 627.7h2.6M637.0 627.7h4.8M646.0 627.7h4.8M652.7 627.7h4.8M661.7 627.7h7.1M679.6 627.7h2.6M684.1 627.7h2.6M688.6 627.7h2.6M693.1 627.7h4.8M702.0 627.7h4.8M708.8 627.7h2.6M720.0 627.7h7.1M731.2 627.7h2.6M735.7 627.7h2.6M751.4 627.7h2.6M755.9 627.7h2.6M762.6 627.7h2.6M767.1 627.7h4.8M625.8 629.9h2.6M641.5 629.9h2.6M646.0 629.9h4.8M652.7 629.9h9.3M663.9 629.9h9.3M675.1 629.9h9.3M686.3 629.9h7.1M695.3 629.9h16.0M713.3 629.9h7.1M722.2 629.9h2.6M726.7 629.9h2.6M733.4 629.9h7.1M742.4 629.9h2.6M749.1 629.9h7.1M758.1 629.9h9.3M769.3 629.9h2.6M628.0 632.2h4.8M639.3 632.2h7.1M650.5 632.2h4.8M659.4 632.2h2.6M666.2 632.2h2.6M672.9 632.2h2.6M677.4 632.2h2.6M681.9 632.2h2.6M686.3 632.2h13.8M708.8 632.2h4.8M717.7 632.2h2.6M722.2 632.2h4.8M731.2 632.2h2.6M735.7 632.2h2.6M740.2 632.2h2.6M744.6 632.2h2.6M749.1 632.2h7.1M762.6 632.2h11.2M630.3 634.4h2.6M634.8 634.4h2.6M639.3 634.4h7.1M648.2 634.4h4.8M655.0 634.4h4.8M661.7 634.4h2.6M668.4 634.4h2.6M675.1 634.4h16.0M693.1 634.4h4.8M711.0 634.4h2.6M717.7 634.4h2.6M722.2 634.4h2.6M726.7 634.4h11.6M740.2 634.4h4.8M746.9 634.4h4.8M753.6 634.4h7.1M764.8 634.4h2.6M625.8 636.7h4.8M639.3 636.7h2.6M643.7 636.7h2.6M648.2 636.7h4.8M655.0 636.7h7.1M668.4 636.7h7.1M677.4 636.7h2.6M681.9 636.7h2.6M686.3 636.7h4.8M693.1 636.7h11.6M711.0 636.7h2.6M715.5 636.7h7.1M724.5 636.7h2.6M733.4 636.7h4.8M740.2 636.7h2.6M744.6 636.7h11.6M758.1 636.7h2.6M767.1 636.7h2.6M771.6 636.7h2.2M625.8 638.9h2.6M630.3 638.9h2.6M637.0 638.9h7.1M646.0 638.9h4.8M652.7 638.9h7.1M661.7 638.9h2.6M668.4 638.9h2.6M672.9 638.9h7.1M681.9 638.9h2.6M686.3 638.9h2.6M690.8 638.9h13.8M711.0 638.9h2.6M715.5 638.9h2.6M720.0 638.9h2.6M724.5 638.9h2.6M733.4 638.9h2.6M737.9 638.9h2.6M742.4 638.9h2.6M749.1 638.9h2.6M758.1 638.9h2.6M767.1 638.9h2.6M771.6 638.9h2.2M625.8 641.1h2.6M632.5 641.1h2.6M646.0 641.1h25.0M675.1 641.1h2.6M686.3 641.1h2.6M690.8 641.1h2.6M695.3 641.1h4.8M704.3 641.1h11.6M720.0 641.1h4.8M726.7 641.1h4.8M742.4 641.1h2.6M746.9 641.1h2.6M751.4 641.1h2.6M755.9 641.1h9.3M767.1 641.1h2.6M771.6 641.1h2.2M625.8 643.4h2.6M630.3 643.4h2.6M637.0 643.4h7.1M650.5 643.4h9.3M661.7 643.4h22.8M686.3 643.4h2.6M690.8 643.4h2.6M695.3 643.4h4.8M702.0 643.4h4.8M711.0 643.4h2.6M715.5 643.4h7.1M724.5 643.4h2.6M729.0 643.4h2.6M740.2 643.4h2.6M751.4 643.4h2.6M755.9 643.4h2.6M760.3 643.4h2.6M764.8 643.4h4.8M628.0 645.6h16.0M655.0 645.6h4.8M661.7 645.6h9.3M672.9 645.6h9.3M684.1 645.6h2.6M690.8 645.6h2.6M695.3 645.6h2.6M699.8 645.6h4.8M711.0 645.6h7.1M720.0 645.6h2.6M726.7 645.6h13.8M742.4 645.6h2.6M751.4 645.6h2.6M755.9 645.6h4.8M767.1 645.6h2.6M771.6 645.6h2.2M625.8 647.9h2.6M630.3 647.9h2.6M639.3 647.9h2.6M646.0 647.9h4.8M652.7 647.9h2.6M657.2 647.9h11.6M670.6 647.9h2.6M684.1 647.9h9.3M697.6 647.9h7.1M708.8 647.9h2.6M713.3 647.9h2.6M717.7 647.9h4.8M724.5 647.9h2.6M731.2 647.9h7.1M740.2 647.9h11.6M755.9 647.9h2.6M764.8 647.9h2.6M769.3 647.9h4.5M630.3 650.1h2.6M634.8 650.1h2.6M643.7 650.1h2.6M650.5 650.1h7.1M659.4 650.1h2.6M663.9 650.1h2.6M668.4 650.1h2.6M684.1 650.1h2.6M688.6 650.1h4.8M695.3 650.1h4.8M706.5 650.1h2.6M715.5 650.1h2.6M722.2 650.1h4.8M729.0 650.1h4.8M735.7 650.1h2.6M740.2 650.1h2.6M755.9 650.1h13.8M625.8 652.3h2.6M639.3 652.3h9.3M652.7 652.3h2.6M657.2 652.3h11.6M670.6 652.3h2.6M675.1 652.3h4.8M681.9 652.3h2.6M690.8 652.3h2.6M702.0 652.3h2.6M711.0 652.3h2.6M715.5 652.3h4.8M724.5 652.3h7.1M735.7 652.3h2.6M746.9 652.3h2.6M751.4 652.3h7.1M760.3 652.3h2.6M767.1 652.3h2.6M628.0 654.6h4.8M634.8 654.6h11.6M650.5 654.6h7.1M659.4 654.6h2.6M666.2 654.6h2.6M670.6 654.6h7.1M681.9 654.6h2.6M688.6 654.6h2.6M702.0 654.6h2.6M706.5 654.6h9.3M722.2 654.6h9.3M733.4 654.6h9.3M744.6 654.6h4.8M751.4 654.6h2.6M758.1 654.6h2.6M762.6 654.6h2.6M769.3 654.6h4.5M637.0 656.8h2.6M672.9 656.8h2.6M681.9 656.8h2.6M690.8 656.8h7.1M699.8 656.8h2.6M704.3 656.8h7.1M713.3 656.8h2.6M717.7 656.8h2.6M726.7 656.8h4.8M735.7 656.8h11.6M749.1 656.8h2.6M758.1 656.8h4.8M764.8 656.8h9.0M634.8 659.0h2.6M639.3 659.0h7.1M648.2 659.0h13.8M666.2 659.0h7.1M677.4 659.0h2.6M690.8 659.0h7.1M702.0 659.0h4.8M708.8 659.0h4.8M715.5 659.0h2.6M722.2 659.0h2.6M735.7 659.0h9.3M746.9 659.0h16.0M764.8 659.0h2.6M771.6 659.0h2.2M628.0 661.3h4.8M637.0 661.3h4.8M643.7 661.3h4.8M655.0 661.3h2.6M659.4 661.3h9.3M675.1 661.3h4.8M684.1 661.3h4.8M690.8 661.3h7.1M699.8 661.3h7.1M708.8 661.3h2.6M713.3 661.3h7.1M722.2 661.3h9.3M737.9 661.3h11.6M753.6 661.3h2.6M760.3 661.3h4.8M769.3 661.3h2.6M628.0 663.5h9.3M641.5 663.5h7.1M650.5 663.5h9.3M661.7 663.5h4.8M668.4 663.5h2.6M672.9 663.5h9.3M688.6 663.5h2.6M695.3 663.5h7.1M708.8 663.5h2.6M713.3 663.5h2.6M720.0 663.5h7.1M729.0 663.5h7.1M740.2 663.5h4.8M746.9 663.5h2.6M751.4 663.5h2.6M758.1 663.5h13.8M628.0 665.8h2.6M634.8 665.8h4.8M641.5 665.8h2.6M646.0 665.8h2.6M652.7 665.8h7.1M661.7 665.8h2.6M670.6 665.8h4.8M679.6 665.8h2.6M686.3 665.8h4.8M695.3 665.8h2.6M708.8 665.8h2.6M713.3 665.8h2.6M717.7 665.8h2.6M729.0 665.8h4.8M735.7 665.8h7.1M749.1 665.8h2.6M758.1 665.8h2.6M762.6 665.8h9.3M625.8 668.0h2.6M632.5 668.0h7.1M643.7 668.0h7.1M652.7 668.0h13.8M670.6 668.0h7.1M679.6 668.0h2.6M690.8 668.0h2.6M695.3 668.0h4.8M706.5 668.0h7.1M720.0 668.0h7.1M737.9 668.0h4.8M744.6 668.0h2.6M753.6 668.0h2.6M762.6 668.0h4.8M769.3 668.0h2.6M625.8 670.2h9.3M637.0 670.2h4.8M643.7 670.2h2.6M648.2 670.2h2.6M652.7 670.2h2.6M657.2 670.2h4.8M663.9 670.2h7.1M672.9 670.2h4.8M681.9 670.2h2.6M688.6 670.2h9.3M702.0 670.2h2.6M706.5 670.2h2.6M711.0 670.2h7.1M720.0 670.2h2.6M724.5 670.2h2.6M729.0 670.2h2.6M733.4 670.2h2.6M740.2 670.2h2.6M746.9 670.2h2.6M751.4 670.2h7.1M760.3 670.2h2.6M630.3 672.5h4.8M639.3 672.5h2.6M646.0 672.5h2.6M650.5 672.5h2.6M659.4 672.5h7.1M670.6 672.5h2.6M675.1 672.5h2.6M684.1 672.5h7.1M693.1 672.5h2.6M697.6 672.5h2.6M711.0 672.5h2.6M715.5 672.5h9.3M726.7 672.5h2.6M731.2 672.5h2.6M740.2 672.5h4.8M746.9 672.5h2.6M753.6 672.5h2.6M758.1 672.5h2.6M625.8 674.7h2.6M637.0 674.7h2.6M643.7 674.7h2.6M648.2 674.7h2.6M652.7 674.7h2.6M659.4 674.7h4.8M666.2 674.7h2.6M670.6 674.7h2.6M677.4 674.7h20.5M702.0 674.7h11.6M717.7 674.7h9.3M729.0 674.7h7.1M737.9 674.7h11.6M751.4 674.7h2.6M755.9 674.7h4.8M625.8 676.9h11.6M643.7 676.9h4.8M650.5 676.9h7.1M668.4 676.9h2.6M677.4 676.9h4.8M686.3 676.9h2.6M690.8 676.9h4.8M697.6 676.9h7.1M706.5 676.9h4.8M720.0 676.9h7.1M735.7 676.9h2.6M740.2 676.9h2.6M744.6 676.9h4.8M751.4 676.9h2.6M630.3 679.2h4.8M637.0 679.2h2.6M641.5 679.2h7.1M650.5 679.2h2.6M655.0 679.2h2.6M659.4 679.2h2.6M663.9 679.2h4.8M670.6 679.2h7.1M679.6 679.2h7.1M688.6 679.2h2.6M693.1 679.2h4.8M699.8 679.2h2.6M706.5 679.2h2.6M713.3 679.2h2.6M731.2 679.2h2.6M740.2 679.2h4.8M746.9 679.2h16.0" stroke="#d8d8d8" stroke-width="2.59" shape-rendering="crispEdges"/>
<path d="M628.0 533.7h9.3M646.0 533.7h2.6M659.4 533.7h7.1M668.4 533.7h4.8M688.6 533.7h2.6M693.1 533.7h2.6M713.3 533.7h2.6M720.0 533.7h2.6M726.7 533.7h2.6M742.4 533.7h2.6M746.9 533.7h11.6M764.8 533.7h2.6M641.5 536.0h4.8M648.2 536.0h2.6M657.2 536.0h11.6M675.1 536.0h2.6M679.6 536.0h2.6M688.6 536.0h2.6M693.1 536.0h2.6M726.7 536.0h2.6M735.7 536.0h7.1M746.9 536.0h4.8M625.8 538.2h2.6M650.5 538.2h2.6M666.2 538.2h2.6M672.9 538.2h2.6M681.9 538.2h2.6M731.2 538.2h2.6M740.2 538.2h2.6M751.4 538.2h4.8M758.1 538.2h4.8M771.6 538.2h2.2M634.8 540.4h2.6M661.7 540.4h4.8M677.4 540.4h2.6M690.8 540.4h2.6M697.6 540.4h2.6M733.4 540.4h4.8M746.9 540.4h4.8M753.6 540.4h7.1M767.1 540.4h2.6M771.6 540.4h2.2M632.5 542.7h4.8M661.7 542.7h7.1M681.9 542.7h2.6M697.6 542.7h2.6M713.3 542.7h2.6M717.7 542.7h2.6M729.0 542.7h4.8M744.6 542.7h7.1M762.6 542.7h2.6M767.1 542.7h2.6M771.6 542.7h2.2M625.8 544.9h2.6M655.0 544.9h4.8M672.9 544.9h4.8M679.6 544.9h2.6M684.1 544.9h2.6M690.8 544.9h2.6M695.3 544.9h2.6M715.5 544.9h2.6M720.0 544.9h4.8M726.7 544.9h4.8M749.1 544.9h2.6M767.1 544.9h4.8M628.0 547.1h2.6M641.5 547.1h2.6M659.4 547.1h2.6M670.6 547.1h2.6M695.3 547.1h2.6M706.5 547.1h2.6M713.3 547.1h2.6M729.0 547.1h2.6M751.4 547.1h4.8M767.1 547.1h2.6M659.4 549.4h2.6M672.9 549.4h4.8M686.3 549.4h4.8M697.6 549.4h2.6M702.0 549.4h2.6M713.3 549.4h2.6M729.0 549.4h2.6M742.4 549.4h2.6M746.9 549.4h2.6M755.9 549.4h2.6M762.6 549.4h4.8M769.3 549.4h2.6M650.5 551.6h2.6M661.7 551.6h4.8M668.4 551.6h2.6M675.1 551.6h2.6M686.3 551.6h2.6M695.3 551.6h2.6M699.8 551.6h2.6M720.0 551.6h2.6M731.2 551.6h2.6M648.2 553.9h4.8M670.6 553.9h2.6M675.1 553.9h4.8M686.3 553.9h2.6M715.5 553.9h2.6M740.2 553.9h2.6M746.9 553.9h2.6M758.1 553.9h4.8M764.8 553.9h2.6M771.6 553.9h2.2M650.5 556.1h4.8M677.4 556.1h2.6M695.3 556.1h4.8M702.0 556.1h4.8M722.2 556.1h2.6M726.7 556.1h7.1M760.3 556.1h2.6M769.3 556.1h2.6M652.7 558.3h2.6M657.2 558.3h2.6M661.7 558.3h2.6M670.6 558.3h2.6M686.3 558.3h2.6M699.8 558.3h2.6M711.0 558.3h2.6M720.0 558.3h2.6M726.7 558.3h2.6M742.4 558.3h2.6M755.9 558.3h2.6M767.1 558.3h4.8M659.4 560.6h4.8M670.6 560.6h2.6M708.8 560.6h2.6M722.2 560.6h2.6M726.7 560.6h2.6M742.4 560.6h2.6M751.4 560.6h2.6M758.1 560.6h2.6M641.5 562.8h2.6M650.5 562.8h2.6M661.7 562.8h4.8M670.6 562.8h2.6M704.3 562.8h2.6M731.2 562.8h2.6M740.2 562.8h2.6M744.6 562.8h2.6M749.1 562.8h2.6M758.1 562.8h2.6M762.6 562.8h2.6M769.3 562.8h4.5M632.5 565.0h2.6M650.5 565.0h2.6M655.0 565.0h2.6M708.8 565.0h9.3M726.7 565.0h2.6M735.7 565.0h7.1M753.6 565.0h7.1M771.6 565.0h2.2M643.7 567.3h2.6M650.5 567.3h2.6M663.9 567.3h2.6M711.0 567.3h4.8M729.0 567.3h2.6M740.2 567.3h2.6M744.6 567.3h2.6M749.1 567.3h2.6M758.1 567.3h4.8M769.3 567.3h4.5M650.5 569.5h2.6M661.7 569.5h2.6M722.2 569.5h2.6M726.7 569.5h2.6M753.6 569.5h2.6M758.1 569.5h4.8M767.1 569.5h2.6M637.0 571.8h2.6M659.4 571.8h2.6M717.7 571.8h2.6M746.9 571.8h2.6M760.3 571.8h2.6M643.7 574.0h2.6M722.2 574.0h2.6M737.9 574.0h4.8M744.6 574.0h2.6M751.4 574.0h2.6M762.6 574.0h2.6M771.6 574.0h2.2M641.5 576.2h2.6M650.5 576.2h4.8M663.9 576.2h2.6M720.0 576.2h2.6M724.5 576.2h2.6M744.6 576.2h2.6M753.6 576.2h2.6M758.1 576.2h2.6M769.3 576.2h4.5M625.8 578.5h2.6M643.7 578.5h4.8M720.0 578.5h2.6M735.7 578.5h2.6M749.1 578.5h2.6M764.8 578.5h2.6M632.5 580.7h2.6M639.3 580.7h2.6M657.2 580.7h2.6M720.0 580.7h2.6M733.4 580.7h2.6M769.3 580.7h2.6M641.5 583.0h2.6M657.2 583.0h2.6M661.7 583.0h2.6M764.8 583.0h2.6M771.6 583.0h2.2M639.3 585.2h7.1M717.7 585.2h2.6M731.2 585.2h2.6M762.6 585.2h2.6M767.1 585.2h2.6M625.8 587.4h2.6M646.0 587.4h4.8M657.2 587.4h2.6M720.0 587.4h2.6M749.1 587.4h2.6M767.1 587.4h2.6M625.8 589.7h2.6M639.3 589.7h2.6M650.5 589.7h2.6M655.0 589.7h2.6M753.6 589.7h2.6M760.3 589.7h2.6M625.8 591.9h4.8M632.5 591.9h2.6M646.0 591.9h4.8M755.9 591.9h2.6M764.8 591.9h2.6M625.8 594.1h2.6M630.3 594.1h2.6M637.0 594.1h2.6M641.5 594.1h2.6M650.5 594.1h2.6M659.4 594.1h2.6M724.5 594.1h2.6M755.9 594.1h2.6M760.3 594.1h4.8M771.6 594.1h2.2M628.0 596.4h2.6M634.8 596.4h4.8M641.5 596.4h2.6M650.5 596.4h2.6M655.0 596.4h2.6M659.4 596.4h2.6M760.3 596.4h2.6M767.1 596.4h2.6M625.8 598.6h4.8M632.5 598.6h2.6M641.5 598.6h2.6M720.0 598.6h4.8M726.7 598.6h2.6M755.9 598.6h2.6M771.6 598.6h2.2M628.0 600.9h2.6M634.8 600.9h4.8M650.5 600.9h2.6M726.7 600.9h2.6M760.3 600.9h2.6M771.6 600.9h2.2M630.3 603.1h7.1M650.5 603.1h2.6M655.0 603.1h2.6M740.2 603.1h2.6M744.6 603.1h2.6M751.4 603.1h2.6M755.9 603.1h2.6M760.3 603.1h2.6M767.1 603.1h2.6M625.8 605.3h2.6M632.5 605.3h4.8M646.0 605.3h2.6M659.4 605.3h2.6M742.4 605.3h4.8M749.1 605.3h7.1M762.6 605.3h11.2M634.8 607.6h2.6M648.2 607.6h2.6M652.7 607.6h2.6M659.4 607.6h2.6M663.9 607.6h2.6M711.0 607.6h2.6M722.2 607.6h2.6M726.7 607.6h2.6M731.2 607.6h2.6M744.6 607.6h2.6M749.1 607.6h2.6M758.1 607.6h2.6M771.6 607.6h2.2M625.8 609.8h4.8M641.5 609.8h4.8M650.5 609.8h2.6M659.4 609.8h2.6M666.2 609.8h4.8M731.2 609.8h2.6M735.7 609.8h7.1M744.6 609.8h2.6M749.1 609.8h2.6M753.6 609.8h2.6M758.1 609.8h2.6M769.3 609.8h2.6M634.8 612.0h2.6M641.5 612.0h2.6M650.5 612.0h4.8M711.0 612.0h2.6M720.0 612.0h2.6M724.5 612.0h2.6M733.4 612.0h2.6M740.2 612.0h2.6M751.4 612.0h2.6M758.1 612.0h2.6M762.6 612.0h2.6M628.0 614.3h2.6M632.5 614.3h2.6M652.7 614.3h2.6M663.9 614.3h2.6M706.5 614.3h2.6M713.3 614.3h4.8M729.0 614.3h2.6M746.9 614.3h4.8M755.9 614.3h4.8M625.8 616.5h2.6M637.0 616.5h2.6M641.5 616.5h4.8M652.7 616.5h2.6M661.7 616.5h2.6M708.8 616.5h7.1M717.7 616.5h4.8M749.1 616.5h2.6M755.9 616.5h4.8M764.8 616.5h4.8M648.2 618.8h2.6M652.7 618.8h2.6M657.2 618.8h2.6M661.7 618.8h2.6M666.2 618.8h2.6M697.6 618.8h2.6M706.5 618.8h2.6M724.5 618.8h2.6M731.2 618.8h4.8M740.2 618.8h2.6M744.6 618.8h2.6M758.1 618.8h4.8M632.5 621.0h4.8M652.7 621.0h7.1M670.6 621.0h7.1M690.8 621.0h2.6M708.8 621.0h2.6M715.5 621.0h2.6M722.2 621.0h2.6M731.2 621.0h2.6M735.7 621.0h2.6M758.1 621.0h4.8M764.8 621.0h2.6M625.8 623.2h2.6M630.3 623.2h2.6M650.5 623.2h4.8M657.2 623.2h7.1M666.2 623.2h2.6M672.9 623.2h2.6M677.4 623.2h2.6M681.9 623.2h2.6M686.3 623.2h4.8M711.0 623.2h2.6M717.7 623.2h4.8M742.4 623.2h4.8M749.1 623.2h2.6M769.3 623.2h2.6M648.2 625.5h2.6M661.7 625.5h2.6M686.3 625.5h2.6M693.1 625.5h9.3M706.5 625.5h2.6M715.5 625.5h4.8M729.0 625.5h4.8M735.7 625.5h2.6M740.2 625.5h4.8M746.9 625.5h2.6M751.4 625.5h2.6M755.9 625.5h2.6M767.1 625.5h2.6M650.5 627.7h2.6M657.2 627.7h4.8M668.4 627.7h2.6M675.1 627.7h2.6M681.9 627.7h2.6M686.3 627.7h2.6M697.6 627.7h2.6M706.5 627.7h2.6M713.3 627.7h7.1M737.9 627.7h2.6M742.4 627.7h2.6M746.9 627.7h2.6M753.6 627.7h2.6M764.8 627.7h2.6M632.5 629.9h9.3M684.1 629.9h2.6M711.0 629.9h2.6M720.0 629.9h2.6M724.5 629.9h2.6M731.2 629.9h2.6M740.2 629.9h2.6M744.6 629.9h2.6M755.9 629.9h2.6M625.8 632.2h2.6M634.8 632.2h4.8M646.0 632.2h2.6M655.0 632.2h2.6M663.9 632.2h2.6M668.4 632.2h4.8M679.6 632.2h2.6M699.8 632.2h4.8M706.5 632.2h2.6M713.3 632.2h4.8M720.0 632.2h2.6M729.0 632.2h2.6M733.4 632.2h2.6M737.9 632.2h2.6M742.4 632.2h2.6M746.9 632.2h2.6M755.9 632.2h2.6M625.8 634.4h4.8M632.5 634.4h2.6M652.7 634.4h2.6M663.9 634.4h2.6M670.6 634.4h4.8M697.6 634.4h2.6M708.8 634.4h2.6M713.3 634.4h2.6M751.4 634.4h2.6M760.3 634.4h4.8M767.1 634.4h2.6M771.6 634.4h2.2M630.3 636.7h4.8M637.0 636.7h2.6M641.5 636.7h2.6M646.0 636.7h2.6M663.9 636.7h2.6M675.1 636.7h2.6M684.1 636.7h2.6M690.8 636.7h2.6M706.5 636.7h4.8M731.2 636.7h2.6M737.9 636.7h2.6M742.4 636.7h2.6M755.9 636.7h2.6M764.8 636.7h2.6M628.0 638.9h2.6M634.8 638.9h2.6M643.7 638.9h2.6M650.5 638.9h2.6M663.9 638.9h4.8M679.6 638.9h2.6M684.1 638.9h2.6M688.6 638.9h2.6M704.3 638.9h2.6M708.8 638.9h2.6M722.2 638.9h2.6M726.7 638.9h2.6M735.7 638.9h2.6M744.6 638.9h2.6M751.4 638.9h7.1M769.3 638.9h2.6M628.0 641.1h2.6M634.8 641.1h4.8M641.5 641.1h2.6M677.4 641.1h2.6M684.1 641.1h2.6M688.6 641.1h2.6M693.1 641.1h2.6M699.8 641.1h2.6M717.7 641.1h2.6M733.4 641.1h4.8M740.2 641.1h2.6M744.6 641.1h2.6M749.1 641.1h2.6M753.6 641.1h2.6M769.3 641.1h2.6M628.0 643.4h2.6M632.5 643.4h4.8M643.7 643.4h7.1M659.4 643.4h2.6M684.1 643.4h2.6M699.8 643.4h2.6M706.5 643.4h2.6M713.3 643.4h2.6M726.7 643.4h2.6M735.7 643.4h2.6M744.6 643.4h2.6M758.1 643.4h2.6M769.3 643.4h4.5M625.8 645.6h2.6M643.7 645.6h2.6M648.2 645.6h7.1M659.4 645.6h2.6M670.6 645.6h2.6M681.9 645.6h2.6M686.3 645.6h2.6M693.1 645.6h2.6M704.3 645.6h7.1M717.7 645.6h2.6M722.2 645.6h4.8M744.6 645.6h7.1M760.3 645.6h2.6M764.8 645.6h2.6M637.0 647.9h2.6M643.7 647.9h2.6M668.4 647.9h2.6M672.9 647.9h7.1M681.9 647.9h2.6M704.3 647.9h4.8M715.5 647.9h2.6M729.0 647.9h2.6M762.6 647.9h2.6M767.1 647.9h2.6M625.8 650.1h4.8M641.5 650.1h2.6M646.0 650.1h4.8M657.2 650.1h2.6M661.7 650.1h2.6M666.2 650.1h2.6M670.6 650.1h9.3M681.9 650.1h2.6M693.1 650.1h2.6M699.8 650.1h2.6M711.0 650.1h2.6M717.7 650.1h4.8M737.9 650.1h2.6M744.6 650.1h4.8M751.4 650.1h2.6M771.6 650.1h2.2M628.0 652.3h7.1M637.0 652.3h2.6M648.2 652.3h2.6M668.4 652.3h2.6M679.6 652.3h2.6M688.6 652.3h2.6M697.6 652.3h2.6M704.3 652.3h4.8M722.2 652.3h2.6M733.4 652.3h2.6M737.9 652.3h7.1M764.8 652.3h2.6M769.3 652.3h4.5M625.8 654.6h2.6M646.0 654.6h4.8M657.2 654.6h2.6M661.7 654.6h2.6M684.1 654.6h2.6M693.1 654.6h2.6M697.6 654.6h2.6M704.3 654.6h2.6M720.0 654.6h2.6M731.2 654.6h2.6M742.4 654.6h2.6M749.1 654.6h2.6M753.6 654.6h2.6M767.1 654.6h2.6M625.8 656.8h4.8M632.5 656.8h4.8M639.3 656.8h7.1M648.2 656.8h2.6M652.7 656.8h18.3M679.6 656.8h2.6M684.1 656.8h4.8M697.6 656.8h2.6M702.0 656.8h2.6M711.0 656.8h2.6M722.2 656.8h2.6M733.4 656.8h2.6M746.9 656.8h2.6M753.6 656.8h4.8M762.6 656.8h2.6M625.8 659.0h2.6M646.0 659.0h2.6M661.7 659.0h4.8M679.6 659.0h2.6M684.1 659.0h2.6M699.8 659.0h2.6M706.5 659.0h2.6M713.3 659.0h2.6M720.0 659.0h2.6M724.5 659.0h4.8M731.2 659.0h2.6M744.6 659.0h2.6M762.6 659.0h2.6M769.3 659.0h2.6M625.8 661.3h2.6M632.5 661.3h2.6M652.7 661.3h2.6M657.2 661.3h2.6M668.4 661.3h2.6M672.9 661.3h2.6M679.6 661.3h4.8M731.2 661.3h4.8M755.9 661.3h4.8M625.8 663.5h2.6M637.0 663.5h2.6M648.2 663.5h2.6M659.4 663.5h2.6M681.9 663.5h2.6M686.3 663.5h2.6M690.8 663.5h4.8M702.0 663.5h2.6M706.5 663.5h2.6M717.7 663.5h2.6M737.9 663.5h2.6M744.6 663.5h2.6M648.2 665.8h4.8M659.4 665.8h2.6M668.4 665.8h2.6M684.1 665.8h2.6M690.8 665.8h2.6M711.0 665.8h2.6M722.2 665.8h2.6M726.7 665.8h2.6M744.6 665.8h4.8M630.3 668.0h2.6M641.5 668.0h2.6M666.2 668.0h2.6M677.4 668.0h2.6M684.1 668.0h7.1M693.1 668.0h2.6M699.8 668.0h2.6M704.3 668.0h2.6M713.3 668.0h7.1M729.0 668.0h7.1M742.4 668.0h2.6M746.9 668.0h4.8M641.5 670.2h2.6M646.0 670.2h2.6M661.7 670.2h2.6M670.6 670.2h2.6M677.4 670.2h4.8M686.3 670.2h2.6M699.8 670.2h2.6M704.3 670.2h2.6M708.8 670.2h2.6M717.7 670.2h2.6M722.2 670.2h2.6M726.7 670.2h2.6M731.2 670.2h2.6M749.1 670.2h2.6M758.1 670.2h2.6M628.0 672.5h2.6M634.8 672.5h4.8M643.7 672.5h2.6M657.2 672.5h2.6M666.2 672.5h2.6M672.9 672.5h2.6M681.9 672.5h2.6M690.8 672.5h2.6M699.8 672.5h4.8M706.5 672.5h4.8M713.3 672.5h2.6M724.5 672.5h2.6M729.0 672.5h2.6M735.7 672.5h2.6M749.1 672.5h4.8M628.0 674.7h2.6M632.5 674.7h4.8M641.5 674.7h2.6M646.0 674.7h2.6M655.0 674.7h4.8M663.9 674.7h2.6M668.4 674.7h2.6M675.1 674.7h2.6M699.8 674.7h2.6M713.3 674.7h4.8M637.0 676.9h7.1M648.2 676.9h2.6M659.4 676.9h2.6M670.6 676.9h7.1M684.1 676.9h2.6M715.5 676.9h4.8M731.2 676.9h2.6M737.9 676.9h2.6M753.6 676.9h2.6M625.8 679.2h4.8M634.8 679.2h2.6M652.7 679.2h2.6M661.7 679.2h2.6M677.4 679.2h2.6M708.8 679.2h2.6M715.5 679.2h7.1M724.5 679.2h7.1M737.9 679.2h2.6" stroke="#ebebeb" stroke-width="2.59" shape-rendering="crispEdges"/>
<path d="M758.1 533.7h2.6M760.3 536.0h2.6M650.5 542.7h2.6M677.4 542.7h2.6M724.5 542.7h2.6M722.2 547.1h2.6M758.1 549.4h2.6M666.2 551.6h2.6M733.4 553.9h4.8M749.1 556.1h2.6M767.1 556.1h2.6M646.0 558.3h2.6M652.7 562.8h2.6M708.8 569.5h2.6M749.1 569.5h2.6M751.4 571.8h2.6M767.1 574.0h2.6M760.3 578.5h2.6M749.1 583.0h2.6M630.3 589.7h2.6M646.0 589.7h2.6M753.6 591.9h2.6M639.3 598.6h2.6M637.0 609.8h2.6M648.2 614.3h2.6M740.2 621.0h2.6M744.6 621.0h2.6M634.8 623.2h2.6M628.0 627.7h2.6M706.5 634.4h2.6M720.0 634.4h2.6M661.7 636.7h2.6M666.2 636.7h2.6M679.6 636.7h2.6M704.3 636.7h2.6M713.3 636.7h2.6M639.3 641.1h2.6M764.8 641.1h2.6M753.6 645.6h2.6M769.3 645.6h2.6M726.7 647.9h2.6M731.2 652.3h2.6M634.8 661.3h2.6M648.2 661.3h2.6M771.6 661.3h2.2M666.2 665.8h2.6M699.8 665.8h2.6M706.5 665.8h2.6M733.4 665.8h2.6M650.5 668.0h2.6M742.4 670.2h2.6M722.2 679.2h2.6M735.7 679.2h2.6" stroke="#ffffff" stroke-width="2.59" shape-rendering="crispEdges"/>
<circle cx="689.8" cy="588.8" r="18.5" fill="none" stroke="#f0c000" stroke-width="1.3"/>
<rect x="684.3" y="582.8" width="12.6" height="12.6" fill="none" stroke="#0000ff" stroke-width="1.2"/>
<rect x="650.8" y="557.3" width="97.8" height="97.8" fill="none" stroke="#ff0000" stroke-width="1.3"/>
<line x1="662.2" y1="606.2" x2="691.6" y2="606.2" stroke="#ff0000" stroke-width="1.4"/>
<line x1="707.9" y1="606.2" x2="737.2" y2="606.2" stroke="#ff0000" stroke-width="1.4"/>
<line x1="699.7" y1="568.7" x2="699.7" y2="598.1" stroke="#ff0000" stroke-width="1.4"/>
<line x1="699.7" y1="614.4" x2="699.7" y2="643.7" stroke="#ff0000" stroke-width="1.4"/>
<text x="699.7" y="548.1" class="s" text-anchor="middle" style="font-size:12px;fill:#ff0000;">N</text>
<text x="635.3" y="610.7" class="s" text-anchor="middle" style="font-size:12px;fill:#ff0000;">E</text>
<rect x="625.8" y="532.6" width="148.0" height="147.7" fill="none" stroke="#222" stroke-width="1.1"/>
<line x1="634.5" y1="680.3" x2="634.5" y2="683.8" stroke="#222" stroke-width="0.8"/>
<text x="634.5" y="697.8" class="s" text-anchor="middle" style="font-size:12.2px;">−4</text>
<line x1="622.3" y1="671.4" x2="625.8" y2="671.4" stroke="#222" stroke-width="0.8"/>
<text x="618.3" y="675.7" class="s" text-anchor="end" style="font-size:12.2px;">−4</text>
<line x1="667.1" y1="680.3" x2="667.1" y2="683.8" stroke="#222" stroke-width="0.8"/>
<text x="667.1" y="697.8" class="s" text-anchor="middle" style="font-size:12.2px;">−2</text>
<line x1="622.3" y1="638.8" x2="625.8" y2="638.8" stroke="#222" stroke-width="0.8"/>
<text x="618.3" y="643.1" class="s" text-anchor="end" style="font-size:12.2px;">−2</text>
<line x1="699.7" y1="680.3" x2="699.7" y2="683.8" stroke="#222" stroke-width="0.8"/>
<text x="699.7" y="697.8" class="s" text-anchor="middle" style="font-size:12.2px;">0</text>
<line x1="622.3" y1="606.2" x2="625.8" y2="606.2" stroke="#222" stroke-width="0.8"/>
<text x="618.3" y="610.5" class="s" text-anchor="end" style="font-size:12.2px;">0</text>
<line x1="732.3" y1="680.3" x2="732.3" y2="683.8" stroke="#222" stroke-width="0.8"/>
<text x="732.3" y="697.8" class="s" text-anchor="middle" style="font-size:12.2px;">2</text>
<line x1="622.3" y1="573.6" x2="625.8" y2="573.6" stroke="#222" stroke-width="0.8"/>
<text x="618.3" y="577.9" class="s" text-anchor="end" style="font-size:12.2px;">2</text>
<line x1="764.9" y1="680.3" x2="764.9" y2="683.8" stroke="#222" stroke-width="0.8"/>
<text x="764.9" y="697.8" class="s" text-anchor="middle" style="font-size:12.2px;">4</text>
<line x1="622.3" y1="541.0" x2="625.8" y2="541.0" stroke="#222" stroke-width="0.8"/>
<text x="618.3" y="545.3" class="s" text-anchor="end" style="font-size:12.2px;">4</text>
<text x="699.7" y="526.9" class="s" text-anchor="middle" style="font-size:13.9px;">HSC(26.2) r</text>
<text x="699.7" y="708.3" class="s" text-anchor="middle" style="font-size:11.8px;">m:18.9  re:1.1"  s:1.3"</text>
<text x="699.7" y="719.3" class="s" text-anchor="middle" style="font-size:11.8px;">EWr: 0, PLAE: 0.092</text>
</svg></body></html>
